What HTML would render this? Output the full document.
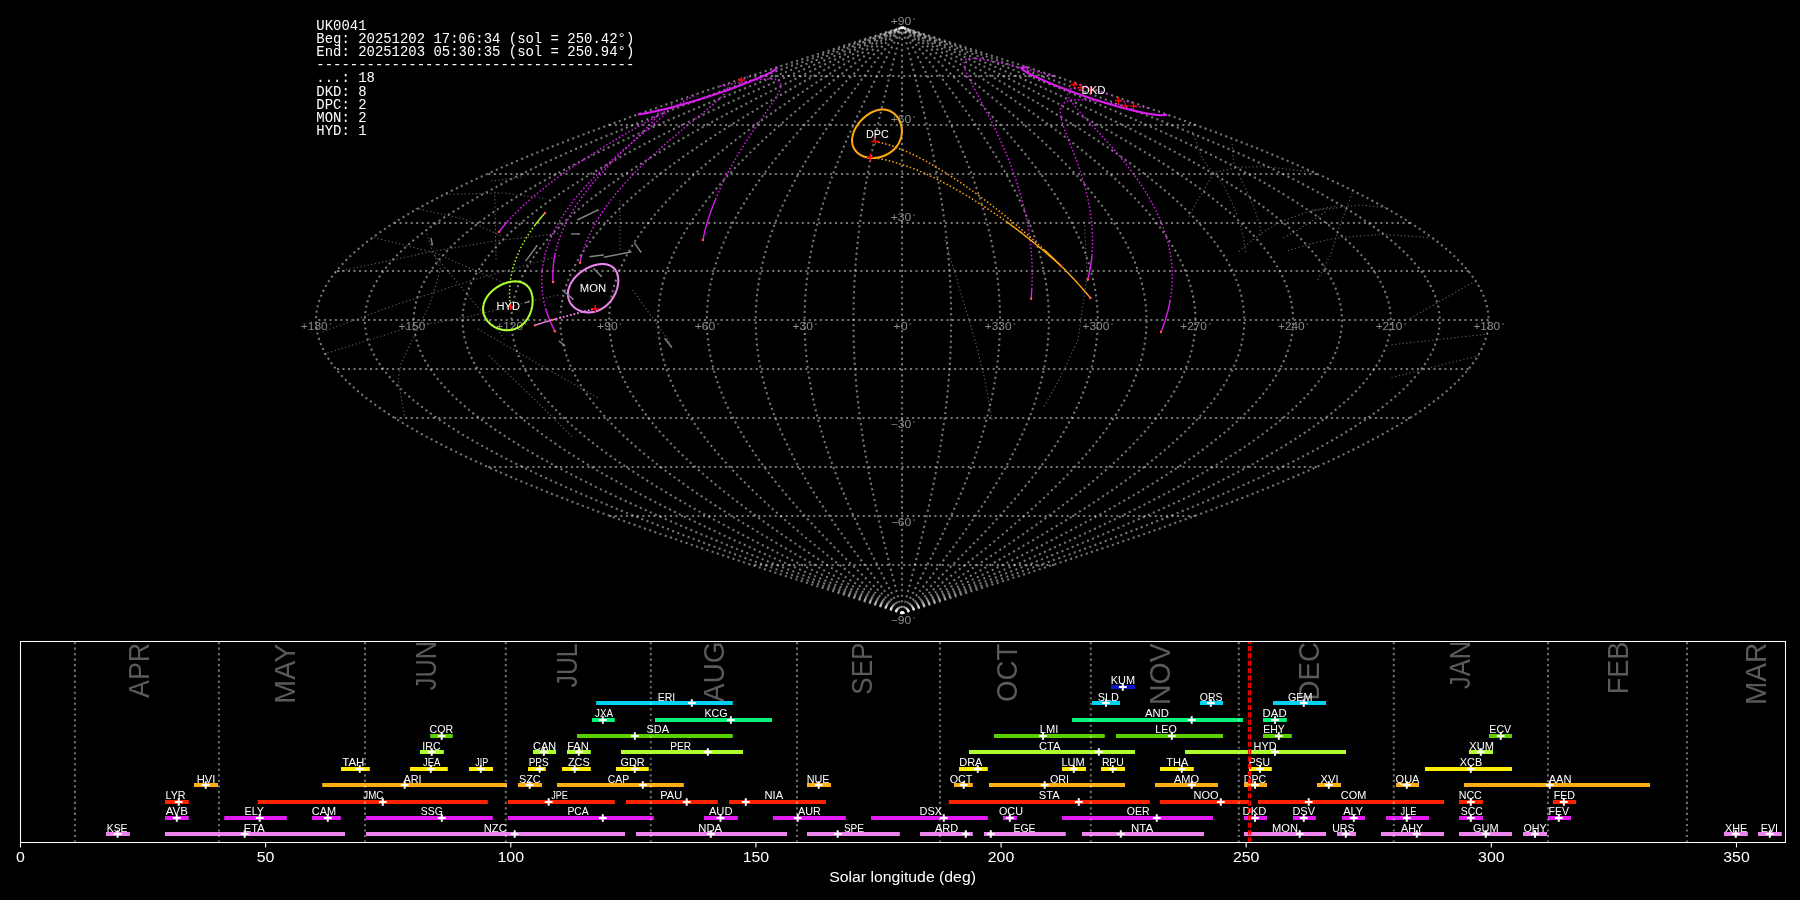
<!DOCTYPE html>
<html><head><meta charset="utf-8"><style>html,body{margin:0;padding:0;background:#000;overflow:hidden;width:1800px;height:900px}svg{display:block;will-change:transform}</style></head><body><svg width="1800" height="900" viewBox="0 0 1800 900"><g fill="none" stroke="#ffffff" stroke-opacity="0.46" stroke-width="2.08" stroke-dasharray="2.08 3.43">
<path d="M902.3 613.38 L907.42 611.75 L912.53 610.12 L917.65 608.49 L922.76 606.87 L927.87 605.24 L932.98 603.61 L938.09 601.98 L943.2 600.35 L948.3 598.72 L953.4 597.1 L958.49 595.47 L963.58 593.84 L968.67 592.21 L973.75 590.58 L978.82 588.95 L983.89 587.32 L988.95 585.7 L994.01 584.07 L999.06 582.44 L1004.1 580.81 L1009.14 579.18 L1014.16 577.55 L1019.18 575.92 L1024.19 574.3 L1029.19 572.67 L1034.18 571.04 L1039.16 569.41 L1044.13 567.78 L1049.09 566.15 L1054.04 564.52 L1058.97 562.9 L1063.9 561.27 L1068.81 559.64 L1073.71 558.01 L1078.59 556.38 L1083.46 554.75 L1088.32 553.13 L1093.17 551.5 L1098 549.87 L1102.81 548.24 L1107.61 546.61 L1112.4 544.98 L1117.17 543.35 L1121.92 541.73 L1126.65 540.1 L1131.37 538.47 L1136.07 536.84 L1140.75 535.21 L1145.42 533.58 L1150.06 531.96 L1154.69 530.33 L1159.3 528.7 L1163.89 527.07 L1168.46 525.44 L1173 523.81 L1177.53 522.18 L1182.04 520.56 L1186.52 518.93 L1190.99 517.3 L1195.43 515.67 L1199.85 514.04 L1204.25 512.41 L1208.62 510.78 L1212.97 509.16 L1217.3 507.53 L1221.6 505.9 L1225.88 504.27 L1230.13 502.64 L1234.36 501.01 L1238.56 499.38 L1242.74 497.76 L1246.89 496.13 L1251.02 494.5 L1255.12 492.87 L1259.19 491.24 L1263.24 489.61 L1267.26 487.99 L1271.25 486.36 L1275.21 484.73 L1279.14 483.1 L1283.05 481.47 L1286.92 479.84 L1290.77 478.21 L1294.58 476.59 L1298.37 474.96 L1302.13 473.33 L1305.85 471.7 L1309.55 470.07 L1313.22 468.44 L1316.85 466.81 L1320.45 465.19 L1324.02 463.56 L1327.56 461.93 L1331.06 460.3 L1334.54 458.67 L1337.98 457.04 L1341.38 455.42 L1344.76 453.79 L1348.1 452.16 L1351.4 450.53 L1354.67 448.9 L1357.91 447.27 L1361.11 445.64 L1364.28 444.02 L1367.41 442.39 L1370.51 440.76 L1373.57 439.13 L1376.59 437.5 L1379.58 435.87 L1382.54 434.25 L1385.45 432.62 L1388.33 430.99 L1391.17 429.36 L1393.98 427.73 L1396.75 426.1 L1399.48 424.47 L1402.17 422.85 L1404.82 421.22 L1407.44 419.59 L1410.02 417.96 L1412.55 416.33 L1415.05 414.7 L1417.52 413.07 L1419.94 411.45 L1422.32 409.82 L1424.66 408.19 L1426.96 406.56 L1429.23 404.93 L1431.45 403.3 L1433.63 401.68 L1435.77 400.05 L1437.88 398.42 L1439.94 396.79 L1441.96 395.16 L1443.93 393.53 L1445.87 391.9 L1447.77 390.28 L1449.62 388.65 L1451.43 387.02 L1453.2 385.39 L1454.93 383.76 L1456.62 382.13 L1458.26 380.5 L1459.87 378.88 L1461.43 377.25 L1462.94 375.62 L1464.42 373.99 L1465.85 372.36 L1467.24 370.73 L1468.58 369.11 L1469.89 367.48 L1471.15 365.85 L1472.36 364.22 L1473.53 362.59 L1474.66 360.96 L1475.75 359.33 L1476.79 357.71 L1477.79 356.08 L1478.74 354.45 L1479.65 352.82 L1480.52 351.19 L1481.34 349.56 L1482.12 347.93 L1482.85 346.31 L1483.54 344.68 L1484.19 343.05 L1484.79 341.42 L1485.35 339.79 L1485.86 338.16 L1486.33 336.54 L1486.75 334.91 L1487.13 333.28 L1487.47 331.65 L1487.76 330.02 L1488 328.39 L1488.2 326.76 L1488.36 325.14 L1488.47 323.51 L1488.54 321.88 L1488.56 320.25 L1488.54 318.62 L1488.47 316.99 L1488.36 315.36 L1488.2 313.74 L1488 312.11 L1487.76 310.48 L1487.47 308.85 L1487.13 307.22 L1486.75 305.59 L1486.33 303.96 L1485.86 302.34 L1485.35 300.71 L1484.79 299.08 L1484.19 297.45 L1483.54 295.82 L1482.85 294.19 L1482.12 292.57 L1481.34 290.94 L1480.52 289.31 L1479.65 287.68 L1478.74 286.05 L1477.79 284.42 L1476.79 282.79 L1475.75 281.17 L1474.66 279.54 L1473.53 277.91 L1472.36 276.28 L1471.15 274.65 L1469.89 273.02 L1468.58 271.39 L1467.24 269.77 L1465.85 268.14 L1464.42 266.51 L1462.94 264.88 L1461.43 263.25 L1459.87 261.62 L1458.26 260 L1456.62 258.37 L1454.93 256.74 L1453.2 255.11 L1451.43 253.48 L1449.62 251.85 L1447.77 250.22 L1445.87 248.6 L1443.93 246.97 L1441.96 245.34 L1439.94 243.71 L1437.88 242.08 L1435.77 240.45 L1433.63 238.82 L1431.45 237.2 L1429.23 235.57 L1426.96 233.94 L1424.66 232.31 L1422.32 230.68 L1419.94 229.05 L1417.52 227.43 L1415.05 225.8 L1412.55 224.17 L1410.02 222.54 L1407.44 220.91 L1404.82 219.28 L1402.17 217.65 L1399.48 216.03 L1396.75 214.4 L1393.98 212.77 L1391.17 211.14 L1388.33 209.51 L1385.45 207.88 L1382.54 206.25 L1379.58 204.63 L1376.59 203 L1373.57 201.37 L1370.51 199.74 L1367.41 198.11 L1364.28 196.48 L1361.11 194.86 L1357.91 193.23 L1354.67 191.6 L1351.4 189.97 L1348.1 188.34 L1344.76 186.71 L1341.38 185.08 L1337.98 183.46 L1334.54 181.83 L1331.06 180.2 L1327.56 178.57 L1324.02 176.94 L1320.45 175.31 L1316.85 173.69 L1313.22 172.06 L1309.55 170.43 L1305.85 168.8 L1302.13 167.17 L1298.37 165.54 L1294.58 163.91 L1290.77 162.29 L1286.92 160.66 L1283.05 159.03 L1279.14 157.4 L1275.21 155.77 L1271.25 154.14 L1267.26 152.51 L1263.24 150.89 L1259.19 149.26 L1255.12 147.63 L1251.02 146 L1246.89 144.37 L1242.74 142.74 L1238.56 141.11 L1234.36 139.49 L1230.13 137.86 L1225.88 136.23 L1221.6 134.6 L1217.3 132.97 L1212.97 131.34 L1208.62 129.72 L1204.25 128.09 L1199.85 126.46 L1195.43 124.83 L1190.99 123.2 L1186.52 121.57 L1182.04 119.94 L1177.53 118.32 L1173 116.69 L1168.46 115.06 L1163.89 113.43 L1159.3 111.8 L1154.69 110.17 L1150.06 108.54 L1145.42 106.92 L1140.75 105.29 L1136.07 103.66 L1131.37 102.03 L1126.65 100.4 L1121.92 98.77 L1117.17 97.15 L1112.4 95.52 L1107.61 93.89 L1102.81 92.26 L1098 90.63 L1093.17 89 L1088.32 87.37 L1083.46 85.75 L1078.59 84.12 L1073.71 82.49 L1068.81 80.86 L1063.9 79.23 L1058.97 77.6 L1054.04 75.97 L1049.09 74.35 L1044.13 72.72 L1039.16 71.09 L1034.18 69.46 L1029.19 67.83 L1024.19 66.2 L1019.18 64.58 L1014.16 62.95 L1009.14 61.32 L1004.1 59.69 L999.06 58.06 L994.01 56.43 L988.95 54.8 L983.89 53.18 L978.82 51.55 L973.75 49.92 L968.67 48.29 L963.58 46.66 L958.49 45.03 L953.4 43.4 L948.3 41.78 L943.2 40.15 L938.09 38.52 L932.98 36.89 L927.87 35.26 L922.76 33.63 L917.65 32.01 L912.53 30.38 L907.42 28.75 L902.3 27.12"/>
<path d="M902.3 613.38 L906.99 611.75 L911.68 610.12 L916.37 608.49 L921.06 606.87 L925.74 605.24 L930.43 603.61 L935.11 601.98 L939.79 600.35 L944.46 598.72 L949.14 597.1 L953.81 595.47 L958.47 593.84 L963.14 592.21 L967.79 590.58 L972.45 588.95 L977.09 587.32 L981.73 585.7 L986.37 584.07 L991 582.44 L995.62 580.81 L1000.23 579.18 L1004.84 577.55 L1009.44 575.92 L1014.03 574.3 L1018.62 572.67 L1023.19 571.04 L1027.75 569.41 L1032.31 567.78 L1036.86 566.15 L1041.39 564.52 L1045.92 562.9 L1050.43 561.27 L1054.93 559.64 L1059.42 558.01 L1063.9 556.38 L1068.37 554.75 L1072.82 553.13 L1077.26 551.5 L1081.69 549.87 L1086.1 548.24 L1090.5 546.61 L1094.89 544.98 L1099.26 543.35 L1103.62 541.73 L1107.96 540.1 L1112.28 538.47 L1116.59 536.84 L1120.88 535.21 L1125.16 533.58 L1129.42 531.96 L1133.66 530.33 L1137.88 528.7 L1142.09 527.07 L1146.28 525.44 L1150.45 523.81 L1154.6 522.18 L1158.73 520.56 L1162.84 518.93 L1166.93 517.3 L1171 515.67 L1175.05 514.04 L1179.08 512.41 L1183.09 510.78 L1187.08 509.16 L1191.05 507.53 L1194.99 505.9 L1198.91 504.27 L1202.81 502.64 L1206.69 501.01 L1210.54 499.38 L1214.37 497.76 L1218.18 496.13 L1221.96 494.5 L1225.72 492.87 L1229.45 491.24 L1233.16 489.61 L1236.84 487.99 L1240.5 486.36 L1244.13 484.73 L1247.74 483.1 L1251.32 481.47 L1254.87 479.84 L1258.4 478.21 L1261.89 476.59 L1265.37 474.96 L1268.81 473.33 L1272.23 471.7 L1275.61 470.07 L1278.97 468.44 L1282.3 466.81 L1285.6 465.19 L1288.88 463.56 L1292.12 461.93 L1295.33 460.3 L1298.52 458.67 L1301.67 457.04 L1304.79 455.42 L1307.88 453.79 L1310.95 452.16 L1313.98 450.53 L1316.97 448.9 L1319.94 447.27 L1322.88 445.64 L1325.78 444.02 L1328.65 442.39 L1331.49 440.76 L1334.3 439.13 L1337.07 437.5 L1339.81 435.87 L1342.52 434.25 L1345.19 432.62 L1347.83 430.99 L1350.43 429.36 L1353.01 427.73 L1355.54 426.1 L1358.05 424.47 L1360.51 422.85 L1362.95 421.22 L1365.34 419.59 L1367.71 417.96 L1370.03 416.33 L1372.33 414.7 L1374.58 413.07 L1376.8 411.45 L1378.98 409.82 L1381.13 408.19 L1383.24 406.56 L1385.32 404.93 L1387.35 403.3 L1389.35 401.68 L1391.32 400.05 L1393.24 398.42 L1395.13 396.79 L1396.98 395.16 L1398.8 393.53 L1400.57 391.9 L1402.31 390.28 L1404.01 388.65 L1405.67 387.02 L1407.3 385.39 L1408.88 383.76 L1410.43 382.13 L1411.93 380.5 L1413.4 378.88 L1414.83 377.25 L1416.22 375.62 L1417.57 373.99 L1418.89 372.36 L1420.16 370.73 L1421.39 369.11 L1422.59 367.48 L1423.74 365.85 L1424.86 364.22 L1425.93 362.59 L1426.97 360.96 L1427.96 359.33 L1428.92 357.71 L1429.83 356.08 L1430.71 354.45 L1431.54 352.82 L1432.33 351.19 L1433.09 349.56 L1433.8 347.93 L1434.48 346.31 L1435.11 344.68 L1435.7 343.05 L1436.25 341.42 L1436.76 339.79 L1437.23 338.16 L1437.66 336.54 L1438.05 334.91 L1438.4 333.28 L1438.7 331.65 L1438.97 330.02 L1439.19 328.39 L1439.38 326.76 L1439.52 325.14 L1439.62 323.51 L1439.68 321.88 L1439.7 320.25 L1439.68 318.62 L1439.62 316.99 L1439.52 315.36 L1439.38 313.74 L1439.19 312.11 L1438.97 310.48 L1438.7 308.85 L1438.4 307.22 L1438.05 305.59 L1437.66 303.96 L1437.23 302.34 L1436.76 300.71 L1436.25 299.08 L1435.7 297.45 L1435.11 295.82 L1434.48 294.19 L1433.8 292.57 L1433.09 290.94 L1432.33 289.31 L1431.54 287.68 L1430.71 286.05 L1429.83 284.42 L1428.92 282.79 L1427.96 281.17 L1426.97 279.54 L1425.93 277.91 L1424.86 276.28 L1423.74 274.65 L1422.59 273.02 L1421.39 271.39 L1420.16 269.77 L1418.89 268.14 L1417.57 266.51 L1416.22 264.88 L1414.83 263.25 L1413.4 261.62 L1411.93 260 L1410.43 258.37 L1408.88 256.74 L1407.3 255.11 L1405.67 253.48 L1404.01 251.85 L1402.31 250.22 L1400.57 248.6 L1398.8 246.97 L1396.98 245.34 L1395.13 243.71 L1393.24 242.08 L1391.32 240.45 L1389.35 238.82 L1387.35 237.2 L1385.32 235.57 L1383.24 233.94 L1381.13 232.31 L1378.98 230.68 L1376.8 229.05 L1374.58 227.43 L1372.33 225.8 L1370.03 224.17 L1367.71 222.54 L1365.34 220.91 L1362.95 219.28 L1360.51 217.65 L1358.05 216.03 L1355.54 214.4 L1353.01 212.77 L1350.43 211.14 L1347.83 209.51 L1345.19 207.88 L1342.52 206.25 L1339.81 204.63 L1337.07 203 L1334.3 201.37 L1331.49 199.74 L1328.65 198.11 L1325.78 196.48 L1322.88 194.86 L1319.94 193.23 L1316.97 191.6 L1313.98 189.97 L1310.95 188.34 L1307.88 186.71 L1304.79 185.08 L1301.67 183.46 L1298.52 181.83 L1295.33 180.2 L1292.12 178.57 L1288.88 176.94 L1285.6 175.31 L1282.3 173.69 L1278.97 172.06 L1275.61 170.43 L1272.23 168.8 L1268.81 167.17 L1265.37 165.54 L1261.89 163.91 L1258.4 162.29 L1254.87 160.66 L1251.32 159.03 L1247.74 157.4 L1244.13 155.77 L1240.5 154.14 L1236.84 152.51 L1233.16 150.89 L1229.45 149.26 L1225.72 147.63 L1221.96 146 L1218.18 144.37 L1214.37 142.74 L1210.54 141.11 L1206.69 139.49 L1202.81 137.86 L1198.91 136.23 L1194.99 134.6 L1191.05 132.97 L1187.08 131.34 L1183.09 129.72 L1179.08 128.09 L1175.05 126.46 L1171 124.83 L1166.93 123.2 L1162.84 121.57 L1158.73 119.94 L1154.6 118.32 L1150.45 116.69 L1146.28 115.06 L1142.09 113.43 L1137.88 111.8 L1133.66 110.17 L1129.42 108.54 L1125.16 106.92 L1120.88 105.29 L1116.59 103.66 L1112.28 102.03 L1107.96 100.4 L1103.62 98.77 L1099.26 97.15 L1094.89 95.52 L1090.5 93.89 L1086.1 92.26 L1081.69 90.63 L1077.26 89 L1072.82 87.37 L1068.37 85.75 L1063.9 84.12 L1059.42 82.49 L1054.93 80.86 L1050.43 79.23 L1045.92 77.6 L1041.39 75.97 L1036.86 74.35 L1032.31 72.72 L1027.75 71.09 L1023.19 69.46 L1018.62 67.83 L1014.03 66.2 L1009.44 64.58 L1004.84 62.95 L1000.23 61.32 L995.62 59.69 L991 58.06 L986.37 56.43 L981.73 54.8 L977.09 53.18 L972.45 51.55 L967.79 49.92 L963.14 48.29 L958.47 46.66 L953.81 45.03 L949.14 43.4 L944.46 41.78 L939.79 40.15 L935.11 38.52 L930.43 36.89 L925.74 35.26 L921.06 33.63 L916.37 32.01 L911.68 30.38 L906.99 28.75 L902.3 27.12"/>
<path d="M902.3 613.38 L906.56 611.75 L910.83 610.12 L915.09 608.49 L919.35 606.87 L923.61 605.24 L927.87 603.61 L932.13 601.98 L936.38 600.35 L940.63 598.72 L944.88 597.1 L949.13 595.47 L953.37 593.84 L957.61 592.21 L961.84 590.58 L966.07 588.95 L970.29 587.32 L974.51 585.7 L978.73 584.07 L982.93 582.44 L987.14 580.81 L991.33 579.18 L995.52 577.55 L999.7 575.92 L1003.88 574.3 L1008.04 572.67 L1012.2 571.04 L1016.35 569.41 L1020.49 567.78 L1024.62 566.15 L1028.75 564.52 L1032.86 562.9 L1036.96 561.27 L1041.06 559.64 L1045.14 558.01 L1049.21 556.38 L1053.27 554.75 L1057.32 553.13 L1061.36 551.5 L1065.38 549.87 L1069.39 548.24 L1073.39 546.61 L1077.38 544.98 L1081.35 543.35 L1085.31 541.73 L1089.26 540.1 L1093.19 538.47 L1097.11 536.84 L1101.01 535.21 L1104.9 533.58 L1108.77 531.96 L1112.63 530.33 L1116.47 528.7 L1120.29 527.07 L1124.1 525.44 L1127.89 523.81 L1131.66 522.18 L1135.42 520.56 L1139.15 518.93 L1142.87 517.3 L1146.58 515.67 L1150.26 514.04 L1153.92 512.41 L1157.57 510.78 L1161.19 509.16 L1164.8 507.53 L1168.38 505.9 L1171.95 504.27 L1175.49 502.64 L1179.02 501.01 L1182.52 499.38 L1186 497.76 L1189.46 496.13 L1192.9 494.5 L1196.32 492.87 L1199.71 491.24 L1203.08 489.61 L1206.43 487.99 L1209.75 486.36 L1213.06 484.73 L1216.33 483.1 L1219.59 481.47 L1222.82 479.84 L1226.02 478.21 L1229.2 476.59 L1232.36 474.96 L1235.49 473.33 L1238.6 471.7 L1241.68 470.07 L1244.73 468.44 L1247.76 466.81 L1250.76 465.19 L1253.73 463.56 L1256.68 461.93 L1259.6 460.3 L1262.5 458.67 L1265.36 457.04 L1268.2 455.42 L1271.01 453.79 L1273.8 452.16 L1276.55 450.53 L1279.28 448.9 L1281.97 447.27 L1284.64 445.64 L1287.28 444.02 L1289.89 442.39 L1292.47 440.76 L1295.02 439.13 L1297.55 437.5 L1300.04 435.87 L1302.5 434.25 L1304.93 432.62 L1307.33 430.99 L1309.69 429.36 L1312.03 427.73 L1314.34 426.1 L1316.61 424.47 L1318.86 422.85 L1321.07 421.22 L1323.25 419.59 L1325.4 417.96 L1327.51 416.33 L1329.6 414.7 L1331.65 413.07 L1333.66 411.45 L1335.65 409.82 L1337.6 408.19 L1339.52 406.56 L1341.41 404.93 L1343.26 403.3 L1345.08 401.68 L1346.86 400.05 L1348.61 398.42 L1350.33 396.79 L1352.01 395.16 L1353.66 393.53 L1355.28 391.9 L1356.86 390.28 L1358.4 388.65 L1359.91 387.02 L1361.39 385.39 L1362.83 383.76 L1364.23 382.13 L1365.6 380.5 L1366.94 378.88 L1368.24 377.25 L1369.5 375.62 L1370.73 373.99 L1371.92 372.36 L1373.08 370.73 L1374.2 369.11 L1375.29 367.48 L1376.34 365.85 L1377.35 364.22 L1378.33 362.59 L1379.27 360.96 L1380.17 359.33 L1381.04 357.71 L1381.87 356.08 L1382.67 354.45 L1383.43 352.82 L1384.15 351.19 L1384.84 349.56 L1385.48 347.93 L1386.1 346.31 L1386.67 344.68 L1387.21 343.05 L1387.71 341.42 L1388.17 339.79 L1388.6 338.16 L1388.99 336.54 L1389.34 334.91 L1389.66 333.28 L1389.94 331.65 L1390.18 330.02 L1390.39 328.39 L1390.55 326.76 L1390.68 325.14 L1390.78 323.51 L1390.83 321.88 L1390.85 320.25 L1390.83 318.62 L1390.78 316.99 L1390.68 315.36 L1390.55 313.74 L1390.39 312.11 L1390.18 310.48 L1389.94 308.85 L1389.66 307.22 L1389.34 305.59 L1388.99 303.96 L1388.6 302.34 L1388.17 300.71 L1387.71 299.08 L1387.21 297.45 L1386.67 295.82 L1386.1 294.19 L1385.48 292.57 L1384.84 290.94 L1384.15 289.31 L1383.43 287.68 L1382.67 286.05 L1381.87 284.42 L1381.04 282.79 L1380.17 281.17 L1379.27 279.54 L1378.33 277.91 L1377.35 276.28 L1376.34 274.65 L1375.29 273.02 L1374.2 271.39 L1373.08 269.77 L1371.92 268.14 L1370.73 266.51 L1369.5 264.88 L1368.24 263.25 L1366.94 261.62 L1365.6 260 L1364.23 258.37 L1362.83 256.74 L1361.39 255.11 L1359.91 253.48 L1358.4 251.85 L1356.86 250.22 L1355.28 248.6 L1353.66 246.97 L1352.01 245.34 L1350.33 243.71 L1348.61 242.08 L1346.86 240.45 L1345.08 238.82 L1343.26 237.2 L1341.41 235.57 L1339.52 233.94 L1337.6 232.31 L1335.65 230.68 L1333.66 229.05 L1331.65 227.43 L1329.6 225.8 L1327.51 224.17 L1325.4 222.54 L1323.25 220.91 L1321.07 219.28 L1318.86 217.65 L1316.61 216.03 L1314.34 214.4 L1312.03 212.77 L1309.69 211.14 L1307.33 209.51 L1304.93 207.88 L1302.5 206.25 L1300.04 204.63 L1297.55 203 L1295.02 201.37 L1292.47 199.74 L1289.89 198.11 L1287.28 196.48 L1284.64 194.86 L1281.97 193.23 L1279.28 191.6 L1276.55 189.97 L1273.8 188.34 L1271.01 186.71 L1268.2 185.08 L1265.36 183.46 L1262.5 181.83 L1259.6 180.2 L1256.68 178.57 L1253.73 176.94 L1250.76 175.31 L1247.76 173.69 L1244.73 172.06 L1241.68 170.43 L1238.6 168.8 L1235.49 167.17 L1232.36 165.54 L1229.2 163.91 L1226.02 162.29 L1222.82 160.66 L1219.59 159.03 L1216.33 157.4 L1213.06 155.77 L1209.75 154.14 L1206.43 152.51 L1203.08 150.89 L1199.71 149.26 L1196.32 147.63 L1192.9 146 L1189.46 144.37 L1186 142.74 L1182.52 141.11 L1179.02 139.49 L1175.49 137.86 L1171.95 136.23 L1168.38 134.6 L1164.8 132.97 L1161.19 131.34 L1157.57 129.72 L1153.92 128.09 L1150.26 126.46 L1146.58 124.83 L1142.87 123.2 L1139.15 121.57 L1135.42 119.94 L1131.66 118.32 L1127.89 116.69 L1124.1 115.06 L1120.29 113.43 L1116.47 111.8 L1112.63 110.17 L1108.77 108.54 L1104.9 106.92 L1101.01 105.29 L1097.11 103.66 L1093.19 102.03 L1089.26 100.4 L1085.31 98.77 L1081.35 97.15 L1077.38 95.52 L1073.39 93.89 L1069.39 92.26 L1065.38 90.63 L1061.36 89 L1057.32 87.37 L1053.27 85.75 L1049.21 84.12 L1045.14 82.49 L1041.06 80.86 L1036.96 79.23 L1032.86 77.6 L1028.75 75.97 L1024.62 74.35 L1020.49 72.72 L1016.35 71.09 L1012.2 69.46 L1008.04 67.83 L1003.88 66.2 L999.7 64.58 L995.52 62.95 L991.33 61.32 L987.14 59.69 L982.93 58.06 L978.73 56.43 L974.51 54.8 L970.29 53.18 L966.07 51.55 L961.84 49.92 L957.61 48.29 L953.37 46.66 L949.13 45.03 L944.88 43.4 L940.63 41.78 L936.38 40.15 L932.13 38.52 L927.87 36.89 L923.61 35.26 L919.35 33.63 L915.09 32.01 L910.83 30.38 L906.56 28.75 L902.3 27.12"/>
<path d="M902.3 613.38 L906.14 611.75 L909.97 610.12 L913.81 608.49 L917.65 606.87 L921.48 605.24 L925.31 603.61 L929.14 601.98 L932.97 600.35 L936.8 598.72 L940.62 597.1 L944.44 595.47 L948.26 593.84 L952.07 592.21 L955.89 590.58 L959.69 588.95 L963.49 587.32 L967.29 585.7 L971.08 584.07 L974.87 582.44 L978.65 580.81 L982.43 579.18 L986.2 577.55 L989.96 575.92 L993.72 574.3 L997.47 572.67 L1001.21 571.04 L1004.94 569.41 L1008.67 567.78 L1012.39 566.15 L1016.1 564.52 L1019.8 562.9 L1023.5 561.27 L1027.18 559.64 L1030.85 558.01 L1034.52 556.38 L1038.17 554.75 L1041.82 553.13 L1045.45 551.5 L1049.07 549.87 L1052.68 548.24 L1056.28 546.61 L1059.87 544.98 L1063.45 543.35 L1067.01 541.73 L1070.56 540.1 L1074.1 538.47 L1077.63 536.84 L1081.14 535.21 L1084.64 533.58 L1088.12 531.96 L1091.59 530.33 L1095.05 528.7 L1098.49 527.07 L1101.92 525.44 L1105.33 523.81 L1108.72 522.18 L1112.1 520.56 L1115.47 518.93 L1118.82 517.3 L1122.15 515.67 L1125.46 514.04 L1128.76 512.41 L1132.04 510.78 L1135.3 509.16 L1138.55 507.53 L1141.78 505.9 L1144.98 504.27 L1148.17 502.64 L1151.35 501.01 L1154.5 499.38 L1157.63 497.76 L1160.75 496.13 L1163.84 494.5 L1166.92 492.87 L1169.97 491.24 L1173 489.61 L1176.02 487.99 L1179.01 486.36 L1181.98 484.73 L1184.93 483.1 L1187.86 481.47 L1190.77 479.84 L1193.65 478.21 L1196.51 476.59 L1199.35 474.96 L1202.17 473.33 L1204.97 471.7 L1207.74 470.07 L1210.49 468.44 L1213.21 466.81 L1215.91 465.19 L1218.59 463.56 L1221.24 461.93 L1223.87 460.3 L1226.48 458.67 L1229.06 457.04 L1231.61 455.42 L1234.14 453.79 L1236.65 452.16 L1239.13 450.53 L1241.58 448.9 L1244.01 447.27 L1246.41 445.64 L1248.78 444.02 L1251.13 442.39 L1253.46 440.76 L1255.75 439.13 L1258.02 437.5 L1260.26 435.87 L1262.48 434.25 L1264.66 432.62 L1266.82 430.99 L1268.96 429.36 L1271.06 427.73 L1273.14 426.1 L1275.18 424.47 L1277.2 422.85 L1279.19 421.22 L1281.15 419.59 L1283.09 417.96 L1284.99 416.33 L1286.87 414.7 L1288.71 413.07 L1290.53 411.45 L1292.31 409.82 L1294.07 408.19 L1295.8 406.56 L1297.5 404.93 L1299.16 403.3 L1300.8 401.68 L1302.41 400.05 L1303.98 398.42 L1305.53 396.79 L1307.04 395.16 L1308.53 393.53 L1309.98 391.9 L1311.4 390.28 L1312.79 388.65 L1314.15 387.02 L1315.48 385.39 L1316.77 383.76 L1318.04 382.13 L1319.27 380.5 L1320.47 378.88 L1321.64 377.25 L1322.78 375.62 L1323.89 373.99 L1324.96 372.36 L1326 370.73 L1327.01 369.11 L1327.99 367.48 L1328.93 365.85 L1329.85 364.22 L1330.73 362.59 L1331.57 360.96 L1332.39 359.33 L1333.17 357.71 L1333.92 356.08 L1334.63 354.45 L1335.32 352.82 L1335.96 351.19 L1336.58 349.56 L1337.17 347.93 L1337.72 346.31 L1338.23 344.68 L1338.72 343.05 L1339.17 341.42 L1339.59 339.79 L1339.97 338.16 L1340.32 336.54 L1340.64 334.91 L1340.92 333.28 L1341.17 331.65 L1341.39 330.02 L1341.58 328.39 L1341.73 326.76 L1341.84 325.14 L1341.93 323.51 L1341.98 321.88 L1341.99 320.25 L1341.98 318.62 L1341.93 316.99 L1341.84 315.36 L1341.73 313.74 L1341.58 312.11 L1341.39 310.48 L1341.17 308.85 L1340.92 307.22 L1340.64 305.59 L1340.32 303.96 L1339.97 302.34 L1339.59 300.71 L1339.17 299.08 L1338.72 297.45 L1338.23 295.82 L1337.72 294.19 L1337.17 292.57 L1336.58 290.94 L1335.96 289.31 L1335.32 287.68 L1334.63 286.05 L1333.92 284.42 L1333.17 282.79 L1332.39 281.17 L1331.57 279.54 L1330.73 277.91 L1329.85 276.28 L1328.93 274.65 L1327.99 273.02 L1327.01 271.39 L1326 269.77 L1324.96 268.14 L1323.89 266.51 L1322.78 264.88 L1321.64 263.25 L1320.47 261.62 L1319.27 260 L1318.04 258.37 L1316.77 256.74 L1315.48 255.11 L1314.15 253.48 L1312.79 251.85 L1311.4 250.22 L1309.98 248.6 L1308.53 246.97 L1307.04 245.34 L1305.53 243.71 L1303.98 242.08 L1302.41 240.45 L1300.8 238.82 L1299.16 237.2 L1297.5 235.57 L1295.8 233.94 L1294.07 232.31 L1292.31 230.68 L1290.53 229.05 L1288.71 227.43 L1286.87 225.8 L1284.99 224.17 L1283.09 222.54 L1281.15 220.91 L1279.19 219.28 L1277.2 217.65 L1275.18 216.03 L1273.14 214.4 L1271.06 212.77 L1268.96 211.14 L1266.82 209.51 L1264.66 207.88 L1262.48 206.25 L1260.26 204.63 L1258.02 203 L1255.75 201.37 L1253.46 199.74 L1251.13 198.11 L1248.78 196.48 L1246.41 194.86 L1244.01 193.23 L1241.58 191.6 L1239.13 189.97 L1236.65 188.34 L1234.14 186.71 L1231.61 185.08 L1229.06 183.46 L1226.48 181.83 L1223.87 180.2 L1221.24 178.57 L1218.59 176.94 L1215.91 175.31 L1213.21 173.69 L1210.49 172.06 L1207.74 170.43 L1204.97 168.8 L1202.17 167.17 L1199.35 165.54 L1196.51 163.91 L1193.65 162.29 L1190.77 160.66 L1187.86 159.03 L1184.93 157.4 L1181.98 155.77 L1179.01 154.14 L1176.02 152.51 L1173 150.89 L1169.97 149.26 L1166.92 147.63 L1163.84 146 L1160.75 144.37 L1157.63 142.74 L1154.5 141.11 L1151.35 139.49 L1148.17 137.86 L1144.98 136.23 L1141.78 134.6 L1138.55 132.97 L1135.3 131.34 L1132.04 129.72 L1128.76 128.09 L1125.46 126.46 L1122.15 124.83 L1118.82 123.2 L1115.47 121.57 L1112.1 119.94 L1108.72 118.32 L1105.33 116.69 L1101.92 115.06 L1098.49 113.43 L1095.05 111.8 L1091.59 110.17 L1088.12 108.54 L1084.64 106.92 L1081.14 105.29 L1077.63 103.66 L1074.1 102.03 L1070.56 100.4 L1067.01 98.77 L1063.45 97.15 L1059.87 95.52 L1056.28 93.89 L1052.68 92.26 L1049.07 90.63 L1045.45 89 L1041.82 87.37 L1038.17 85.75 L1034.52 84.12 L1030.85 82.49 L1027.18 80.86 L1023.5 79.23 L1019.8 77.6 L1016.1 75.97 L1012.39 74.35 L1008.67 72.72 L1004.94 71.09 L1001.21 69.46 L997.47 67.83 L993.72 66.2 L989.96 64.58 L986.2 62.95 L982.43 61.32 L978.65 59.69 L974.87 58.06 L971.08 56.43 L967.29 54.8 L963.49 53.18 L959.69 51.55 L955.89 49.92 L952.07 48.29 L948.26 46.66 L944.44 45.03 L940.62 43.4 L936.8 41.78 L932.97 40.15 L929.14 38.52 L925.31 36.89 L921.48 35.26 L917.65 33.63 L913.81 32.01 L909.97 30.38 L906.14 28.75 L902.3 27.12"/>
<path d="M902.3 613.38 L905.71 611.75 L909.12 610.12 L912.53 608.49 L915.94 606.87 L919.35 605.24 L922.75 603.61 L926.16 601.98 L929.56 600.35 L932.96 598.72 L936.36 597.1 L939.76 595.47 L943.15 593.84 L946.54 592.21 L949.93 590.58 L953.31 588.95 L956.69 587.32 L960.07 585.7 L963.44 584.07 L966.81 582.44 L970.17 580.81 L973.52 579.18 L976.88 577.55 L980.22 575.92 L983.56 574.3 L986.89 572.67 L990.22 571.04 L993.54 569.41 L996.85 567.78 L1000.16 566.15 L1003.46 564.52 L1006.75 562.9 L1010.03 561.27 L1013.3 559.64 L1016.57 558.01 L1019.83 556.38 L1023.08 554.75 L1026.32 553.13 L1029.55 551.5 L1032.77 549.87 L1035.98 548.24 L1039.18 546.61 L1042.36 544.98 L1045.54 543.35 L1048.71 541.73 L1051.87 540.1 L1055.01 538.47 L1058.15 536.84 L1061.27 535.21 L1064.38 533.58 L1067.48 531.96 L1070.56 530.33 L1073.63 528.7 L1076.69 527.07 L1079.74 525.44 L1082.77 523.81 L1085.79 522.18 L1088.79 520.56 L1091.78 518.93 L1094.76 517.3 L1097.72 515.67 L1100.67 514.04 L1103.6 512.41 L1106.51 510.78 L1109.41 509.16 L1112.3 507.53 L1115.17 505.9 L1118.02 504.27 L1120.85 502.64 L1123.67 501.01 L1126.48 499.38 L1129.26 497.76 L1132.03 496.13 L1134.78 494.5 L1137.51 492.87 L1140.23 491.24 L1142.93 489.61 L1145.6 487.99 L1148.26 486.36 L1150.9 484.73 L1153.53 483.1 L1156.13 481.47 L1158.71 479.84 L1161.28 478.21 L1163.82 476.59 L1166.35 474.96 L1168.85 473.33 L1171.34 471.7 L1173.8 470.07 L1176.24 468.44 L1178.67 466.81 L1181.07 465.19 L1183.45 463.56 L1185.81 461.93 L1188.14 460.3 L1190.46 458.67 L1192.75 457.04 L1195.02 455.42 L1197.27 453.79 L1199.5 452.16 L1201.7 450.53 L1203.88 448.9 L1206.04 447.27 L1208.17 445.64 L1210.29 444.02 L1212.37 442.39 L1214.44 440.76 L1216.48 439.13 L1218.5 437.5 L1220.49 435.87 L1222.46 434.25 L1224.4 432.62 L1226.32 430.99 L1228.22 429.36 L1230.09 427.73 L1231.93 426.1 L1233.75 424.47 L1235.55 422.85 L1237.32 421.22 L1239.06 419.59 L1240.78 417.96 L1242.47 416.33 L1244.14 414.7 L1245.78 413.07 L1247.39 411.45 L1248.98 409.82 L1250.54 408.19 L1252.08 406.56 L1253.58 404.93 L1255.07 403.3 L1256.52 401.68 L1257.95 400.05 L1259.35 398.42 L1260.72 396.79 L1262.07 395.16 L1263.39 393.53 L1264.68 391.9 L1265.94 390.28 L1267.18 388.65 L1268.39 387.02 L1269.57 385.39 L1270.72 383.76 L1271.85 382.13 L1272.94 380.5 L1274.01 378.88 L1275.05 377.25 L1276.06 375.62 L1277.05 373.99 L1278 372.36 L1278.93 370.73 L1279.82 369.11 L1280.69 367.48 L1281.53 365.85 L1282.34 364.22 L1283.12 362.59 L1283.88 360.96 L1284.6 359.33 L1285.29 357.71 L1285.96 356.08 L1286.6 354.45 L1287.2 352.82 L1287.78 351.19 L1288.33 349.56 L1288.85 347.93 L1289.34 346.31 L1289.8 344.68 L1290.23 343.05 L1290.63 341.42 L1291 339.79 L1291.34 338.16 L1291.65 336.54 L1291.94 334.91 L1292.19 333.28 L1292.41 331.65 L1292.6 330.02 L1292.77 328.39 L1292.9 326.76 L1293.01 325.14 L1293.08 323.51 L1293.13 321.88 L1293.14 320.25 L1293.13 318.62 L1293.08 316.99 L1293.01 315.36 L1292.9 313.74 L1292.77 312.11 L1292.6 310.48 L1292.41 308.85 L1292.19 307.22 L1291.94 305.59 L1291.65 303.96 L1291.34 302.34 L1291 300.71 L1290.63 299.08 L1290.23 297.45 L1289.8 295.82 L1289.34 294.19 L1288.85 292.57 L1288.33 290.94 L1287.78 289.31 L1287.2 287.68 L1286.6 286.05 L1285.96 284.42 L1285.29 282.79 L1284.6 281.17 L1283.88 279.54 L1283.12 277.91 L1282.34 276.28 L1281.53 274.65 L1280.69 273.02 L1279.82 271.39 L1278.93 269.77 L1278 268.14 L1277.05 266.51 L1276.06 264.88 L1275.05 263.25 L1274.01 261.62 L1272.94 260 L1271.85 258.37 L1270.72 256.74 L1269.57 255.11 L1268.39 253.48 L1267.18 251.85 L1265.94 250.22 L1264.68 248.6 L1263.39 246.97 L1262.07 245.34 L1260.72 243.71 L1259.35 242.08 L1257.95 240.45 L1256.52 238.82 L1255.07 237.2 L1253.58 235.57 L1252.08 233.94 L1250.54 232.31 L1248.98 230.68 L1247.39 229.05 L1245.78 227.43 L1244.14 225.8 L1242.47 224.17 L1240.78 222.54 L1239.06 220.91 L1237.32 219.28 L1235.55 217.65 L1233.75 216.03 L1231.93 214.4 L1230.09 212.77 L1228.22 211.14 L1226.32 209.51 L1224.4 207.88 L1222.46 206.25 L1220.49 204.63 L1218.5 203 L1216.48 201.37 L1214.44 199.74 L1212.37 198.11 L1210.29 196.48 L1208.17 194.86 L1206.04 193.23 L1203.88 191.6 L1201.7 189.97 L1199.5 188.34 L1197.27 186.71 L1195.02 185.08 L1192.75 183.46 L1190.46 181.83 L1188.14 180.2 L1185.81 178.57 L1183.45 176.94 L1181.07 175.31 L1178.67 173.69 L1176.24 172.06 L1173.8 170.43 L1171.34 168.8 L1168.85 167.17 L1166.35 165.54 L1163.82 163.91 L1161.28 162.29 L1158.71 160.66 L1156.13 159.03 L1153.53 157.4 L1150.9 155.77 L1148.26 154.14 L1145.6 152.51 L1142.93 150.89 L1140.23 149.26 L1137.51 147.63 L1134.78 146 L1132.03 144.37 L1129.26 142.74 L1126.48 141.11 L1123.67 139.49 L1120.85 137.86 L1118.02 136.23 L1115.17 134.6 L1112.3 132.97 L1109.41 131.34 L1106.51 129.72 L1103.6 128.09 L1100.67 126.46 L1097.72 124.83 L1094.76 123.2 L1091.78 121.57 L1088.79 119.94 L1085.79 118.32 L1082.77 116.69 L1079.74 115.06 L1076.69 113.43 L1073.63 111.8 L1070.56 110.17 L1067.48 108.54 L1064.38 106.92 L1061.27 105.29 L1058.15 103.66 L1055.01 102.03 L1051.87 100.4 L1048.71 98.77 L1045.54 97.15 L1042.36 95.52 L1039.18 93.89 L1035.98 92.26 L1032.77 90.63 L1029.55 89 L1026.32 87.37 L1023.08 85.75 L1019.83 84.12 L1016.57 82.49 L1013.3 80.86 L1010.03 79.23 L1006.75 77.6 L1003.46 75.97 L1000.16 74.35 L996.85 72.72 L993.54 71.09 L990.22 69.46 L986.89 67.83 L983.56 66.2 L980.22 64.58 L976.88 62.95 L973.52 61.32 L970.17 59.69 L966.81 58.06 L963.44 56.43 L960.07 54.8 L956.69 53.18 L953.31 51.55 L949.93 49.92 L946.54 48.29 L943.15 46.66 L939.76 45.03 L936.36 43.4 L932.96 41.78 L929.56 40.15 L926.16 38.52 L922.75 36.89 L919.35 35.26 L915.94 33.63 L912.53 32.01 L909.12 30.38 L905.71 28.75 L902.3 27.12"/>
<path d="M902.3 613.38 L905.28 611.75 L908.27 610.12 L911.25 608.49 L914.24 606.87 L917.22 605.24 L920.2 603.61 L923.18 601.98 L926.16 600.35 L929.13 598.72 L932.11 597.1 L935.08 595.47 L938.05 593.84 L941.01 592.21 L943.98 590.58 L946.94 588.95 L949.9 587.32 L952.85 585.7 L955.8 584.07 L958.74 582.44 L961.69 580.81 L964.62 579.18 L967.55 577.55 L970.48 575.92 L973.4 574.3 L976.32 572.67 L979.23 571.04 L982.13 569.41 L985.03 567.78 L987.93 566.15 L990.81 564.52 L993.69 562.9 L996.56 561.27 L999.43 559.64 L1002.29 558.01 L1005.14 556.38 L1007.98 554.75 L1010.81 553.13 L1013.64 551.5 L1016.46 549.87 L1019.27 548.24 L1022.07 546.61 L1024.86 544.98 L1027.64 543.35 L1030.41 541.73 L1033.17 540.1 L1035.92 538.47 L1038.67 536.84 L1041.4 535.21 L1044.12 533.58 L1046.83 531.96 L1049.53 530.33 L1052.22 528.7 L1054.89 527.07 L1057.56 525.44 L1060.21 523.81 L1062.85 522.18 L1065.48 520.56 L1068.1 518.93 L1070.7 517.3 L1073.29 515.67 L1075.87 514.04 L1078.44 512.41 L1080.99 510.78 L1083.52 509.16 L1086.05 507.53 L1088.56 505.9 L1091.05 504.27 L1093.54 502.64 L1096 501.01 L1098.45 499.38 L1100.89 497.76 L1103.31 496.13 L1105.72 494.5 L1108.11 492.87 L1110.49 491.24 L1112.85 489.61 L1115.19 487.99 L1117.52 486.36 L1119.83 484.73 L1122.12 483.1 L1124.4 481.47 L1126.66 479.84 L1128.91 478.21 L1131.13 476.59 L1133.34 474.96 L1135.53 473.33 L1137.71 471.7 L1139.86 470.07 L1142 468.44 L1144.12 466.81 L1146.22 465.19 L1148.3 463.56 L1150.37 461.93 L1152.41 460.3 L1154.44 458.67 L1156.44 457.04 L1158.43 455.42 L1160.4 453.79 L1162.35 452.16 L1164.28 450.53 L1166.18 448.9 L1168.07 447.27 L1169.94 445.64 L1171.79 444.02 L1173.61 442.39 L1175.42 440.76 L1177.21 439.13 L1178.97 437.5 L1180.72 435.87 L1182.44 434.25 L1184.14 432.62 L1185.82 430.99 L1187.48 429.36 L1189.11 427.73 L1190.73 426.1 L1192.32 424.47 L1193.89 422.85 L1195.44 421.22 L1196.96 419.59 L1198.47 417.96 L1199.95 416.33 L1201.41 414.7 L1202.84 413.07 L1204.25 411.45 L1205.64 409.82 L1207.01 408.19 L1208.35 406.56 L1209.67 404.93 L1210.97 403.3 L1212.24 401.68 L1213.49 400.05 L1214.72 398.42 L1215.92 396.79 L1217.1 395.16 L1218.25 393.53 L1219.38 391.9 L1220.49 390.28 L1221.57 388.65 L1222.63 387.02 L1223.66 385.39 L1224.67 383.76 L1225.65 382.13 L1226.61 380.5 L1227.55 378.88 L1228.46 377.25 L1229.34 375.62 L1230.2 373.99 L1231.04 372.36 L1231.85 370.73 L1232.63 369.11 L1233.39 367.48 L1234.13 365.85 L1234.84 364.22 L1235.52 362.59 L1236.18 360.96 L1236.81 359.33 L1237.42 357.71 L1238 356.08 L1238.56 354.45 L1239.09 352.82 L1239.59 351.19 L1240.07 349.56 L1240.53 347.93 L1240.96 346.31 L1241.36 344.68 L1241.74 343.05 L1242.09 341.42 L1242.41 339.79 L1242.71 338.16 L1242.98 336.54 L1243.23 334.91 L1243.45 333.28 L1243.65 331.65 L1243.82 330.02 L1243.96 328.39 L1244.08 326.76 L1244.17 325.14 L1244.23 323.51 L1244.27 321.88 L1244.28 320.25 L1244.27 318.62 L1244.23 316.99 L1244.17 315.36 L1244.08 313.74 L1243.96 312.11 L1243.82 310.48 L1243.65 308.85 L1243.45 307.22 L1243.23 305.59 L1242.98 303.96 L1242.71 302.34 L1242.41 300.71 L1242.09 299.08 L1241.74 297.45 L1241.36 295.82 L1240.96 294.19 L1240.53 292.57 L1240.07 290.94 L1239.59 289.31 L1239.09 287.68 L1238.56 286.05 L1238 284.42 L1237.42 282.79 L1236.81 281.17 L1236.18 279.54 L1235.52 277.91 L1234.84 276.28 L1234.13 274.65 L1233.39 273.02 L1232.63 271.39 L1231.85 269.77 L1231.04 268.14 L1230.2 266.51 L1229.34 264.88 L1228.46 263.25 L1227.55 261.62 L1226.61 260 L1225.65 258.37 L1224.67 256.74 L1223.66 255.11 L1222.63 253.48 L1221.57 251.85 L1220.49 250.22 L1219.38 248.6 L1218.25 246.97 L1217.1 245.34 L1215.92 243.71 L1214.72 242.08 L1213.49 240.45 L1212.24 238.82 L1210.97 237.2 L1209.67 235.57 L1208.35 233.94 L1207.01 232.31 L1205.64 230.68 L1204.25 229.05 L1202.84 227.43 L1201.41 225.8 L1199.95 224.17 L1198.47 222.54 L1196.96 220.91 L1195.44 219.28 L1193.89 217.65 L1192.32 216.03 L1190.73 214.4 L1189.11 212.77 L1187.48 211.14 L1185.82 209.51 L1184.14 207.88 L1182.44 206.25 L1180.72 204.63 L1178.97 203 L1177.21 201.37 L1175.42 199.74 L1173.61 198.11 L1171.79 196.48 L1169.94 194.86 L1168.07 193.23 L1166.18 191.6 L1164.28 189.97 L1162.35 188.34 L1160.4 186.71 L1158.43 185.08 L1156.44 183.46 L1154.44 181.83 L1152.41 180.2 L1150.37 178.57 L1148.3 176.94 L1146.22 175.31 L1144.12 173.69 L1142 172.06 L1139.86 170.43 L1137.71 168.8 L1135.53 167.17 L1133.34 165.54 L1131.13 163.91 L1128.91 162.29 L1126.66 160.66 L1124.4 159.03 L1122.12 157.4 L1119.83 155.77 L1117.52 154.14 L1115.19 152.51 L1112.85 150.89 L1110.49 149.26 L1108.11 147.63 L1105.72 146 L1103.31 144.37 L1100.89 142.74 L1098.45 141.11 L1096 139.49 L1093.54 137.86 L1091.05 136.23 L1088.56 134.6 L1086.05 132.97 L1083.52 131.34 L1080.99 129.72 L1078.44 128.09 L1075.87 126.46 L1073.29 124.83 L1070.7 123.2 L1068.1 121.57 L1065.48 119.94 L1062.85 118.32 L1060.21 116.69 L1057.56 115.06 L1054.89 113.43 L1052.22 111.8 L1049.53 110.17 L1046.83 108.54 L1044.12 106.92 L1041.4 105.29 L1038.67 103.66 L1035.92 102.03 L1033.17 100.4 L1030.41 98.77 L1027.64 97.15 L1024.86 95.52 L1022.07 93.89 L1019.27 92.26 L1016.46 90.63 L1013.64 89 L1010.81 87.37 L1007.98 85.75 L1005.14 84.12 L1002.29 82.49 L999.43 80.86 L996.56 79.23 L993.69 77.6 L990.81 75.97 L987.93 74.35 L985.03 72.72 L982.13 71.09 L979.23 69.46 L976.32 67.83 L973.4 66.2 L970.48 64.58 L967.55 62.95 L964.62 61.32 L961.69 59.69 L958.74 58.06 L955.8 56.43 L952.85 54.8 L949.9 53.18 L946.94 51.55 L943.98 49.92 L941.01 48.29 L938.05 46.66 L935.08 45.03 L932.11 43.4 L929.13 41.78 L926.16 40.15 L923.18 38.52 L920.2 36.89 L917.22 35.26 L914.24 33.63 L911.25 32.01 L908.27 30.38 L905.28 28.75 L902.3 27.12"/>
<path d="M902.3 613.38 L904.86 611.75 L907.42 610.12 L909.97 608.49 L912.53 606.87 L915.09 605.24 L917.64 603.61 L920.2 601.98 L922.75 600.35 L925.3 598.72 L927.85 597.1 L930.4 595.47 L932.94 593.84 L935.48 592.21 L938.02 590.58 L940.56 588.95 L943.1 587.32 L945.63 585.7 L948.16 584.07 L950.68 582.44 L953.2 580.81 L955.72 579.18 L958.23 577.55 L960.74 575.92 L963.25 574.3 L965.74 572.67 L968.24 571.04 L970.73 569.41 L973.21 567.78 L975.69 566.15 L978.17 564.52 L980.64 562.9 L983.1 561.27 L985.55 559.64 L988 558.01 L990.45 556.38 L992.88 554.75 L995.31 553.13 L997.73 551.5 L1000.15 549.87 L1002.56 548.24 L1004.96 546.61 L1007.35 544.98 L1009.73 543.35 L1012.11 541.73 L1014.48 540.1 L1016.84 538.47 L1019.19 536.84 L1021.53 535.21 L1023.86 533.58 L1026.18 531.96 L1028.5 530.33 L1030.8 528.7 L1033.09 527.07 L1035.38 525.44 L1037.65 523.81 L1039.92 522.18 L1042.17 520.56 L1044.41 518.93 L1046.64 517.3 L1048.87 515.67 L1051.07 514.04 L1053.27 512.41 L1055.46 510.78 L1057.64 509.16 L1059.8 507.53 L1061.95 505.9 L1064.09 504.27 L1066.22 502.64 L1068.33 501.01 L1070.43 499.38 L1072.52 497.76 L1074.6 496.13 L1076.66 494.5 L1078.71 492.87 L1080.75 491.24 L1082.77 489.61 L1084.78 487.99 L1086.77 486.36 L1088.75 484.73 L1090.72 483.1 L1092.67 481.47 L1094.61 479.84 L1096.53 478.21 L1098.44 476.59 L1100.34 474.96 L1102.21 473.33 L1104.08 471.7 L1105.93 470.07 L1107.76 468.44 L1109.57 466.81 L1111.38 465.19 L1113.16 463.56 L1114.93 461.93 L1116.68 460.3 L1118.42 458.67 L1120.14 457.04 L1121.84 455.42 L1123.53 453.79 L1125.2 452.16 L1126.85 450.53 L1128.49 448.9 L1130.1 447.27 L1131.71 445.64 L1133.29 444.02 L1134.86 442.39 L1136.4 440.76 L1137.93 439.13 L1139.45 437.5 L1140.94 435.87 L1142.42 434.25 L1143.88 432.62 L1145.32 430.99 L1146.74 429.36 L1148.14 427.73 L1149.52 426.1 L1150.89 424.47 L1152.23 422.85 L1153.56 421.22 L1154.87 419.59 L1156.16 417.96 L1157.43 416.33 L1158.68 414.7 L1159.91 413.07 L1161.12 411.45 L1162.31 409.82 L1163.48 408.19 L1164.63 406.56 L1165.76 404.93 L1166.87 403.3 L1167.97 401.68 L1169.04 400.05 L1170.09 398.42 L1171.12 396.79 L1172.13 395.16 L1173.12 393.53 L1174.09 391.9 L1175.03 390.28 L1175.96 388.65 L1176.87 387.02 L1177.75 385.39 L1178.62 383.76 L1179.46 382.13 L1180.28 380.5 L1181.08 378.88 L1181.86 377.25 L1182.62 375.62 L1183.36 373.99 L1184.07 372.36 L1184.77 370.73 L1185.44 369.11 L1186.09 367.48 L1186.72 365.85 L1187.33 364.22 L1187.92 362.59 L1188.48 360.96 L1189.02 359.33 L1189.55 357.71 L1190.04 356.08 L1190.52 354.45 L1190.98 352.82 L1191.41 351.19 L1191.82 349.56 L1192.21 347.93 L1192.58 346.31 L1192.92 344.68 L1193.25 343.05 L1193.55 341.42 L1193.82 339.79 L1194.08 338.16 L1194.31 336.54 L1194.53 334.91 L1194.72 333.28 L1194.88 331.65 L1195.03 330.02 L1195.15 328.39 L1195.25 326.76 L1195.33 325.14 L1195.39 323.51 L1195.42 321.88 L1195.43 320.25 L1195.42 318.62 L1195.39 316.99 L1195.33 315.36 L1195.25 313.74 L1195.15 312.11 L1195.03 310.48 L1194.88 308.85 L1194.72 307.22 L1194.53 305.59 L1194.31 303.96 L1194.08 302.34 L1193.82 300.71 L1193.55 299.08 L1193.25 297.45 L1192.92 295.82 L1192.58 294.19 L1192.21 292.57 L1191.82 290.94 L1191.41 289.31 L1190.98 287.68 L1190.52 286.05 L1190.04 284.42 L1189.55 282.79 L1189.02 281.17 L1188.48 279.54 L1187.92 277.91 L1187.33 276.28 L1186.72 274.65 L1186.09 273.02 L1185.44 271.39 L1184.77 269.77 L1184.07 268.14 L1183.36 266.51 L1182.62 264.88 L1181.86 263.25 L1181.08 261.62 L1180.28 260 L1179.46 258.37 L1178.62 256.74 L1177.75 255.11 L1176.87 253.48 L1175.96 251.85 L1175.03 250.22 L1174.09 248.6 L1173.12 246.97 L1172.13 245.34 L1171.12 243.71 L1170.09 242.08 L1169.04 240.45 L1167.97 238.82 L1166.87 237.2 L1165.76 235.57 L1164.63 233.94 L1163.48 232.31 L1162.31 230.68 L1161.12 229.05 L1159.91 227.43 L1158.68 225.8 L1157.43 224.17 L1156.16 222.54 L1154.87 220.91 L1153.56 219.28 L1152.23 217.65 L1150.89 216.03 L1149.52 214.4 L1148.14 212.77 L1146.74 211.14 L1145.32 209.51 L1143.88 207.88 L1142.42 206.25 L1140.94 204.63 L1139.45 203 L1137.93 201.37 L1136.4 199.74 L1134.86 198.11 L1133.29 196.48 L1131.71 194.86 L1130.1 193.23 L1128.49 191.6 L1126.85 189.97 L1125.2 188.34 L1123.53 186.71 L1121.84 185.08 L1120.14 183.46 L1118.42 181.83 L1116.68 180.2 L1114.93 178.57 L1113.16 176.94 L1111.38 175.31 L1109.57 173.69 L1107.76 172.06 L1105.93 170.43 L1104.08 168.8 L1102.21 167.17 L1100.34 165.54 L1098.44 163.91 L1096.53 162.29 L1094.61 160.66 L1092.67 159.03 L1090.72 157.4 L1088.75 155.77 L1086.77 154.14 L1084.78 152.51 L1082.77 150.89 L1080.75 149.26 L1078.71 147.63 L1076.66 146 L1074.6 144.37 L1072.52 142.74 L1070.43 141.11 L1068.33 139.49 L1066.22 137.86 L1064.09 136.23 L1061.95 134.6 L1059.8 132.97 L1057.64 131.34 L1055.46 129.72 L1053.27 128.09 L1051.07 126.46 L1048.87 124.83 L1046.64 123.2 L1044.41 121.57 L1042.17 119.94 L1039.92 118.32 L1037.65 116.69 L1035.38 115.06 L1033.09 113.43 L1030.8 111.8 L1028.5 110.17 L1026.18 108.54 L1023.86 106.92 L1021.53 105.29 L1019.19 103.66 L1016.84 102.03 L1014.48 100.4 L1012.11 98.77 L1009.73 97.15 L1007.35 95.52 L1004.96 93.89 L1002.56 92.26 L1000.15 90.63 L997.73 89 L995.31 87.37 L992.88 85.75 L990.45 84.12 L988 82.49 L985.55 80.86 L983.1 79.23 L980.64 77.6 L978.17 75.97 L975.69 74.35 L973.21 72.72 L970.73 71.09 L968.24 69.46 L965.74 67.83 L963.25 66.2 L960.74 64.58 L958.23 62.95 L955.72 61.32 L953.2 59.69 L950.68 58.06 L948.16 56.43 L945.63 54.8 L943.1 53.18 L940.56 51.55 L938.02 49.92 L935.48 48.29 L932.94 46.66 L930.4 45.03 L927.85 43.4 L925.3 41.78 L922.75 40.15 L920.2 38.52 L917.64 36.89 L915.09 35.26 L912.53 33.63 L909.97 32.01 L907.42 30.38 L904.86 28.75 L902.3 27.12"/>
<path d="M902.3 613.38 L904.43 611.75 L906.56 610.12 L908.69 608.49 L910.83 606.87 L912.96 605.24 L915.08 603.61 L917.21 601.98 L919.34 600.35 L921.47 598.72 L923.59 597.1 L925.71 595.47 L927.83 593.84 L929.95 592.21 L932.07 590.58 L934.18 588.95 L936.3 587.32 L938.41 585.7 L940.51 584.07 L942.62 582.44 L944.72 580.81 L946.82 579.18 L948.91 577.55 L951 575.92 L953.09 574.3 L955.17 572.67 L957.25 571.04 L959.32 569.41 L961.4 567.78 L963.46 566.15 L965.52 564.52 L967.58 562.9 L969.63 561.27 L971.68 559.64 L973.72 558.01 L975.75 556.38 L977.79 554.75 L979.81 553.13 L981.83 551.5 L983.84 549.87 L985.85 548.24 L987.85 546.61 L989.84 544.98 L991.83 543.35 L993.81 541.73 L995.78 540.1 L997.75 538.47 L999.7 536.84 L1001.66 535.21 L1003.6 533.58 L1005.54 531.96 L1007.46 530.33 L1009.38 528.7 L1011.29 527.07 L1013.2 525.44 L1015.09 523.81 L1016.98 522.18 L1018.86 520.56 L1020.73 518.93 L1022.59 517.3 L1024.44 515.67 L1026.28 514.04 L1028.11 512.41 L1029.93 510.78 L1031.75 509.16 L1033.55 507.53 L1035.34 505.9 L1037.12 504.27 L1038.9 502.64 L1040.66 501.01 L1042.41 499.38 L1044.15 497.76 L1045.88 496.13 L1047.6 494.5 L1049.31 492.87 L1051.01 491.24 L1052.69 489.61 L1054.36 487.99 L1056.03 486.36 L1057.68 484.73 L1059.32 483.1 L1060.94 481.47 L1062.56 479.84 L1064.16 478.21 L1065.75 476.59 L1067.33 474.96 L1068.9 473.33 L1070.45 471.7 L1071.99 470.07 L1073.51 468.44 L1075.03 466.81 L1076.53 465.19 L1078.02 463.56 L1079.49 461.93 L1080.95 460.3 L1082.4 458.67 L1083.83 457.04 L1085.25 455.42 L1086.66 453.79 L1088.05 452.16 L1089.43 450.53 L1090.79 448.9 L1092.14 447.27 L1093.47 445.64 L1094.79 444.02 L1096.1 442.39 L1097.39 440.76 L1098.66 439.13 L1099.92 437.5 L1101.17 435.87 L1102.4 434.25 L1103.61 432.62 L1104.81 430.99 L1106 429.36 L1107.17 427.73 L1108.32 426.1 L1109.46 424.47 L1110.58 422.85 L1111.68 421.22 L1112.77 419.59 L1113.85 417.96 L1114.91 416.33 L1115.95 414.7 L1116.97 413.07 L1117.98 411.45 L1118.97 409.82 L1119.95 408.19 L1120.91 406.56 L1121.85 404.93 L1122.78 403.3 L1123.69 401.68 L1124.58 400.05 L1125.46 398.42 L1126.31 396.79 L1127.16 395.16 L1127.98 393.53 L1128.79 391.9 L1129.58 390.28 L1130.35 388.65 L1131.11 387.02 L1131.84 385.39 L1132.56 383.76 L1133.27 382.13 L1133.95 380.5 L1134.62 378.88 L1135.27 377.25 L1135.9 375.62 L1136.52 373.99 L1137.11 372.36 L1137.69 370.73 L1138.25 369.11 L1138.79 367.48 L1139.32 365.85 L1139.83 364.22 L1140.31 362.59 L1140.78 360.96 L1141.24 359.33 L1141.67 357.71 L1142.09 356.08 L1142.48 354.45 L1142.86 352.82 L1143.22 351.19 L1143.57 349.56 L1143.89 347.93 L1144.2 346.31 L1144.49 344.68 L1144.75 343.05 L1145 341.42 L1145.24 339.79 L1145.45 338.16 L1145.65 336.54 L1145.82 334.91 L1145.98 333.28 L1146.12 331.65 L1146.24 330.02 L1146.34 328.39 L1146.43 326.76 L1146.49 325.14 L1146.54 323.51 L1146.57 321.88 L1146.58 320.25 L1146.57 318.62 L1146.54 316.99 L1146.49 315.36 L1146.43 313.74 L1146.34 312.11 L1146.24 310.48 L1146.12 308.85 L1145.98 307.22 L1145.82 305.59 L1145.65 303.96 L1145.45 302.34 L1145.24 300.71 L1145 299.08 L1144.75 297.45 L1144.49 295.82 L1144.2 294.19 L1143.89 292.57 L1143.57 290.94 L1143.22 289.31 L1142.86 287.68 L1142.48 286.05 L1142.09 284.42 L1141.67 282.79 L1141.24 281.17 L1140.78 279.54 L1140.31 277.91 L1139.83 276.28 L1139.32 274.65 L1138.79 273.02 L1138.25 271.39 L1137.69 269.77 L1137.11 268.14 L1136.52 266.51 L1135.9 264.88 L1135.27 263.25 L1134.62 261.62 L1133.95 260 L1133.27 258.37 L1132.56 256.74 L1131.84 255.11 L1131.11 253.48 L1130.35 251.85 L1129.58 250.22 L1128.79 248.6 L1127.98 246.97 L1127.16 245.34 L1126.31 243.71 L1125.46 242.08 L1124.58 240.45 L1123.69 238.82 L1122.78 237.2 L1121.85 235.57 L1120.91 233.94 L1119.95 232.31 L1118.97 230.68 L1117.98 229.05 L1116.97 227.43 L1115.95 225.8 L1114.91 224.17 L1113.85 222.54 L1112.77 220.91 L1111.68 219.28 L1110.58 217.65 L1109.46 216.03 L1108.32 214.4 L1107.17 212.77 L1106 211.14 L1104.81 209.51 L1103.61 207.88 L1102.4 206.25 L1101.17 204.63 L1099.92 203 L1098.66 201.37 L1097.39 199.74 L1096.1 198.11 L1094.79 196.48 L1093.47 194.86 L1092.14 193.23 L1090.79 191.6 L1089.43 189.97 L1088.05 188.34 L1086.66 186.71 L1085.25 185.08 L1083.83 183.46 L1082.4 181.83 L1080.95 180.2 L1079.49 178.57 L1078.02 176.94 L1076.53 175.31 L1075.03 173.69 L1073.51 172.06 L1071.99 170.43 L1070.45 168.8 L1068.9 167.17 L1067.33 165.54 L1065.75 163.91 L1064.16 162.29 L1062.56 160.66 L1060.94 159.03 L1059.32 157.4 L1057.68 155.77 L1056.03 154.14 L1054.36 152.51 L1052.69 150.89 L1051.01 149.26 L1049.31 147.63 L1047.6 146 L1045.88 144.37 L1044.15 142.74 L1042.41 141.11 L1040.66 139.49 L1038.9 137.86 L1037.12 136.23 L1035.34 134.6 L1033.55 132.97 L1031.75 131.34 L1029.93 129.72 L1028.11 128.09 L1026.28 126.46 L1024.44 124.83 L1022.59 123.2 L1020.73 121.57 L1018.86 119.94 L1016.98 118.32 L1015.09 116.69 L1013.2 115.06 L1011.29 113.43 L1009.38 111.8 L1007.46 110.17 L1005.54 108.54 L1003.6 106.92 L1001.66 105.29 L999.7 103.66 L997.75 102.03 L995.78 100.4 L993.81 98.77 L991.83 97.15 L989.84 95.52 L987.85 93.89 L985.85 92.26 L983.84 90.63 L981.83 89 L979.81 87.37 L977.79 85.75 L975.75 84.12 L973.72 82.49 L971.68 80.86 L969.63 79.23 L967.58 77.6 L965.52 75.97 L963.46 74.35 L961.4 72.72 L959.32 71.09 L957.25 69.46 L955.17 67.83 L953.09 66.2 L951 64.58 L948.91 62.95 L946.82 61.32 L944.72 59.69 L942.62 58.06 L940.51 56.43 L938.41 54.8 L936.3 53.18 L934.18 51.55 L932.07 49.92 L929.95 48.29 L927.83 46.66 L925.71 45.03 L923.59 43.4 L921.47 41.78 L919.34 40.15 L917.21 38.52 L915.08 36.89 L912.96 35.26 L910.83 33.63 L908.69 32.01 L906.56 30.38 L904.43 28.75 L902.3 27.12"/>
<path d="M902.3 613.38 L904.01 611.75 L905.71 610.12 L907.42 608.49 L909.12 606.87 L910.82 605.24 L912.53 603.61 L914.23 601.98 L915.93 600.35 L917.63 598.72 L919.33 597.1 L921.03 595.47 L922.73 593.84 L924.42 592.21 L926.12 590.58 L927.81 588.95 L929.5 587.32 L931.18 585.7 L932.87 584.07 L934.55 582.44 L936.23 580.81 L937.91 579.18 L939.59 577.55 L941.26 575.92 L942.93 574.3 L944.6 572.67 L946.26 571.04 L947.92 569.41 L949.58 567.78 L951.23 566.15 L952.88 564.52 L954.52 562.9 L956.17 561.27 L957.8 559.64 L959.44 558.01 L961.06 556.38 L962.69 554.75 L964.31 553.13 L965.92 551.5 L967.53 549.87 L969.14 548.24 L970.74 546.61 L972.33 544.98 L973.92 543.35 L975.51 541.73 L977.08 540.1 L978.66 538.47 L980.22 536.84 L981.78 535.21 L983.34 533.58 L984.89 531.96 L986.43 530.33 L987.97 528.7 L989.5 527.07 L991.02 525.44 L992.53 523.81 L994.04 522.18 L995.55 520.56 L997.04 518.93 L998.53 517.3 L1000.01 515.67 L1001.48 514.04 L1002.95 512.41 L1004.41 510.78 L1005.86 509.16 L1007.3 507.53 L1008.73 505.9 L1010.16 504.27 L1011.58 502.64 L1012.99 501.01 L1014.39 499.38 L1015.78 497.76 L1017.16 496.13 L1018.54 494.5 L1019.91 492.87 L1021.26 491.24 L1022.61 489.61 L1023.95 487.99 L1025.28 486.36 L1026.6 484.73 L1027.91 483.1 L1029.22 481.47 L1030.51 479.84 L1031.79 478.21 L1033.06 476.59 L1034.32 474.96 L1035.58 473.33 L1036.82 471.7 L1038.05 470.07 L1039.27 468.44 L1040.48 466.81 L1041.68 465.19 L1042.87 463.56 L1044.05 461.93 L1045.22 460.3 L1046.38 458.67 L1047.53 457.04 L1048.66 455.42 L1049.79 453.79 L1050.9 452.16 L1052 450.53 L1053.09 448.9 L1054.17 447.27 L1055.24 445.64 L1056.29 444.02 L1057.34 442.39 L1058.37 440.76 L1059.39 439.13 L1060.4 437.5 L1061.39 435.87 L1062.38 434.25 L1063.35 432.62 L1064.31 430.99 L1065.26 429.36 L1066.19 427.73 L1067.12 426.1 L1068.03 424.47 L1068.92 422.85 L1069.81 421.22 L1070.68 419.59 L1071.54 417.96 L1072.38 416.33 L1073.22 414.7 L1074.04 413.07 L1074.85 411.45 L1075.64 409.82 L1076.42 408.19 L1077.19 406.56 L1077.94 404.93 L1078.68 403.3 L1079.41 401.68 L1080.12 400.05 L1080.83 398.42 L1081.51 396.79 L1082.19 395.16 L1082.84 393.53 L1083.49 391.9 L1084.12 390.28 L1084.74 388.65 L1085.34 387.02 L1085.93 385.39 L1086.51 383.76 L1087.07 382.13 L1087.62 380.5 L1088.16 378.88 L1088.68 377.25 L1089.18 375.62 L1089.67 373.99 L1090.15 372.36 L1090.61 370.73 L1091.06 369.11 L1091.5 367.48 L1091.92 365.85 L1092.32 364.22 L1092.71 362.59 L1093.09 360.96 L1093.45 359.33 L1093.8 357.71 L1094.13 356.08 L1094.45 354.45 L1094.75 352.82 L1095.04 351.19 L1095.31 349.56 L1095.57 347.93 L1095.82 346.31 L1096.05 344.68 L1096.26 343.05 L1096.46 341.42 L1096.65 339.79 L1096.82 338.16 L1096.98 336.54 L1097.12 334.91 L1097.24 333.28 L1097.36 331.65 L1097.45 330.02 L1097.53 328.39 L1097.6 326.76 L1097.65 325.14 L1097.69 323.51 L1097.71 321.88 L1097.72 320.25 L1097.71 318.62 L1097.69 316.99 L1097.65 315.36 L1097.6 313.74 L1097.53 312.11 L1097.45 310.48 L1097.36 308.85 L1097.24 307.22 L1097.12 305.59 L1096.98 303.96 L1096.82 302.34 L1096.65 300.71 L1096.46 299.08 L1096.26 297.45 L1096.05 295.82 L1095.82 294.19 L1095.57 292.57 L1095.31 290.94 L1095.04 289.31 L1094.75 287.68 L1094.45 286.05 L1094.13 284.42 L1093.8 282.79 L1093.45 281.17 L1093.09 279.54 L1092.71 277.91 L1092.32 276.28 L1091.92 274.65 L1091.5 273.02 L1091.06 271.39 L1090.61 269.77 L1090.15 268.14 L1089.67 266.51 L1089.18 264.88 L1088.68 263.25 L1088.16 261.62 L1087.62 260 L1087.07 258.37 L1086.51 256.74 L1085.93 255.11 L1085.34 253.48 L1084.74 251.85 L1084.12 250.22 L1083.49 248.6 L1082.84 246.97 L1082.19 245.34 L1081.51 243.71 L1080.83 242.08 L1080.12 240.45 L1079.41 238.82 L1078.68 237.2 L1077.94 235.57 L1077.19 233.94 L1076.42 232.31 L1075.64 230.68 L1074.85 229.05 L1074.04 227.43 L1073.22 225.8 L1072.38 224.17 L1071.54 222.54 L1070.68 220.91 L1069.81 219.28 L1068.92 217.65 L1068.03 216.03 L1067.12 214.4 L1066.19 212.77 L1065.26 211.14 L1064.31 209.51 L1063.35 207.88 L1062.38 206.25 L1061.39 204.63 L1060.4 203 L1059.39 201.37 L1058.37 199.74 L1057.34 198.11 L1056.29 196.48 L1055.24 194.86 L1054.17 193.23 L1053.09 191.6 L1052 189.97 L1050.9 188.34 L1049.79 186.71 L1048.66 185.08 L1047.53 183.46 L1046.38 181.83 L1045.22 180.2 L1044.05 178.57 L1042.87 176.94 L1041.68 175.31 L1040.48 173.69 L1039.27 172.06 L1038.05 170.43 L1036.82 168.8 L1035.58 167.17 L1034.32 165.54 L1033.06 163.91 L1031.79 162.29 L1030.51 160.66 L1029.22 159.03 L1027.91 157.4 L1026.6 155.77 L1025.28 154.14 L1023.95 152.51 L1022.61 150.89 L1021.26 149.26 L1019.91 147.63 L1018.54 146 L1017.16 144.37 L1015.78 142.74 L1014.39 141.11 L1012.99 139.49 L1011.58 137.86 L1010.16 136.23 L1008.73 134.6 L1007.3 132.97 L1005.86 131.34 L1004.41 129.72 L1002.95 128.09 L1001.48 126.46 L1000.01 124.83 L998.53 123.2 L997.04 121.57 L995.55 119.94 L994.04 118.32 L992.53 116.69 L991.02 115.06 L989.5 113.43 L987.97 111.8 L986.43 110.17 L984.89 108.54 L983.34 106.92 L981.78 105.29 L980.22 103.66 L978.66 102.03 L977.08 100.4 L975.51 98.77 L973.92 97.15 L972.33 95.52 L970.74 93.89 L969.14 92.26 L967.53 90.63 L965.92 89 L964.31 87.37 L962.69 85.75 L961.06 84.12 L959.44 82.49 L957.8 80.86 L956.17 79.23 L954.52 77.6 L952.88 75.97 L951.23 74.35 L949.58 72.72 L947.92 71.09 L946.26 69.46 L944.6 67.83 L942.93 66.2 L941.26 64.58 L939.59 62.95 L937.91 61.32 L936.23 59.69 L934.55 58.06 L932.87 56.43 L931.18 54.8 L929.5 53.18 L927.81 51.55 L926.12 49.92 L924.42 48.29 L922.73 46.66 L921.03 45.03 L919.33 43.4 L917.63 41.78 L915.93 40.15 L914.23 38.52 L912.53 36.89 L910.82 35.26 L909.12 33.63 L907.42 32.01 L905.71 30.38 L904.01 28.75 L902.3 27.12"/>
<path d="M902.3 613.38 L903.58 611.75 L904.86 610.12 L906.14 608.49 L907.42 606.87 L908.69 605.24 L909.97 603.61 L911.25 601.98 L912.52 600.35 L913.8 598.72 L915.07 597.1 L916.35 595.47 L917.62 593.84 L918.89 592.21 L920.16 590.58 L921.43 588.95 L922.7 587.32 L923.96 585.7 L925.23 584.07 L926.49 582.44 L927.75 580.81 L929.01 579.18 L930.27 577.55 L931.52 575.92 L932.77 574.3 L934.02 572.67 L935.27 571.04 L936.51 569.41 L937.76 567.78 L939 566.15 L940.23 564.52 L941.47 562.9 L942.7 561.27 L943.93 559.64 L945.15 558.01 L946.37 556.38 L947.59 554.75 L948.81 553.13 L950.02 551.5 L951.22 549.87 L952.43 548.24 L953.63 546.61 L954.82 544.98 L956.02 543.35 L957.2 541.73 L958.39 540.1 L959.57 538.47 L960.74 536.84 L961.91 535.21 L963.08 533.58 L964.24 531.96 L965.4 530.33 L966.55 528.7 L967.7 527.07 L968.84 525.44 L969.98 523.81 L971.11 522.18 L972.23 520.56 L973.36 518.93 L974.47 517.3 L975.58 515.67 L976.69 514.04 L977.79 512.41 L978.88 510.78 L979.97 509.16 L981.05 507.53 L982.13 505.9 L983.19 504.27 L984.26 502.64 L985.32 501.01 L986.37 499.38 L987.41 497.76 L988.45 496.13 L989.48 494.5 L990.51 492.87 L991.52 491.24 L992.53 489.61 L993.54 487.99 L994.54 486.36 L995.53 484.73 L996.51 483.1 L997.49 481.47 L998.46 479.84 L999.42 478.21 L1000.37 476.59 L1001.32 474.96 L1002.26 473.33 L1003.19 471.7 L1004.11 470.07 L1005.03 468.44 L1005.94 466.81 L1006.84 465.19 L1007.73 463.56 L1008.61 461.93 L1009.49 460.3 L1010.36 458.67 L1011.22 457.04 L1012.07 455.42 L1012.91 453.79 L1013.75 452.16 L1014.58 450.53 L1015.39 448.9 L1016.2 447.27 L1017 445.64 L1017.79 444.02 L1018.58 442.39 L1019.35 440.76 L1020.12 439.13 L1020.87 437.5 L1021.62 435.87 L1022.36 434.25 L1023.09 432.62 L1023.81 430.99 L1024.52 429.36 L1025.22 427.73 L1025.91 426.1 L1026.59 424.47 L1027.27 422.85 L1027.93 421.22 L1028.58 419.59 L1029.23 417.96 L1029.86 416.33 L1030.49 414.7 L1031.1 413.07 L1031.71 411.45 L1032.3 409.82 L1032.89 408.19 L1033.47 406.56 L1034.03 404.93 L1034.59 403.3 L1035.13 401.68 L1035.67 400.05 L1036.19 398.42 L1036.71 396.79 L1037.21 395.16 L1037.71 393.53 L1038.19 391.9 L1038.67 390.28 L1039.13 388.65 L1039.58 387.02 L1040.03 385.39 L1040.46 383.76 L1040.88 382.13 L1041.29 380.5 L1041.69 378.88 L1042.08 377.25 L1042.46 375.62 L1042.83 373.99 L1043.19 372.36 L1043.53 370.73 L1043.87 369.11 L1044.2 367.48 L1044.51 365.85 L1044.82 364.22 L1045.11 362.59 L1045.39 360.96 L1045.66 359.33 L1045.92 357.71 L1046.17 356.08 L1046.41 354.45 L1046.64 352.82 L1046.85 351.19 L1047.06 349.56 L1047.26 347.93 L1047.44 346.31 L1047.61 344.68 L1047.77 343.05 L1047.92 341.42 L1048.06 339.79 L1048.19 338.16 L1048.31 336.54 L1048.41 334.91 L1048.51 333.28 L1048.59 331.65 L1048.66 330.02 L1048.73 328.39 L1048.78 326.76 L1048.81 325.14 L1048.84 323.51 L1048.86 321.88 L1048.87 320.25 L1048.86 318.62 L1048.84 316.99 L1048.81 315.36 L1048.78 313.74 L1048.73 312.11 L1048.66 310.48 L1048.59 308.85 L1048.51 307.22 L1048.41 305.59 L1048.31 303.96 L1048.19 302.34 L1048.06 300.71 L1047.92 299.08 L1047.77 297.45 L1047.61 295.82 L1047.44 294.19 L1047.26 292.57 L1047.06 290.94 L1046.85 289.31 L1046.64 287.68 L1046.41 286.05 L1046.17 284.42 L1045.92 282.79 L1045.66 281.17 L1045.39 279.54 L1045.11 277.91 L1044.82 276.28 L1044.51 274.65 L1044.2 273.02 L1043.87 271.39 L1043.53 269.77 L1043.19 268.14 L1042.83 266.51 L1042.46 264.88 L1042.08 263.25 L1041.69 261.62 L1041.29 260 L1040.88 258.37 L1040.46 256.74 L1040.03 255.11 L1039.58 253.48 L1039.13 251.85 L1038.67 250.22 L1038.19 248.6 L1037.71 246.97 L1037.21 245.34 L1036.71 243.71 L1036.19 242.08 L1035.67 240.45 L1035.13 238.82 L1034.59 237.2 L1034.03 235.57 L1033.47 233.94 L1032.89 232.31 L1032.3 230.68 L1031.71 229.05 L1031.1 227.43 L1030.49 225.8 L1029.86 224.17 L1029.23 222.54 L1028.58 220.91 L1027.93 219.28 L1027.27 217.65 L1026.59 216.03 L1025.91 214.4 L1025.22 212.77 L1024.52 211.14 L1023.81 209.51 L1023.09 207.88 L1022.36 206.25 L1021.62 204.63 L1020.87 203 L1020.12 201.37 L1019.35 199.74 L1018.58 198.11 L1017.79 196.48 L1017 194.86 L1016.2 193.23 L1015.39 191.6 L1014.58 189.97 L1013.75 188.34 L1012.91 186.71 L1012.07 185.08 L1011.22 183.46 L1010.36 181.83 L1009.49 180.2 L1008.61 178.57 L1007.73 176.94 L1006.84 175.31 L1005.94 173.69 L1005.03 172.06 L1004.11 170.43 L1003.19 168.8 L1002.26 167.17 L1001.32 165.54 L1000.37 163.91 L999.42 162.29 L998.46 160.66 L997.49 159.03 L996.51 157.4 L995.53 155.77 L994.54 154.14 L993.54 152.51 L992.53 150.89 L991.52 149.26 L990.51 147.63 L989.48 146 L988.45 144.37 L987.41 142.74 L986.37 141.11 L985.32 139.49 L984.26 137.86 L983.19 136.23 L982.13 134.6 L981.05 132.97 L979.97 131.34 L978.88 129.72 L977.79 128.09 L976.69 126.46 L975.58 124.83 L974.47 123.2 L973.36 121.57 L972.23 119.94 L971.11 118.32 L969.98 116.69 L968.84 115.06 L967.7 113.43 L966.55 111.8 L965.4 110.17 L964.24 108.54 L963.08 106.92 L961.91 105.29 L960.74 103.66 L959.57 102.03 L958.39 100.4 L957.2 98.77 L956.02 97.15 L954.82 95.52 L953.63 93.89 L952.43 92.26 L951.22 90.63 L950.02 89 L948.81 87.37 L947.59 85.75 L946.37 84.12 L945.15 82.49 L943.93 80.86 L942.7 79.23 L941.47 77.6 L940.23 75.97 L939 74.35 L937.76 72.72 L936.51 71.09 L935.27 69.46 L934.02 67.83 L932.77 66.2 L931.52 64.58 L930.27 62.95 L929.01 61.32 L927.75 59.69 L926.49 58.06 L925.23 56.43 L923.96 54.8 L922.7 53.18 L921.43 51.55 L920.16 49.92 L918.89 48.29 L917.62 46.66 L916.35 45.03 L915.07 43.4 L913.8 41.78 L912.52 40.15 L911.25 38.52 L909.97 36.89 L908.69 35.26 L907.42 33.63 L906.14 32.01 L904.86 30.38 L903.58 28.75 L902.3 27.12"/>
<path d="M902.3 613.38 L903.15 611.75 L904.01 610.12 L904.86 608.49 L905.71 606.87 L906.56 605.24 L907.41 603.61 L908.27 601.98 L909.12 600.35 L909.97 598.72 L910.82 597.1 L911.67 595.47 L912.51 593.84 L913.36 592.21 L914.21 590.58 L915.05 588.95 L915.9 587.32 L916.74 585.7 L917.59 584.07 L918.43 582.44 L919.27 580.81 L920.11 579.18 L920.94 577.55 L921.78 575.92 L922.62 574.3 L923.45 572.67 L924.28 571.04 L925.11 569.41 L925.94 567.78 L926.76 566.15 L927.59 564.52 L928.41 562.9 L929.23 561.27 L930.05 559.64 L930.87 558.01 L931.68 556.38 L932.49 554.75 L933.3 553.13 L934.11 551.5 L934.92 549.87 L935.72 548.24 L936.52 546.61 L937.32 544.98 L938.11 543.35 L938.9 541.73 L939.69 540.1 L940.48 538.47 L941.26 536.84 L942.04 535.21 L942.82 533.58 L943.59 531.96 L944.37 530.33 L945.13 528.7 L945.9 527.07 L946.66 525.44 L947.42 523.81 L948.17 522.18 L948.92 520.56 L949.67 518.93 L950.41 517.3 L951.15 515.67 L951.89 514.04 L952.62 512.41 L953.35 510.78 L954.08 509.16 L954.8 507.53 L955.52 505.9 L956.23 504.27 L956.94 502.64 L957.64 501.01 L958.34 499.38 L959.04 497.76 L959.73 496.13 L960.42 494.5 L961.1 492.87 L961.78 491.24 L962.46 489.61 L963.13 487.99 L963.79 486.36 L964.45 484.73 L965.11 483.1 L965.76 481.47 L966.4 479.84 L967.04 478.21 L967.68 476.59 L968.31 474.96 L968.94 473.33 L969.56 471.7 L970.18 470.07 L970.79 468.44 L971.39 466.81 L971.99 465.19 L972.59 463.56 L973.18 461.93 L973.76 460.3 L974.34 458.67 L974.91 457.04 L975.48 455.42 L976.04 453.79 L976.6 452.16 L977.15 450.53 L977.7 448.9 L978.23 447.27 L978.77 445.64 L979.3 444.02 L979.82 442.39 L980.33 440.76 L980.84 439.13 L981.35 437.5 L981.85 435.87 L982.34 434.25 L982.83 432.62 L983.31 430.99 L983.78 429.36 L984.25 427.73 L984.71 426.1 L985.16 424.47 L985.61 422.85 L986.05 421.22 L986.49 419.59 L986.92 417.96 L987.34 416.33 L987.76 414.7 L988.17 413.07 L988.57 411.45 L988.97 409.82 L989.36 408.19 L989.74 406.56 L990.12 404.93 L990.49 403.3 L990.86 401.68 L991.21 400.05 L991.56 398.42 L991.91 396.79 L992.24 395.16 L992.57 393.53 L992.9 391.9 L993.21 390.28 L993.52 388.65 L993.82 387.02 L994.12 385.39 L994.41 383.76 L994.69 382.13 L994.96 380.5 L995.23 378.88 L995.49 377.25 L995.74 375.62 L995.99 373.99 L996.22 372.36 L996.46 370.73 L996.68 369.11 L996.9 367.48 L997.11 365.85 L997.31 364.22 L997.51 362.59 L997.69 360.96 L997.87 359.33 L998.05 357.71 L998.21 356.08 L998.37 354.45 L998.53 352.82 L998.67 351.19 L998.81 349.56 L998.94 347.93 L999.06 346.31 L999.17 344.68 L999.28 343.05 L999.38 341.42 L999.47 339.79 L999.56 338.16 L999.64 336.54 L999.71 334.91 L999.77 333.28 L999.83 331.65 L999.88 330.02 L999.92 328.39 L999.95 326.76 L999.98 325.14 L1000 323.51 L1000.01 321.88 L1000.01 320.25 L1000.01 318.62 L1000 316.99 L999.98 315.36 L999.95 313.74 L999.92 312.11 L999.88 310.48 L999.83 308.85 L999.77 307.22 L999.71 305.59 L999.64 303.96 L999.56 302.34 L999.47 300.71 L999.38 299.08 L999.28 297.45 L999.17 295.82 L999.06 294.19 L998.94 292.57 L998.81 290.94 L998.67 289.31 L998.53 287.68 L998.37 286.05 L998.21 284.42 L998.05 282.79 L997.87 281.17 L997.69 279.54 L997.51 277.91 L997.31 276.28 L997.11 274.65 L996.9 273.02 L996.68 271.39 L996.46 269.77 L996.22 268.14 L995.99 266.51 L995.74 264.88 L995.49 263.25 L995.23 261.62 L994.96 260 L994.69 258.37 L994.41 256.74 L994.12 255.11 L993.82 253.48 L993.52 251.85 L993.21 250.22 L992.9 248.6 L992.57 246.97 L992.24 245.34 L991.91 243.71 L991.56 242.08 L991.21 240.45 L990.86 238.82 L990.49 237.2 L990.12 235.57 L989.74 233.94 L989.36 232.31 L988.97 230.68 L988.57 229.05 L988.17 227.43 L987.76 225.8 L987.34 224.17 L986.92 222.54 L986.49 220.91 L986.05 219.28 L985.61 217.65 L985.16 216.03 L984.71 214.4 L984.25 212.77 L983.78 211.14 L983.31 209.51 L982.83 207.88 L982.34 206.25 L981.85 204.63 L981.35 203 L980.84 201.37 L980.33 199.74 L979.82 198.11 L979.3 196.48 L978.77 194.86 L978.23 193.23 L977.7 191.6 L977.15 189.97 L976.6 188.34 L976.04 186.71 L975.48 185.08 L974.91 183.46 L974.34 181.83 L973.76 180.2 L973.18 178.57 L972.59 176.94 L971.99 175.31 L971.39 173.69 L970.79 172.06 L970.18 170.43 L969.56 168.8 L968.94 167.17 L968.31 165.54 L967.68 163.91 L967.04 162.29 L966.4 160.66 L965.76 159.03 L965.11 157.4 L964.45 155.77 L963.79 154.14 L963.13 152.51 L962.46 150.89 L961.78 149.26 L961.1 147.63 L960.42 146 L959.73 144.37 L959.04 142.74 L958.34 141.11 L957.64 139.49 L956.94 137.86 L956.23 136.23 L955.52 134.6 L954.8 132.97 L954.08 131.34 L953.35 129.72 L952.62 128.09 L951.89 126.46 L951.15 124.83 L950.41 123.2 L949.67 121.57 L948.92 119.94 L948.17 118.32 L947.42 116.69 L946.66 115.06 L945.9 113.43 L945.13 111.8 L944.37 110.17 L943.59 108.54 L942.82 106.92 L942.04 105.29 L941.26 103.66 L940.48 102.03 L939.69 100.4 L938.9 98.77 L938.11 97.15 L937.32 95.52 L936.52 93.89 L935.72 92.26 L934.92 90.63 L934.11 89 L933.3 87.37 L932.49 85.75 L931.68 84.12 L930.87 82.49 L930.05 80.86 L929.23 79.23 L928.41 77.6 L927.59 75.97 L926.76 74.35 L925.94 72.72 L925.11 71.09 L924.28 69.46 L923.45 67.83 L922.62 66.2 L921.78 64.58 L920.94 62.95 L920.11 61.32 L919.27 59.69 L918.43 58.06 L917.59 56.43 L916.74 54.8 L915.9 53.18 L915.05 51.55 L914.21 49.92 L913.36 48.29 L912.51 46.66 L911.67 45.03 L910.82 43.4 L909.97 41.78 L909.12 40.15 L908.27 38.52 L907.41 36.89 L906.56 35.26 L905.71 33.63 L904.86 32.01 L904.01 30.38 L903.15 28.75 L902.3 27.12"/>
<path d="M902.3 613.38 L902.73 611.75 L903.15 610.12 L903.58 608.49 L904.01 606.87 L904.43 605.24 L904.86 603.61 L905.28 601.98 L905.71 600.35 L906.13 598.72 L906.56 597.1 L906.98 595.47 L907.41 593.84 L907.83 592.21 L908.25 590.58 L908.68 588.95 L909.1 587.32 L909.52 585.7 L909.94 584.07 L910.36 582.44 L910.78 580.81 L911.2 579.18 L911.62 577.55 L912.04 575.92 L912.46 574.3 L912.87 572.67 L913.29 571.04 L913.7 569.41 L914.12 567.78 L914.53 566.15 L914.94 564.52 L915.36 562.9 L915.77 561.27 L916.18 559.64 L916.58 558.01 L916.99 556.38 L917.4 554.75 L917.8 553.13 L918.21 551.5 L918.61 549.87 L919.01 548.24 L919.41 546.61 L919.81 544.98 L920.21 543.35 L920.6 541.73 L921 540.1 L921.39 538.47 L921.78 536.84 L922.17 535.21 L922.56 533.58 L922.95 531.96 L923.33 530.33 L923.72 528.7 L924.1 527.07 L924.48 525.44 L924.86 523.81 L925.24 522.18 L925.61 520.56 L925.99 518.93 L926.36 517.3 L926.73 515.67 L927.1 514.04 L927.46 512.41 L927.83 510.78 L928.19 509.16 L928.55 507.53 L928.91 505.9 L929.26 504.27 L929.62 502.64 L929.97 501.01 L930.32 499.38 L930.67 497.76 L931.02 496.13 L931.36 494.5 L931.7 492.87 L932.04 491.24 L932.38 489.61 L932.71 487.99 L933.05 486.36 L933.38 484.73 L933.7 483.1 L934.03 481.47 L934.35 479.84 L934.67 478.21 L934.99 476.59 L935.31 474.96 L935.62 473.33 L935.93 471.7 L936.24 470.07 L936.54 468.44 L936.85 466.81 L937.15 465.19 L937.44 463.56 L937.74 461.93 L938.03 460.3 L938.32 458.67 L938.61 457.04 L938.89 455.42 L939.17 453.79 L939.45 452.16 L939.73 450.53 L940 448.9 L940.27 447.27 L940.53 445.64 L940.8 444.02 L941.06 442.39 L941.32 440.76 L941.57 439.13 L941.82 437.5 L942.07 435.87 L942.32 434.25 L942.56 432.62 L942.8 430.99 L943.04 429.36 L943.27 427.73 L943.5 426.1 L943.73 424.47 L943.96 422.85 L944.18 421.22 L944.39 419.59 L944.61 417.96 L944.82 416.33 L945.03 414.7 L945.23 413.07 L945.44 411.45 L945.63 409.82 L945.83 408.19 L946.02 406.56 L946.21 404.93 L946.4 403.3 L946.58 401.68 L946.76 400.05 L946.93 398.42 L947.1 396.79 L947.27 395.16 L947.44 393.53 L947.6 391.9 L947.76 390.28 L947.91 388.65 L948.06 387.02 L948.21 385.39 L948.35 383.76 L948.49 382.13 L948.63 380.5 L948.76 378.88 L948.89 377.25 L949.02 375.62 L949.14 373.99 L949.26 372.36 L949.38 370.73 L949.49 369.11 L949.6 367.48 L949.7 365.85 L949.81 364.22 L949.9 362.59 L950 360.96 L950.09 359.33 L950.17 357.71 L950.26 356.08 L950.34 354.45 L950.41 352.82 L950.48 351.19 L950.55 349.56 L950.62 347.93 L950.68 346.31 L950.74 344.68 L950.79 343.05 L950.84 341.42 L950.89 339.79 L950.93 338.16 L950.97 336.54 L951 334.91 L951.04 333.28 L951.06 331.65 L951.09 330.02 L951.11 328.39 L951.13 326.76 L951.14 325.14 L951.15 323.51 L951.15 321.88 L951.15 320.25 L951.15 318.62 L951.15 316.99 L951.14 315.36 L951.13 313.74 L951.11 312.11 L951.09 310.48 L951.06 308.85 L951.04 307.22 L951 305.59 L950.97 303.96 L950.93 302.34 L950.89 300.71 L950.84 299.08 L950.79 297.45 L950.74 295.82 L950.68 294.19 L950.62 292.57 L950.55 290.94 L950.48 289.31 L950.41 287.68 L950.34 286.05 L950.26 284.42 L950.17 282.79 L950.09 281.17 L950 279.54 L949.9 277.91 L949.81 276.28 L949.7 274.65 L949.6 273.02 L949.49 271.39 L949.38 269.77 L949.26 268.14 L949.14 266.51 L949.02 264.88 L948.89 263.25 L948.76 261.62 L948.63 260 L948.49 258.37 L948.35 256.74 L948.21 255.11 L948.06 253.48 L947.91 251.85 L947.76 250.22 L947.6 248.6 L947.44 246.97 L947.27 245.34 L947.1 243.71 L946.93 242.08 L946.76 240.45 L946.58 238.82 L946.4 237.2 L946.21 235.57 L946.02 233.94 L945.83 232.31 L945.63 230.68 L945.44 229.05 L945.23 227.43 L945.03 225.8 L944.82 224.17 L944.61 222.54 L944.39 220.91 L944.18 219.28 L943.96 217.65 L943.73 216.03 L943.5 214.4 L943.27 212.77 L943.04 211.14 L942.8 209.51 L942.56 207.88 L942.32 206.25 L942.07 204.63 L941.82 203 L941.57 201.37 L941.32 199.74 L941.06 198.11 L940.8 196.48 L940.53 194.86 L940.27 193.23 L940 191.6 L939.73 189.97 L939.45 188.34 L939.17 186.71 L938.89 185.08 L938.61 183.46 L938.32 181.83 L938.03 180.2 L937.74 178.57 L937.44 176.94 L937.15 175.31 L936.85 173.69 L936.54 172.06 L936.24 170.43 L935.93 168.8 L935.62 167.17 L935.31 165.54 L934.99 163.91 L934.67 162.29 L934.35 160.66 L934.03 159.03 L933.7 157.4 L933.38 155.77 L933.05 154.14 L932.71 152.51 L932.38 150.89 L932.04 149.26 L931.7 147.63 L931.36 146 L931.02 144.37 L930.67 142.74 L930.32 141.11 L929.97 139.49 L929.62 137.86 L929.26 136.23 L928.91 134.6 L928.55 132.97 L928.19 131.34 L927.83 129.72 L927.46 128.09 L927.1 126.46 L926.73 124.83 L926.36 123.2 L925.99 121.57 L925.61 119.94 L925.24 118.32 L924.86 116.69 L924.48 115.06 L924.1 113.43 L923.72 111.8 L923.33 110.17 L922.95 108.54 L922.56 106.92 L922.17 105.29 L921.78 103.66 L921.39 102.03 L921 100.4 L920.6 98.77 L920.21 97.15 L919.81 95.52 L919.41 93.89 L919.01 92.26 L918.61 90.63 L918.21 89 L917.8 87.37 L917.4 85.75 L916.99 84.12 L916.58 82.49 L916.18 80.86 L915.77 79.23 L915.36 77.6 L914.94 75.97 L914.53 74.35 L914.12 72.72 L913.7 71.09 L913.29 69.46 L912.87 67.83 L912.46 66.2 L912.04 64.58 L911.62 62.95 L911.2 61.32 L910.78 59.69 L910.36 58.06 L909.94 56.43 L909.52 54.8 L909.1 53.18 L908.68 51.55 L908.25 49.92 L907.83 48.29 L907.41 46.66 L906.98 45.03 L906.56 43.4 L906.13 41.78 L905.71 40.15 L905.28 38.52 L904.86 36.89 L904.43 35.26 L904.01 33.63 L903.58 32.01 L903.15 30.38 L902.73 28.75 L902.3 27.12"/>
<path d="M902 613.38 L902 27.12"/>
<path d="M902.3 613.38 L901.87 611.75 L901.45 610.12 L901.02 608.49 L900.59 606.87 L900.17 605.24 L899.74 603.61 L899.32 601.98 L898.89 600.35 L898.47 598.72 L898.04 597.1 L897.62 595.47 L897.19 593.84 L896.77 592.21 L896.35 590.58 L895.92 588.95 L895.5 587.32 L895.08 585.7 L894.66 584.07 L894.24 582.44 L893.82 580.81 L893.4 579.18 L892.98 577.55 L892.56 575.92 L892.14 574.3 L891.73 572.67 L891.31 571.04 L890.9 569.41 L890.48 567.78 L890.07 566.15 L889.66 564.52 L889.24 562.9 L888.83 561.27 L888.42 559.64 L888.02 558.01 L887.61 556.38 L887.2 554.75 L886.8 553.13 L886.39 551.5 L885.99 549.87 L885.59 548.24 L885.19 546.61 L884.79 544.98 L884.39 543.35 L884 541.73 L883.6 540.1 L883.21 538.47 L882.82 536.84 L882.43 535.21 L882.04 533.58 L881.65 531.96 L881.27 530.33 L880.88 528.7 L880.5 527.07 L880.12 525.44 L879.74 523.81 L879.36 522.18 L878.99 520.56 L878.61 518.93 L878.24 517.3 L877.87 515.67 L877.5 514.04 L877.14 512.41 L876.77 510.78 L876.41 509.16 L876.05 507.53 L875.69 505.9 L875.34 504.27 L874.98 502.64 L874.63 501.01 L874.28 499.38 L873.93 497.76 L873.58 496.13 L873.24 494.5 L872.9 492.87 L872.56 491.24 L872.22 489.61 L871.89 487.99 L871.55 486.36 L871.22 484.73 L870.9 483.1 L870.57 481.47 L870.25 479.84 L869.93 478.21 L869.61 476.59 L869.29 474.96 L868.98 473.33 L868.67 471.7 L868.36 470.07 L868.06 468.44 L867.75 466.81 L867.45 465.19 L867.16 463.56 L866.86 461.93 L866.57 460.3 L866.28 458.67 L865.99 457.04 L865.71 455.42 L865.43 453.79 L865.15 452.16 L864.87 450.53 L864.6 448.9 L864.33 447.27 L864.07 445.64 L863.8 444.02 L863.54 442.39 L863.28 440.76 L863.03 439.13 L862.78 437.5 L862.53 435.87 L862.28 434.25 L862.04 432.62 L861.8 430.99 L861.56 429.36 L861.33 427.73 L861.1 426.1 L860.87 424.47 L860.64 422.85 L860.42 421.22 L860.21 419.59 L859.99 417.96 L859.78 416.33 L859.57 414.7 L859.37 413.07 L859.16 411.45 L858.97 409.82 L858.77 408.19 L858.58 406.56 L858.39 404.93 L858.2 403.3 L858.02 401.68 L857.84 400.05 L857.67 398.42 L857.5 396.79 L857.33 395.16 L857.16 393.53 L857 391.9 L856.84 390.28 L856.69 388.65 L856.54 387.02 L856.39 385.39 L856.25 383.76 L856.11 382.13 L855.97 380.5 L855.84 378.88 L855.71 377.25 L855.58 375.62 L855.46 373.99 L855.34 372.36 L855.22 370.73 L855.11 369.11 L855 367.48 L854.9 365.85 L854.79 364.22 L854.7 362.59 L854.6 360.96 L854.51 359.33 L854.43 357.71 L854.34 356.08 L854.26 354.45 L854.19 352.82 L854.12 351.19 L854.05 349.56 L853.98 347.93 L853.92 346.31 L853.86 344.68 L853.81 343.05 L853.76 341.42 L853.71 339.79 L853.67 338.16 L853.63 336.54 L853.6 334.91 L853.56 333.28 L853.54 331.65 L853.51 330.02 L853.49 328.39 L853.47 326.76 L853.46 325.14 L853.45 323.51 L853.45 321.88 L853.44 320.25 L853.45 318.62 L853.45 316.99 L853.46 315.36 L853.47 313.74 L853.49 312.11 L853.51 310.48 L853.54 308.85 L853.56 307.22 L853.6 305.59 L853.63 303.96 L853.67 302.34 L853.71 300.71 L853.76 299.08 L853.81 297.45 L853.86 295.82 L853.92 294.19 L853.98 292.57 L854.05 290.94 L854.12 289.31 L854.19 287.68 L854.26 286.05 L854.34 284.42 L854.43 282.79 L854.51 281.17 L854.6 279.54 L854.7 277.91 L854.79 276.28 L854.9 274.65 L855 273.02 L855.11 271.39 L855.22 269.77 L855.34 268.14 L855.46 266.51 L855.58 264.88 L855.71 263.25 L855.84 261.62 L855.97 260 L856.11 258.37 L856.25 256.74 L856.39 255.11 L856.54 253.48 L856.69 251.85 L856.84 250.22 L857 248.6 L857.16 246.97 L857.33 245.34 L857.5 243.71 L857.67 242.08 L857.84 240.45 L858.02 238.82 L858.2 237.2 L858.39 235.57 L858.58 233.94 L858.77 232.31 L858.97 230.68 L859.16 229.05 L859.37 227.43 L859.57 225.8 L859.78 224.17 L859.99 222.54 L860.21 220.91 L860.42 219.28 L860.64 217.65 L860.87 216.03 L861.1 214.4 L861.33 212.77 L861.56 211.14 L861.8 209.51 L862.04 207.88 L862.28 206.25 L862.53 204.63 L862.78 203 L863.03 201.37 L863.28 199.74 L863.54 198.11 L863.8 196.48 L864.07 194.86 L864.33 193.23 L864.6 191.6 L864.87 189.97 L865.15 188.34 L865.43 186.71 L865.71 185.08 L865.99 183.46 L866.28 181.83 L866.57 180.2 L866.86 178.57 L867.16 176.94 L867.45 175.31 L867.75 173.69 L868.06 172.06 L868.36 170.43 L868.67 168.8 L868.98 167.17 L869.29 165.54 L869.61 163.91 L869.93 162.29 L870.25 160.66 L870.57 159.03 L870.9 157.4 L871.22 155.77 L871.55 154.14 L871.89 152.51 L872.22 150.89 L872.56 149.26 L872.9 147.63 L873.24 146 L873.58 144.37 L873.93 142.74 L874.28 141.11 L874.63 139.49 L874.98 137.86 L875.34 136.23 L875.69 134.6 L876.05 132.97 L876.41 131.34 L876.77 129.72 L877.14 128.09 L877.5 126.46 L877.87 124.83 L878.24 123.2 L878.61 121.57 L878.99 119.94 L879.36 118.32 L879.74 116.69 L880.12 115.06 L880.5 113.43 L880.88 111.8 L881.27 110.17 L881.65 108.54 L882.04 106.92 L882.43 105.29 L882.82 103.66 L883.21 102.03 L883.6 100.4 L884 98.77 L884.39 97.15 L884.79 95.52 L885.19 93.89 L885.59 92.26 L885.99 90.63 L886.39 89 L886.8 87.37 L887.2 85.75 L887.61 84.12 L888.02 82.49 L888.42 80.86 L888.83 79.23 L889.24 77.6 L889.66 75.97 L890.07 74.35 L890.48 72.72 L890.9 71.09 L891.31 69.46 L891.73 67.83 L892.14 66.2 L892.56 64.58 L892.98 62.95 L893.4 61.32 L893.82 59.69 L894.24 58.06 L894.66 56.43 L895.08 54.8 L895.5 53.18 L895.92 51.55 L896.35 49.92 L896.77 48.29 L897.19 46.66 L897.62 45.03 L898.04 43.4 L898.47 41.78 L898.89 40.15 L899.32 38.52 L899.74 36.89 L900.17 35.26 L900.59 33.63 L901.02 32.01 L901.45 30.38 L901.87 28.75 L902.3 27.12"/>
<path d="M902.3 613.38 L901.45 611.75 L900.59 610.12 L899.74 608.49 L898.89 606.87 L898.04 605.24 L897.19 603.61 L896.33 601.98 L895.48 600.35 L894.63 598.72 L893.78 597.1 L892.93 595.47 L892.09 593.84 L891.24 592.21 L890.39 590.58 L889.55 588.95 L888.7 587.32 L887.86 585.7 L887.01 584.07 L886.17 582.44 L885.33 580.81 L884.49 579.18 L883.66 577.55 L882.82 575.92 L881.98 574.3 L881.15 572.67 L880.32 571.04 L879.49 569.41 L878.66 567.78 L877.84 566.15 L877.01 564.52 L876.19 562.9 L875.37 561.27 L874.55 559.64 L873.73 558.01 L872.92 556.38 L872.11 554.75 L871.3 553.13 L870.49 551.5 L869.68 549.87 L868.88 548.24 L868.08 546.61 L867.28 544.98 L866.49 543.35 L865.7 541.73 L864.91 540.1 L864.12 538.47 L863.34 536.84 L862.56 535.21 L861.78 533.58 L861.01 531.96 L860.23 530.33 L859.47 528.7 L858.7 527.07 L857.94 525.44 L857.18 523.81 L856.43 522.18 L855.68 520.56 L854.93 518.93 L854.19 517.3 L853.44 515.67 L852.71 514.04 L851.98 512.41 L851.25 510.78 L850.52 509.16 L849.8 507.53 L849.08 505.9 L848.37 504.27 L847.66 502.64 L846.96 501.01 L846.26 499.38 L845.56 497.76 L844.87 496.13 L844.18 494.5 L843.5 492.87 L842.82 491.24 L842.14 489.61 L841.47 487.99 L840.81 486.36 L840.15 484.73 L839.49 483.1 L838.84 481.47 L838.2 479.84 L837.56 478.21 L836.92 476.59 L836.29 474.96 L835.66 473.33 L835.04 471.7 L834.42 470.07 L833.81 468.44 L833.21 466.81 L832.61 465.19 L832.01 463.56 L831.42 461.93 L830.84 460.3 L830.26 458.67 L829.69 457.04 L829.12 455.42 L828.56 453.79 L828 452.16 L827.45 450.53 L826.9 448.9 L826.37 447.27 L825.83 445.64 L825.3 444.02 L824.78 442.39 L824.27 440.76 L823.76 439.13 L823.25 437.5 L822.75 435.87 L822.26 434.25 L821.77 432.62 L821.29 430.99 L820.82 429.36 L820.35 427.73 L819.89 426.1 L819.44 424.47 L818.99 422.85 L818.55 421.22 L818.11 419.59 L817.68 417.96 L817.26 416.33 L816.84 414.7 L816.43 413.07 L816.03 411.45 L815.63 409.82 L815.24 408.19 L814.86 406.56 L814.48 404.93 L814.11 403.3 L813.74 401.68 L813.39 400.05 L813.04 398.42 L812.69 396.79 L812.36 395.16 L812.03 393.53 L811.7 391.9 L811.39 390.28 L811.08 388.65 L810.78 387.02 L810.48 385.39 L810.19 383.76 L809.91 382.13 L809.64 380.5 L809.37 378.88 L809.11 377.25 L808.86 375.62 L808.61 373.99 L808.38 372.36 L808.14 370.73 L807.92 369.11 L807.7 367.48 L807.49 365.85 L807.29 364.22 L807.09 362.59 L806.91 360.96 L806.73 359.33 L806.55 357.71 L806.39 356.08 L806.23 354.45 L806.07 352.82 L805.93 351.19 L805.79 349.56 L805.66 347.93 L805.54 346.31 L805.43 344.68 L805.32 343.05 L805.22 341.42 L805.13 339.79 L805.04 338.16 L804.96 336.54 L804.89 334.91 L804.83 333.28 L804.77 331.65 L804.72 330.02 L804.68 328.39 L804.65 326.76 L804.62 325.14 L804.6 323.51 L804.59 321.88 L804.59 320.25 L804.59 318.62 L804.6 316.99 L804.62 315.36 L804.65 313.74 L804.68 312.11 L804.72 310.48 L804.77 308.85 L804.83 307.22 L804.89 305.59 L804.96 303.96 L805.04 302.34 L805.13 300.71 L805.22 299.08 L805.32 297.45 L805.43 295.82 L805.54 294.19 L805.66 292.57 L805.79 290.94 L805.93 289.31 L806.07 287.68 L806.23 286.05 L806.39 284.42 L806.55 282.79 L806.73 281.17 L806.91 279.54 L807.09 277.91 L807.29 276.28 L807.49 274.65 L807.7 273.02 L807.92 271.39 L808.14 269.77 L808.38 268.14 L808.61 266.51 L808.86 264.88 L809.11 263.25 L809.37 261.62 L809.64 260 L809.91 258.37 L810.19 256.74 L810.48 255.11 L810.78 253.48 L811.08 251.85 L811.39 250.22 L811.7 248.6 L812.03 246.97 L812.36 245.34 L812.69 243.71 L813.04 242.08 L813.39 240.45 L813.74 238.82 L814.11 237.2 L814.48 235.57 L814.86 233.94 L815.24 232.31 L815.63 230.68 L816.03 229.05 L816.43 227.43 L816.84 225.8 L817.26 224.17 L817.68 222.54 L818.11 220.91 L818.55 219.28 L818.99 217.65 L819.44 216.03 L819.89 214.4 L820.35 212.77 L820.82 211.14 L821.29 209.51 L821.77 207.88 L822.26 206.25 L822.75 204.63 L823.25 203 L823.76 201.37 L824.27 199.74 L824.78 198.11 L825.3 196.48 L825.83 194.86 L826.37 193.23 L826.9 191.6 L827.45 189.97 L828 188.34 L828.56 186.71 L829.12 185.08 L829.69 183.46 L830.26 181.83 L830.84 180.2 L831.42 178.57 L832.01 176.94 L832.61 175.31 L833.21 173.69 L833.81 172.06 L834.42 170.43 L835.04 168.8 L835.66 167.17 L836.29 165.54 L836.92 163.91 L837.56 162.29 L838.2 160.66 L838.84 159.03 L839.49 157.4 L840.15 155.77 L840.81 154.14 L841.47 152.51 L842.14 150.89 L842.82 149.26 L843.5 147.63 L844.18 146 L844.87 144.37 L845.56 142.74 L846.26 141.11 L846.96 139.49 L847.66 137.86 L848.37 136.23 L849.08 134.6 L849.8 132.97 L850.52 131.34 L851.25 129.72 L851.98 128.09 L852.71 126.46 L853.44 124.83 L854.19 123.2 L854.93 121.57 L855.68 119.94 L856.43 118.32 L857.18 116.69 L857.94 115.06 L858.7 113.43 L859.47 111.8 L860.23 110.17 L861.01 108.54 L861.78 106.92 L862.56 105.29 L863.34 103.66 L864.12 102.03 L864.91 100.4 L865.7 98.77 L866.49 97.15 L867.28 95.52 L868.08 93.89 L868.88 92.26 L869.68 90.63 L870.49 89 L871.3 87.37 L872.11 85.75 L872.92 84.12 L873.73 82.49 L874.55 80.86 L875.37 79.23 L876.19 77.6 L877.01 75.97 L877.84 74.35 L878.66 72.72 L879.49 71.09 L880.32 69.46 L881.15 67.83 L881.98 66.2 L882.82 64.58 L883.66 62.95 L884.49 61.32 L885.33 59.69 L886.17 58.06 L887.01 56.43 L887.86 54.8 L888.7 53.18 L889.55 51.55 L890.39 49.92 L891.24 48.29 L892.09 46.66 L892.93 45.03 L893.78 43.4 L894.63 41.78 L895.48 40.15 L896.33 38.52 L897.19 36.89 L898.04 35.26 L898.89 33.63 L899.74 32.01 L900.59 30.38 L901.45 28.75 L902.3 27.12"/>
<path d="M902.3 613.38 L901.02 611.75 L899.74 610.12 L898.46 608.49 L897.18 606.87 L895.91 605.24 L894.63 603.61 L893.35 601.98 L892.08 600.35 L890.8 598.72 L889.53 597.1 L888.25 595.47 L886.98 593.84 L885.71 592.21 L884.44 590.58 L883.17 588.95 L881.9 587.32 L880.64 585.7 L879.37 584.07 L878.11 582.44 L876.85 580.81 L875.59 579.18 L874.33 577.55 L873.08 575.92 L871.83 574.3 L870.58 572.67 L869.33 571.04 L868.09 569.41 L866.84 567.78 L865.6 566.15 L864.37 564.52 L863.13 562.9 L861.9 561.27 L860.67 559.64 L859.45 558.01 L858.23 556.38 L857.01 554.75 L855.79 553.13 L854.58 551.5 L853.38 549.87 L852.17 548.24 L850.97 546.61 L849.78 544.98 L848.58 543.35 L847.4 541.73 L846.21 540.1 L845.03 538.47 L843.86 536.84 L842.69 535.21 L841.52 533.58 L840.36 531.96 L839.2 530.33 L838.05 528.7 L836.9 527.07 L835.76 525.44 L834.62 523.81 L833.49 522.18 L832.37 520.56 L831.24 518.93 L830.13 517.3 L829.02 515.67 L827.91 514.04 L826.81 512.41 L825.72 510.78 L824.63 509.16 L823.55 507.53 L822.47 505.9 L821.41 504.27 L820.34 502.64 L819.28 501.01 L818.23 499.38 L817.19 497.76 L816.15 496.13 L815.12 494.5 L814.09 492.87 L813.08 491.24 L812.07 489.61 L811.06 487.99 L810.06 486.36 L809.07 484.73 L808.09 483.1 L807.11 481.47 L806.14 479.84 L805.18 478.21 L804.23 476.59 L803.28 474.96 L802.34 473.33 L801.41 471.7 L800.49 470.07 L799.57 468.44 L798.66 466.81 L797.76 465.19 L796.87 463.56 L795.99 461.93 L795.11 460.3 L794.24 458.67 L793.38 457.04 L792.53 455.42 L791.69 453.79 L790.85 452.16 L790.02 450.53 L789.21 448.9 L788.4 447.27 L787.6 445.64 L786.81 444.02 L786.02 442.39 L785.25 440.76 L784.48 439.13 L783.73 437.5 L782.98 435.87 L782.24 434.25 L781.51 432.62 L780.79 430.99 L780.08 429.36 L779.38 427.73 L778.69 426.1 L778.01 424.47 L777.33 422.85 L776.67 421.22 L776.02 419.59 L775.37 417.96 L774.74 416.33 L774.11 414.7 L773.5 413.07 L772.89 411.45 L772.3 409.82 L771.71 408.19 L771.13 406.56 L770.57 404.93 L770.01 403.3 L769.47 401.68 L768.93 400.05 L768.41 398.42 L767.89 396.79 L767.39 395.16 L766.89 393.53 L766.41 391.9 L765.93 390.28 L765.47 388.65 L765.02 387.02 L764.57 385.39 L764.14 383.76 L763.72 382.13 L763.31 380.5 L762.91 378.88 L762.52 377.25 L762.14 375.62 L761.77 373.99 L761.41 372.36 L761.07 370.73 L760.73 369.11 L760.4 367.48 L760.09 365.85 L759.78 364.22 L759.49 362.59 L759.21 360.96 L758.94 359.33 L758.68 357.71 L758.43 356.08 L758.19 354.45 L757.96 352.82 L757.75 351.19 L757.54 349.56 L757.34 347.93 L757.16 346.31 L756.99 344.68 L756.83 343.05 L756.68 341.42 L756.54 339.79 L756.41 338.16 L756.29 336.54 L756.19 334.91 L756.09 333.28 L756.01 331.65 L755.94 330.02 L755.87 328.39 L755.82 326.76 L755.79 325.14 L755.76 323.51 L755.74 321.88 L755.73 320.25 L755.74 318.62 L755.76 316.99 L755.79 315.36 L755.82 313.74 L755.87 312.11 L755.94 310.48 L756.01 308.85 L756.09 307.22 L756.19 305.59 L756.29 303.96 L756.41 302.34 L756.54 300.71 L756.68 299.08 L756.83 297.45 L756.99 295.82 L757.16 294.19 L757.34 292.57 L757.54 290.94 L757.75 289.31 L757.96 287.68 L758.19 286.05 L758.43 284.42 L758.68 282.79 L758.94 281.17 L759.21 279.54 L759.49 277.91 L759.78 276.28 L760.09 274.65 L760.4 273.02 L760.73 271.39 L761.07 269.77 L761.41 268.14 L761.77 266.51 L762.14 264.88 L762.52 263.25 L762.91 261.62 L763.31 260 L763.72 258.37 L764.14 256.74 L764.57 255.11 L765.02 253.48 L765.47 251.85 L765.93 250.22 L766.41 248.6 L766.89 246.97 L767.39 245.34 L767.89 243.71 L768.41 242.08 L768.93 240.45 L769.47 238.82 L770.01 237.2 L770.57 235.57 L771.13 233.94 L771.71 232.31 L772.3 230.68 L772.89 229.05 L773.5 227.43 L774.11 225.8 L774.74 224.17 L775.37 222.54 L776.02 220.91 L776.67 219.28 L777.33 217.65 L778.01 216.03 L778.69 214.4 L779.38 212.77 L780.08 211.14 L780.79 209.51 L781.51 207.88 L782.24 206.25 L782.98 204.63 L783.73 203 L784.48 201.37 L785.25 199.74 L786.02 198.11 L786.81 196.48 L787.6 194.86 L788.4 193.23 L789.21 191.6 L790.02 189.97 L790.85 188.34 L791.69 186.71 L792.53 185.08 L793.38 183.46 L794.24 181.83 L795.11 180.2 L795.99 178.57 L796.87 176.94 L797.76 175.31 L798.66 173.69 L799.57 172.06 L800.49 170.43 L801.41 168.8 L802.34 167.17 L803.28 165.54 L804.23 163.91 L805.18 162.29 L806.14 160.66 L807.11 159.03 L808.09 157.4 L809.07 155.77 L810.06 154.14 L811.06 152.51 L812.07 150.89 L813.08 149.26 L814.09 147.63 L815.12 146 L816.15 144.37 L817.19 142.74 L818.23 141.11 L819.28 139.49 L820.34 137.86 L821.41 136.23 L822.47 134.6 L823.55 132.97 L824.63 131.34 L825.72 129.72 L826.81 128.09 L827.91 126.46 L829.02 124.83 L830.13 123.2 L831.24 121.57 L832.37 119.94 L833.49 118.32 L834.62 116.69 L835.76 115.06 L836.9 113.43 L838.05 111.8 L839.2 110.17 L840.36 108.54 L841.52 106.92 L842.69 105.29 L843.86 103.66 L845.03 102.03 L846.21 100.4 L847.4 98.77 L848.58 97.15 L849.78 95.52 L850.97 93.89 L852.17 92.26 L853.38 90.63 L854.58 89 L855.79 87.37 L857.01 85.75 L858.23 84.12 L859.45 82.49 L860.67 80.86 L861.9 79.23 L863.13 77.6 L864.37 75.97 L865.6 74.35 L866.84 72.72 L868.09 71.09 L869.33 69.46 L870.58 67.83 L871.83 66.2 L873.08 64.58 L874.33 62.95 L875.59 61.32 L876.85 59.69 L878.11 58.06 L879.37 56.43 L880.64 54.8 L881.9 53.18 L883.17 51.55 L884.44 49.92 L885.71 48.29 L886.98 46.66 L888.25 45.03 L889.53 43.4 L890.8 41.78 L892.08 40.15 L893.35 38.52 L894.63 36.89 L895.91 35.26 L897.18 33.63 L898.46 32.01 L899.74 30.38 L901.02 28.75 L902.3 27.12"/>
<path d="M902.3 613.38 L900.59 611.75 L898.89 610.12 L897.18 608.49 L895.48 606.87 L893.78 605.24 L892.07 603.61 L890.37 601.98 L888.67 600.35 L886.97 598.72 L885.27 597.1 L883.57 595.47 L881.87 593.84 L880.18 592.21 L878.48 590.58 L876.79 588.95 L875.1 587.32 L873.42 585.7 L871.73 584.07 L870.05 582.44 L868.37 580.81 L866.69 579.18 L865.01 577.55 L863.34 575.92 L861.67 574.3 L860 572.67 L858.34 571.04 L856.68 569.41 L855.02 567.78 L853.37 566.15 L851.72 564.52 L850.08 562.9 L848.43 561.27 L846.8 559.64 L845.16 558.01 L843.54 556.38 L841.91 554.75 L840.29 553.13 L838.68 551.5 L837.07 549.87 L835.46 548.24 L833.86 546.61 L832.27 544.98 L830.68 543.35 L829.09 541.73 L827.52 540.1 L825.94 538.47 L824.38 536.84 L822.82 535.21 L821.26 533.58 L819.71 531.96 L818.17 530.33 L816.63 528.7 L815.1 527.07 L813.58 525.44 L812.07 523.81 L810.56 522.18 L809.05 520.56 L807.56 518.93 L806.07 517.3 L804.59 515.67 L803.12 514.04 L801.65 512.41 L800.19 510.78 L798.74 509.16 L797.3 507.53 L795.87 505.9 L794.44 504.27 L793.02 502.64 L791.61 501.01 L790.21 499.38 L788.82 497.76 L787.44 496.13 L786.06 494.5 L784.69 492.87 L783.34 491.24 L781.99 489.61 L780.65 487.99 L779.32 486.36 L778 484.73 L776.69 483.1 L775.38 481.47 L774.09 479.84 L772.81 478.21 L771.54 476.59 L770.28 474.96 L769.02 473.33 L767.78 471.7 L766.55 470.07 L765.33 468.44 L764.12 466.81 L762.92 465.19 L761.73 463.56 L760.55 461.93 L759.38 460.3 L758.22 458.67 L757.07 457.04 L755.94 455.42 L754.81 453.79 L753.7 452.16 L752.6 450.53 L751.51 448.9 L750.43 447.27 L749.36 445.64 L748.31 444.02 L747.26 442.39 L746.23 440.76 L745.21 439.13 L744.2 437.5 L743.21 435.87 L742.22 434.25 L741.25 432.62 L740.29 430.99 L739.34 429.36 L738.41 427.73 L737.48 426.1 L736.57 424.47 L735.68 422.85 L734.79 421.22 L733.92 419.59 L733.06 417.96 L732.22 416.33 L731.38 414.7 L730.56 413.07 L729.75 411.45 L728.96 409.82 L728.18 408.19 L727.41 406.56 L726.66 404.93 L725.92 403.3 L725.19 401.68 L724.48 400.05 L723.77 398.42 L723.09 396.79 L722.41 395.16 L721.76 393.53 L721.11 391.9 L720.48 390.28 L719.86 388.65 L719.26 387.02 L718.67 385.39 L718.09 383.76 L717.53 382.13 L716.98 380.5 L716.44 378.88 L715.92 377.25 L715.42 375.62 L714.93 373.99 L714.45 372.36 L713.99 370.73 L713.54 369.11 L713.1 367.48 L712.68 365.85 L712.28 364.22 L711.89 362.59 L711.51 360.96 L711.15 359.33 L710.8 357.71 L710.47 356.08 L710.15 354.45 L709.85 352.82 L709.56 351.19 L709.29 349.56 L709.03 347.93 L708.78 346.31 L708.55 344.68 L708.34 343.05 L708.14 341.42 L707.95 339.79 L707.78 338.16 L707.62 336.54 L707.48 334.91 L707.36 333.28 L707.24 331.65 L707.15 330.02 L707.07 328.39 L707 326.76 L706.95 325.14 L706.91 323.51 L706.89 321.88 L706.88 320.25 L706.89 318.62 L706.91 316.99 L706.95 315.36 L707 313.74 L707.07 312.11 L707.15 310.48 L707.24 308.85 L707.36 307.22 L707.48 305.59 L707.62 303.96 L707.78 302.34 L707.95 300.71 L708.14 299.08 L708.34 297.45 L708.55 295.82 L708.78 294.19 L709.03 292.57 L709.29 290.94 L709.56 289.31 L709.85 287.68 L710.15 286.05 L710.47 284.42 L710.8 282.79 L711.15 281.17 L711.51 279.54 L711.89 277.91 L712.28 276.28 L712.68 274.65 L713.1 273.02 L713.54 271.39 L713.99 269.77 L714.45 268.14 L714.93 266.51 L715.42 264.88 L715.92 263.25 L716.44 261.62 L716.98 260 L717.53 258.37 L718.09 256.74 L718.67 255.11 L719.26 253.48 L719.86 251.85 L720.48 250.22 L721.11 248.6 L721.76 246.97 L722.41 245.34 L723.09 243.71 L723.77 242.08 L724.48 240.45 L725.19 238.82 L725.92 237.2 L726.66 235.57 L727.41 233.94 L728.18 232.31 L728.96 230.68 L729.75 229.05 L730.56 227.43 L731.38 225.8 L732.22 224.17 L733.06 222.54 L733.92 220.91 L734.79 219.28 L735.68 217.65 L736.57 216.03 L737.48 214.4 L738.41 212.77 L739.34 211.14 L740.29 209.51 L741.25 207.88 L742.22 206.25 L743.21 204.63 L744.2 203 L745.21 201.37 L746.23 199.74 L747.26 198.11 L748.31 196.48 L749.36 194.86 L750.43 193.23 L751.51 191.6 L752.6 189.97 L753.7 188.34 L754.81 186.71 L755.94 185.08 L757.07 183.46 L758.22 181.83 L759.38 180.2 L760.55 178.57 L761.73 176.94 L762.92 175.31 L764.12 173.69 L765.33 172.06 L766.55 170.43 L767.78 168.8 L769.02 167.17 L770.28 165.54 L771.54 163.91 L772.81 162.29 L774.09 160.66 L775.38 159.03 L776.69 157.4 L778 155.77 L779.32 154.14 L780.65 152.51 L781.99 150.89 L783.34 149.26 L784.69 147.63 L786.06 146 L787.44 144.37 L788.82 142.74 L790.21 141.11 L791.61 139.49 L793.02 137.86 L794.44 136.23 L795.87 134.6 L797.3 132.97 L798.74 131.34 L800.19 129.72 L801.65 128.09 L803.12 126.46 L804.59 124.83 L806.07 123.2 L807.56 121.57 L809.05 119.94 L810.56 118.32 L812.07 116.69 L813.58 115.06 L815.1 113.43 L816.63 111.8 L818.17 110.17 L819.71 108.54 L821.26 106.92 L822.82 105.29 L824.38 103.66 L825.94 102.03 L827.52 100.4 L829.09 98.77 L830.68 97.15 L832.27 95.52 L833.86 93.89 L835.46 92.26 L837.07 90.63 L838.68 89 L840.29 87.37 L841.91 85.75 L843.54 84.12 L845.16 82.49 L846.8 80.86 L848.43 79.23 L850.08 77.6 L851.72 75.97 L853.37 74.35 L855.02 72.72 L856.68 71.09 L858.34 69.46 L860 67.83 L861.67 66.2 L863.34 64.58 L865.01 62.95 L866.69 61.32 L868.37 59.69 L870.05 58.06 L871.73 56.43 L873.42 54.8 L875.1 53.18 L876.79 51.55 L878.48 49.92 L880.18 48.29 L881.87 46.66 L883.57 45.03 L885.27 43.4 L886.97 41.78 L888.67 40.15 L890.37 38.52 L892.07 36.89 L893.78 35.26 L895.48 33.63 L897.18 32.01 L898.89 30.38 L900.59 28.75 L902.3 27.12"/>
<path d="M902.3 613.38 L900.17 611.75 L898.04 610.12 L895.91 608.49 L893.77 606.87 L891.64 605.24 L889.52 603.61 L887.39 601.98 L885.26 600.35 L883.13 598.72 L881.01 597.1 L878.89 595.47 L876.77 593.84 L874.65 592.21 L872.53 590.58 L870.42 588.95 L868.3 587.32 L866.19 585.7 L864.09 584.07 L861.98 582.44 L859.88 580.81 L857.78 579.18 L855.69 577.55 L853.6 575.92 L851.51 574.3 L849.43 572.67 L847.35 571.04 L845.28 569.41 L843.2 567.78 L841.14 566.15 L839.08 564.52 L837.02 562.9 L834.97 561.27 L832.92 559.64 L830.88 558.01 L828.85 556.38 L826.81 554.75 L824.79 553.13 L822.77 551.5 L820.76 549.87 L818.75 548.24 L816.75 546.61 L814.76 544.98 L812.77 543.35 L810.79 541.73 L808.82 540.1 L806.85 538.47 L804.9 536.84 L802.94 535.21 L801 533.58 L799.06 531.96 L797.14 530.33 L795.22 528.7 L793.31 527.07 L791.4 525.44 L789.51 523.81 L787.62 522.18 L785.74 520.56 L783.87 518.93 L782.01 517.3 L780.16 515.67 L778.32 514.04 L776.49 512.41 L774.67 510.78 L772.85 509.16 L771.05 507.53 L769.26 505.9 L767.48 504.27 L765.7 502.64 L763.94 501.01 L762.19 499.38 L760.45 497.76 L758.72 496.13 L757 494.5 L755.29 492.87 L753.59 491.24 L751.91 489.61 L750.24 487.99 L748.57 486.36 L746.92 484.73 L745.28 483.1 L743.66 481.47 L742.04 479.84 L740.44 478.21 L738.85 476.59 L737.27 474.96 L735.7 473.33 L734.15 471.7 L732.61 470.07 L731.09 468.44 L729.57 466.81 L728.07 465.19 L726.58 463.56 L725.11 461.93 L723.65 460.3 L722.2 458.67 L720.77 457.04 L719.35 455.42 L717.94 453.79 L716.55 452.16 L715.17 450.53 L713.81 448.9 L712.46 447.27 L711.13 445.64 L709.81 444.02 L708.5 442.39 L707.21 440.76 L705.94 439.13 L704.68 437.5 L703.43 435.87 L702.2 434.25 L700.99 432.62 L699.79 430.99 L698.6 429.36 L697.43 427.73 L696.28 426.1 L695.14 424.47 L694.02 422.85 L692.92 421.22 L691.83 419.59 L690.75 417.96 L689.69 416.33 L688.65 414.7 L687.63 413.07 L686.62 411.45 L685.63 409.82 L684.65 408.19 L683.69 406.56 L682.75 404.93 L681.82 403.3 L680.91 401.68 L680.02 400.05 L679.14 398.42 L678.29 396.79 L677.44 395.16 L676.62 393.53 L675.81 391.9 L675.02 390.28 L674.25 388.65 L673.49 387.02 L672.76 385.39 L672.04 383.76 L671.33 382.13 L670.65 380.5 L669.98 378.88 L669.33 377.25 L668.7 375.62 L668.08 373.99 L667.49 372.36 L666.91 370.73 L666.35 369.11 L665.81 367.48 L665.28 365.85 L664.77 364.22 L664.29 362.59 L663.82 360.96 L663.36 359.33 L662.93 357.71 L662.51 356.08 L662.12 354.45 L661.74 352.82 L661.38 351.19 L661.03 349.56 L660.71 347.93 L660.4 346.31 L660.11 344.68 L659.85 343.05 L659.6 341.42 L659.36 339.79 L659.15 338.16 L658.95 336.54 L658.78 334.91 L658.62 333.28 L658.48 331.65 L658.36 330.02 L658.26 328.39 L658.17 326.76 L658.11 325.14 L658.06 323.51 L658.03 321.88 L658.02 320.25 L658.03 318.62 L658.06 316.99 L658.11 315.36 L658.17 313.74 L658.26 312.11 L658.36 310.48 L658.48 308.85 L658.62 307.22 L658.78 305.59 L658.95 303.96 L659.15 302.34 L659.36 300.71 L659.6 299.08 L659.85 297.45 L660.11 295.82 L660.4 294.19 L660.71 292.57 L661.03 290.94 L661.38 289.31 L661.74 287.68 L662.12 286.05 L662.51 284.42 L662.93 282.79 L663.36 281.17 L663.82 279.54 L664.29 277.91 L664.77 276.28 L665.28 274.65 L665.81 273.02 L666.35 271.39 L666.91 269.77 L667.49 268.14 L668.08 266.51 L668.7 264.88 L669.33 263.25 L669.98 261.62 L670.65 260 L671.33 258.37 L672.04 256.74 L672.76 255.11 L673.49 253.48 L674.25 251.85 L675.02 250.22 L675.81 248.6 L676.62 246.97 L677.44 245.34 L678.29 243.71 L679.14 242.08 L680.02 240.45 L680.91 238.82 L681.82 237.2 L682.75 235.57 L683.69 233.94 L684.65 232.31 L685.63 230.68 L686.62 229.05 L687.63 227.43 L688.65 225.8 L689.69 224.17 L690.75 222.54 L691.83 220.91 L692.92 219.28 L694.02 217.65 L695.14 216.03 L696.28 214.4 L697.43 212.77 L698.6 211.14 L699.79 209.51 L700.99 207.88 L702.2 206.25 L703.43 204.63 L704.68 203 L705.94 201.37 L707.21 199.74 L708.5 198.11 L709.81 196.48 L711.13 194.86 L712.46 193.23 L713.81 191.6 L715.17 189.97 L716.55 188.34 L717.94 186.71 L719.35 185.08 L720.77 183.46 L722.2 181.83 L723.65 180.2 L725.11 178.57 L726.58 176.94 L728.07 175.31 L729.57 173.69 L731.09 172.06 L732.61 170.43 L734.15 168.8 L735.7 167.17 L737.27 165.54 L738.85 163.91 L740.44 162.29 L742.04 160.66 L743.66 159.03 L745.28 157.4 L746.92 155.77 L748.57 154.14 L750.24 152.51 L751.91 150.89 L753.59 149.26 L755.29 147.63 L757 146 L758.72 144.37 L760.45 142.74 L762.19 141.11 L763.94 139.49 L765.7 137.86 L767.48 136.23 L769.26 134.6 L771.05 132.97 L772.85 131.34 L774.67 129.72 L776.49 128.09 L778.32 126.46 L780.16 124.83 L782.01 123.2 L783.87 121.57 L785.74 119.94 L787.62 118.32 L789.51 116.69 L791.4 115.06 L793.31 113.43 L795.22 111.8 L797.14 110.17 L799.06 108.54 L801 106.92 L802.94 105.29 L804.9 103.66 L806.85 102.03 L808.82 100.4 L810.79 98.77 L812.77 97.15 L814.76 95.52 L816.75 93.89 L818.75 92.26 L820.76 90.63 L822.77 89 L824.79 87.37 L826.81 85.75 L828.85 84.12 L830.88 82.49 L832.92 80.86 L834.97 79.23 L837.02 77.6 L839.08 75.97 L841.14 74.35 L843.2 72.72 L845.28 71.09 L847.35 69.46 L849.43 67.83 L851.51 66.2 L853.6 64.58 L855.69 62.95 L857.78 61.32 L859.88 59.69 L861.98 58.06 L864.09 56.43 L866.19 54.8 L868.3 53.18 L870.42 51.55 L872.53 49.92 L874.65 48.29 L876.77 46.66 L878.89 45.03 L881.01 43.4 L883.13 41.78 L885.26 40.15 L887.39 38.52 L889.52 36.89 L891.64 35.26 L893.77 33.63 L895.91 32.01 L898.04 30.38 L900.17 28.75 L902.3 27.12"/>
<path d="M902.3 613.38 L899.74 611.75 L897.18 610.12 L894.63 608.49 L892.07 606.87 L889.51 605.24 L886.96 603.61 L884.4 601.98 L881.85 600.35 L879.3 598.72 L876.75 597.1 L874.2 595.47 L871.66 593.84 L869.12 592.21 L866.58 590.58 L864.04 588.95 L861.5 587.32 L858.97 585.7 L856.44 584.07 L853.92 582.44 L851.4 580.81 L848.88 579.18 L846.37 577.55 L843.86 575.92 L841.35 574.3 L838.86 572.67 L836.36 571.04 L833.87 569.41 L831.39 567.78 L828.91 566.15 L826.43 564.52 L823.96 562.9 L821.5 561.27 L819.05 559.64 L816.6 558.01 L814.15 556.38 L811.72 554.75 L809.29 553.13 L806.87 551.5 L804.45 549.87 L802.04 548.24 L799.64 546.61 L797.25 544.98 L794.87 543.35 L792.49 541.73 L790.12 540.1 L787.76 538.47 L785.41 536.84 L783.07 535.21 L780.74 533.58 L778.42 531.96 L776.1 530.33 L773.8 528.7 L771.51 527.07 L769.22 525.44 L766.95 523.81 L764.68 522.18 L762.43 520.56 L760.19 518.93 L757.96 517.3 L755.73 515.67 L753.53 514.04 L751.33 512.41 L749.14 510.78 L746.96 509.16 L744.8 507.53 L742.65 505.9 L740.51 504.27 L738.38 502.64 L736.27 501.01 L734.17 499.38 L732.08 497.76 L730 496.13 L727.94 494.5 L725.89 492.87 L723.85 491.24 L721.83 489.61 L719.82 487.99 L717.83 486.36 L715.85 484.73 L713.88 483.1 L711.93 481.47 L709.99 479.84 L708.07 478.21 L706.16 476.59 L704.26 474.96 L702.39 473.33 L700.52 471.7 L698.67 470.07 L696.84 468.44 L695.03 466.81 L693.22 465.19 L691.44 463.56 L689.67 461.93 L687.92 460.3 L686.18 458.67 L684.46 457.04 L682.76 455.42 L681.07 453.79 L679.4 452.16 L677.75 450.53 L676.11 448.9 L674.5 447.27 L672.89 445.64 L671.31 444.02 L669.74 442.39 L668.2 440.76 L666.67 439.13 L665.15 437.5 L663.66 435.87 L662.18 434.25 L660.72 432.62 L659.28 430.99 L657.86 429.36 L656.46 427.73 L655.08 426.1 L653.71 424.47 L652.37 422.85 L651.04 421.22 L649.73 419.59 L648.44 417.96 L647.17 416.33 L645.92 414.7 L644.69 413.07 L643.48 411.45 L642.29 409.82 L641.12 408.19 L639.97 406.56 L638.84 404.93 L637.73 403.3 L636.63 401.68 L635.56 400.05 L634.51 398.42 L633.48 396.79 L632.47 395.16 L631.48 393.53 L630.51 391.9 L629.57 390.28 L628.64 388.65 L627.73 387.02 L626.85 385.39 L625.98 383.76 L625.14 382.13 L624.32 380.5 L623.52 378.88 L622.74 377.25 L621.98 375.62 L621.24 373.99 L620.53 372.36 L619.83 370.73 L619.16 369.11 L618.51 367.48 L617.88 365.85 L617.27 364.22 L616.68 362.59 L616.12 360.96 L615.58 359.33 L615.05 357.71 L614.56 356.08 L614.08 354.45 L613.62 352.82 L613.19 351.19 L612.78 349.56 L612.39 347.93 L612.02 346.31 L611.68 344.68 L611.35 343.05 L611.05 341.42 L610.78 339.79 L610.52 338.16 L610.29 336.54 L610.07 334.91 L609.88 333.28 L609.72 331.65 L609.57 330.02 L609.45 328.39 L609.35 326.76 L609.27 325.14 L609.21 323.51 L609.18 321.88 L609.17 320.25 L609.18 318.62 L609.21 316.99 L609.27 315.36 L609.35 313.74 L609.45 312.11 L609.57 310.48 L609.72 308.85 L609.88 307.22 L610.07 305.59 L610.29 303.96 L610.52 302.34 L610.78 300.71 L611.05 299.08 L611.35 297.45 L611.68 295.82 L612.02 294.19 L612.39 292.57 L612.78 290.94 L613.19 289.31 L613.62 287.68 L614.08 286.05 L614.56 284.42 L615.05 282.79 L615.58 281.17 L616.12 279.54 L616.68 277.91 L617.27 276.28 L617.88 274.65 L618.51 273.02 L619.16 271.39 L619.83 269.77 L620.53 268.14 L621.24 266.51 L621.98 264.88 L622.74 263.25 L623.52 261.62 L624.32 260 L625.14 258.37 L625.98 256.74 L626.85 255.11 L627.73 253.48 L628.64 251.85 L629.57 250.22 L630.51 248.6 L631.48 246.97 L632.47 245.34 L633.48 243.71 L634.51 242.08 L635.56 240.45 L636.63 238.82 L637.73 237.2 L638.84 235.57 L639.97 233.94 L641.12 232.31 L642.29 230.68 L643.48 229.05 L644.69 227.43 L645.92 225.8 L647.17 224.17 L648.44 222.54 L649.73 220.91 L651.04 219.28 L652.37 217.65 L653.71 216.03 L655.08 214.4 L656.46 212.77 L657.86 211.14 L659.28 209.51 L660.72 207.88 L662.18 206.25 L663.66 204.63 L665.15 203 L666.67 201.37 L668.2 199.74 L669.74 198.11 L671.31 196.48 L672.89 194.86 L674.5 193.23 L676.11 191.6 L677.75 189.97 L679.4 188.34 L681.07 186.71 L682.76 185.08 L684.46 183.46 L686.18 181.83 L687.92 180.2 L689.67 178.57 L691.44 176.94 L693.22 175.31 L695.03 173.69 L696.84 172.06 L698.67 170.43 L700.52 168.8 L702.39 167.17 L704.26 165.54 L706.16 163.91 L708.07 162.29 L709.99 160.66 L711.93 159.03 L713.88 157.4 L715.85 155.77 L717.83 154.14 L719.82 152.51 L721.83 150.89 L723.85 149.26 L725.89 147.63 L727.94 146 L730 144.37 L732.08 142.74 L734.17 141.11 L736.27 139.49 L738.38 137.86 L740.51 136.23 L742.65 134.6 L744.8 132.97 L746.96 131.34 L749.14 129.72 L751.33 128.09 L753.53 126.46 L755.73 124.83 L757.96 123.2 L760.19 121.57 L762.43 119.94 L764.68 118.32 L766.95 116.69 L769.22 115.06 L771.51 113.43 L773.8 111.8 L776.1 110.17 L778.42 108.54 L780.74 106.92 L783.07 105.29 L785.41 103.66 L787.76 102.03 L790.12 100.4 L792.49 98.77 L794.87 97.15 L797.25 95.52 L799.64 93.89 L802.04 92.26 L804.45 90.63 L806.87 89 L809.29 87.37 L811.72 85.75 L814.15 84.12 L816.6 82.49 L819.05 80.86 L821.5 79.23 L823.96 77.6 L826.43 75.97 L828.91 74.35 L831.39 72.72 L833.87 71.09 L836.36 69.46 L838.86 67.83 L841.35 66.2 L843.86 64.58 L846.37 62.95 L848.88 61.32 L851.4 59.69 L853.92 58.06 L856.44 56.43 L858.97 54.8 L861.5 53.18 L864.04 51.55 L866.58 49.92 L869.12 48.29 L871.66 46.66 L874.2 45.03 L876.75 43.4 L879.3 41.78 L881.85 40.15 L884.4 38.52 L886.96 36.89 L889.51 35.26 L892.07 33.63 L894.63 32.01 L897.18 30.38 L899.74 28.75 L902.3 27.12"/>
<path d="M902.3 613.38 L899.32 611.75 L896.33 610.12 L893.35 608.49 L890.36 606.87 L887.38 605.24 L884.4 603.61 L881.42 601.98 L878.44 600.35 L875.47 598.72 L872.49 597.1 L869.52 595.47 L866.55 593.84 L863.59 592.21 L860.62 590.58 L857.66 588.95 L854.7 587.32 L851.75 585.7 L848.8 584.07 L845.86 582.44 L842.91 580.81 L839.98 579.18 L837.05 577.55 L834.12 575.92 L831.2 574.3 L828.28 572.67 L825.37 571.04 L822.47 569.41 L819.57 567.78 L816.67 566.15 L813.79 564.52 L810.91 562.9 L808.04 561.27 L805.17 559.64 L802.31 558.01 L799.46 556.38 L796.62 554.75 L793.79 553.13 L790.96 551.5 L788.14 549.87 L785.33 548.24 L782.53 546.61 L779.74 544.98 L776.96 543.35 L774.19 541.73 L771.43 540.1 L768.68 538.47 L765.93 536.84 L763.2 535.21 L760.48 533.58 L757.77 531.96 L755.07 530.33 L752.38 528.7 L749.71 527.07 L747.04 525.44 L744.39 523.81 L741.75 522.18 L739.12 520.56 L736.5 518.93 L733.9 517.3 L731.31 515.67 L728.73 514.04 L726.16 512.41 L723.61 510.78 L721.08 509.16 L718.55 507.53 L716.04 505.9 L713.55 504.27 L711.06 502.64 L708.6 501.01 L706.15 499.38 L703.71 497.76 L701.29 496.13 L698.88 494.5 L696.49 492.87 L694.11 491.24 L691.75 489.61 L689.41 487.99 L687.08 486.36 L684.77 484.73 L682.48 483.1 L680.2 481.47 L677.94 479.84 L675.69 478.21 L673.47 476.59 L671.26 474.96 L669.07 473.33 L666.89 471.7 L664.74 470.07 L662.6 468.44 L660.48 466.81 L658.38 465.19 L656.3 463.56 L654.23 461.93 L652.19 460.3 L650.16 458.67 L648.16 457.04 L646.17 455.42 L644.2 453.79 L642.25 452.16 L640.32 450.53 L638.42 448.9 L636.53 447.27 L634.66 445.64 L632.81 444.02 L630.99 442.39 L629.18 440.76 L627.39 439.13 L625.63 437.5 L623.88 435.87 L622.16 434.25 L620.46 432.62 L618.78 430.99 L617.12 429.36 L615.49 427.73 L613.87 426.1 L612.28 424.47 L610.71 422.85 L609.16 421.22 L607.64 419.59 L606.13 417.96 L604.65 416.33 L603.19 414.7 L601.76 413.07 L600.35 411.45 L598.96 409.82 L597.59 408.19 L596.25 406.56 L594.93 404.93 L593.63 403.3 L592.36 401.68 L591.11 400.05 L589.88 398.42 L588.68 396.79 L587.5 395.16 L586.35 393.53 L585.22 391.9 L584.11 390.28 L583.03 388.65 L581.97 387.02 L580.94 385.39 L579.93 383.76 L578.95 382.13 L577.99 380.5 L577.05 378.88 L576.14 377.25 L575.26 375.62 L574.4 373.99 L573.56 372.36 L572.75 370.73 L571.97 369.11 L571.21 367.48 L570.47 365.85 L569.76 364.22 L569.08 362.59 L568.42 360.96 L567.79 359.33 L567.18 357.71 L566.6 356.08 L566.04 354.45 L565.51 352.82 L565.01 351.19 L564.53 349.56 L564.07 347.93 L563.64 346.31 L563.24 344.68 L562.86 343.05 L562.51 341.42 L562.19 339.79 L561.89 338.16 L561.62 336.54 L561.37 334.91 L561.15 333.28 L560.95 331.65 L560.78 330.02 L560.64 328.39 L560.52 326.76 L560.43 325.14 L560.37 323.51 L560.33 321.88 L560.31 320.25 L560.33 318.62 L560.37 316.99 L560.43 315.36 L560.52 313.74 L560.64 312.11 L560.78 310.48 L560.95 308.85 L561.15 307.22 L561.37 305.59 L561.62 303.96 L561.89 302.34 L562.19 300.71 L562.51 299.08 L562.86 297.45 L563.24 295.82 L563.64 294.19 L564.07 292.57 L564.53 290.94 L565.01 289.31 L565.51 287.68 L566.04 286.05 L566.6 284.42 L567.18 282.79 L567.79 281.17 L568.42 279.54 L569.08 277.91 L569.76 276.28 L570.47 274.65 L571.21 273.02 L571.97 271.39 L572.75 269.77 L573.56 268.14 L574.4 266.51 L575.26 264.88 L576.14 263.25 L577.05 261.62 L577.99 260 L578.95 258.37 L579.93 256.74 L580.94 255.11 L581.97 253.48 L583.03 251.85 L584.11 250.22 L585.22 248.6 L586.35 246.97 L587.5 245.34 L588.68 243.71 L589.88 242.08 L591.11 240.45 L592.36 238.82 L593.63 237.2 L594.93 235.57 L596.25 233.94 L597.59 232.31 L598.96 230.68 L600.35 229.05 L601.76 227.43 L603.19 225.8 L604.65 224.17 L606.13 222.54 L607.64 220.91 L609.16 219.28 L610.71 217.65 L612.28 216.03 L613.87 214.4 L615.49 212.77 L617.12 211.14 L618.78 209.51 L620.46 207.88 L622.16 206.25 L623.88 204.63 L625.63 203 L627.39 201.37 L629.18 199.74 L630.99 198.11 L632.81 196.48 L634.66 194.86 L636.53 193.23 L638.42 191.6 L640.32 189.97 L642.25 188.34 L644.2 186.71 L646.17 185.08 L648.16 183.46 L650.16 181.83 L652.19 180.2 L654.23 178.57 L656.3 176.94 L658.38 175.31 L660.48 173.69 L662.6 172.06 L664.74 170.43 L666.89 168.8 L669.07 167.17 L671.26 165.54 L673.47 163.91 L675.69 162.29 L677.94 160.66 L680.2 159.03 L682.48 157.4 L684.77 155.77 L687.08 154.14 L689.41 152.51 L691.75 150.89 L694.11 149.26 L696.49 147.63 L698.88 146 L701.29 144.37 L703.71 142.74 L706.15 141.11 L708.6 139.49 L711.06 137.86 L713.55 136.23 L716.04 134.6 L718.55 132.97 L721.08 131.34 L723.61 129.72 L726.16 128.09 L728.73 126.46 L731.31 124.83 L733.9 123.2 L736.5 121.57 L739.12 119.94 L741.75 118.32 L744.39 116.69 L747.04 115.06 L749.71 113.43 L752.38 111.8 L755.07 110.17 L757.77 108.54 L760.48 106.92 L763.2 105.29 L765.93 103.66 L768.68 102.03 L771.43 100.4 L774.19 98.77 L776.96 97.15 L779.74 95.52 L782.53 93.89 L785.33 92.26 L788.14 90.63 L790.96 89 L793.79 87.37 L796.62 85.75 L799.46 84.12 L802.31 82.49 L805.17 80.86 L808.04 79.23 L810.91 77.6 L813.79 75.97 L816.67 74.35 L819.57 72.72 L822.47 71.09 L825.37 69.46 L828.28 67.83 L831.2 66.2 L834.12 64.58 L837.05 62.95 L839.98 61.32 L842.91 59.69 L845.86 58.06 L848.8 56.43 L851.75 54.8 L854.7 53.18 L857.66 51.55 L860.62 49.92 L863.59 48.29 L866.55 46.66 L869.52 45.03 L872.49 43.4 L875.47 41.78 L878.44 40.15 L881.42 38.52 L884.4 36.89 L887.38 35.26 L890.36 33.63 L893.35 32.01 L896.33 30.38 L899.32 28.75 L902.3 27.12"/>
<path d="M902.3 613.38 L898.89 611.75 L895.48 610.12 L892.07 608.49 L888.66 606.87 L885.25 605.24 L881.85 603.61 L878.44 601.98 L875.04 600.35 L871.64 598.72 L868.24 597.1 L864.84 595.47 L861.45 593.84 L858.06 592.21 L854.67 590.58 L851.29 588.95 L847.91 587.32 L844.53 585.7 L841.16 584.07 L837.79 582.44 L834.43 580.81 L831.08 579.18 L827.72 577.55 L824.38 575.92 L821.04 574.3 L817.71 572.67 L814.38 571.04 L811.06 569.41 L807.75 567.78 L804.44 566.15 L801.14 564.52 L797.85 562.9 L794.57 561.27 L791.3 559.64 L788.03 558.01 L784.77 556.38 L781.52 554.75 L778.28 553.13 L775.05 551.5 L771.83 549.87 L768.62 548.24 L765.42 546.61 L762.24 544.98 L759.06 543.35 L755.89 541.73 L752.73 540.1 L749.59 538.47 L746.45 536.84 L743.33 535.21 L740.22 533.58 L737.12 531.96 L734.04 530.33 L730.97 528.7 L727.91 527.07 L724.86 525.44 L721.83 523.81 L718.81 522.18 L715.81 520.56 L712.82 518.93 L709.84 517.3 L706.88 515.67 L703.93 514.04 L701 512.41 L698.09 510.78 L695.19 509.16 L692.3 507.53 L689.43 505.9 L686.58 504.27 L683.75 502.64 L680.93 501.01 L678.12 499.38 L675.34 497.76 L672.57 496.13 L669.82 494.5 L667.09 492.87 L664.37 491.24 L661.67 489.61 L659 487.99 L656.34 486.36 L653.7 484.73 L651.07 483.1 L648.47 481.47 L645.89 479.84 L643.32 478.21 L640.78 476.59 L638.25 474.96 L635.75 473.33 L633.26 471.7 L630.8 470.07 L628.36 468.44 L625.93 466.81 L623.53 465.19 L621.15 463.56 L618.79 461.93 L616.46 460.3 L614.14 458.67 L611.85 457.04 L609.58 455.42 L607.33 453.79 L605.1 452.16 L602.9 450.53 L600.72 448.9 L598.56 447.27 L596.43 445.64 L594.31 444.02 L592.23 442.39 L590.16 440.76 L588.12 439.13 L586.1 437.5 L584.11 435.87 L582.14 434.25 L580.2 432.62 L578.28 430.99 L576.38 429.36 L574.51 427.73 L572.67 426.1 L570.85 424.47 L569.05 422.85 L567.28 421.22 L565.54 419.59 L563.82 417.96 L562.13 416.33 L560.46 414.7 L558.82 413.07 L557.21 411.45 L555.62 409.82 L554.06 408.19 L552.52 406.56 L551.02 404.93 L549.53 403.3 L548.08 401.68 L546.65 400.05 L545.25 398.42 L543.88 396.79 L542.53 395.16 L541.21 393.53 L539.92 391.9 L538.66 390.28 L537.42 388.65 L536.21 387.02 L535.03 385.39 L533.88 383.76 L532.75 382.13 L531.66 380.5 L530.59 378.88 L529.55 377.25 L528.54 375.62 L527.55 373.99 L526.6 372.36 L525.67 370.73 L524.78 369.11 L523.91 367.48 L523.07 365.85 L522.26 364.22 L521.48 362.59 L520.72 360.96 L520 359.33 L519.31 357.71 L518.64 356.08 L518 354.45 L517.4 352.82 L516.82 351.19 L516.27 349.56 L515.75 347.93 L515.26 346.31 L514.8 344.68 L514.37 343.05 L513.97 341.42 L513.6 339.79 L513.26 338.16 L512.95 336.54 L512.66 334.91 L512.41 333.28 L512.19 331.65 L512 330.02 L511.83 328.39 L511.7 326.76 L511.59 325.14 L511.52 323.51 L511.47 321.88 L511.46 320.25 L511.47 318.62 L511.52 316.99 L511.59 315.36 L511.7 313.74 L511.83 312.11 L512 310.48 L512.19 308.85 L512.41 307.22 L512.66 305.59 L512.95 303.96 L513.26 302.34 L513.6 300.71 L513.97 299.08 L514.37 297.45 L514.8 295.82 L515.26 294.19 L515.75 292.57 L516.27 290.94 L516.82 289.31 L517.4 287.68 L518 286.05 L518.64 284.42 L519.31 282.79 L520 281.17 L520.72 279.54 L521.48 277.91 L522.26 276.28 L523.07 274.65 L523.91 273.02 L524.78 271.39 L525.67 269.77 L526.6 268.14 L527.55 266.51 L528.54 264.88 L529.55 263.25 L530.59 261.62 L531.66 260 L532.75 258.37 L533.88 256.74 L535.03 255.11 L536.21 253.48 L537.42 251.85 L538.66 250.22 L539.92 248.6 L541.21 246.97 L542.53 245.34 L543.88 243.71 L545.25 242.08 L546.65 240.45 L548.08 238.82 L549.53 237.2 L551.02 235.57 L552.52 233.94 L554.06 232.31 L555.62 230.68 L557.21 229.05 L558.82 227.43 L560.46 225.8 L562.13 224.17 L563.82 222.54 L565.54 220.91 L567.28 219.28 L569.05 217.65 L570.85 216.03 L572.67 214.4 L574.51 212.77 L576.38 211.14 L578.28 209.51 L580.2 207.88 L582.14 206.25 L584.11 204.63 L586.1 203 L588.12 201.37 L590.16 199.74 L592.23 198.11 L594.31 196.48 L596.43 194.86 L598.56 193.23 L600.72 191.6 L602.9 189.97 L605.1 188.34 L607.33 186.71 L609.58 185.08 L611.85 183.46 L614.14 181.83 L616.46 180.2 L618.79 178.57 L621.15 176.94 L623.53 175.31 L625.93 173.69 L628.36 172.06 L630.8 170.43 L633.26 168.8 L635.75 167.17 L638.25 165.54 L640.78 163.91 L643.32 162.29 L645.89 160.66 L648.47 159.03 L651.07 157.4 L653.7 155.77 L656.34 154.14 L659 152.51 L661.67 150.89 L664.37 149.26 L667.09 147.63 L669.82 146 L672.57 144.37 L675.34 142.74 L678.12 141.11 L680.93 139.49 L683.75 137.86 L686.58 136.23 L689.43 134.6 L692.3 132.97 L695.19 131.34 L698.09 129.72 L701 128.09 L703.93 126.46 L706.88 124.83 L709.84 123.2 L712.82 121.57 L715.81 119.94 L718.81 118.32 L721.83 116.69 L724.86 115.06 L727.91 113.43 L730.97 111.8 L734.04 110.17 L737.12 108.54 L740.22 106.92 L743.33 105.29 L746.45 103.66 L749.59 102.03 L752.73 100.4 L755.89 98.77 L759.06 97.15 L762.24 95.52 L765.42 93.89 L768.62 92.26 L771.83 90.63 L775.05 89 L778.28 87.37 L781.52 85.75 L784.77 84.12 L788.03 82.49 L791.3 80.86 L794.57 79.23 L797.85 77.6 L801.14 75.97 L804.44 74.35 L807.75 72.72 L811.06 71.09 L814.38 69.46 L817.71 67.83 L821.04 66.2 L824.38 64.58 L827.72 62.95 L831.08 61.32 L834.43 59.69 L837.79 58.06 L841.16 56.43 L844.53 54.8 L847.91 53.18 L851.29 51.55 L854.67 49.92 L858.06 48.29 L861.45 46.66 L864.84 45.03 L868.24 43.4 L871.64 41.78 L875.04 40.15 L878.44 38.52 L881.85 36.89 L885.25 35.26 L888.66 33.63 L892.07 32.01 L895.48 30.38 L898.89 28.75 L902.3 27.12"/>
<path d="M902.3 613.38 L898.46 611.75 L894.63 610.12 L890.79 608.49 L886.95 606.87 L883.12 605.24 L879.29 603.61 L875.46 601.98 L871.63 600.35 L867.8 598.72 L863.98 597.1 L860.16 595.47 L856.34 593.84 L852.53 592.21 L848.71 590.58 L844.91 588.95 L841.11 587.32 L837.31 585.7 L833.52 584.07 L829.73 582.44 L825.95 580.81 L822.17 579.18 L818.4 577.55 L814.64 575.92 L810.88 574.3 L807.13 572.67 L803.39 571.04 L799.66 569.41 L795.93 567.78 L792.21 566.15 L788.5 564.52 L784.8 562.9 L781.1 561.27 L777.42 559.64 L773.75 558.01 L770.08 556.38 L766.43 554.75 L762.78 553.13 L759.15 551.5 L755.53 549.87 L751.92 548.24 L748.32 546.61 L744.73 544.98 L741.15 543.35 L737.59 541.73 L734.04 540.1 L730.5 538.47 L726.97 536.84 L723.46 535.21 L719.96 533.58 L716.48 531.96 L713.01 530.33 L709.55 528.7 L706.11 527.07 L702.68 525.44 L699.27 523.81 L695.88 522.18 L692.5 520.56 L689.13 518.93 L685.78 517.3 L682.45 515.67 L679.14 514.04 L675.84 512.41 L672.56 510.78 L669.3 509.16 L666.05 507.53 L662.82 505.9 L659.62 504.27 L656.43 502.64 L653.25 501.01 L650.1 499.38 L646.97 497.76 L643.85 496.13 L640.76 494.5 L637.68 492.87 L634.63 491.24 L631.6 489.61 L628.58 487.99 L625.59 486.36 L622.62 484.73 L619.67 483.1 L616.74 481.47 L613.83 479.84 L610.95 478.21 L608.09 476.59 L605.25 474.96 L602.43 473.33 L599.63 471.7 L596.86 470.07 L594.11 468.44 L591.39 466.81 L588.69 465.19 L586.01 463.56 L583.36 461.93 L580.73 460.3 L578.12 458.67 L575.54 457.04 L572.99 455.42 L570.46 453.79 L567.95 452.16 L565.47 450.53 L563.02 448.9 L560.59 447.27 L558.19 445.64 L555.82 444.02 L553.47 442.39 L551.14 440.76 L548.85 439.13 L546.58 437.5 L544.34 435.87 L542.12 434.25 L539.94 432.62 L537.78 430.99 L535.64 429.36 L533.54 427.73 L531.46 426.1 L529.42 424.47 L527.4 422.85 L525.41 421.22 L523.45 419.59 L521.51 417.96 L519.61 416.33 L517.73 414.7 L515.89 413.07 L514.07 411.45 L512.29 409.82 L510.53 408.19 L508.8 406.56 L507.1 404.93 L505.44 403.3 L503.8 401.68 L502.19 400.05 L500.62 398.42 L499.07 396.79 L497.56 395.16 L496.07 393.53 L494.62 391.9 L493.2 390.28 L491.81 388.65 L490.45 387.02 L489.12 385.39 L487.83 383.76 L486.56 382.13 L485.33 380.5 L484.13 378.88 L482.96 377.25 L481.82 375.62 L480.71 373.99 L479.64 372.36 L478.6 370.73 L477.59 369.11 L476.61 367.48 L475.67 365.85 L474.75 364.22 L473.87 362.59 L473.03 360.96 L472.21 359.33 L471.43 357.71 L470.68 356.08 L469.97 354.45 L469.28 352.82 L468.64 351.19 L468.02 349.56 L467.43 347.93 L466.88 346.31 L466.37 344.68 L465.88 343.05 L465.43 341.42 L465.01 339.79 L464.63 338.16 L464.28 336.54 L463.96 334.91 L463.68 333.28 L463.43 331.65 L463.21 330.02 L463.02 328.39 L462.87 326.76 L462.76 325.14 L462.67 323.51 L462.62 321.88 L462.6 320.25 L462.62 318.62 L462.67 316.99 L462.76 315.36 L462.87 313.74 L463.02 312.11 L463.21 310.48 L463.43 308.85 L463.68 307.22 L463.96 305.59 L464.28 303.96 L464.63 302.34 L465.01 300.71 L465.43 299.08 L465.88 297.45 L466.37 295.82 L466.88 294.19 L467.43 292.57 L468.02 290.94 L468.64 289.31 L469.28 287.68 L469.97 286.05 L470.68 284.42 L471.43 282.79 L472.21 281.17 L473.03 279.54 L473.87 277.91 L474.75 276.28 L475.67 274.65 L476.61 273.02 L477.59 271.39 L478.6 269.77 L479.64 268.14 L480.71 266.51 L481.82 264.88 L482.96 263.25 L484.13 261.62 L485.33 260 L486.56 258.37 L487.83 256.74 L489.12 255.11 L490.45 253.48 L491.81 251.85 L493.2 250.22 L494.62 248.6 L496.07 246.97 L497.56 245.34 L499.07 243.71 L500.62 242.08 L502.19 240.45 L503.8 238.82 L505.44 237.2 L507.1 235.57 L508.8 233.94 L510.53 232.31 L512.29 230.68 L514.07 229.05 L515.89 227.43 L517.73 225.8 L519.61 224.17 L521.51 222.54 L523.45 220.91 L525.41 219.28 L527.4 217.65 L529.42 216.03 L531.46 214.4 L533.54 212.77 L535.64 211.14 L537.78 209.51 L539.94 207.88 L542.12 206.25 L544.34 204.63 L546.58 203 L548.85 201.37 L551.14 199.74 L553.47 198.11 L555.82 196.48 L558.19 194.86 L560.59 193.23 L563.02 191.6 L565.47 189.97 L567.95 188.34 L570.46 186.71 L572.99 185.08 L575.54 183.46 L578.12 181.83 L580.73 180.2 L583.36 178.57 L586.01 176.94 L588.69 175.31 L591.39 173.69 L594.11 172.06 L596.86 170.43 L599.63 168.8 L602.43 167.17 L605.25 165.54 L608.09 163.91 L610.95 162.29 L613.83 160.66 L616.74 159.03 L619.67 157.4 L622.62 155.77 L625.59 154.14 L628.58 152.51 L631.6 150.89 L634.63 149.26 L637.68 147.63 L640.76 146 L643.85 144.37 L646.97 142.74 L650.1 141.11 L653.25 139.49 L656.43 137.86 L659.62 136.23 L662.82 134.6 L666.05 132.97 L669.3 131.34 L672.56 129.72 L675.84 128.09 L679.14 126.46 L682.45 124.83 L685.78 123.2 L689.13 121.57 L692.5 119.94 L695.88 118.32 L699.27 116.69 L702.68 115.06 L706.11 113.43 L709.55 111.8 L713.01 110.17 L716.48 108.54 L719.96 106.92 L723.46 105.29 L726.97 103.66 L730.5 102.03 L734.04 100.4 L737.59 98.77 L741.15 97.15 L744.73 95.52 L748.32 93.89 L751.92 92.26 L755.53 90.63 L759.15 89 L762.78 87.37 L766.43 85.75 L770.08 84.12 L773.75 82.49 L777.42 80.86 L781.1 79.23 L784.8 77.6 L788.5 75.97 L792.21 74.35 L795.93 72.72 L799.66 71.09 L803.39 69.46 L807.13 67.83 L810.88 66.2 L814.64 64.58 L818.4 62.95 L822.17 61.32 L825.95 59.69 L829.73 58.06 L833.52 56.43 L837.31 54.8 L841.11 53.18 L844.91 51.55 L848.71 49.92 L852.53 48.29 L856.34 46.66 L860.16 45.03 L863.98 43.4 L867.8 41.78 L871.63 40.15 L875.46 38.52 L879.29 36.89 L883.12 35.26 L886.95 33.63 L890.79 32.01 L894.63 30.38 L898.46 28.75 L902.3 27.12"/>
<path d="M902.3 613.38 L898.04 611.75 L893.77 610.12 L889.51 608.49 L885.25 606.87 L880.99 605.24 L876.73 603.61 L872.47 601.98 L868.22 600.35 L863.97 598.72 L859.72 597.1 L855.47 595.47 L851.23 593.84 L846.99 592.21 L842.76 590.58 L838.53 588.95 L834.31 587.32 L830.09 585.7 L825.87 584.07 L821.67 582.44 L817.46 580.81 L813.27 579.18 L809.08 577.55 L804.9 575.92 L800.72 574.3 L796.56 572.67 L792.4 571.04 L788.25 569.41 L784.11 567.78 L779.98 566.15 L775.85 564.52 L771.74 562.9 L767.64 561.27 L763.54 559.64 L759.46 558.01 L755.39 556.38 L751.33 554.75 L747.28 553.13 L743.24 551.5 L739.22 549.87 L735.21 548.24 L731.21 546.61 L727.22 544.98 L723.25 543.35 L719.29 541.73 L715.34 540.1 L711.41 538.47 L707.49 536.84 L703.59 535.21 L699.7 533.58 L695.83 531.96 L691.97 530.33 L688.13 528.7 L684.31 527.07 L680.5 525.44 L676.71 523.81 L672.94 522.18 L669.18 520.56 L665.45 518.93 L661.73 517.3 L658.02 515.67 L654.34 514.04 L650.68 512.41 L647.03 510.78 L643.41 509.16 L639.8 507.53 L636.22 505.9 L632.65 504.27 L629.11 502.64 L625.58 501.01 L622.08 499.38 L618.6 497.76 L615.14 496.13 L611.7 494.5 L608.28 492.87 L604.89 491.24 L601.52 489.61 L598.17 487.99 L594.85 486.36 L591.54 484.73 L588.27 483.1 L585.01 481.47 L581.78 479.84 L578.58 478.21 L575.4 476.59 L572.24 474.96 L569.11 473.33 L566 471.7 L562.92 470.07 L559.87 468.44 L556.84 466.81 L553.84 465.19 L550.87 463.56 L547.92 461.93 L545 460.3 L542.1 458.67 L539.24 457.04 L536.4 455.42 L533.59 453.79 L530.8 452.16 L528.05 450.53 L525.32 448.9 L522.63 447.27 L519.96 445.64 L517.32 444.02 L514.71 442.39 L512.13 440.76 L509.58 439.13 L507.05 437.5 L504.56 435.87 L502.1 434.25 L499.67 432.62 L497.27 430.99 L494.91 429.36 L492.57 427.73 L490.26 426.1 L487.99 424.47 L485.74 422.85 L483.53 421.22 L481.35 419.59 L479.2 417.96 L477.09 416.33 L475 414.7 L472.95 413.07 L470.94 411.45 L468.95 409.82 L467 408.19 L465.08 406.56 L463.19 404.93 L461.34 403.3 L459.52 401.68 L457.74 400.05 L455.99 398.42 L454.27 396.79 L452.59 395.16 L450.94 393.53 L449.32 391.9 L447.74 390.28 L446.2 388.65 L444.69 387.02 L443.21 385.39 L441.77 383.76 L440.37 382.13 L439 380.5 L437.66 378.88 L436.36 377.25 L435.1 375.62 L433.87 373.99 L432.68 372.36 L431.52 370.73 L430.4 369.11 L429.31 367.48 L428.26 365.85 L427.25 364.22 L426.27 362.59 L425.33 360.96 L424.43 359.33 L423.56 357.71 L422.73 356.08 L421.93 354.45 L421.17 352.82 L420.45 351.19 L419.76 349.56 L419.12 347.93 L418.5 346.31 L417.93 344.68 L417.39 343.05 L416.89 341.42 L416.43 339.79 L416 338.16 L415.61 336.54 L415.26 334.91 L414.94 333.28 L414.66 331.65 L414.42 330.02 L414.21 328.39 L414.05 326.76 L413.92 325.14 L413.82 323.51 L413.77 321.88 L413.75 320.25 L413.77 318.62 L413.82 316.99 L413.92 315.36 L414.05 313.74 L414.21 312.11 L414.42 310.48 L414.66 308.85 L414.94 307.22 L415.26 305.59 L415.61 303.96 L416 302.34 L416.43 300.71 L416.89 299.08 L417.39 297.45 L417.93 295.82 L418.5 294.19 L419.12 292.57 L419.76 290.94 L420.45 289.31 L421.17 287.68 L421.93 286.05 L422.73 284.42 L423.56 282.79 L424.43 281.17 L425.33 279.54 L426.27 277.91 L427.25 276.28 L428.26 274.65 L429.31 273.02 L430.4 271.39 L431.52 269.77 L432.68 268.14 L433.87 266.51 L435.1 264.88 L436.36 263.25 L437.66 261.62 L439 260 L440.37 258.37 L441.77 256.74 L443.21 255.11 L444.69 253.48 L446.2 251.85 L447.74 250.22 L449.32 248.6 L450.94 246.97 L452.59 245.34 L454.27 243.71 L455.99 242.08 L457.74 240.45 L459.52 238.82 L461.34 237.2 L463.19 235.57 L465.08 233.94 L467 232.31 L468.95 230.68 L470.94 229.05 L472.95 227.43 L475 225.8 L477.09 224.17 L479.2 222.54 L481.35 220.91 L483.53 219.28 L485.74 217.65 L487.99 216.03 L490.26 214.4 L492.57 212.77 L494.91 211.14 L497.27 209.51 L499.67 207.88 L502.1 206.25 L504.56 204.63 L507.05 203 L509.58 201.37 L512.13 199.74 L514.71 198.11 L517.32 196.48 L519.96 194.86 L522.63 193.23 L525.32 191.6 L528.05 189.97 L530.8 188.34 L533.59 186.71 L536.4 185.08 L539.24 183.46 L542.1 181.83 L545 180.2 L547.92 178.57 L550.87 176.94 L553.84 175.31 L556.84 173.69 L559.87 172.06 L562.92 170.43 L566 168.8 L569.11 167.17 L572.24 165.54 L575.4 163.91 L578.58 162.29 L581.78 160.66 L585.01 159.03 L588.27 157.4 L591.54 155.77 L594.85 154.14 L598.17 152.51 L601.52 150.89 L604.89 149.26 L608.28 147.63 L611.7 146 L615.14 144.37 L618.6 142.74 L622.08 141.11 L625.58 139.49 L629.11 137.86 L632.65 136.23 L636.22 134.6 L639.8 132.97 L643.41 131.34 L647.03 129.72 L650.68 128.09 L654.34 126.46 L658.02 124.83 L661.73 123.2 L665.45 121.57 L669.18 119.94 L672.94 118.32 L676.71 116.69 L680.5 115.06 L684.31 113.43 L688.13 111.8 L691.97 110.17 L695.83 108.54 L699.7 106.92 L703.59 105.29 L707.49 103.66 L711.41 102.03 L715.34 100.4 L719.29 98.77 L723.25 97.15 L727.22 95.52 L731.21 93.89 L735.21 92.26 L739.22 90.63 L743.24 89 L747.28 87.37 L751.33 85.75 L755.39 84.12 L759.46 82.49 L763.54 80.86 L767.64 79.23 L771.74 77.6 L775.85 75.97 L779.98 74.35 L784.11 72.72 L788.25 71.09 L792.4 69.46 L796.56 67.83 L800.72 66.2 L804.9 64.58 L809.08 62.95 L813.27 61.32 L817.46 59.69 L821.67 58.06 L825.87 56.43 L830.09 54.8 L834.31 53.18 L838.53 51.55 L842.76 49.92 L846.99 48.29 L851.23 46.66 L855.47 45.03 L859.72 43.4 L863.97 41.78 L868.22 40.15 L872.47 38.52 L876.73 36.89 L880.99 35.26 L885.25 33.63 L889.51 32.01 L893.77 30.38 L898.04 28.75 L902.3 27.12"/>
<path d="M902.3 613.38 L897.61 611.75 L892.92 610.12 L888.23 608.49 L883.54 606.87 L878.86 605.24 L874.17 603.61 L869.49 601.98 L864.81 600.35 L860.14 598.72 L855.46 597.1 L850.79 595.47 L846.13 593.84 L841.46 592.21 L836.81 590.58 L832.15 588.95 L827.51 587.32 L822.87 585.7 L818.23 584.07 L813.6 582.44 L808.98 580.81 L804.37 579.18 L799.76 577.55 L795.16 575.92 L790.57 574.3 L785.98 572.67 L781.41 571.04 L776.85 569.41 L772.29 567.78 L767.74 566.15 L763.21 564.52 L758.68 562.9 L754.17 561.27 L749.67 559.64 L745.18 558.01 L740.7 556.38 L736.23 554.75 L731.78 553.13 L727.34 551.5 L722.91 549.87 L718.5 548.24 L714.1 546.61 L709.71 544.98 L705.34 543.35 L700.98 541.73 L696.64 540.1 L692.32 538.47 L688.01 536.84 L683.72 535.21 L679.44 533.58 L675.18 531.96 L670.94 530.33 L666.72 528.7 L662.51 527.07 L658.32 525.44 L654.15 523.81 L650 522.18 L645.87 520.56 L641.76 518.93 L637.67 517.3 L633.6 515.67 L629.55 514.04 L625.52 512.41 L621.51 510.78 L617.52 509.16 L613.55 507.53 L609.61 505.9 L605.69 504.27 L601.79 502.64 L597.91 501.01 L594.06 499.38 L590.23 497.76 L586.42 496.13 L582.64 494.5 L578.88 492.87 L575.15 491.24 L571.44 489.61 L567.76 487.99 L564.1 486.36 L560.47 484.73 L556.86 483.1 L553.28 481.47 L549.73 479.84 L546.2 478.21 L542.71 476.59 L539.23 474.96 L535.79 473.33 L532.37 471.7 L528.99 470.07 L525.63 468.44 L522.3 466.81 L519 465.19 L515.72 463.56 L512.48 461.93 L509.27 460.3 L506.08 458.67 L502.93 457.04 L499.81 455.42 L496.72 453.79 L493.65 452.16 L490.62 450.53 L487.63 448.9 L484.66 447.27 L481.72 445.64 L478.82 444.02 L475.95 442.39 L473.11 440.76 L470.3 439.13 L467.53 437.5 L464.79 435.87 L462.08 434.25 L459.41 432.62 L456.77 430.99 L454.17 429.36 L451.59 427.73 L449.06 426.1 L446.55 424.47 L444.09 422.85 L441.65 421.22 L439.26 419.59 L436.89 417.96 L434.57 416.33 L432.27 414.7 L430.02 413.07 L427.8 411.45 L425.62 409.82 L423.47 408.19 L421.36 406.56 L419.28 404.93 L417.25 403.3 L415.25 401.68 L413.28 400.05 L411.36 398.42 L409.47 396.79 L407.62 395.16 L405.8 393.53 L404.03 391.9 L402.29 390.28 L400.59 388.65 L398.93 387.02 L397.3 385.39 L395.72 383.76 L394.17 382.13 L392.67 380.5 L391.2 378.88 L389.77 377.25 L388.38 375.62 L387.03 373.99 L385.71 372.36 L384.44 370.73 L383.21 369.11 L382.01 367.48 L380.86 365.85 L379.74 364.22 L378.67 362.59 L377.63 360.96 L376.64 359.33 L375.68 357.71 L374.77 356.08 L373.89 354.45 L373.06 352.82 L372.27 351.19 L371.51 349.56 L370.8 347.93 L370.12 346.31 L369.49 344.68 L368.9 343.05 L368.35 341.42 L367.84 339.79 L367.37 338.16 L366.94 336.54 L366.55 334.91 L366.2 333.28 L365.9 331.65 L365.63 330.02 L365.41 328.39 L365.22 326.76 L365.08 325.14 L364.98 323.51 L364.92 321.88 L364.89 320.25 L364.92 318.62 L364.98 316.99 L365.08 315.36 L365.22 313.74 L365.41 312.11 L365.63 310.48 L365.9 308.85 L366.2 307.22 L366.55 305.59 L366.94 303.96 L367.37 302.34 L367.84 300.71 L368.35 299.08 L368.9 297.45 L369.49 295.82 L370.12 294.19 L370.8 292.57 L371.51 290.94 L372.27 289.31 L373.06 287.68 L373.89 286.05 L374.77 284.42 L375.68 282.79 L376.64 281.17 L377.63 279.54 L378.67 277.91 L379.74 276.28 L380.86 274.65 L382.01 273.02 L383.21 271.39 L384.44 269.77 L385.71 268.14 L387.03 266.51 L388.38 264.88 L389.77 263.25 L391.2 261.62 L392.67 260 L394.17 258.37 L395.72 256.74 L397.3 255.11 L398.93 253.48 L400.59 251.85 L402.29 250.22 L404.03 248.6 L405.8 246.97 L407.62 245.34 L409.47 243.71 L411.36 242.08 L413.28 240.45 L415.25 238.82 L417.25 237.2 L419.28 235.57 L421.36 233.94 L423.47 232.31 L425.62 230.68 L427.8 229.05 L430.02 227.43 L432.27 225.8 L434.57 224.17 L436.89 222.54 L439.26 220.91 L441.65 219.28 L444.09 217.65 L446.55 216.03 L449.06 214.4 L451.59 212.77 L454.17 211.14 L456.77 209.51 L459.41 207.88 L462.08 206.25 L464.79 204.63 L467.53 203 L470.3 201.37 L473.11 199.74 L475.95 198.11 L478.82 196.48 L481.72 194.86 L484.66 193.23 L487.63 191.6 L490.62 189.97 L493.65 188.34 L496.72 186.71 L499.81 185.08 L502.93 183.46 L506.08 181.83 L509.27 180.2 L512.48 178.57 L515.72 176.94 L519 175.31 L522.3 173.69 L525.63 172.06 L528.99 170.43 L532.37 168.8 L535.79 167.17 L539.23 165.54 L542.71 163.91 L546.2 162.29 L549.73 160.66 L553.28 159.03 L556.86 157.4 L560.47 155.77 L564.1 154.14 L567.76 152.51 L571.44 150.89 L575.15 149.26 L578.88 147.63 L582.64 146 L586.42 144.37 L590.23 142.74 L594.06 141.11 L597.91 139.49 L601.79 137.86 L605.69 136.23 L609.61 134.6 L613.55 132.97 L617.52 131.34 L621.51 129.72 L625.52 128.09 L629.55 126.46 L633.6 124.83 L637.67 123.2 L641.76 121.57 L645.87 119.94 L650 118.32 L654.15 116.69 L658.32 115.06 L662.51 113.43 L666.72 111.8 L670.94 110.17 L675.18 108.54 L679.44 106.92 L683.72 105.29 L688.01 103.66 L692.32 102.03 L696.64 100.4 L700.98 98.77 L705.34 97.15 L709.71 95.52 L714.1 93.89 L718.5 92.26 L722.91 90.63 L727.34 89 L731.78 87.37 L736.23 85.75 L740.7 84.12 L745.18 82.49 L749.67 80.86 L754.17 79.23 L758.68 77.6 L763.21 75.97 L767.74 74.35 L772.29 72.72 L776.85 71.09 L781.41 69.46 L785.98 67.83 L790.57 66.2 L795.16 64.58 L799.76 62.95 L804.37 61.32 L808.98 59.69 L813.6 58.06 L818.23 56.43 L822.87 54.8 L827.51 53.18 L832.15 51.55 L836.81 49.92 L841.46 48.29 L846.13 46.66 L850.79 45.03 L855.46 43.4 L860.14 41.78 L864.81 40.15 L869.49 38.52 L874.17 36.89 L878.86 35.26 L883.54 33.63 L888.23 32.01 L892.92 30.38 L897.61 28.75 L902.3 27.12"/>
<path d="M902.3 613.38 L897.18 611.75 L892.07 610.12 L886.95 608.49 L881.84 606.87 L876.73 605.24 L871.62 603.61 L866.51 601.98 L861.4 600.35 L856.3 598.72 L851.2 597.1 L846.11 595.47 L841.02 593.84 L835.93 592.21 L830.85 590.58 L825.78 588.95 L820.71 587.32 L815.65 585.7 L810.59 584.07 L805.54 582.44 L800.5 580.81 L795.46 579.18 L790.44 577.55 L785.42 575.92 L780.41 574.3 L775.41 572.67 L770.42 571.04 L765.44 569.41 L760.47 567.78 L755.51 566.15 L750.56 564.52 L745.63 562.9 L740.7 561.27 L735.79 559.64 L730.89 558.01 L726.01 556.38 L721.14 554.75 L716.28 553.13 L711.43 551.5 L706.6 549.87 L701.79 548.24 L696.99 546.61 L692.2 544.98 L687.43 543.35 L682.68 541.73 L677.95 540.1 L673.23 538.47 L668.53 536.84 L663.85 535.21 L659.18 533.58 L654.54 531.96 L649.91 530.33 L645.3 528.7 L640.71 527.07 L636.14 525.44 L631.6 523.81 L627.07 522.18 L622.56 520.56 L618.08 518.93 L613.61 517.3 L609.17 515.67 L604.75 514.04 L600.35 512.41 L595.98 510.78 L591.63 509.16 L587.3 507.53 L583 505.9 L578.72 504.27 L574.47 502.64 L570.24 501.01 L566.04 499.38 L561.86 497.76 L557.71 496.13 L553.58 494.5 L549.48 492.87 L545.41 491.24 L541.36 489.61 L537.34 487.99 L533.35 486.36 L529.39 484.73 L525.46 483.1 L521.55 481.47 L517.68 479.84 L513.83 478.21 L510.02 476.59 L506.23 474.96 L502.47 473.33 L498.75 471.7 L495.05 470.07 L491.38 468.44 L487.75 466.81 L484.15 465.19 L480.58 463.56 L477.04 461.93 L473.54 460.3 L470.06 458.67 L466.62 457.04 L463.22 455.42 L459.84 453.79 L456.5 452.16 L453.2 450.53 L449.93 448.9 L446.69 447.27 L443.49 445.64 L440.32 444.02 L437.19 442.39 L434.09 440.76 L431.03 439.13 L428.01 437.5 L425.02 435.87 L422.06 434.25 L419.15 432.62 L416.27 430.99 L413.43 429.36 L410.62 427.73 L407.85 426.1 L405.12 424.47 L402.43 422.85 L399.78 421.22 L397.16 419.59 L394.58 417.96 L392.05 416.33 L389.55 414.7 L387.08 413.07 L384.66 411.45 L382.28 409.82 L379.94 408.19 L377.64 406.56 L375.37 404.93 L373.15 403.3 L370.97 401.68 L368.83 400.05 L366.72 398.42 L364.66 396.79 L362.64 395.16 L360.67 393.53 L358.73 391.9 L356.83 390.28 L354.98 388.65 L353.17 387.02 L351.4 385.39 L349.67 383.76 L347.98 382.13 L346.34 380.5 L344.73 378.88 L343.17 377.25 L341.66 375.62 L340.18 373.99 L338.75 372.36 L337.36 370.73 L336.02 369.11 L334.71 367.48 L333.45 365.85 L332.24 364.22 L331.07 362.59 L329.94 360.96 L328.85 359.33 L327.81 357.71 L326.81 356.08 L325.86 354.45 L324.95 352.82 L324.08 351.19 L323.26 349.56 L322.48 347.93 L321.75 346.31 L321.06 344.68 L320.41 343.05 L319.81 341.42 L319.25 339.79 L318.74 338.16 L318.27 336.54 L317.85 334.91 L317.47 333.28 L317.13 331.65 L316.84 330.02 L316.6 328.39 L316.4 326.76 L316.24 325.14 L316.13 323.51 L316.06 321.88 L316.04 320.25 L316.06 318.62 L316.13 316.99 L316.24 315.36 L316.4 313.74 L316.6 312.11 L316.84 310.48 L317.13 308.85 L317.47 307.22 L317.85 305.59 L318.27 303.96 L318.74 302.34 L319.25 300.71 L319.81 299.08 L320.41 297.45 L321.06 295.82 L321.75 294.19 L322.48 292.57 L323.26 290.94 L324.08 289.31 L324.95 287.68 L325.86 286.05 L326.81 284.42 L327.81 282.79 L328.85 281.17 L329.94 279.54 L331.07 277.91 L332.24 276.28 L333.45 274.65 L334.71 273.02 L336.02 271.39 L337.36 269.77 L338.75 268.14 L340.18 266.51 L341.66 264.88 L343.17 263.25 L344.73 261.62 L346.34 260 L347.98 258.37 L349.67 256.74 L351.4 255.11 L353.17 253.48 L354.98 251.85 L356.83 250.22 L358.73 248.6 L360.67 246.97 L362.64 245.34 L364.66 243.71 L366.72 242.08 L368.83 240.45 L370.97 238.82 L373.15 237.2 L375.37 235.57 L377.64 233.94 L379.94 232.31 L382.28 230.68 L384.66 229.05 L387.08 227.43 L389.55 225.8 L392.05 224.17 L394.58 222.54 L397.16 220.91 L399.78 219.28 L402.43 217.65 L405.12 216.03 L407.85 214.4 L410.62 212.77 L413.43 211.14 L416.27 209.51 L419.15 207.88 L422.06 206.25 L425.02 204.63 L428.01 203 L431.03 201.37 L434.09 199.74 L437.19 198.11 L440.32 196.48 L443.49 194.86 L446.69 193.23 L449.93 191.6 L453.2 189.97 L456.5 188.34 L459.84 186.71 L463.22 185.08 L466.62 183.46 L470.06 181.83 L473.54 180.2 L477.04 178.57 L480.58 176.94 L484.15 175.31 L487.75 173.69 L491.38 172.06 L495.05 170.43 L498.75 168.8 L502.47 167.17 L506.23 165.54 L510.02 163.91 L513.83 162.29 L517.68 160.66 L521.55 159.03 L525.46 157.4 L529.39 155.77 L533.35 154.14 L537.34 152.51 L541.36 150.89 L545.41 149.26 L549.48 147.63 L553.58 146 L557.71 144.37 L561.86 142.74 L566.04 141.11 L570.24 139.49 L574.47 137.86 L578.72 136.23 L583 134.6 L587.3 132.97 L591.63 131.34 L595.98 129.72 L600.35 128.09 L604.75 126.46 L609.17 124.83 L613.61 123.2 L618.08 121.57 L622.56 119.94 L627.07 118.32 L631.6 116.69 L636.14 115.06 L640.71 113.43 L645.3 111.8 L649.91 110.17 L654.54 108.54 L659.18 106.92 L663.85 105.29 L668.53 103.66 L673.23 102.03 L677.95 100.4 L682.68 98.77 L687.43 97.15 L692.2 95.52 L696.99 93.89 L701.79 92.26 L706.6 90.63 L711.43 89 L716.28 87.37 L721.14 85.75 L726.01 84.12 L730.89 82.49 L735.79 80.86 L740.7 79.23 L745.63 77.6 L750.56 75.97 L755.51 74.35 L760.47 72.72 L765.44 71.09 L770.42 69.46 L775.41 67.83 L780.41 66.2 L785.42 64.58 L790.44 62.95 L795.46 61.32 L800.5 59.69 L805.54 58.06 L810.59 56.43 L815.65 54.8 L820.71 53.18 L825.78 51.55 L830.85 49.92 L835.93 48.29 L841.02 46.66 L846.11 45.03 L851.2 43.4 L856.3 41.78 L861.4 40.15 L866.51 38.52 L871.62 36.89 L876.73 35.26 L881.84 33.63 L886.95 32.01 L892.07 30.38 L897.18 28.75 L902.3 27.12"/>
<path d="M1054.04 565 L750.56 565"/>
<path d="M1195.43 516 L609.17 516"/>
<path d="M1316.85 467 L487.75 467"/>
<path d="M1410.02 418 L394.58 418"/>
<path d="M1468.58 369 L336.02 369"/>
<path d="M1488.56 320 L316.04 320"/>
<path d="M1468.58 271 L336.02 271"/>
<path d="M1410.02 223 L394.58 223"/>
<path d="M1316.85 174 L487.75 174"/>
<path d="M1195.43 125 L609.17 125"/>
<path d="M1054.04 76 L750.56 76"/>
</g>
<path d="M322.5 332 L393.3 305.6 L471 280.6 L560 255.6 M323.9 354.2 L407.2 327.8 L468.3 316.7 L560 294.4 M335 272.2 L432.2 251.4 L490.6 241.7 L560 233.3 M373.9 237.5 L435 252.8 L504.4 283.3 M415.6 208.3 L465.6 219.4 L501.7 236.1 M446.1 194.4 L504.4 193 L546 198.6 M494.7 191.7 L496.1 261.1 M404.4 415.6 L398 380 L401 364 L410 344.4 L429.4 305.6 L440.6 269.4 L432.2 250 L426.7 233.3 M435 255.6 L476.7 305.6 L504.4 338.9 M488.9 355.6 L530 395 L573.3 437.8 M477.8 328.9 L540 365 L597.8 397.8 M632.8 290 L670.7 343.8 M620 200 L620 250 M491 181.1 L524.4 176.7 M945 240 L960 290 L975 340 L985 380 L992 420 M1084.5 221.8 L1087 276 L1078 340 L1060 378 L1043.3 408.3 M1192.2 131.7 L1202.2 158.3 L1212.2 171.7 M1232.2 143.9 L1233.3 159.4 L1235 167.2 M1212.2 172.8 L1240 167.2 L1263.3 166.7 L1291.1 169.4 L1312.2 171.7 M1213.3 173.9 L1191.1 211.7 L1188.3 218.9 M1238.9 175 L1246.7 190.6 L1255.6 211.7 L1260 226.7 L1261.1 236.7 M1217.8 177.2 L1224.4 187.2 L1231.1 200.6 L1237.2 215.6 M1240.6 225.6 L1243.3 236.7 L1246.1 254.4 M1238.9 251.7 L1250 242.2 L1264.4 231.1 L1283.3 220.6 L1313.3 210 L1337.8 206.1 M1283.3 237.8 L1296.7 230.6 L1313.3 220 L1326.7 211.1 M1287.8 250.6 L1318.9 241.7 L1337.8 237.8 L1382.2 234.4 L1428.8 237.5 M1317.8 280 L1331.1 253.3 L1337.8 231.1 L1354.2 187.8 M1310.6 211.1 L1360.4 204.9 L1388.4 208 M1410.2 318.4 L1472.4 282.6 M1391.5 344.8 L1487.9 334 M1391.5 377.5 L1478.6 355.7" fill="none" stroke="#ffffff" stroke-opacity="0.36" stroke-width="1.1" stroke-dasharray="1.3 2.4"/>
<text x="1473.41" y="330" font-family="Liberation Sans" font-size="10.3" fill="#8c8c8c" textLength="26.7" lengthAdjust="spacingAndGlyphs">+180</text>
<text x="1501.71" y="327" font-family="Liberation Sans" font-size="6" fill="#8c8c8c">°</text>
<text x="1375.7" y="330" font-family="Liberation Sans" font-size="10.3" fill="#8c8c8c" textLength="26.7" lengthAdjust="spacingAndGlyphs">+210</text>
<text x="1404" y="327" font-family="Liberation Sans" font-size="6" fill="#8c8c8c">°</text>
<text x="1277.99" y="330" font-family="Liberation Sans" font-size="10.3" fill="#8c8c8c" textLength="26.7" lengthAdjust="spacingAndGlyphs">+240</text>
<text x="1306.29" y="327" font-family="Liberation Sans" font-size="6" fill="#8c8c8c">°</text>
<text x="1180.28" y="330" font-family="Liberation Sans" font-size="10.3" fill="#8c8c8c" textLength="26.7" lengthAdjust="spacingAndGlyphs">+270</text>
<text x="1208.58" y="327" font-family="Liberation Sans" font-size="6" fill="#8c8c8c">°</text>
<text x="1082.57" y="330" font-family="Liberation Sans" font-size="10.3" fill="#8c8c8c" textLength="26.7" lengthAdjust="spacingAndGlyphs">+300</text>
<text x="1110.87" y="327" font-family="Liberation Sans" font-size="6" fill="#8c8c8c">°</text>
<text x="984.86" y="330" font-family="Liberation Sans" font-size="10.3" fill="#8c8c8c" textLength="26.7" lengthAdjust="spacingAndGlyphs">+330</text>
<text x="1013.16" y="327" font-family="Liberation Sans" font-size="6" fill="#8c8c8c">°</text>
<text x="893.34" y="330" font-family="Liberation Sans" font-size="10.3" fill="#8c8c8c" textLength="14.33" lengthAdjust="spacingAndGlyphs">+0</text>
<text x="909.26" y="327" font-family="Liberation Sans" font-size="6" fill="#8c8c8c">°</text>
<text x="792.53" y="330" font-family="Liberation Sans" font-size="10.3" fill="#8c8c8c" textLength="20.51" lengthAdjust="spacingAndGlyphs">+30</text>
<text x="814.65" y="327" font-family="Liberation Sans" font-size="6" fill="#8c8c8c">°</text>
<text x="694.82" y="330" font-family="Liberation Sans" font-size="10.3" fill="#8c8c8c" textLength="20.51" lengthAdjust="spacingAndGlyphs">+60</text>
<text x="716.94" y="327" font-family="Liberation Sans" font-size="6" fill="#8c8c8c">°</text>
<text x="597.11" y="330" font-family="Liberation Sans" font-size="10.3" fill="#8c8c8c" textLength="20.51" lengthAdjust="spacingAndGlyphs">+90</text>
<text x="619.23" y="327" font-family="Liberation Sans" font-size="6" fill="#8c8c8c">°</text>
<text x="496.31" y="330" font-family="Liberation Sans" font-size="10.3" fill="#8c8c8c" textLength="26.7" lengthAdjust="spacingAndGlyphs">+120</text>
<text x="524.61" y="327" font-family="Liberation Sans" font-size="6" fill="#8c8c8c">°</text>
<text x="398.6" y="330" font-family="Liberation Sans" font-size="10.3" fill="#8c8c8c" textLength="26.7" lengthAdjust="spacingAndGlyphs">+150</text>
<text x="426.9" y="327" font-family="Liberation Sans" font-size="6" fill="#8c8c8c">°</text>
<text x="300.89" y="330" font-family="Liberation Sans" font-size="10.3" fill="#8c8c8c" textLength="26.7" lengthAdjust="spacingAndGlyphs">+180</text>
<text x="329.19" y="327" font-family="Liberation Sans" font-size="6" fill="#8c8c8c">°</text>
<text x="890.74" y="25" font-family="Liberation Sans" font-size="10.3" fill="#8c8c8c" textLength="20.51" lengthAdjust="spacingAndGlyphs">+90</text>
<text x="912.86" y="22" font-family="Liberation Sans" font-size="6" fill="#8c8c8c">°</text>
<text x="890.74" y="122.6" font-family="Liberation Sans" font-size="10.3" fill="#8c8c8c" textLength="20.51" lengthAdjust="spacingAndGlyphs">+60</text>
<text x="912.86" y="119.6" font-family="Liberation Sans" font-size="6" fill="#8c8c8c">°</text>
<text x="890.74" y="220.8" font-family="Liberation Sans" font-size="10.3" fill="#8c8c8c" textLength="20.51" lengthAdjust="spacingAndGlyphs">+30</text>
<text x="912.86" y="217.8" font-family="Liberation Sans" font-size="6" fill="#8c8c8c">°</text>
<text x="890.74" y="428" font-family="Liberation Sans" font-size="10.3" fill="#8c8c8c" textLength="20.51" lengthAdjust="spacingAndGlyphs">−30</text>
<text x="912.86" y="425" font-family="Liberation Sans" font-size="6" fill="#8c8c8c">°</text>
<text x="890.74" y="526" font-family="Liberation Sans" font-size="10.3" fill="#8c8c8c" textLength="20.51" lengthAdjust="spacingAndGlyphs">−60</text>
<text x="912.86" y="523" font-family="Liberation Sans" font-size="6" fill="#8c8c8c">°</text>
<text x="890.74" y="624" font-family="Liberation Sans" font-size="10.3" fill="#8c8c8c" textLength="20.51" lengthAdjust="spacingAndGlyphs">−90</text>
<text x="912.86" y="621" font-family="Liberation Sans" font-size="6" fill="#8c8c8c">°</text>
<path d="M1082.34 95.37 L1081.78 95.18 L1081.21 94.98 L1080.65 94.78 L1080.08 94.58 L1079.51 94.38 L1078.95 94.18 L1078.38 93.98 L1077.82 93.78 L1077.26 93.58 L1076.69 93.38 L1076.13 93.18 L1075.57 92.98 L1075 92.77 L1074.44 92.57 L1073.88 92.37 L1073.32 92.16 L1072.76 91.96 L1072.2 91.75 L1071.64 91.55 L1071.09 91.34 L1070.53 91.14 L1069.97 90.93 L1069.42 90.73 L1068.86 90.52 L1068.31 90.31 L1067.76 90.11 L1067.21 89.9 L1066.66 89.69 L1066.11 89.48 L1065.56 89.28 L1065.01 89.07 L1064.47 88.86 L1063.92 88.65 L1063.38 88.44 L1062.84 88.24 L1062.29 88.03 L1061.76 87.82 L1061.22 87.61 L1060.68 87.4 L1060.15 87.19 L1059.61 86.98 L1059.08 86.77 L1058.55 86.56 L1058.02 86.36 L1057.49 86.15 L1056.97 85.94 L1056.44 85.73 L1055.92 85.52 L1055.4 85.31 L1054.88 85.1 L1054.37 84.89 L1053.85 84.69 L1053.34 84.48 L1052.83 84.27 L1052.32 84.06 L1051.82 83.85 L1051.31 83.65 L1050.81 83.44 L1050.31 83.23 L1049.81 83.03 L1049.32 82.82 L1048.83 82.61 L1048.34 82.41 L1047.85 82.2 L1047.37 82 L1046.88 81.79 L1046.4 81.59 L1045.93 81.38 L1045.45 81.18 L1044.98 80.98 L1044.51 80.78 L1044.05 80.57 L1043.59 80.37 L1043.13 80.17 L1042.67 79.97 L1042.22 79.77 L1041.77 79.57 L1041.32 79.38 L1040.88 79.18 L1040.44 78.98 L1040 78.79 L1039.57 78.59 L1039.14 78.4 L1038.71 78.2 L1038.29 78.01 L1037.87 77.82 L1037.46 77.63 L1037.04 77.44 L1036.64 77.25 L1036.23 77.06 L1035.83 76.87 L1035.44 76.68 L1035.05 76.5 L1034.66 76.31 L1034.28 76.13 L1033.9 75.95 L1033.52 75.76 L1033.15 75.58 L1032.79 75.4 L1032.43 75.23 L1032.07 75.05 L1031.72 74.87 L1031.37 74.7 L1031.03 74.53 L1030.69 74.36 L1030.36 74.19 L1030.03 74.02 L1029.71 73.85 L1029.39 73.68 L1029.08 73.52 L1028.78 73.35 L1028.47 73.19 L1028.18 73.03 L1027.89 72.87 L1027.6 72.72 L1027.32 72.56 L1027.05 72.41 L1026.78 72.26 L1026.52 72.1 L1026.26 71.96 L1026.01 71.81 L1025.77 71.66 L1025.53 71.52 L1025.3 71.38 L1025.08 71.24 L1024.86 71.1 L1024.64 70.97 L1024.44 70.83 L1024.24 70.7 L1024.04 70.57 L1023.86 70.44 L1023.68 70.32 L1023.5 70.19 L1023.34 70.07 L1023.18 69.95 L1023.03 69.83 L1022.88 69.72 L1022.74 69.61 L1022.61 69.5 L1022.49 69.39 L1022.37 69.28 L1022.26 69.18 L1022.16 69.08 L1022.07 68.98 L1021.98 68.88 L1021.9 68.79 L1021.83 68.7 L1021.77 68.61 L1021.71 68.52 L1021.66 68.44 L1021.62 68.35 L1021.59 68.27 L1021.57 68.2 L1021.55 68.12 L1021.55 68.05 L1021.55 67.98 L1021.55 67.92 L1021.57 67.85 L1021.6 67.79 L1021.63 67.74 L1021.67 67.68 L1021.72 67.63 L1021.78 67.58 L1021.85 67.53 L1021.92 67.49 L1022.01 67.45 L1022.1 67.41 L1022.2 67.37 L1022.31 67.34 L1022.43 67.31 L1022.56 67.28 L1022.69 67.26 L1022.84 67.24 L1022.99 67.22 L1023.15 67.2 L1023.32 67.19 L1023.5 67.18 L1023.69 67.17 L1023.88 67.17 L1024.09 67.16 L1024.3 67.17 L1024.52 67.17 L1024.75 67.18 L1024.99 67.19 L1025.24 67.2 L1025.5 67.22 L1025.76 67.24 L1026.03 67.26 L1026.32 67.28 L1026.61 67.31 L1026.9 67.34 L1027.21 67.37 L1027.53 67.41 L1027.85 67.45 M776.52 67.49 L776.59 67.53 L776.65 67.58 L776.7 67.63 L776.74 67.68 L776.78 67.74 L776.8 67.79 L776.82 67.85 L776.82 67.92 L776.82 67.98 L776.81 68.05 L776.79 68.12 L776.77 68.2 L776.73 68.27 L776.69 68.35 L776.64 68.44 L776.58 68.52 L776.51 68.61 L776.43 68.7 L776.35 68.79 L776.25 68.88 L776.15 68.98 L776.04 69.08 L775.93 69.18 L775.8 69.28 L775.67 69.39 L775.53 69.5 L775.38 69.61 L775.23 69.72 L775.06 69.83 L774.89 69.95 L774.72 70.07 L774.53 70.19 L774.34 70.32 L774.14 70.44 L773.94 70.57 L773.72 70.7 L773.5 70.83 L773.28 70.97 L773.05 71.1 L772.81 71.24 L772.56 71.38 L772.31 71.52 L772.05 71.66 L771.78 71.81 L771.51 71.96 L771.23 72.1 L770.95 72.26 L770.66 72.41 L770.36 72.56 L770.06 72.72 L769.75 72.87 L769.43 73.03 L769.11 73.19 L768.79 73.35 L768.46 73.52 L768.12 73.68 L767.78 73.85 L767.43 74.02 L767.08 74.19 L766.72 74.36 L766.36 74.53 L765.99 74.7 L765.62 74.87 L765.24 75.05 L764.86 75.23 L764.47 75.4 L764.08 75.58 L763.68 75.76 L763.28 75.95 L762.88 76.13 L762.47 76.31 L762.05 76.5 L761.63 76.68 L761.21 76.87 L760.78 77.06 L760.35 77.25 L759.91 77.44 L759.47 77.63 L759.03 77.82 L758.58 78.01 L758.13 78.2 L757.68 78.4 L757.22 78.59 L756.76 78.79 L756.29 78.98 L755.82 79.18 L755.35 79.38 L754.87 79.57 L754.39 79.77 L753.91 79.97 L753.43 80.17 L752.94 80.37 L752.45 80.57 L751.95 80.78 L751.45 80.98 L750.95 81.18 L750.45 81.38 L749.94 81.59 L749.43 81.79 L748.92 82 L748.4 82.2 L747.89 82.41 L747.37 82.61 L746.85 82.82 L746.32 83.03 L745.79 83.23 L745.26 83.44 L744.73 83.65 L744.2 83.85 L743.66 84.06 L743.12 84.27 L742.58 84.48 L742.04 84.69 L741.49 84.89 L740.95 85.1 L740.4 85.31 L739.85 85.52 L739.29 85.73 L738.74 85.94 L738.18 86.15 L737.63 86.36 L737.07 86.56 L736.51 86.77 L735.94 86.98 L735.38 87.19 L734.81 87.4 L734.25 87.61 L733.68 87.82 L733.11 88.03 L732.54 88.24 L731.96 88.44 L731.39 88.65 L730.81 88.86 L730.24 89.07 L729.66 89.28 L729.08 89.48 L728.5 89.69 L727.92 89.9 L727.34 90.11 L726.76 90.31 L726.18 90.52 L725.59 90.73 L725.01 90.93 L724.42 91.14 L723.83 91.34 L723.25 91.55 L722.66 91.75 L722.07 91.96 L721.48 92.16 L720.89 92.37 L720.3 92.57 L719.71 92.77 L719.12 92.98 L718.53 93.18 L717.93 93.38 L717.34 93.58 L716.75 93.78 L716.16 93.98 L715.56 94.18 L714.97 94.38 L714.37 94.58 L713.78 94.78 L713.19 94.98 L712.59 95.18 L712 95.37 L711.4 95.57 L710.81 95.77 L710.21 95.96 L709.62 96.16 L709.02 96.35 L708.43 96.54 L707.84 96.74 L707.24 96.93 L706.65 97.12 L706.05 97.31 L705.46 97.5 L704.87 97.69 L704.28 97.88 L703.68 98.07 L703.09 98.26 L702.5 98.44 L701.91 98.63 L701.32 98.82 L700.73 99 L700.14 99.19 L699.55 99.37 L698.96 99.55 L698.37 99.73 L697.78 99.92 L697.2 100.1 L696.61 100.28 L696.03 100.46 L695.44 100.63 L694.86 100.81 L694.28 100.99 L693.69 101.16 L693.11 101.34 L692.53 101.51 L691.95 101.69 L691.37 101.86 L690.8 102.03 L690.22 102.2 L689.64 102.37 L689.07 102.54 L688.49 102.71 L687.92 102.88 L687.35 103.04 L686.78 103.21 L686.21 103.37 L685.64 103.54 L685.08 103.7 L684.51 103.86 L683.95 104.02 L683.38 104.18 L682.82 104.34 L682.26 104.5 L681.7 104.66 L681.15 104.81 L680.59 104.97 L680.04 105.12 L679.48 105.28 L678.93 105.43 L678.38 105.58 L677.83 105.73 L677.29 105.88 L676.74 106.03 L676.2 106.17 L675.65 106.32 L675.11 106.47 L674.57 106.61 L674.04 106.75 L673.5 106.89 L672.97 107.04 L672.43 107.18 L671.9 107.31 L671.38 107.45 L670.85 107.59 L670.32 107.72 L669.8 107.86 L669.28 107.99 L668.76 108.13 L668.24 108.26 L667.73 108.39 L667.22 108.52 L666.7 108.64 L666.2 108.77 L665.69 108.9 L665.18 109.02 L664.68 109.14 L664.18 109.27 L663.68 109.39 L663.18 109.51 L662.69 109.63 L662.2 109.74 L661.71 109.86 L661.22 109.98 L660.74 110.09 L660.25 110.2 L659.77 110.32 L659.29 110.43 L658.82 110.54 L658.34 110.64 L657.87 110.75 L657.4 110.86 L656.94 110.96 L656.47 111.07 L656.01 111.17 L655.55 111.27 L655.1 111.37 L654.64 111.47 L654.19 111.56 L653.74 111.66 L653.3 111.76 L652.85 111.85 L652.41 111.94 L651.97 112.03 L651.54 112.12 L651.1 112.21 L650.67 112.3 L650.25 112.39 L649.82 112.47 L649.4 112.56 L648.98 112.64 L648.56 112.72 L648.15 112.8 L647.74 112.88 L647.33 112.96 L646.93 113.03 L646.53 113.11 L646.13 113.18 L645.73 113.25 L645.34 113.32 L644.95 113.39 L644.56 113.46 L644.18 113.53 L643.79 113.6 L643.42 113.66 L643.04 113.72 L642.67 113.79 L642.3 113.85 L641.94 113.91 L641.57 113.96 L641.21 114.02 L640.86 114.08 L640.5 114.13 L640.16 114.18 L639.81 114.23 L639.47 114.28 L639.13 114.33 L638.79 114.38 L638.46 114.43 L638.13 114.47 L637.8 114.52 M1166.98 114.56 L1166.89 114.6 L1166.8 114.64 L1166.7 114.68 L1166.6 114.71 L1166.49 114.75 L1166.38 114.78 L1166.27 114.82 L1166.15 114.85 L1166.03 114.88 L1165.9 114.91 L1165.77 114.94 L1165.63 114.96 L1165.5 114.99 L1165.35 115.01 L1165.21 115.03 L1165.06 115.05 L1164.9 115.07 L1164.75 115.09 L1164.58 115.11 L1164.42 115.12 L1164.25 115.14 L1164.07 115.15 L1163.9 115.16 L1163.72 115.17 L1163.53 115.18 L1163.34 115.19 L1163.15 115.19 L1162.96 115.2 L1162.76 115.2 L1162.55 115.2 L1162.34 115.21 L1162.13 115.2 L1161.92 115.2 L1161.7 115.2 L1161.48 115.19 L1161.25 115.19 L1161.02 115.18 L1160.79 115.17 L1160.56 115.16 L1160.32 115.15 L1160.07 115.14 L1159.83 115.12 L1159.58 115.11 L1159.32 115.09 L1159.06 115.07 L1158.8 115.05 L1158.54 115.03 L1158.27 115.01 L1158 114.99 L1157.72 114.96 L1157.45 114.94 L1157.17 114.91 L1156.88 114.88 L1156.59 114.85 L1156.3 114.82 L1156.01 114.78 L1155.71 114.75 L1155.41 114.71 L1155.1 114.68 L1154.79 114.64 L1154.48 114.6 L1154.17 114.56 L1153.85 114.52 L1153.53 114.47 L1153.21 114.43 L1152.88 114.38 L1152.55 114.33 L1152.22 114.28 L1151.88 114.23 L1151.54 114.18 L1151.2 114.13 L1150.85 114.08 L1150.5 114.02 L1150.15 113.96 L1149.8 113.91 L1149.44 113.85 L1149.08 113.79 L1148.72 113.72 L1148.35 113.66 L1147.98 113.6 L1147.61 113.53 L1147.24 113.46 L1146.86 113.39 L1146.48 113.32 L1146.09 113.25 L1145.71 113.18 L1145.32 113.11 L1144.93 113.03 L1144.53 112.96 L1144.14 112.88 L1143.74 112.8 L1143.33 112.72 L1142.93 112.64 L1142.52 112.56 L1142.11 112.47 L1141.7 112.39 L1141.28 112.3 L1140.86 112.21 L1140.44 112.12 L1140.02 112.03 L1139.59 111.94 L1139.17 111.85 L1138.74 111.76 L1138.3 111.66 L1137.87 111.56 L1137.43 111.47 L1136.99 111.37 L1136.55 111.27 L1136.1 111.17 L1135.65 111.07 L1135.2 110.96 L1134.75 110.86 L1134.3 110.75 L1133.84 110.64 L1133.38 110.54 L1132.92 110.43 L1132.46 110.32 L1131.99 110.2 L1131.53 110.09 L1131.06 109.98 L1130.58 109.86 L1130.11 109.74 L1129.64 109.63 L1129.16 109.51 L1128.68 109.39 L1128.2 109.27 L1127.71 109.14 L1127.23 109.02 L1126.74 108.9 L1126.25 108.77 L1125.76 108.64 L1125.26 108.52 L1124.77 108.39 L1124.27 108.26 L1123.77 108.13 L1123.27 107.99 L1122.77 107.86 L1122.27 107.72 L1121.76 107.59 L1121.25 107.45 L1120.74 107.31 L1120.23 107.18 L1119.72 107.04 L1119.21 106.89 L1118.69 106.75 L1118.17 106.61 L1117.65 106.47 L1117.13 106.32 L1116.61 106.17 L1116.09 106.03 L1115.56 105.88 L1115.04 105.73 L1114.51 105.58 L1113.98 105.43 L1113.45 105.28 L1112.92 105.12 L1112.39 104.97 L1111.85 104.81 L1111.32 104.66 L1110.78 104.5 L1110.24 104.34 L1109.7 104.18 L1109.16 104.02 L1108.62 103.86 L1108.08 103.7 L1107.53 103.54 L1106.99 103.37 L1106.44 103.21 L1105.9 103.04 L1105.35 102.88 L1104.8 102.71 L1104.25 102.54 L1103.7 102.37 L1103.15 102.2 L1102.6 102.03 L1102.04 101.86 L1101.49 101.69 L1100.93 101.51 L1100.38 101.34 L1099.82 101.16 L1099.26 100.99 L1098.71 100.81 L1098.15 100.63 L1097.59 100.46 L1097.03 100.28 L1096.47 100.1 L1095.91 99.92 L1095.34 99.73 L1094.78 99.55 L1094.22 99.37 L1093.66 99.19 L1093.09 99 L1092.53 98.82 L1091.97 98.63 L1091.4 98.44 L1090.84 98.26 L1090.27 98.07 L1089.71 97.88 L1089.14 97.69 L1088.57 97.5 L1088.01 97.31 L1087.44 97.12 L1086.88 96.93 L1086.31 96.74 L1085.74 96.54 L1085.18 96.35 L1084.61 96.16 L1084.04 95.96 L1083.48 95.77 L1082.91 95.57 L1082.34 95.37" fill="none" stroke="#dd1cf2" stroke-width="2.08"/>
<path d="M852.53 136.15 L852.58 135.94 L852.62 135.74 L852.67 135.53 L852.72 135.32 L852.77 135.11 L852.82 134.9 L852.87 134.7 L852.93 134.49 L852.99 134.28 L853.05 134.07 L853.11 133.86 L853.18 133.65 L853.24 133.44 L853.31 133.23 L853.38 133.02 L853.45 132.81 L853.53 132.6 L853.6 132.39 L853.68 132.17 L853.76 131.96 L853.84 131.75 L853.93 131.54 L854.01 131.33 L854.1 131.12 L854.19 130.91 L854.28 130.7 L854.37 130.49 L854.47 130.28 L854.57 130.07 L854.67 129.85 L854.77 129.64 L854.87 129.43 L854.97 129.22 L855.08 129.01 L855.19 128.8 L855.3 128.59 L855.41 128.38 L855.52 128.17 L855.64 127.96 L855.75 127.76 L855.87 127.55 L855.99 127.34 L856.11 127.13 L856.24 126.92 L856.36 126.72 L856.49 126.51 L856.62 126.3 L856.75 126.1 L856.88 125.89 L857.01 125.68 L857.15 125.48 L857.29 125.27 L857.43 125.07 L857.57 124.87 L857.71 124.66 L857.85 124.46 L858 124.26 L858.14 124.06 L858.29 123.86 L858.44 123.66 L858.59 123.46 L858.74 123.26 L858.9 123.06 L859.05 122.86 L859.21 122.67 L859.37 122.47 L859.53 122.27 L859.69 122.08 L859.85 121.89 L860.02 121.69 L860.18 121.5 L860.35 121.31 L860.52 121.12 L860.69 120.93 L860.86 120.74 L861.03 120.55 L861.21 120.37 L861.38 120.18 L861.56 120 L861.73 119.81 L861.91 119.63 L862.09 119.45 L862.27 119.27 L862.45 119.09 L862.64 118.91 L862.82 118.73 L863.01 118.55 L863.19 118.38 L863.38 118.2 L863.57 118.03 L863.76 117.86 L863.95 117.69 L864.14 117.52 L864.34 117.35 L864.53 117.18 L864.72 117.02 L864.92 116.86 L865.12 116.69 L865.32 116.53 L865.51 116.37 L865.71 116.21 L865.91 116.05 L866.11 115.9 L866.32 115.74 L866.52 115.59 L866.72 115.44 L866.93 115.29 L867.13 115.14 L867.34 115 L867.54 114.85 L867.75 114.71 L867.96 114.56 L868.17 114.42 L868.38 114.28 L868.59 114.15 L868.8 114.01 L869.01 113.88 L869.22 113.75 L869.43 113.62 L869.64 113.49 L869.86 113.36 L870.07 113.23 L870.28 113.11 L870.5 112.99 L870.71 112.87 L870.93 112.75 L871.14 112.64 L871.36 112.52 L871.58 112.41 L871.79 112.3 L872.01 112.19 L872.23 112.08 L872.44 111.98 L872.66 111.88 L872.88 111.78 L873.1 111.68 L873.32 111.58 L873.54 111.49 L873.76 111.39 L873.97 111.3 L874.19 111.22 L874.41 111.13 L874.63 111.04 L874.85 110.96 L875.07 110.88 L875.29 110.8 L875.51 110.73 L875.73 110.65 L875.95 110.58 L876.17 110.51 L876.39 110.45 L876.61 110.38 L876.83 110.32 L877.05 110.26 L877.27 110.2 L877.49 110.14 L877.71 110.09 L877.92 110.04 L878.14 109.99 L878.36 109.94 L878.58 109.9 L878.8 109.85 L879.02 109.81 L879.23 109.77 L879.45 109.74 L879.67 109.7 L879.88 109.67 L880.1 109.64 L880.32 109.62 L880.53 109.59 L880.75 109.57 L880.96 109.55 L881.18 109.53 L881.39 109.52 L881.6 109.51 L881.82 109.5 L882.03 109.49 L882.24 109.48 L882.45 109.48 L882.67 109.48 L882.88 109.48 L883.09 109.48 L883.3 109.49 L883.51 109.5 L883.71 109.51 L883.92 109.52 L884.13 109.53 L884.34 109.55 L884.54 109.57 L884.75 109.59 L884.95 109.62 L885.16 109.64 L885.36 109.67 L885.56 109.7 L885.77 109.74 L885.97 109.77 L886.17 109.81 L886.37 109.85 L886.57 109.9 L886.76 109.94 L886.96 109.99 L887.16 110.04 L887.35 110.09 L887.55 110.14 L887.74 110.2 L887.94 110.26 L888.13 110.32 L888.32 110.38 L888.51 110.45 L888.7 110.51 L888.89 110.58 L889.08 110.65 L889.26 110.73 L889.45 110.8 L889.64 110.88 L889.82 110.96 L890 111.04 L890.18 111.13 L890.37 111.22 L890.55 111.3 L890.72 111.39 L890.9 111.49 L891.08 111.58 L891.26 111.68 L891.43 111.78 L891.6 111.88 L891.78 111.98 L891.95 112.08 L892.12 112.19 L892.29 112.3 L892.45 112.41 L892.62 112.52 L892.79 112.64 L892.95 112.75 L893.11 112.87 L893.28 112.99 L893.44 113.11 L893.6 113.23 L893.76 113.36 L893.91 113.49 L894.07 113.62 L894.22 113.75 L894.38 113.88 L894.53 114.01 L894.68 114.15 L894.83 114.28 L894.98 114.42 L895.12 114.56 L895.27 114.71 L895.41 114.85 L895.55 115 L895.7 115.14 L895.84 115.29 L895.97 115.44 L896.11 115.59 L896.25 115.74 L896.38 115.9 L896.51 116.05 L896.65 116.21 L896.78 116.37 L896.9 116.53 L897.03 116.69 L897.16 116.86 L897.28 117.02 L897.4 117.18 L897.52 117.35 L897.64 117.52 L897.76 117.69 L897.88 117.86 L897.99 118.03 L898.11 118.2 L898.22 118.38 L898.33 118.55 L898.44 118.73 L898.55 118.91 L898.65 119.09 L898.76 119.27 L898.86 119.45 L898.96 119.63 L899.06 119.81 L899.16 120 L899.25 120.18 L899.35 120.37 L899.44 120.55 L899.53 120.74 L899.62 120.93 L899.71 121.12 L899.79 121.31 L899.88 121.5 L899.96 121.69 L900.04 121.89 L900.12 122.08 L900.2 122.27 L900.27 122.47 L900.35 122.67 L900.42 122.86 L900.49 123.06 L900.56 123.26 L900.63 123.46 L900.7 123.66 L900.76 123.86 L900.82 124.06 L900.88 124.26 L900.94 124.46 L901 124.66 L901.05 124.87 L901.11 125.07 L901.16 125.27 L901.21 125.48 L901.26 125.68 L901.3 125.89 L901.35 126.1 L901.39 126.3 L901.43 126.51 L901.47 126.72 L901.51 126.92 L901.54 127.13 L901.58 127.34 L901.61 127.55 L901.64 127.76 L901.67 127.96 L901.69 128.17 L901.72 128.38 L901.74 128.59 L901.76 128.8 L901.78 129.01 L901.8 129.22 L901.82 129.43 L901.83 129.64 L901.84 129.85 L901.85 130.07 L901.86 130.28 L901.87 130.49 L901.87 130.7 L901.87 130.91 L901.88 131.12 L901.88 131.33 L901.87 131.54 L901.87 131.75 L901.86 131.96 L901.85 132.17 L901.84 132.39 L901.83 132.6 L901.82 132.81 L901.8 133.02 L901.79 133.23 L901.77 133.44 L901.75 133.65 L901.72 133.86 L901.7 134.07 L901.67 134.28 L901.65 134.49 L901.62 134.7 L901.58 134.9 L901.55 135.11 L901.52 135.32 L901.48 135.53 L901.44 135.74 L901.4 135.94 L901.36 136.15 L901.31 136.36 L901.27 136.56 L901.22 136.77 L901.17 136.98 L901.12 137.18 L901.07 137.39 L901.01 137.59 L900.95 137.79 L900.9 138 L900.84 138.2 L900.77 138.4 L900.71 138.61 L900.64 138.81 L900.58 139.01 L900.51 139.21 L900.44 139.41 L900.37 139.61 L900.29 139.81 L900.22 140 L900.14 140.2 L900.06 140.4 L899.98 140.6 L899.9 140.79 L899.81 140.99 L899.73 141.18 L899.64 141.37 L899.55 141.57 L899.46 141.76 L899.37 141.95 L899.27 142.14 L899.18 142.33 L899.08 142.52 L898.98 142.71 L898.88 142.9 L898.78 143.09 L898.68 143.27 L898.57 143.46 L898.46 143.64 L898.36 143.83 L898.25 144.01 L898.13 144.19 L898.02 144.38 L897.91 144.56 L897.79 144.74 L897.67 144.92 L897.55 145.09 L897.43 145.27 L897.31 145.45 L897.19 145.62 L897.06 145.8 L896.93 145.97 L896.81 146.14 L896.68 146.32 L896.55 146.49 L896.41 146.66 L896.28 146.83 L896.15 146.99 L896.01 147.16 L895.87 147.33 L895.73 147.49 L895.59 147.66 L895.45 147.82 L895.3 147.98 L895.16 148.14 L895.01 148.3 L894.87 148.46 L894.72 148.62 L894.57 148.77 L894.42 148.93 L894.26 149.08 L894.11 149.24 L893.95 149.39 L893.8 149.54 L893.64 149.69 L893.48 149.84 L893.32 149.98 L893.16 150.13 L893 150.28 L892.84 150.42 L892.67 150.56 L892.5 150.7 L892.34 150.85 L892.17 150.98 L892 151.12 L891.83 151.26 L891.66 151.4 L891.49 151.53 L891.31 151.66 L891.14 151.8 L890.96 151.93 L890.79 152.06 L890.61 152.18 L890.43 152.31 L890.25 152.44 L890.07 152.56 L889.89 152.68 L889.7 152.81 L889.52 152.93 L889.34 153.05 L889.15 153.16 L888.97 153.28 L888.78 153.4 L888.59 153.51 L888.4 153.62 L888.21 153.73 L888.02 153.84 L887.83 153.95 L887.64 154.06 L887.45 154.17 L887.25 154.27 L887.06 154.37 L886.86 154.48 L886.67 154.58 L886.47 154.68 L886.27 154.77 L886.07 154.87 L885.88 154.96 L885.68 155.06 L885.48 155.15 L885.28 155.24 L885.07 155.33 L884.87 155.42 L884.67 155.5 L884.47 155.59 L884.26 155.67 L884.06 155.75 L883.86 155.84 L883.65 155.91 L883.44 155.99 L883.24 156.07 L883.03 156.14 L882.82 156.22 L882.62 156.29 L882.41 156.36 L882.2 156.43 L881.99 156.5 L881.78 156.56 L881.57 156.63 L881.36 156.69 L881.15 156.75 L880.94 156.81 L880.73 156.87 L880.52 156.93 L880.31 156.98 L880.1 157.04 L879.89 157.09 L879.67 157.14 L879.46 157.19 L879.25 157.24 L879.04 157.29 L878.82 157.33 L878.61 157.38 L878.4 157.42 L878.18 157.46 L877.97 157.5 L877.76 157.54 L877.54 157.57 L877.33 157.61 L877.12 157.64 L876.9 157.67 L876.69 157.7 L876.48 157.73 L876.26 157.76 L876.05 157.78 L875.83 157.81 L875.62 157.83 L875.41 157.85 L875.19 157.87 L874.98 157.89 L874.77 157.9 L874.55 157.92 L874.34 157.93 L874.13 157.94 L873.92 157.95 L873.7 157.96 L873.49 157.97 L873.28 157.97 L873.07 157.98 L872.86 157.98 L872.64 157.98 L872.43 157.98 L872.22 157.98 L872.01 157.97 L871.8 157.97 L871.59 157.96 L871.38 157.95 L871.18 157.94 L870.97 157.93 L870.76 157.92 L870.55 157.9 L870.34 157.89 L870.14 157.87 L869.93 157.85 L869.73 157.83 L869.52 157.81 L869.32 157.78 L869.11 157.76 L868.91 157.73 L868.7 157.7 L868.5 157.67 L868.3 157.64 L868.1 157.61 L867.9 157.57 L867.7 157.54 L867.5 157.5 L867.3 157.46 L867.1 157.42 L866.91 157.38 L866.71 157.33 L866.51 157.29 L866.32 157.24 L866.12 157.19 L865.93 157.14 L865.74 157.09 L865.55 157.04 L865.35 156.98 L865.16 156.93 L864.97 156.87 L864.79 156.81 L864.6 156.75 L864.41 156.69 L864.23 156.63 L864.04 156.56 L863.86 156.5 L863.67 156.43 L863.49 156.36 L863.31 156.29 L863.13 156.22 L862.95 156.14 L862.77 156.07 L862.6 155.99 L862.42 155.91 L862.24 155.84 L862.07 155.75 L861.9 155.67 L861.73 155.59 L861.56 155.5 L861.39 155.42 L861.22 155.33 L861.05 155.24 L860.88 155.15 L860.72 155.06 L860.56 154.96 L860.39 154.87 L860.23 154.77 L860.07 154.68 L859.91 154.58 L859.76 154.48 L859.6 154.37 L859.44 154.27 L859.29 154.17 L859.14 154.06 L858.99 153.95 L858.84 153.84 L858.69 153.73 L858.54 153.62 L858.4 153.51 L858.25 153.4 L858.11 153.28 L857.97 153.16 L857.83 153.05 L857.69 152.93 L857.55 152.81 L857.42 152.68 L857.28 152.56 L857.15 152.44 L857.02 152.31 L856.89 152.18 L856.76 152.06 L856.64 151.93 L856.51 151.8 L856.39 151.66 L856.27 151.53 L856.14 151.4 L856.03 151.26 L855.91 151.12 L855.79 150.98 L855.68 150.85 L855.57 150.7 L855.46 150.56 L855.35 150.42 L855.24 150.28 L855.13 150.13 L855.03 149.98 L854.93 149.84 L854.83 149.69 L854.73 149.54 L854.63 149.39 L854.53 149.24 L854.44 149.08 L854.35 148.93 L854.26 148.77 L854.17 148.62 L854.08 148.46 L854 148.3 L853.91 148.14 L853.83 147.98 L853.75 147.82 L853.67 147.66 L853.6 147.49 L853.52 147.33 L853.45 147.16 L853.38 146.99 L853.31 146.83 L853.24 146.66 L853.18 146.49 L853.11 146.32 L853.05 146.14 L852.99 145.97 L852.94 145.8 L852.88 145.62 L852.83 145.45 L852.77 145.27 L852.72 145.09 L852.67 144.92 L852.63 144.74 L852.58 144.56 L852.54 144.38 L852.5 144.19 L852.46 144.01 L852.43 143.83 L852.39 143.64 L852.36 143.46 L852.33 143.27 L852.3 143.09 L852.27 142.9 L852.25 142.71 L852.22 142.52 L852.2 142.33 L852.18 142.14 L852.16 141.95 L852.15 141.76 L852.14 141.57 L852.13 141.37 L852.12 141.18 L852.11 140.99 L852.1 140.79 L852.1 140.6 L852.1 140.4 L852.1 140.2 L852.1 140 L852.11 139.81 L852.11 139.61 L852.12 139.41 L852.13 139.21 L852.15 139.01 L852.16 138.81 L852.18 138.61 L852.2 138.4 L852.22 138.2 L852.24 138 L852.26 137.79 L852.29 137.59 L852.32 137.39 L852.35 137.18 L852.38 136.98 L852.42 136.77 L852.45 136.56 L852.49 136.36 L852.53 136.15" fill="none" stroke="#ffa812" stroke-width="2.08"/>
<path d="M568.72 288.51 L568.78 288.29 L568.84 288.08 L568.91 287.87 L568.97 287.66 L569.04 287.45 L569.12 287.24 L569.19 287.03 L569.27 286.82 L569.35 286.61 L569.43 286.4 L569.51 286.19 L569.6 285.98 L569.68 285.77 L569.77 285.56 L569.87 285.35 L569.96 285.14 L570.06 284.93 L570.16 284.73 L570.26 284.52 L570.36 284.31 L570.46 284.1 L570.57 283.89 L570.68 283.69 L570.79 283.48 L570.9 283.27 L571.02 283.06 L571.14 282.86 L571.26 282.65 L571.38 282.45 L571.5 282.24 L571.63 282.04 L571.76 281.83 L571.88 281.63 L572.02 281.43 L572.15 281.23 L572.28 281.02 L572.42 280.82 L572.56 280.62 L572.7 280.42 L572.85 280.22 L572.99 280.02 L573.14 279.82 L573.29 279.63 L573.44 279.43 L573.59 279.23 L573.74 279.04 L573.9 278.84 L574.06 278.65 L574.22 278.45 L574.38 278.26 L574.54 278.07 L574.7 277.87 L574.87 277.68 L575.04 277.49 L575.21 277.3 L575.38 277.11 L575.55 276.93 L575.73 276.74 L575.9 276.55 L576.08 276.37 L576.26 276.18 L576.44 276 L576.62 275.82 L576.81 275.64 L576.99 275.46 L577.18 275.28 L577.37 275.1 L577.55 274.92 L577.75 274.74 L577.94 274.57 L578.13 274.39 L578.33 274.22 L578.52 274.05 L578.72 273.88 L578.92 273.71 L579.12 273.54 L579.32 273.37 L579.52 273.2 L579.73 273.04 L579.93 272.87 L580.14 272.71 L580.34 272.54 L580.55 272.38 L580.76 272.22 L580.97 272.06 L581.18 271.91 L581.4 271.75 L581.61 271.6 L581.82 271.44 L582.04 271.29 L582.25 271.14 L582.47 270.99 L582.69 270.84 L582.91 270.69 L583.13 270.55 L583.35 270.4 L583.57 270.26 L583.79 270.12 L584.02 269.98 L584.24 269.84 L584.46 269.7 L584.69 269.56 L584.91 269.43 L585.14 269.3 L585.37 269.16 L585.6 269.03 L585.82 268.9 L586.05 268.78 L586.28 268.65 L586.51 268.53 L586.74 268.4 L586.97 268.28 L587.2 268.16 L587.43 268.04 L587.67 267.93 L587.9 267.81 L588.13 267.7 L588.36 267.59 L588.6 267.48 L588.83 267.37 L589.06 267.26 L589.3 267.15 L589.53 267.05 L589.77 266.95 L590 266.85 L590.23 266.75 L590.47 266.65 L590.7 266.55 L590.94 266.46 L591.17 266.37 L591.41 266.28 L591.64 266.19 L591.88 266.1 L592.11 266.02 L592.35 265.93 L592.58 265.85 L592.82 265.77 L593.05 265.69 L593.29 265.61 L593.52 265.54 L593.75 265.47 L593.99 265.4 L594.22 265.33 L594.46 265.26 L594.69 265.19 L594.92 265.13 L595.15 265.06 L595.39 265 L595.62 264.95 L595.85 264.89 L596.08 264.83 L596.31 264.78 L596.54 264.73 L596.77 264.68 L597 264.63 L597.23 264.58 L597.46 264.54 L597.68 264.5 L597.91 264.46 L598.14 264.42 L598.36 264.38 L598.59 264.35 L598.81 264.31 L599.04 264.28 L599.26 264.25 L599.48 264.23 L599.7 264.2 L599.92 264.18 L600.14 264.16 L600.36 264.14 L600.58 264.12 L600.8 264.1 L601.02 264.09 L601.23 264.07 L601.45 264.06 L601.66 264.06 L601.88 264.05 L602.09 264.04 L602.3 264.04 L602.51 264.04 L602.72 264.04 L602.93 264.04 L603.14 264.05 L603.35 264.06 L603.55 264.06 L603.76 264.07 L603.96 264.09 L604.17 264.1 L604.37 264.12 L604.57 264.14 L604.77 264.16 L604.97 264.18 L605.17 264.2 L605.36 264.23 L605.56 264.25 L605.75 264.28 L605.94 264.31 L606.14 264.35 L606.33 264.38 L606.52 264.42 L606.7 264.46 L606.89 264.5 L607.08 264.54 L607.26 264.58 L607.44 264.63 L607.63 264.68 L607.81 264.73 L607.98 264.78 L608.16 264.83 L608.34 264.89 L608.51 264.95 L608.69 265 L608.86 265.06 L609.03 265.13 L609.2 265.19 L609.37 265.26 L609.54 265.33 L609.7 265.4 L609.87 265.47 L610.03 265.54 L610.19 265.61 L610.35 265.69 L610.51 265.77 L610.67 265.85 L610.82 265.93 L610.98 266.02 L611.13 266.1 L611.28 266.19 L611.43 266.28 L611.58 266.37 L611.72 266.46 L611.87 266.55 L612.01 266.65 L612.15 266.75 L612.29 266.85 L612.43 266.95 L612.57 267.05 L612.71 267.15 L612.84 267.26 L612.97 267.37 L613.1 267.48 L613.23 267.59 L613.36 267.7 L613.49 267.81 L613.61 267.93 L613.74 268.04 L613.86 268.16 L613.98 268.28 L614.1 268.4 L614.21 268.53 L614.33 268.65 L614.44 268.78 L614.55 268.9 L614.66 269.03 L614.77 269.16 L614.88 269.3 L614.99 269.43 L615.09 269.56 L615.19 269.7 L615.29 269.84 L615.39 269.98 L615.49 270.12 L615.58 270.26 L615.68 270.4 L615.77 270.55 L615.86 270.69 L615.95 270.84 L616.04 270.99 L616.12 271.14 L616.21 271.29 L616.29 271.44 L616.37 271.6 L616.45 271.75 L616.53 271.91 L616.6 272.06 L616.68 272.22 L616.75 272.38 L616.82 272.54 L616.89 272.71 L616.96 272.87 L617.02 273.04 L617.09 273.2 L617.15 273.37 L617.21 273.54 L617.27 273.71 L617.33 273.88 L617.38 274.05 L617.44 274.22 L617.49 274.39 L617.54 274.57 L617.59 274.74 L617.64 274.92 L617.68 275.1 L617.73 275.28 L617.77 275.46 L617.81 275.64 L617.85 275.82 L617.89 276 L617.92 276.18 L617.96 276.37 L617.99 276.55 L618.02 276.74 L618.05 276.93 L618.08 277.11 L618.11 277.3 L618.13 277.49 L618.15 277.68 L618.17 277.87 L618.19 278.07 L618.21 278.26 L618.23 278.45 L618.24 278.65 L618.26 278.84 L618.27 279.04 L618.28 279.23 L618.29 279.43 L618.29 279.63 L618.3 279.82 L618.3 280.02 L618.3 280.22 L618.3 280.42 L618.3 280.62 L618.3 280.82 L618.3 281.02 L618.29 281.23 L618.28 281.43 L618.27 281.63 L618.26 281.83 L618.25 282.04 L618.24 282.24 L618.22 282.45 L618.2 282.65 L618.18 282.86 L618.16 283.06 L618.14 283.27 L618.12 283.48 L618.09 283.69 L618.07 283.89 L618.04 284.1 L618.01 284.31 L617.98 284.52 L617.95 284.73 L617.91 284.93 L617.88 285.14 L617.84 285.35 L617.8 285.56 L617.76 285.77 L617.72 285.98 L617.68 286.19 L617.63 286.4 L617.59 286.61 L617.54 286.82 L617.49 287.03 L617.44 287.24 L617.39 287.45 L617.33 287.66 L617.28 287.87 L617.22 288.08 L617.17 288.29 L617.11 288.51 L617.05 288.72 L616.98 288.93 L616.92 289.14 L616.86 289.35 L616.79 289.56 L616.72 289.77 L616.65 289.98 L616.58 290.19 L616.51 290.4 L616.44 290.61 L616.36 290.81 L616.28 291.02 L616.21 291.23 L616.13 291.44 L616.05 291.65 L615.96 291.86 L615.88 292.06 L615.8 292.27 L615.71 292.48 L615.62 292.69 L615.54 292.89 L615.45 293.1 L615.35 293.3 L615.26 293.51 L615.17 293.71 L615.07 293.92 L614.97 294.12 L614.88 294.33 L614.78 294.53 L614.68 294.73 L614.57 294.93 L614.47 295.13 L614.37 295.34 L614.26 295.54 L614.15 295.74 L614.05 295.93 L613.94 296.13 L613.82 296.33 L613.71 296.53 L613.6 296.73 L613.48 296.92 L613.37 297.12 L613.25 297.31 L613.13 297.51 L613.01 297.7 L612.89 297.89 L612.77 298.08 L612.65 298.28 L612.52 298.47 L612.4 298.66 L612.27 298.84 L612.14 299.03 L612.01 299.22 L611.88 299.41 L611.75 299.59 L611.62 299.78 L611.48 299.96 L611.35 300.14 L611.21 300.33 L611.07 300.51 L610.93 300.69 L610.79 300.87 L610.65 301.04 L610.51 301.22 L610.37 301.4 L610.22 301.57 L610.08 301.75 L609.93 301.92 L609.79 302.09 L609.64 302.26 L609.49 302.43 L609.34 302.6 L609.19 302.77 L609.03 302.94 L608.88 303.1 L608.72 303.27 L608.57 303.43 L608.41 303.6 L608.25 303.76 L608.09 303.92 L607.93 304.08 L607.77 304.23 L607.61 304.39 L607.45 304.55 L607.28 304.7 L607.12 304.85 L606.95 305 L606.79 305.15 L606.62 305.3 L606.45 305.45 L606.28 305.6 L606.11 305.74 L605.94 305.89 L605.77 306.03 L605.59 306.17 L605.42 306.31 L605.24 306.45 L605.07 306.59 L604.89 306.72 L604.71 306.86 L604.54 306.99 L604.36 307.12 L604.18 307.25 L604 307.38 L603.81 307.51 L603.63 307.63 L603.45 307.76 L603.26 307.88 L603.08 308 L602.89 308.12 L602.71 308.24 L602.52 308.36 L602.33 308.47 L602.14 308.59 L601.95 308.7 L601.76 308.81 L601.57 308.92 L601.38 309.03 L601.19 309.13 L601 309.24 L600.8 309.34 L600.61 309.44 L600.42 309.54 L600.22 309.64 L600.03 309.74 L599.83 309.83 L599.63 309.93 L599.43 310.02 L599.24 310.11 L599.04 310.2 L598.84 310.28 L598.64 310.37 L598.44 310.45 L598.24 310.53 L598.04 310.62 L597.83 310.69 L597.63 310.77 L597.43 310.85 L597.22 310.92 L597.02 310.99 L596.82 311.06 L596.61 311.13 L596.41 311.2 L596.2 311.26 L596 311.33 L595.79 311.39 L595.58 311.45 L595.38 311.5 L595.17 311.56 L594.96 311.62 L594.75 311.67 L594.55 311.72 L594.34 311.77 L594.13 311.82 L593.92 311.86 L593.71 311.91 L593.5 311.95 L593.29 311.99 L593.08 312.03 L592.87 312.07 L592.66 312.1 L592.45 312.13 L592.24 312.17 L592.03 312.2 L591.82 312.22 L591.61 312.25 L591.4 312.27 L591.19 312.3 L590.98 312.32 L590.77 312.34 L590.55 312.35 L590.34 312.37 L590.13 312.38 L589.92 312.39 L589.71 312.4 L589.5 312.41 L589.29 312.42 L589.08 312.42 L588.87 312.43 L588.66 312.43 L588.45 312.43 L588.24 312.42 L588.03 312.42 L587.82 312.41 L587.61 312.4 L587.4 312.39 L587.19 312.38 L586.98 312.37 L586.77 312.35 L586.56 312.34 L586.35 312.32 L586.14 312.3 L585.94 312.27 L585.73 312.25 L585.52 312.22 L585.32 312.2 L585.11 312.17 L584.9 312.13 L584.7 312.1 L584.49 312.07 L584.29 312.03 L584.08 311.99 L583.88 311.95 L583.68 311.91 L583.48 311.86 L583.27 311.82 L583.07 311.77 L582.87 311.72 L582.67 311.67 L582.47 311.62 L582.27 311.56 L582.07 311.5 L581.88 311.45 L581.68 311.39 L581.48 311.33 L581.29 311.26 L581.09 311.2 L580.9 311.13 L580.71 311.06 L580.51 310.99 L580.32 310.92 L580.13 310.85 L579.94 310.77 L579.75 310.69 L579.56 310.62 L579.38 310.53 L579.19 310.45 L579 310.37 L578.82 310.28 L578.64 310.2 L578.45 310.11 L578.27 310.02 L578.09 309.93 L577.91 309.83 L577.73 309.74 L577.55 309.64 L577.38 309.54 L577.2 309.44 L577.03 309.34 L576.86 309.24 L576.68 309.13 L576.51 309.03 L576.34 308.92 L576.18 308.81 L576.01 308.7 L575.84 308.59 L575.68 308.47 L575.52 308.36 L575.35 308.24 L575.19 308.12 L575.03 308 L574.88 307.88 L574.72 307.76 L574.56 307.63 L574.41 307.51 L574.26 307.38 L574.11 307.25 L573.96 307.12 L573.81 306.99 L573.66 306.86 L573.52 306.72 L573.37 306.59 L573.23 306.45 L573.09 306.31 L572.95 306.17 L572.82 306.03 L572.68 305.89 L572.55 305.74 L572.41 305.6 L572.28 305.45 L572.15 305.3 L572.03 305.15 L571.9 305 L571.78 304.85 L571.66 304.7 L571.54 304.55 L571.42 304.39 L571.3 304.23 L571.18 304.08 L571.07 303.92 L570.96 303.76 L570.85 303.6 L570.74 303.43 L570.63 303.27 L570.53 303.1 L570.43 302.94 L570.33 302.77 L570.23 302.6 L570.13 302.43 L570.04 302.26 L569.94 302.09 L569.85 301.92 L569.76 301.75 L569.68 301.57 L569.59 301.4 L569.51 301.22 L569.43 301.04 L569.35 300.87 L569.27 300.69 L569.2 300.51 L569.13 300.33 L569.05 300.14 L568.99 299.96 L568.92 299.78 L568.85 299.59 L568.79 299.41 L568.73 299.22 L568.67 299.03 L568.62 298.84 L568.56 298.66 L568.51 298.47 L568.46 298.28 L568.42 298.08 L568.37 297.89 L568.33 297.7 L568.29 297.51 L568.25 297.31 L568.21 297.12 L568.18 296.92 L568.14 296.73 L568.11 296.53 L568.09 296.33 L568.06 296.13 L568.04 295.93 L568.02 295.74 L568 295.54 L567.98 295.34 L567.97 295.13 L567.96 294.93 L567.95 294.73 L567.94 294.53 L567.93 294.33 L567.93 294.12 L567.93 293.92 L567.93 293.71 L567.94 293.51 L567.94 293.3 L567.95 293.1 L567.96 292.89 L567.97 292.69 L567.99 292.48 L568.01 292.27 L568.03 292.06 L568.05 291.86 L568.07 291.65 L568.1 291.44 L568.13 291.23 L568.16 291.02 L568.2 290.81 L568.23 290.61 L568.27 290.4 L568.31 290.19 L568.35 289.98 L568.4 289.77 L568.45 289.56 L568.5 289.35 L568.55 289.14 L568.6 288.93 L568.66 288.72 L568.72 288.51" fill="none" stroke="#ee82ee" stroke-width="2.08"/>
<path d="M483.34 305.95 L483.38 305.74 L483.42 305.52 L483.46 305.31 L483.5 305.1 L483.55 304.89 L483.59 304.67 L483.64 304.46 L483.7 304.25 L483.75 304.04 L483.81 303.82 L483.87 303.61 L483.93 303.4 L483.99 303.19 L484.06 302.98 L484.13 302.77 L484.2 302.56 L484.27 302.34 L484.35 302.13 L484.43 301.92 L484.51 301.71 L484.59 301.5 L484.67 301.3 L484.76 301.09 L484.85 300.88 L484.94 300.67 L485.03 300.46 L485.13 300.25 L485.23 300.05 L485.33 299.84 L485.43 299.63 L485.54 299.43 L485.64 299.22 L485.75 299.02 L485.86 298.81 L485.98 298.61 L486.09 298.41 L486.21 298.2 L486.33 298 L486.45 297.8 L486.57 297.6 L486.7 297.4 L486.83 297.2 L486.96 297 L487.09 296.8 L487.22 296.6 L487.36 296.41 L487.5 296.21 L487.64 296.02 L487.78 295.82 L487.92 295.63 L488.07 295.43 L488.21 295.24 L488.36 295.05 L488.52 294.86 L488.67 294.67 L488.82 294.48 L488.98 294.29 L489.14 294.1 L489.3 293.91 L489.46 293.73 L489.62 293.54 L489.79 293.36 L489.96 293.18 L490.12 292.99 L490.29 292.81 L490.47 292.63 L490.64 292.45 L490.81 292.28 L490.99 292.1 L491.17 291.92 L491.35 291.75 L491.53 291.57 L491.71 291.4 L491.9 291.23 L492.08 291.06 L492.27 290.89 L492.46 290.72 L492.65 290.55 L492.84 290.39 L493.03 290.22 L493.23 290.06 L493.42 289.89 L493.62 289.73 L493.82 289.57 L494.01 289.41 L494.21 289.26 L494.42 289.1 L494.62 288.94 L494.82 288.79 L495.03 288.64 L495.23 288.49 L495.44 288.34 L495.65 288.19 L495.86 288.04 L496.07 287.89 L496.28 287.75 L496.49 287.61 L496.7 287.46 L496.92 287.32 L497.13 287.18 L497.35 287.05 L497.56 286.91 L497.78 286.77 L498 286.64 L498.22 286.51 L498.44 286.38 L498.66 286.25 L498.88 286.12 L499.1 286 L499.32 285.87 L499.55 285.75 L499.77 285.63 L499.99 285.51 L500.22 285.39 L500.44 285.27 L500.67 285.16 L500.9 285.04 L501.12 284.93 L501.35 284.82 L501.58 284.71 L501.8 284.61 L502.03 284.5 L502.26 284.4 L502.49 284.3 L502.72 284.19 L502.95 284.1 L503.18 284 L503.41 283.9 L503.64 283.81 L503.87 283.72 L504.1 283.63 L504.33 283.54 L504.56 283.45 L504.79 283.37 L505.03 283.28 L505.26 283.2 L505.49 283.12 L505.72 283.04 L505.95 282.96 L506.18 282.89 L506.41 282.82 L506.64 282.75 L506.88 282.68 L507.11 282.61 L507.34 282.54 L507.57 282.48 L507.8 282.42 L508.03 282.36 L508.26 282.3 L508.49 282.24 L508.72 282.18 L508.95 282.13 L509.17 282.08 L509.4 282.03 L509.63 281.98 L509.86 281.94 L510.09 281.89 L510.31 281.85 L510.54 281.81 L510.76 281.77 L510.99 281.73 L511.22 281.7 L511.44 281.67 L511.66 281.64 L511.89 281.61 L512.11 281.58 L512.33 281.55 L512.55 281.53 L512.78 281.51 L513 281.49 L513.22 281.47 L513.43 281.45 L513.65 281.44 L513.87 281.43 L514.09 281.42 L514.3 281.41 L514.52 281.4 L514.73 281.4 L514.95 281.39 L515.16 281.39 L515.37 281.39 L515.58 281.4 L515.79 281.4 L516 281.41 L516.21 281.42 L516.42 281.43 L516.63 281.44 L516.83 281.45 L517.04 281.47 L517.24 281.49 L517.45 281.51 L517.65 281.53 L517.85 281.55 L518.05 281.58 L518.25 281.61 L518.45 281.64 L518.64 281.67 L518.84 281.7 L519.03 281.73 L519.23 281.77 L519.42 281.81 L519.61 281.85 L519.8 281.89 L519.99 281.94 L520.18 281.98 L520.36 282.03 L520.55 282.08 L520.73 282.13 L520.92 282.18 L521.1 282.24 L521.28 282.3 L521.46 282.36 L521.64 282.42 L521.82 282.48 L521.99 282.54 L522.17 282.61 L522.34 282.68 L522.51 282.75 L522.68 282.82 L522.85 282.89 L523.02 282.96 L523.19 283.04 L523.35 283.12 L523.52 283.2 L523.68 283.28 L523.84 283.37 L524 283.45 L524.16 283.54 L524.32 283.63 L524.47 283.72 L524.63 283.81 L524.78 283.9 L524.93 284 L525.08 284.1 L525.23 284.19 L525.38 284.3 L525.53 284.4 L525.67 284.5 L525.81 284.61 L525.96 284.71 L526.1 284.82 L526.24 284.93 L526.37 285.04 L526.51 285.16 L526.64 285.27 L526.78 285.39 L526.91 285.51 L527.04 285.63 L527.17 285.75 L527.3 285.87 L527.42 286 L527.55 286.12 L527.67 286.25 L527.79 286.38 L527.91 286.51 L528.03 286.64 L528.15 286.77 L528.26 286.91 L528.37 287.05 L528.49 287.18 L528.6 287.32 L528.71 287.46 L528.82 287.61 L528.92 287.75 L529.03 287.89 L529.13 288.04 L529.23 288.19 L529.33 288.34 L529.43 288.49 L529.53 288.64 L529.62 288.79 L529.72 288.94 L529.81 289.1 L529.9 289.26 L529.99 289.41 L530.08 289.57 L530.17 289.73 L530.25 289.89 L530.34 290.06 L530.42 290.22 L530.5 290.39 L530.58 290.55 L530.66 290.72 L530.73 290.89 L530.81 291.06 L530.88 291.23 L530.95 291.4 L531.02 291.57 L531.09 291.75 L531.16 291.92 L531.22 292.1 L531.29 292.28 L531.35 292.45 L531.41 292.63 L531.47 292.81 L531.53 292.99 L531.59 293.18 L531.64 293.36 L531.69 293.54 L531.75 293.73 L531.8 293.91 L531.85 294.1 L531.89 294.29 L531.94 294.48 L531.98 294.67 L532.03 294.86 L532.07 295.05 L532.11 295.24 L532.15 295.43 L532.18 295.63 L532.22 295.82 L532.25 296.02 L532.29 296.21 L532.32 296.41 L532.35 296.6 L532.38 296.8 L532.4 297 L532.43 297.2 L532.45 297.4 L532.48 297.6 L532.5 297.8 L532.52 298 L532.53 298.2 L532.55 298.41 L532.57 298.61 L532.58 298.81 L532.59 299.02 L532.6 299.22 L532.61 299.43 L532.62 299.63 L532.63 299.84 L532.63 300.05 L532.64 300.25 L532.64 300.46 L532.64 300.67 L532.64 300.88 L532.64 301.09 L532.63 301.3 L532.63 301.5 L532.62 301.71 L532.61 301.92 L532.61 302.13 L532.6 302.34 L532.58 302.56 L532.57 302.77 L532.56 302.98 L532.54 303.19 L532.52 303.4 L532.5 303.61 L532.48 303.82 L532.46 304.04 L532.44 304.25 L532.41 304.46 L532.39 304.67 L532.36 304.89 L532.33 305.1 L532.3 305.31 L532.27 305.52 L532.24 305.74 L532.21 305.95 L532.17 306.16 L532.13 306.37 L532.1 306.59 L532.06 306.8 L532.02 307.01 L531.97 307.22 L531.93 307.44 L531.89 307.65 L531.84 307.86 L531.79 308.07 L531.74 308.28 L531.69 308.49 L531.64 308.7 L531.59 308.92 L531.54 309.13 L531.48 309.34 L531.43 309.55 L531.37 309.76 L531.31 309.97 L531.25 310.18 L531.19 310.38 L531.12 310.59 L531.06 310.8 L530.99 311.01 L530.93 311.22 L530.86 311.42 L530.79 311.63 L530.72 311.84 L530.64 312.04 L530.57 312.25 L530.5 312.45 L530.42 312.66 L530.34 312.86 L530.26 313.06 L530.18 313.26 L530.1 313.47 L530.02 313.67 L529.94 313.87 L529.85 314.07 L529.77 314.27 L529.68 314.47 L529.59 314.67 L529.5 314.86 L529.41 315.06 L529.32 315.26 L529.22 315.45 L529.13 315.65 L529.03 315.84 L528.93 316.03 L528.84 316.23 L528.74 316.42 L528.63 316.61 L528.53 316.8 L528.43 316.99 L528.32 317.18 L528.22 317.36 L528.11 317.55 L528 317.74 L527.89 317.92 L527.78 318.11 L527.67 318.29 L527.56 318.47 L527.44 318.65 L527.33 318.83 L527.21 319.01 L527.09 319.19 L526.97 319.37 L526.85 319.54 L526.73 319.72 L526.61 319.89 L526.48 320.07 L526.36 320.24 L526.23 320.41 L526.11 320.58 L525.98 320.75 L525.85 320.92 L525.72 321.08 L525.58 321.25 L525.45 321.41 L525.32 321.57 L525.18 321.74 L525.04 321.9 L524.91 322.06 L524.77 322.21 L524.63 322.37 L524.49 322.53 L524.34 322.68 L524.2 322.83 L524.06 322.99 L523.91 323.14 L523.76 323.29 L523.62 323.43 L523.47 323.58 L523.32 323.73 L523.17 323.87 L523.02 324.01 L522.86 324.15 L522.71 324.29 L522.55 324.43 L522.4 324.57 L522.24 324.7 L522.08 324.84 L521.92 324.97 L521.76 325.1 L521.6 325.23 L521.44 325.36 L521.27 325.49 L521.11 325.61 L520.94 325.74 L520.78 325.86 L520.61 325.98 L520.44 326.1 L520.27 326.22 L520.1 326.33 L519.93 326.45 L519.76 326.56 L519.59 326.67 L519.41 326.78 L519.24 326.89 L519.06 327 L518.88 327.1 L518.71 327.21 L518.53 327.31 L518.35 327.41 L518.17 327.51 L517.99 327.61 L517.8 327.7 L517.62 327.79 L517.44 327.89 L517.25 327.98 L517.07 328.07 L516.88 328.15 L516.69 328.24 L516.51 328.32 L516.32 328.4 L516.13 328.48 L515.94 328.56 L515.75 328.64 L515.56 328.72 L515.36 328.79 L515.17 328.86 L514.98 328.93 L514.78 329 L514.58 329.07 L514.39 329.13 L514.19 329.19 L513.99 329.25 L513.8 329.31 L513.6 329.37 L513.4 329.43 L513.2 329.48 L513 329.53 L512.8 329.58 L512.59 329.63 L512.39 329.68 L512.19 329.72 L511.99 329.77 L511.78 329.81 L511.58 329.85 L511.37 329.89 L511.17 329.92 L510.96 329.96 L510.75 329.99 L510.55 330.02 L510.34 330.05 L510.13 330.07 L509.92 330.1 L509.71 330.12 L509.5 330.14 L509.29 330.16 L509.09 330.18 L508.87 330.2 L508.66 330.21 L508.45 330.22 L508.24 330.23 L508.03 330.24 L507.82 330.25 L507.61 330.25 L507.39 330.25 L507.18 330.26 L506.97 330.25 L506.76 330.25 L506.54 330.25 L506.33 330.24 L506.12 330.23 L505.9 330.22 L505.69 330.21 L505.48 330.2 L505.26 330.18 L505.05 330.16 L504.83 330.14 L504.62 330.12 L504.41 330.1 L504.19 330.07 L503.98 330.05 L503.77 330.02 L503.55 329.99 L503.34 329.96 L503.12 329.92 L502.91 329.89 L502.7 329.85 L502.48 329.81 L502.27 329.77 L502.06 329.72 L501.85 329.68 L501.63 329.63 L501.42 329.58 L501.21 329.53 L501 329.48 L500.79 329.43 L500.57 329.37 L500.36 329.31 L500.15 329.25 L499.94 329.19 L499.73 329.13 L499.52 329.07 L499.32 329 L499.11 328.93 L498.9 328.86 L498.69 328.79 L498.49 328.72 L498.28 328.64 L498.07 328.56 L497.87 328.48 L497.66 328.4 L497.46 328.32 L497.26 328.24 L497.06 328.15 L496.85 328.07 L496.65 327.98 L496.45 327.89 L496.25 327.79 L496.05 327.7 L495.85 327.61 L495.66 327.51 L495.46 327.41 L495.27 327.31 L495.07 327.21 L494.88 327.1 L494.68 327 L494.49 326.89 L494.3 326.78 L494.11 326.67 L493.92 326.56 L493.73 326.45 L493.54 326.33 L493.36 326.22 L493.17 326.1 L492.99 325.98 L492.81 325.86 L492.62 325.74 L492.44 325.61 L492.26 325.49 L492.09 325.36 L491.91 325.23 L491.73 325.1 L491.56 324.97 L491.38 324.84 L491.21 324.7 L491.04 324.57 L490.87 324.43 L490.7 324.29 L490.54 324.15 L490.37 324.01 L490.21 323.87 L490.05 323.73 L489.88 323.58 L489.73 323.43 L489.57 323.29 L489.41 323.14 L489.26 322.99 L489.1 322.83 L488.95 322.68 L488.8 322.53 L488.65 322.37 L488.5 322.21 L488.36 322.06 L488.21 321.9 L488.07 321.74 L487.93 321.57 L487.79 321.41 L487.65 321.25 L487.52 321.08 L487.39 320.92 L487.25 320.75 L487.12 320.58 L486.99 320.41 L486.87 320.24 L486.74 320.07 L486.62 319.89 L486.5 319.72 L486.38 319.54 L486.26 319.37 L486.15 319.19 L486.03 319.01 L485.92 318.83 L485.81 318.65 L485.71 318.47 L485.6 318.29 L485.5 318.11 L485.4 317.92 L485.3 317.74 L485.2 317.55 L485.1 317.36 L485.01 317.18 L484.92 316.99 L484.83 316.8 L484.74 316.61 L484.66 316.42 L484.58 316.23 L484.49 316.03 L484.42 315.84 L484.34 315.65 L484.27 315.45 L484.19 315.26 L484.12 315.06 L484.06 314.86 L483.99 314.67 L483.93 314.47 L483.87 314.27 L483.81 314.07 L483.75 313.87 L483.7 313.67 L483.65 313.47 L483.6 313.26 L483.55 313.06 L483.5 312.86 L483.46 312.66 L483.42 312.45 L483.38 312.25 L483.35 312.04 L483.31 311.84 L483.28 311.63 L483.25 311.42 L483.23 311.22 L483.2 311.01 L483.18 310.8 L483.16 310.59 L483.15 310.38 L483.13 310.18 L483.12 309.97 L483.11 309.76 L483.1 309.55 L483.1 309.34 L483.1 309.13 L483.1 308.92 L483.1 308.7 L483.1 308.49 L483.11 308.28 L483.12 308.07 L483.13 307.86 L483.14 307.65 L483.16 307.44 L483.18 307.22 L483.2 307.01 L483.22 306.8 L483.25 306.59 L483.28 306.37 L483.31 306.16 L483.34 305.95" fill="none" stroke="#adff2f" stroke-width="2.08"/>
<path d="M507.5 221.5 L508.06 220.88 L508.63 220.26 L509.2 219.64 L509.78 219.02 L510.36 218.4 L510.94 217.78 L511.53 217.16 L512.12 216.54 L512.72 215.92 L513.32 215.3 L513.93 214.69 L514.54 214.07 L515.15 213.45 L515.77 212.83 L516.39 212.21 L517.01 211.59 L517.64 210.98 L518.27 210.36 L518.91 209.74 L519.55 209.12 L520.2 208.51 L520.85 207.89 L521.5 207.27 L522.16 206.66 L522.82 206.04 L523.48 205.42 L524.15 204.81 L524.82 204.19 L525.5 203.57 L526.18 202.96 L526.86 202.34 L527.55 201.73 L528.24 201.11 L528.93 200.5 L529.63 199.88 L530.34 199.27 L531.04 198.66 L531.75 198.04 L532.47 197.43 L533.18 196.81 L533.91 196.2 L534.63 195.59 L535.36 194.97 L536.09 194.36 L536.83 193.75 L537.56 193.14 L538.31 192.52 L539.05 191.91 L539.8 191.3 L540.56 190.69 L541.31 190.08 L542.07 189.47 L542.84 188.86 L543.61 188.25 L544.38 187.64 L545.15 187.03 L545.93 186.42 L546.71 185.81 L547.49 185.2 L548.28 184.59 L549.07 183.98 L549.86 183.37 L550.66 182.76 L551.46 182.16 L552.27 181.55 L553.07 180.94 L553.88 180.34 L554.7 179.73 L555.51 179.12 L556.33 178.52 L557.16 177.91 L557.98 177.31 L558.81 176.7 L559.64 176.1 L560.48 175.49 L561.32 174.89 L562.16 174.28 L563 173.68 L563.85 173.08 L564.7 172.47 L565.55 171.87 L566.41 171.27 L567.26 170.67 L568.12 170.07 L568.99 169.47 L569.86 168.86 L570.72 168.26 L571.6 167.66 L572.47 167.07 L573.35 166.47 L574.23 165.87 L575.11 165.27 L576 164.67 L576.89 164.07 L577.78 163.48 L578.67 162.88 L579.56 162.28 L580.46 161.69 L581.36 161.09 L582.26 160.5 L583.17 159.9 L584.08 159.31 L584.99 158.72 L585.9 158.12 L586.81 157.53 L587.73 156.94 L588.65 156.35 L589.57 155.76 L590.49 155.17 L591.41 154.58 L592.34 153.99 L593.27 153.4 L594.2 152.81 L595.13 152.22 L596.07 151.63 L597 151.05 L597.94 150.46 L598.88 149.88 L599.82 149.29 L600.77 148.71 L601.71 148.12 L602.66 147.54 L603.61 146.96 L604.56 146.38 L605.51 145.79 L606.46 145.21 L607.42 144.63 L608.37 144.05 L609.33 143.48 L610.29 142.9 L611.25 142.32 L612.21 141.74 L613.17 141.17 L614.13 140.59 L615.1 140.02 L616.06 139.44 L617.03 138.87 L617.99 138.3 L618.96 137.73 L619.93 137.16 L620.9 136.59 L621.87 136.02 L622.84 135.45 L623.81 134.89 L624.79 134.32 L625.76 133.75 L626.73 133.19 L627.71 132.63 L628.68 132.06 L629.65 131.5 L630.63 130.94 L631.6 130.38 L632.58 129.82 L633.55 129.26 L634.53 128.71 L635.5 128.15 L636.48 127.6 L637.45 127.04 L638.42 126.49 L639.4 125.94 L640.37 125.39 L641.34 124.84 L642.32 124.29 L643.29 123.75 L644.26 123.2 L645.23 122.66 L646.2 122.12 L647.16 121.57 L648.13 121.03 L649.1 120.49 L650.06 119.96 L651.02 119.42 L651.99 118.89 L652.95 118.35 L653.9 117.82 L654.86 117.29 L655.82 116.76 L656.77 116.23 L657.72 115.71 L658.67 115.18 L659.62 114.66 L660.56 114.14 L661.5 113.62 L662.44 113.1 L663.38 112.59 L664.31 112.07 L665.25 111.56 L666.17 111.05 L667.1 110.54 L668.02 110.03 L668.94 109.53 L669.86 109.02 L670.77 108.52 L671.68 108.02 L672.58 107.53 L673.48 107.03 L674.38 106.54 L675.27 106.05 L676.15 105.56 L677.04 105.08 L677.91 104.59 L678.79 104.11 L679.65 103.63 L680.52 103.16 L681.37 102.68 L682.22 102.21 L683.07 101.74 L683.91 101.28 L684.74 100.81 L685.57 100.35 L686.39 99.89 L687.2 99.44 L688.01 98.99 L688.81 98.54 L689.6 98.09 L690.39 97.65 L691.16 97.21 L691.93 96.77 L692.69 96.34 L693.44 95.91 L694.19 95.48 L694.92 95.06 L695.65 94.64 L696.36 94.22 M1107.23 93.81 L1105.52 93.4 L1103.82 93 L1102.13 92.59 L1100.45 92.2 L1098.78 91.8 L1097.12 91.41 L1095.47 91.03 L1093.84 90.65 L1092.21 90.27 L1090.6 89.9" fill="none" stroke="#dd1cf2" stroke-width="1.5" stroke-dasharray="1.5 2.18"/>
<path d="M499 232 L499.47 231.38 L499.94 230.76 L500.41 230.14 L500.89 229.53 L501.37 228.91 L501.86 228.29 L502.35 227.67 L502.85 227.05 L503.35 226.44 L503.85 225.82 L504.36 225.2 L504.87 224.58 L505.39 223.97 L505.91 223.35 L506.44 222.73 L506.97 222.12 L507.5 221.5" fill="none" stroke="#dd1cf2" stroke-width="1.39"/>
<path d="M546 309.6 L545.82 309 L545.65 308.39 L545.48 307.79 L545.31 307.18 L545.15 306.58 L544.99 305.98 L544.83 305.37 L544.68 304.77 L544.53 304.16 L544.38 303.56 L544.24 302.96 L544.11 302.35 L543.97 301.75 L543.84 301.14 L543.72 300.54 L543.59 299.94 L543.48 299.33 L543.36 298.73 L543.25 298.13 L543.14 297.52 L543.04 296.92 L542.94 296.31 L542.84 295.71 L542.75 295.11 L542.66 294.5 L542.58 293.9 L542.5 293.3 L542.42 292.69 L542.35 292.09 L542.28 291.49 L542.21 290.88 L542.15 290.28 L542.09 289.68 L542.03 289.08 L541.98 288.47 L541.94 287.87 L541.89 287.27 L541.85 286.66 L541.82 286.06 L541.78 285.46 L541.76 284.86 L541.73 284.25 L541.71 283.65 L541.69 283.05 L541.68 282.45 L541.67 281.85 L541.66 281.24 L541.66 280.64 L541.66 280.04 L541.67 279.44 L541.67 278.84 L541.69 278.23 L541.7 277.63 L541.72 277.03 L541.75 276.43 L541.77 275.83 L541.8 275.23 L541.84 274.62 L541.88 274.02 L541.92 273.42 L541.97 272.82 L542.01 272.22 L542.07 271.62 L542.12 271.02 L542.18 270.42 L542.25 269.82 L542.32 269.22 L542.39 268.62 L542.46 268.02 L542.54 267.42 L542.62 266.82 L542.71 266.22 L542.8 265.62 L542.89 265.02 L542.99 264.42 L543.09 263.82 L543.2 263.22 L543.3 262.62 L543.42 262.02 L543.53 261.42 L543.65 260.82 L543.77 260.22 L543.9 259.62 L544.03 259.03 L544.16 258.43 L544.3 257.83 L544.44 257.23 L544.58 256.63 L544.73 256.03 L544.88 255.44 L545.04 254.84 L545.2 254.24 L545.36 253.64 L545.52 253.05 L545.69 252.45 L545.86 251.85 L546.04 251.26 L546.22 250.66 L546.4 250.06 L546.59 249.47 L546.78 248.87 L546.97 248.27 L547.17 247.68 L547.37 247.08 L547.58 246.49 L547.79 245.89 L548 245.3 L548.21 244.7 L548.43 244.11 L548.65 243.51 L548.88 242.92 L549.11 242.32 L549.34 241.73 L549.57 241.13 L549.81 240.54 L550.05 239.95 L550.3 239.35 L550.55 238.76 L550.8 238.16 L551.06 237.57 L551.32 236.98 L551.58 236.39 L551.84 235.79 L552.11 235.2 L552.39 234.61 L552.66 234.02 L552.94 233.43 L553.23 232.83 L553.51 232.24 L553.8 231.65 L554.09 231.06 L554.39 230.47 L554.69 229.88 L554.99 229.29 L555.3 228.7 L555.61 228.11 L555.92 227.52 L556.23 226.93 L556.55 226.34 L556.87 225.75 L557.2 225.16 L557.53 224.58 L557.86 223.99 L558.19 223.4 L558.53 222.81 L558.87 222.22 L559.22 221.64 L559.56 221.05 L559.91 220.46 L560.27 219.88 L560.62 219.29 L560.98 218.71 L561.34 218.12 L561.71 217.53 L562.08 216.95 L562.45 216.36 L562.82 215.78 L563.2 215.2 L563.58 214.61 L563.97 214.03 L564.35 213.44 L564.74 212.86 L565.14 212.28 L565.53 211.7 L565.93 211.11 L566.33 210.53 L566.74 209.95 L567.14 209.37 L567.55 208.79 L567.97 208.21 L568.38 207.63 L568.8 207.05 L569.22 206.47 L569.64 205.89 L570.07 205.31 L570.5 204.73 L570.93 204.15 L571.37 203.58 L571.81 203 L572.25 202.42 L572.69 201.84 L573.14 201.27 L573.58 200.69 L574.04 200.12 L574.49 199.54 L574.95 198.96 L575.4 198.39 L575.87 197.82 L576.33 197.24 L576.8 196.67 L577.27 196.1 L577.74 195.52 L578.21 194.95 L578.69 194.38 L579.17 193.81 L579.65 193.24 L580.13 192.67 L580.62 192.1 L581.11 191.53 L581.6 190.96 L582.09 190.39 L582.59 189.82 L583.09 189.25 L583.59 188.69 L584.09 188.12 L584.59 187.55 L585.1 186.99 L585.61 186.42 L586.12 185.86 L586.63 185.29 L587.15 184.73 L587.67 184.17 L588.19 183.6 L588.71 183.04 L589.23 182.48 L589.76 181.92 L590.29 181.36 L590.82 180.8 L591.35 180.24 L591.88 179.68 L592.42 179.12 L592.95 178.56 L593.49 178.01 L594.03 177.45 L594.58 176.89 L595.12 176.34 L595.67 175.78 L596.22 175.23 L596.77 174.68 L597.32 174.12 L597.87 173.57 L598.42 173.02 L598.98 172.47 L599.54 171.92 L600.1 171.37 L600.66 170.82 L601.22 170.27 L601.78 169.72 L602.35 169.18 L602.92 168.63 L603.48 168.08 L604.05 167.54 L604.62 167 L605.19 166.45 L605.77 165.91 L606.34 165.37 L606.92 164.83 L607.49 164.29 L608.07 163.75 L608.65 163.21 L609.23 162.67 L609.81 162.13 L610.39 161.6 L610.97 161.06 L611.55 160.53 L612.14 159.99 L612.72 159.46 L613.31 158.93 L613.89 158.4 L614.48 157.87 L615.07 157.34 L615.66 156.81 L616.24 156.29 L616.83 155.76 L617.42 155.23 L618.01 154.71 L618.6 154.19 L619.19 153.66 L619.78 153.14 L620.38 152.62 L620.97 152.1 L621.56 151.59 L622.15 151.07 L622.74 150.55 L623.33 150.04 L623.93 149.52 L624.52 149.01 L625.11 148.5 L625.7 147.99 L626.29 147.48 L626.88 146.97 L627.47 146.47 L628.06 145.96 L628.65 145.46 L629.24 144.95 L629.83 144.45 L630.42 143.95 L631 143.45 L631.59 142.96 L632.18 142.46 L632.76 141.96 L633.34 141.47 L633.93 140.98 L634.51 140.49 L635.09 140 L635.67 139.51 L636.25 139.02 L636.82 138.54 L637.4 138.05 L637.97 137.57 L638.55 137.09 L639.12 136.61 L639.69 136.14 L640.26 135.66 L640.82 135.19 L641.39 134.71 L641.95 134.24 L642.51 133.77 L643.07 133.31 L643.62 132.84 L644.18 132.38 L644.73 131.92 L645.28 131.46 L645.82 131 L646.37 130.54 L646.91 130.09 L647.45 129.63 L647.98 129.18 L648.51 128.73 L649.04 128.29 L649.57 127.84 L650.09 127.4 L650.61 126.96 L651.13 126.52 L651.64 126.08 L652.15 125.65 L652.66 125.22 L653.16 124.79 L653.66 124.36 L654.16 123.93 L654.65 123.51 L655.13 123.09 L655.61 122.67 L656.09 122.26 L656.56 121.84 L657.03 121.43 L657.5 121.02 L657.95 120.62 L658.41 120.21 L658.86 119.81 L659.3 119.41 L659.74 119.02 L660.17 118.63 L660.6 118.23 L661.02 117.85 L661.44 117.46 L661.84 117.08 L662.25 116.7 L662.65 116.33 L663.04 115.95 L663.42 115.58 L663.8 115.22 L664.17 114.85 L664.53 114.49 L664.89 114.13 L665.24 113.78 L665.58 113.43 L665.92 113.08 L666.25 112.74 L666.57 112.39 L666.88 112.06 L667.18 111.72 L667.48 111.39 L667.76 111.06 L668.04 110.74 L668.31 110.42 L668.57 110.1 L668.83 109.79 L669.07 109.48 L669.3 109.17 L669.53 108.87 L669.74 108.57 L669.95 108.28 L670.14 107.99 L670.33 107.7 L670.5 107.42 L670.67 107.14 L670.82 106.87 L670.96 106.6 L671.09 106.33 L671.21 106.07 L671.32 105.81 L671.42 105.56 L671.51 105.31 L671.58 105.07 L671.65 104.83 L671.7 104.59 L671.73 104.36 L671.76 104.13 L671.77 103.91 L671.77 103.69 L671.76 103.48 L671.74 103.27 L671.7 103.07 L671.64 102.87 L671.58 102.68 M1132.3 102.49 L1131.15 102.31 L1130 102.13 L1128.88 101.96 L1127.77 101.79 L1126.67 101.62 L1125.58 101.47 L1124.51 101.31 L1123.46 101.16 L1122.42 101.02 L1121.39 100.88 L1120.38 100.75 L1119.38 100.62 L1118.4 100.5" fill="none" stroke="#dd1cf2" stroke-width="1.5" stroke-dasharray="1.5 2.18"/>
<path d="M554.9 331.2 L554.58 330.58 L554.26 329.97 L553.95 329.35 L553.64 328.73 L553.34 328.11 L553.04 327.5 L552.74 326.88 L552.45 326.26 L552.16 325.65 L551.88 325.03 L551.6 324.41 L551.32 323.79 L551.04 323.18 L550.77 322.56 L550.51 321.94 L550.25 321.33 L549.99 320.71 L549.73 320.09 L549.48 319.47 L549.24 318.86 L548.99 318.24 L548.75 317.62 L548.52 317.01 L548.29 316.39 L548.06 315.77 L547.84 315.15 L547.62 314.54 L547.4 313.92 L547.19 313.3 L546.98 312.69 L546.78 312.07 L546.58 311.45 L546.38 310.83 L546.19 310.22 L546 309.6" fill="none" stroke="#dd1cf2" stroke-width="1.39"/>
<path d="M555 254.4 L555.12 253.81 L555.24 253.23 L555.37 252.64 L555.5 252.05 L555.63 251.46 L555.77 250.88 L555.91 250.29 L556.05 249.7 L556.2 249.12 L556.35 248.53 L556.5 247.95 L556.66 247.36 L556.82 246.78 L556.98 246.19 L557.15 245.6 L557.32 245.02 L557.49 244.44 L557.67 243.85 L557.84 243.27 L558.03 242.68 L558.21 242.1 L558.4 241.51 L558.59 240.93 L558.79 240.35 L558.99 239.76 L559.19 239.18 L559.39 238.6 L559.6 238.02 L559.81 237.43 L560.02 236.85 L560.24 236.27 L560.46 235.69 L560.69 235.11 L560.91 234.53 L561.14 233.95 L561.37 233.37 L561.61 232.79 L561.85 232.2 L562.09 231.63 L562.34 231.05 L562.58 230.47 L562.83 229.89 L563.09 229.31 L563.35 228.73 L563.61 228.15 L563.87 227.57 L564.13 227 L564.4 226.42 L564.68 225.84 L564.95 225.26 L565.23 224.69 L565.51 224.11 L565.79 223.53 L566.08 222.96 L566.37 222.38 L566.66 221.81 L566.96 221.23 L567.26 220.66 L567.56 220.08 L567.86 219.51 L568.17 218.94 L568.48 218.36 L568.79 217.79 L569.1 217.22 L569.42 216.64 L569.74 216.07 L570.07 215.5 L570.39 214.93 L570.72 214.36 L571.05 213.79 L571.39 213.22 L571.72 212.65 L572.06 212.08 L572.41 211.51 L572.75 210.94 L573.1 210.37 L573.45 209.8 L573.8 209.23 L574.16 208.66 L574.51 208.1 L574.87 207.53 L575.24 206.96 L575.6 206.4 L575.97 205.83 L576.34 205.27 L576.72 204.7 L577.09 204.14 L577.47 203.57 L577.85 203.01 L578.23 202.45 L578.62 201.88 L579.01 201.32 L579.4 200.76 L579.79 200.2 L580.18 199.64 L580.58 199.08 L580.98 198.52 L581.38 197.96 L581.78 197.4 L582.19 196.84 L582.6 196.28 L583.01 195.72 L583.42 195.17 L583.84 194.61 L584.26 194.05 L584.67 193.5 L585.1 192.94 L585.52 192.39 L585.94 191.83 L586.37 191.28 L586.8 190.73 L587.23 190.18 L587.67 189.62 L588.1 189.07 L588.54 188.52 L588.98 187.97 L589.42 187.42 L589.87 186.87 L590.31 186.32 L590.76 185.77 L591.21 185.23 L591.66 184.68 L592.11 184.13 L592.56 183.59 L593.02 183.04 L593.48 182.5 L593.94 181.96 L594.4 181.41 L594.86 180.87 L595.32 180.33 L595.79 179.79 L596.26 179.25 L596.72 178.71 L597.19 178.17 L597.67 177.63 L598.14 177.09 L598.61 176.55 L599.09 176.02 L599.57 175.48 L600.05 174.95 L600.53 174.41 L601.01 173.88 L601.49 173.35 L601.97 172.82 L602.46 172.28 L602.94 171.75 L603.43 171.23 L603.92 170.7 L604.41 170.17 L604.9 169.64 L605.39 169.12 L605.88 168.59 L606.37 168.07 L606.87 167.54 L607.36 167.02 L607.86 166.5 L608.35 165.98 L608.85 165.46 L609.35 164.94 L609.85 164.42 L610.35 163.9 L610.85 163.39 L611.35 162.87 L611.85 162.36 L612.35 161.84 L612.85 161.33 L613.35 160.82 L613.85 160.31 L614.36 159.8 L614.86 159.29 L615.36 158.78 L615.87 158.28 L616.37 157.77 L616.87 157.27 L617.38 156.76 L617.88 156.26 L618.38 155.76 L618.89 155.26 L619.39 154.76 L619.89 154.27 L620.4 153.77 L620.9 153.28 L621.4 152.78 L621.9 152.29 L622.41 151.8 L622.91 151.31 L623.41 150.82 L623.91 150.33 L624.41 149.85 L624.91 149.36 L625.41 148.88 L625.9 148.4 L626.4 147.92 L626.9 147.44 L627.39 146.96 L627.88 146.48 L628.38 146.01 L628.87 145.53 L629.36 145.06 L629.85 144.59 L630.34 144.12 L630.82 143.65 L631.31 143.19 L631.79 142.72 L632.27 142.26 L632.75 141.8 L633.23 141.34 L633.71 140.88 L634.18 140.43 L634.66 139.97 L635.13 139.52 L635.6 139.07 L636.06 138.62 L636.53 138.17 L636.99 137.73 L637.45 137.28 L637.91 136.84 L638.37 136.4 L638.82 135.96 L639.27 135.52 L639.72 135.09 L640.16 134.66 L640.6 134.23 L641.04 133.8 L641.48 133.37 L641.91 132.95 L642.34 132.52 L642.77 132.1 L643.19 131.68 L643.61 131.27 L644.03 130.85 L644.44 130.44 L644.85 130.03 L645.25 129.63 L645.65 129.22 L646.05 128.82 L646.44 128.42 L646.83 128.02 L647.21 127.62 L647.59 127.23 L647.97 126.84 L648.34 126.45 L648.71 126.07 L649.07 125.68 L649.42 125.3 L649.77 124.93 L650.12 124.55 L650.46 124.18 L650.8 123.81 L651.13 123.44 L651.45 123.08 L651.77 122.71 L652.08 122.36 L652.39 122 L652.69 121.65 L652.98 121.3 L653.27 120.95 L653.55 120.6 L653.83 120.26 L654.1 119.93 L654.36 119.59 L654.62 119.26 L654.86 118.93 L655.1 118.6 L655.34 118.28 L655.56 117.96 L655.78 117.65 L655.99 117.33 L656.2 117.03 L656.39 116.72 L656.58 116.42 L656.76 116.12 L656.93 115.82 L657.09 115.53 L657.25 115.24 L657.39 114.96 L657.53 114.68 L657.66 114.4 L657.78 114.13 L657.88 113.86 L657.98 113.59 L658.07 113.33 L658.16 113.07 L658.23 112.82 L658.29 112.57 L658.34 112.32 L658.38 112.08 L658.41 111.84 L658.43 111.6 L658.44 111.37 L658.43 111.15 L658.42 110.92 L658.4 110.71 L658.36 110.49 L658.32 110.28 L658.26 110.08 L658.19 109.88 L658.11 109.68 L658.02 109.49 L657.91 109.3 L657.79 109.12 L657.67 108.94 L657.52 108.77 L657.37 108.6 L657.2 108.43 L657.02 108.27 L656.83 108.12 L656.62 107.96 M1147.79 107.82 L1146.75 107.68 L1145.73 107.54 L1144.71 107.41 L1143.71 107.28 L1142.72 107.16 L1141.75 107.04 L1140.79 106.93 L1139.84 106.82 L1138.91 106.72 L1137.99 106.62 L1137.09 106.52 L1136.19 106.44 L1135.32 106.35 L1134.45 106.27 L1133.6 106.2" fill="none" stroke="#dd1cf2" stroke-width="1.5" stroke-dasharray="1.5 2.18"/>
<path d="M553.1 282 L553.06 281.4 L553.03 280.8 L552.99 280.19 L552.97 279.59 L552.94 278.99 L552.92 278.39 L552.9 277.78 L552.89 277.18 L552.88 276.58 L552.87 275.98 L552.87 275.38 L552.87 274.78 L552.87 274.18 L552.88 273.57 L552.89 272.97 L552.91 272.37 L552.93 271.77 L552.95 271.17 L552.97 270.57 L553 269.97 L553.04 269.37 L553.07 268.77 L553.11 268.17 L553.16 267.57 L553.2 266.97 L553.25 266.37 L553.31 265.77 L553.37 265.17 L553.43 264.57 L553.49 263.97 L553.56 263.37 L553.63 262.77 L553.71 262.17 L553.78 261.57 L553.87 260.98 L553.95 260.38 L554.04 259.78 L554.13 259.18 L554.23 258.58 L554.33 257.98 L554.43 257.39 L554.54 256.79 L554.65 256.19 L554.76 255.59 L554.88 255 L555 254.4" fill="none" stroke="#dd1cf2" stroke-width="1.39"/>
<path d="M581.7 255.6 L581.88 254.98 L582.05 254.36 L582.24 253.74 L582.42 253.13 L582.61 252.51 L582.8 251.89 L583 251.27 L583.2 250.65 L583.4 250.04 L583.61 249.42 L583.82 248.8 L584.03 248.18 L584.25 247.57 L584.47 246.95 L584.69 246.33 L584.92 245.72 L585.15 245.1 L585.38 244.48 L585.62 243.86 L585.86 243.25 L586.1 242.63 L586.35 242.02 L586.6 241.4 L586.85 240.78 L587.11 240.17 L587.37 239.55 L587.64 238.94 L587.9 238.32 L588.17 237.7 L588.45 237.09 L588.73 236.47 L589.01 235.86 L589.29 235.24 L589.58 234.63 L589.87 234.01 L590.16 233.4 L590.46 232.78 L590.76 232.17 L591.06 231.55 L591.37 230.94 L591.68 230.33 L591.99 229.71 L592.31 229.1 L592.63 228.49 L592.95 227.87 L593.28 227.26 L593.61 226.65 L593.94 226.03 L594.27 225.42 L594.61 224.81 L594.95 224.19 L595.3 223.58 L595.65 222.97 L596 222.36 L596.35 221.75 L596.71 221.13 L597.07 220.52 L597.44 219.91 L597.8 219.3 L598.17 218.69 L598.55 218.08 L598.92 217.47 L599.3 216.86 L599.69 216.25 L600.07 215.64 L600.46 215.03 L600.85 214.42 L601.25 213.81 L601.64 213.2 L602.05 212.59 L602.45 211.98 L602.86 211.37 L603.27 210.76 L603.68 210.15 L604.09 209.54 L604.51 208.94 L604.93 208.33 L605.36 207.72 L605.79 207.11 L606.22 206.5 L606.65 205.9 L607.08 205.29 L607.52 204.68 L607.97 204.08 L608.41 203.47 L608.86 202.87 L609.31 202.26 L609.76 201.65 L610.22 201.05 L610.67 200.44 L611.14 199.84 L611.6 199.24 L612.07 198.63 L612.54 198.03 L613.01 197.42 L613.48 196.82 L613.96 196.22 L614.44 195.61 L614.93 195.01 L615.41 194.41 L615.9 193.81 L616.39 193.21 L616.89 192.6 L617.38 192 L617.88 191.4 L618.38 190.8 L618.89 190.2 L619.39 189.6 L619.9 189 L620.41 188.4 L620.93 187.8 L621.45 187.2 L621.97 186.6 L622.49 186.01 L623.01 185.41 L623.54 184.81 L624.07 184.21 L624.6 183.62 L625.13 183.02 L625.67 182.42 L626.21 181.83 L626.75 181.23 L627.29 180.64 L627.84 180.04 L628.38 179.45 L628.93 178.85 L629.49 178.26 L630.04 177.67 L630.6 177.07 L631.16 176.48 L631.72 175.89 L632.28 175.3 L632.85 174.71 L633.41 174.11 L633.98 173.52 L634.56 172.93 L635.13 172.34 L635.7 171.76 L636.28 171.17 L636.86 170.58 L637.44 169.99 L638.03 169.4 L638.61 168.82 L639.2 168.23 L639.79 167.64 L640.38 167.06 L640.98 166.47 L641.57 165.89 L642.17 165.3 L642.77 164.72 L643.37 164.14 L643.97 163.55 L644.57 162.97 L645.18 162.39 L645.78 161.81 L646.39 161.23 L647 160.65 L647.62 160.07 L648.23 159.49 L648.84 158.91 L649.46 158.33 L650.08 157.76 L650.7 157.18 L651.32 156.61 L651.94 156.03 L652.57 155.46 L653.19 154.88 L653.82 154.31 L654.44 153.74 L655.07 153.16 L655.7 152.59 L656.34 152.02 L656.97 151.45 L657.6 150.88 L658.24 150.31 L658.87 149.75 L659.51 149.18 L660.15 148.61 L660.78 148.05 L661.42 147.48 L662.06 146.92 L662.71 146.35 L663.35 145.79 L663.99 145.23 L664.63 144.67 L665.28 144.11 L665.92 143.55 L666.57 142.99 L667.22 142.43 L667.86 141.88 L668.51 141.32 L669.16 140.77 L669.81 140.21 L670.45 139.66 L671.1 139.11 L671.75 138.56 L672.4 138.01 L673.05 137.46 L673.7 136.91 L674.35 136.36 L675 135.81 L675.65 135.27 L676.3 134.73 L676.95 134.18 L677.6 133.64 L678.25 133.1 L678.9 132.56 L679.55 132.02 L680.2 131.48 L680.84 130.95 L681.49 130.41 L682.14 129.88 L682.78 129.35 L683.43 128.82 L684.08 128.29 L684.72 127.76 L685.36 127.23 L686.01 126.7 L686.65 126.18 L687.29 125.66 L687.93 125.13 L688.56 124.61 L689.2 124.1 L689.84 123.58 L690.47 123.06 L691.1 122.55 L691.74 122.04 L692.37 121.52 L692.99 121.01 L693.62 120.51 L694.24 120 L694.87 119.5 L695.49 118.99 L696.11 118.49 L696.72 117.99 L697.34 117.49 L697.95 117 L698.56 116.51 L699.16 116.01 L699.77 115.52 L700.37 115.04 L700.96 114.55 L701.56 114.07 L702.15 113.58 L702.74 113.1 L703.33 112.63 L703.91 112.15 L704.49 111.68 L705.06 111.21 L705.63 110.74 L706.2 110.27 L706.77 109.81 L707.33 109.34 L707.88 108.88 L708.43 108.43 L708.98 107.97 L709.52 107.52 L710.06 107.07 L710.59 106.63 L711.12 106.18 L711.64 105.74 L712.16 105.3 L712.67 104.87 L713.17 104.43 L713.67 104 L714.17 103.58 L714.65 103.15 L715.14 102.73 L715.61 102.32 L716.08 101.9 L716.54 101.49 L717 101.08 L717.45 100.68 L717.89 100.28 L718.32 99.88 L718.75 99.49 L719.16 99.1 L719.57 98.71 L719.98 98.33 L720.37 97.95 L720.75 97.57 L721.13 97.2 L721.5 96.83 L721.86 96.47 L722.2 96.11 L722.54 95.75 L722.87 95.4 L723.19 95.06 L723.5 94.71 L723.8 94.37 L724.09 94.04 L724.36 93.71 L724.63 93.39 L724.88 93.07 L725.12 92.75 L725.35 92.44 L725.57 92.14 L725.78 91.84 L725.97 91.54 L726.15 91.25 L726.32 90.96 L726.47 90.68 L726.61 90.41 L726.73 90.14 L726.85 89.87 L726.94 89.62 L727.03 89.36 L727.09 89.12 L727.15 88.87 L727.18 88.64 L727.2 88.41 L727.21 88.18 L727.2 87.97 L727.17 87.75 L727.13 87.55 L727.07 87.35 L726.99 87.15 L726.89 86.97 L726.78 86.78 L726.64 86.61 L726.49 86.44 L726.33 86.28 L726.14 86.12 L725.93 85.98 L725.71 85.83 L725.46 85.7 L725.2 85.57 L724.91 85.45 L724.61 85.33 L724.29 85.22 L723.94 85.12 L723.57 85.03 M1080.71 84.94 L1079.82 84.86 L1078.96 84.79 L1078.11 84.72 L1077.29 84.66 L1076.48 84.61 L1075.7 84.57 L1074.94 84.53 L1074.2 84.5" fill="none" stroke="#dd1cf2" stroke-width="1.5" stroke-dasharray="1.5 2.18"/>
<path d="M580 262.8 L580.14 262.14 L580.27 261.49 L580.42 260.84 L580.56 260.18 L580.71 259.53 L580.87 258.87 L581.03 258.22 L581.19 257.56 L581.36 256.91 L581.53 256.25 L581.7 255.6" fill="none" stroke="#dd1cf2" stroke-width="1.39"/>
<path d="M715.6 199.3 L715.84 198.69 L716.08 198.07 L716.33 197.46 L716.58 196.85 L716.82 196.24 L717.07 195.62 L717.33 195.01 L717.58 194.4 L717.84 193.79 L718.09 193.18 L718.35 192.57 L718.61 191.96 L718.88 191.35 L719.14 190.74 L719.41 190.13 L719.67 189.52 L719.94 188.91 L720.22 188.3 L720.49 187.69 L720.76 187.08 L721.04 186.47 L721.32 185.86 L721.6 185.26 L721.88 184.65 L722.16 184.04 L722.45 183.43 L722.74 182.83 L723.02 182.22 L723.31 181.62 L723.61 181.01 L723.9 180.4 L724.19 179.8 L724.49 179.19 L724.79 178.59 L725.09 177.98 L725.39 177.38 L725.69 176.78 L726 176.17 L726.3 175.57 L726.61 174.97 L726.92 174.36 L727.23 173.76 L727.54 173.16 L727.86 172.56 L728.17 171.96 L728.49 171.36 L728.81 170.76 L729.13 170.16 L729.45 169.56 L729.77 168.96 L730.09 168.36 L730.42 167.76 L730.74 167.16 L731.07 166.57 L731.4 165.97 L731.73 165.37 L732.06 164.77 L732.4 164.18 L732.73 163.58 L733.07 162.99 L733.4 162.39 L733.74 161.8 L734.08 161.2 L734.42 160.61 L734.76 160.02 L735.11 159.43 L735.45 158.83 L735.8 158.24 L736.14 157.65 L736.49 157.06 L736.84 156.47 L737.19 155.88 L737.54 155.29 L737.89 154.7 L738.25 154.12 L738.6 153.53 L738.96 152.94 L739.31 152.35 L739.67 151.77 L740.03 151.18 L740.39 150.6 L740.75 150.01 L741.11 149.43 L741.47 148.85 L741.83 148.27 L742.2 147.68 L742.56 147.1 L742.93 146.52 L743.29 145.94 L743.66 145.36 L744.03 144.79 L744.4 144.21 L744.77 143.63 L745.14 143.05 L745.51 142.48 L745.88 141.9 L746.25 141.33 L746.62 140.76 L747 140.18 L747.37 139.61 L747.74 139.04 L748.12 138.47 L748.49 137.9 L748.87 137.33 L749.25 136.76 L749.62 136.2 L750 135.63 L750.38 135.06 L750.75 134.5 L751.13 133.94 L751.51 133.37 L751.89 132.81 L752.26 132.25 L752.64 131.69 L753.02 131.13 L753.4 130.57 L753.78 130.02 L754.16 129.46 L754.53 128.91 L754.91 128.35 L755.29 127.8 L755.67 127.25 L756.05 126.7 L756.43 126.15 L756.8 125.6 L757.18 125.05 L757.56 124.51 L757.93 123.96 L758.31 123.42 L758.69 122.88 L759.06 122.33 L759.43 121.79 L759.81 121.26 L760.18 120.72 L760.55 120.18 L760.93 119.65 L761.3 119.12 L761.67 118.58 L762.04 118.05 L762.4 117.52 L762.77 117 L763.14 116.47 L763.5 115.95 L763.87 115.43 L764.23 114.9 L764.59 114.39 L764.95 113.87 L765.31 113.35 L765.67 112.84 L766.02 112.33 L766.37 111.82 L766.73 111.31 L767.08 110.8 L767.43 110.29 L767.77 109.79 L768.12 109.29 L768.46 108.79 L768.8 108.29 L769.14 107.8 L769.47 107.31 L769.8 106.82 L770.13 106.33 L770.46 105.84 L770.79 105.36 L771.11 104.88 L771.43 104.4 L771.75 103.92 L772.06 103.45 L772.37 102.97 L772.68 102.5 L772.98 102.04 L773.28 101.57 L773.58 101.11 L773.87 100.65 L774.16 100.2 L774.44 99.74 L774.72 99.29 L775 98.85 L775.27 98.4 L775.54 97.96 L775.8 97.52 L776.06 97.09 L776.31 96.66 L776.56 96.23 L776.81 95.8 L777.04 95.38 L777.28 94.97 L777.5 94.55 L777.72 94.14 L777.94 93.73 L778.15 93.33 L778.35 92.93 L778.54 92.54 L778.73 92.14 L778.92 91.76 L779.09 91.37 L779.26 90.99 L779.42 90.62 L779.57 90.25 L779.72 89.88 L779.85 89.52 L779.98 89.17 L780.1 88.81 L780.22 88.47 L780.32 88.12 L780.41 87.79 L780.5 87.45 L780.57 87.12 L780.64 86.8 L780.69 86.48 L780.74 86.17 L780.78 85.87 L780.8 85.57 L780.81 85.27 L780.81 84.98 L780.81 84.7 L780.78 84.42 L780.75 84.15 L780.71 83.88 L780.65 83.62 L780.58 83.36 L780.5 83.12 L780.4 82.88 L780.29 82.64 L780.17 82.41 L780.03 82.19 L779.88 81.98 L779.71 81.77 L779.53 81.57 L779.34 81.37 L779.13 81.18 L778.9 81 L778.66 80.83 L778.4 80.66 L778.13 80.5 L777.83 80.35 L777.53 80.21 L777.2 80.07 L776.86 79.94 L776.5 79.82 L776.12 79.7 L775.73 79.6 L775.32 79.5 L774.89 79.41 L774.44 79.32 L773.97 79.25 L773.48 79.18 L772.98 79.12 L772.45 79.07 L771.91 79.03 L771.34 78.99 L770.76 78.96 L770.15 78.94 L769.53 78.93 L768.89 78.93 L768.22 78.93 L767.54 78.94 L766.84 78.96 L766.11 78.99 L765.37 79.03 L764.6 79.07 L763.82 79.12 L763.01 79.18 L762.18 79.25 L761.34 79.33 L760.47 79.41 L759.58 79.5 L758.67 79.6 L757.74 79.71 L756.79 79.82 L755.82 79.95 L754.83 80.08 L753.82 80.21 L752.79 80.36 L751.74 80.51 L750.67 80.67 L749.57 80.84 L748.46 81.01 L747.33 81.19 L746.18 81.38 L745.01 81.57 L743.83 81.78 L742.62 81.98 L741.39 82.2 L740.15 82.42 L738.88 82.65 L737.6 82.89 L736.3 83.13 L734.98 83.38 L733.65 83.63 L732.29 83.89 L730.92 84.16 L729.53 84.43 L728.13 84.71 L726.71 84.99 L725.27 85.28 L723.82 85.58 L722.35 85.88 L720.86 86.19 L719.36 86.5 M1086.56 86.82 L1086.95 87.14 L1087.36 87.47 L1087.78 87.8 L1088.22 88.14 L1088.67 88.48 L1089.13 88.83 L1089.61 89.18 L1090.1 89.54 L1090.6 89.9" fill="none" stroke="#dd1cf2" stroke-width="1.5" stroke-dasharray="1.5 2.18"/>
<path d="M702.9 240 L703.03 239.37 L703.16 238.74 L703.29 238.11 L703.42 237.48 L703.56 236.85 L703.69 236.22 L703.83 235.59 L703.97 234.97 L704.12 234.34 L704.27 233.71 L704.41 233.08 L704.57 232.45 L704.72 231.82 L704.87 231.19 L705.03 230.56 L705.19 229.94 L705.35 229.31 L705.52 228.68 L705.68 228.05 L705.85 227.42 L706.02 226.8 L706.19 226.17 L706.37 225.54 L706.55 224.91 L706.73 224.29 L706.91 223.66 L707.09 223.03 L707.28 222.41 L707.46 221.78 L707.65 221.15 L707.84 220.53 L708.04 219.9 L708.24 219.27 L708.43 218.65 L708.63 218.02 L708.84 217.39 L709.04 216.77 L709.25 216.14 L709.46 215.52 L709.67 214.89 L709.88 214.27 L710.1 213.64 L710.31 213.02 L710.53 212.39 L710.75 211.77 L710.98 211.14 L711.2 210.52 L711.43 209.89 L711.66 209.27 L711.89 208.64 L712.12 208.02 L712.36 207.4 L712.6 206.77 L712.83 206.15 L713.08 205.52 L713.32 204.9 L713.57 204.28 L713.81 203.66 L714.06 203.03 L714.31 202.41 L714.57 201.79 L714.82 201.17 L715.08 200.54 L715.34 199.92 L715.6 199.3" fill="none" stroke="#dd1cf2" stroke-width="1.39"/>
<path d="M1031.8 289.3 L1031.83 288.66 L1031.87 288.01 L1031.9 287.37 L1031.93 286.73 L1031.96 286.09 L1031.99 285.44 L1032.01 284.8 L1032.04 284.16 L1032.06 283.51 L1032.08 282.87 L1032.1 282.23 L1032.12 281.59 L1032.13 280.94 L1032.15 280.3 L1032.16 279.66 L1032.17 279.02 L1032.18 278.37 L1032.19 277.73 L1032.2 277.09 L1032.2 276.45 L1032.21 275.8 L1032.21 275.16 L1032.21 274.52 L1032.21 273.88 L1032.21 273.23 L1032.21 272.59 L1032.2 271.95 L1032.19 271.31 L1032.19 270.66 L1032.18 270.02 L1032.16 269.38 L1032.15 268.74 L1032.14 268.09 L1032.12 267.45 L1032.1 266.81 L1032.08 266.17 L1032.06 265.52 L1032.04 264.88 L1032.02 264.24 L1031.99 263.6 L1031.97 262.96 L1031.94 262.31 L1031.91 261.67 L1031.88 261.03 L1031.84 260.39 L1031.81 259.74 L1031.77 259.1 L1031.74 258.46 L1031.7 257.82 L1031.66 257.18 L1031.62 256.53 L1031.57 255.89 L1031.53 255.25 L1031.48 254.61 L1031.43 253.97 L1031.38 253.33 L1031.33 252.68 L1031.28 252.04 L1031.23 251.4 L1031.17 250.76 L1031.11 250.12 L1031.05 249.47 L1030.99 248.83 L1030.93 248.19 L1030.87 247.55 L1030.81 246.91 L1030.74 246.27 L1030.67 245.63 L1030.6 244.98 L1030.53 244.34 L1030.46 243.7 L1030.39 243.06 L1030.31 242.42 L1030.23 241.78 L1030.16 241.14 L1030.08 240.49 L1029.99 239.85 L1029.91 239.21 L1029.83 238.57 L1029.74 237.93 L1029.65 237.29 L1029.57 236.65 L1029.48 236.01 L1029.38 235.37 L1029.29 234.73 L1029.2 234.08 L1029.1 233.44 L1029 232.8 L1028.9 232.16 L1028.8 231.52 L1028.7 230.88 L1028.6 230.24 L1028.49 229.6 L1028.39 228.96 L1028.28 228.32 L1028.17 227.68 L1028.06 227.04 L1027.94 226.4 L1027.83 225.76 L1027.72 225.12 L1027.6 224.48 L1027.48 223.84 L1027.36 223.2 L1027.24 222.56 L1027.12 221.92 L1026.99 221.28 L1026.87 220.64 L1026.74 220 L1026.61 219.36 L1026.48 218.72 L1026.35 218.08 L1026.22 217.44 L1026.09 216.8 L1025.95 216.16 L1025.81 215.52 L1025.67 214.88 L1025.53 214.24 L1025.39 213.6 L1025.25 212.96 L1025.11 212.32 L1024.96 211.68 L1024.81 211.04 L1024.67 210.41 L1024.52 209.77 L1024.37 209.13 L1024.21 208.49 L1024.06 207.85 L1023.9 207.21 L1023.75 206.57 L1023.59 205.93 L1023.43 205.3 L1023.27 204.66 L1023.11 204.02 L1022.94 203.38 L1022.78 202.74 L1022.61 202.1 L1022.44 201.47 L1022.27 200.83 L1022.1 200.19 L1021.93 199.55 L1021.76 198.91 L1021.58 198.28 L1021.41 197.64 L1021.23 197 L1021.05 196.36 L1020.87 195.73 L1020.69 195.09 L1020.51 194.45 L1020.33 193.81 L1020.14 193.18 L1019.95 192.54 L1019.77 191.9 L1019.58 191.27 L1019.39 190.63 L1019.19 189.99 L1019 189.36 L1018.81 188.72 L1018.61 188.08 L1018.41 187.45 L1018.21 186.81 L1018.01 186.18 L1017.81 185.54 L1017.61 184.9 L1017.41 184.27 L1017.2 183.63 L1017 183 L1016.79 182.36 L1016.58 181.73 L1016.37 181.09 L1016.16 180.46 L1015.95 179.82 L1015.73 179.19 L1015.52 178.55 L1015.3 177.92 L1015.08 177.28 L1014.86 176.65 L1014.65 176.01 L1014.42 175.38 L1014.2 174.74 L1013.98 174.11 L1013.75 173.48 L1013.53 172.84 L1013.3 172.21 L1013.07 171.58 L1012.84 170.94 L1012.61 170.31 L1012.38 169.68 L1012.15 169.04 L1011.91 168.41 L1011.68 167.78 L1011.44 167.14 L1011.2 166.51 L1010.96 165.88 L1010.72 165.25 L1010.48 164.62 L1010.24 163.98 L1009.99 163.35 L1009.75 162.72 L1009.5 162.09 L1009.26 161.46 L1009.01 160.83 L1008.76 160.2 L1008.51 159.57 L1008.26 158.94 L1008.01 158.31 L1007.75 157.68 L1007.5 157.05 L1007.24 156.42 L1006.98 155.79 L1006.73 155.16 L1006.47 154.53 L1006.21 153.9 L1005.95 153.27 L1005.68 152.64 L1005.42 152.01 L1005.16 151.39 L1004.89 150.76 L1004.63 150.13 L1004.36 149.5 L1004.09 148.88 L1003.82 148.25 L1003.55 147.62 L1003.28 146.99 L1003.01 146.37 L1002.74 145.74 L1002.46 145.12 L1002.19 144.49 L1001.91 143.87 L1001.63 143.24 L1001.36 142.62 L1001.08 141.99 L1000.8 141.37 L1000.52 140.74 L1000.24 140.12 L999.95 139.5 L999.67 138.87 L999.39 138.25 L999.1 137.63 L998.82 137 L998.53 136.38 L998.24 135.76 L997.96 135.14 L997.67 134.52 L997.38 133.9 L997.09 133.28 L996.79 132.66 L996.5 132.04 L996.21 131.42 L995.92 130.8 L995.62 130.18 L995.33 129.56 L995.03 128.94 L994.74 128.33 L994.44 127.71 L994.14 127.09 L993.84 126.48 L993.54 125.86 L993.24 125.25 L992.94 124.63 L992.64 124.02 L992.34 123.4 L992.04 122.79 L991.74 122.17 L991.43 121.56 L991.13 120.95 L990.82 120.34 L990.52 119.73 L990.21 119.12 L989.91 118.51 L989.6 117.9 L989.3 117.29 L988.99 116.68 L988.68 116.07 L988.37 115.46 L988.06 114.86 L987.76 114.25 L987.45 113.65 L987.14 113.04 L986.83 112.44 L986.52 111.83 L986.21 111.23 L985.9 110.63 L985.59 110.03 L985.28 109.42 L984.97 108.82 L984.65 108.23 L984.34 107.63 L984.03 107.03 L983.72 106.43 L983.41 105.84 L983.1 105.24 L982.79 104.65 L982.48 104.05 L982.16 103.46 L981.85 102.87 L981.54 102.28 L981.23 101.69 L980.92 101.1 L980.61 100.51 L980.3 99.92 L979.99 99.34 L979.68 98.75 L979.37 98.17 L979.06 97.59 L978.75 97.01 L978.45 96.43 L978.14 95.85 L977.83 95.27 L977.53 94.7 L977.22 94.12 L976.92 93.55 L976.61 92.97 L976.31 92.4 L976.01 91.83 L975.71 91.27 L975.41 90.7 L975.11 90.14 L974.81 89.57 L974.52 89.01 L974.22 88.45 L973.93 87.9 L973.64 87.34 L973.35 86.79 L973.06 86.23 L972.77 85.68 L972.48 85.14 L972.2 84.59 L971.92 84.05 L971.64 83.51 L971.36 82.97 L971.09 82.43 L970.81 81.9 L970.54 81.36 L970.27 80.83 L970.01 80.31 L969.75 79.78 L969.49 79.26 L969.23 78.74 L968.98 78.23 L968.73 77.72 L968.48 77.21 L968.24 76.7 L968 76.2 L967.77 75.7 L967.54 75.21 L967.31 74.72 L967.09 74.23 L966.88 73.74 L966.67 73.26 L966.46 72.79 L966.26 72.32 L966.07 71.85 L965.88 71.39 L965.7 70.93 L965.52 70.48 L965.35 70.03 L965.19 69.59 L965.04 69.15 L964.89 68.72 L964.75 68.3 L964.62 67.88 L964.5 67.46 L964.39 67.06 L964.29 66.66 L964.2 66.26 L964.12 65.87 L964.05 65.49 L963.99 65.12 L963.94 64.76 L963.9 64.4 L963.88 64.05 L963.87 63.71 L963.88 63.37 L963.9 63.05 L963.93 62.73 L963.98 62.43 L964.04 62.13 L964.13 61.84 L964.22 61.56 L964.34 61.3 L964.48 61.04 L964.63 60.79 L964.8 60.56 L965 60.33 L965.21 60.12 L965.45 59.91 L965.71 59.72 L965.99 59.55 L966.29 59.38 L966.62 59.22 L966.98 59.08 L967.36 58.95 L967.76 58.84 L968.19 58.73 L968.65 58.64 L969.13 58.56 L969.65 58.5 L970.19 58.45 L970.76 58.41 L971.36 58.39 L971.99 58.38 L972.64 58.38 L973.33 58.4 L974.05 58.43 L974.8 58.47 L975.58 58.52 L976.39 58.59 L977.23 58.68 L978.1 58.77 L979.01 58.88 L979.94 59 L980.9 59.14 L981.9 59.29 L982.92 59.45 L983.98 59.62 L985.06 59.8 L986.18 60 L987.32 60.2 L988.49 60.42 L989.69 60.65 L990.92 60.89 L992.18 61.14 L993.46 61.41 L994.77 61.68 L996.11 61.96 L997.47 62.25 L998.86 62.55 L1000.27 62.86 L1001.7 63.18 L1003.16 63.51 L1004.64 63.85 L1006.15 64.19 L1007.68 64.54 L1009.22 64.91 L1010.79 65.27 L1012.38 65.65 L1013.99 66.03 L1015.62 66.42 L1017.27 66.82 L1018.93 67.22 L1020.62 67.63 L1022.32 68.05 L1024.03 68.47 L1025.77 68.9 L1027.52 69.33 L1029.28 69.77 L1031.06 70.22 L1032.85 70.67 L1034.66 71.12 L1036.48 71.58 L1038.32 72.04 L1040.16 72.51 L1042.02 72.99 L1043.89 73.46 L1045.78 73.94 L1047.67 74.43 L1049.57 74.92 L1051.49 75.41 L1053.41 75.91 L1055.35 76.41 M748.14 76.91 L747.02 77.42 L745.89 77.93 L744.75 78.44 L743.61 78.96 L742.46 79.48 L741.3 80" fill="none" stroke="#dd1cf2" stroke-width="1.5" stroke-dasharray="1.5 2.18"/>
<path d="M1031.1 298.8 L1031.16 298.12 L1031.22 297.44 L1031.28 296.76 L1031.33 296.09 L1031.39 295.41 L1031.44 294.73 L1031.49 294.05 L1031.54 293.37 L1031.59 292.69 L1031.63 292.01 L1031.68 291.34 L1031.72 290.66 L1031.76 289.98 L1031.8 289.3" fill="none" stroke="#dd1cf2" stroke-width="1.39"/>
<path d="M1092 255.6 L1092.04 255 L1092.08 254.41 L1092.12 253.81 L1092.16 253.22 L1092.2 252.62 L1092.23 252.03 L1092.26 251.43 L1092.29 250.84 L1092.32 250.24 L1092.35 249.65 L1092.37 249.05 L1092.39 248.46 L1092.41 247.86 L1092.43 247.27 L1092.45 246.67 L1092.46 246.08 L1092.48 245.49 L1092.49 244.89 L1092.5 244.3 L1092.51 243.71 L1092.51 243.11 L1092.52 242.52 L1092.52 241.93 L1092.52 241.34 L1092.52 240.74 L1092.51 240.15 L1092.51 239.56 L1092.5 238.97 L1092.49 238.38 L1092.48 237.78 L1092.47 237.19 L1092.45 236.6 L1092.44 236.01 L1092.42 235.42 L1092.4 234.83 L1092.38 234.24 L1092.35 233.65 L1092.33 233.06 L1092.3 232.47 L1092.27 231.88 L1092.24 231.29 L1092.21 230.7 L1092.18 230.11 L1092.14 229.52 L1092.1 228.94 L1092.06 228.35 L1092.02 227.76 L1091.98 227.17 L1091.93 226.59 L1091.89 226 L1091.84 225.41 L1091.79 224.82 L1091.74 224.24 L1091.68 223.65 L1091.63 223.07 L1091.57 222.48 L1091.51 221.89 L1091.45 221.31 L1091.39 220.72 L1091.33 220.14 L1091.26 219.56 L1091.2 218.97 L1091.13 218.39 L1091.06 217.8 L1090.98 217.22 L1090.91 216.64 L1090.84 216.05 L1090.76 215.47 L1090.68 214.89 L1090.6 214.31 L1090.52 213.73 L1090.43 213.14 L1090.35 212.56 L1090.26 211.98 L1090.17 211.4 L1090.08 210.82 L1089.99 210.24 L1089.9 209.66 L1089.8 209.08 L1089.71 208.5 L1089.61 207.93 L1089.51 207.35 L1089.41 206.77 L1089.3 206.19 L1089.2 205.62 L1089.09 205.04 L1088.99 204.46 L1088.88 203.89 L1088.77 203.31 L1088.66 202.73 L1088.54 202.16 L1088.43 201.58 L1088.31 201.01 L1088.19 200.44 L1088.07 199.86 L1087.95 199.29 L1087.83 198.72 L1087.71 198.14 L1087.58 197.57 L1087.45 197 L1087.33 196.43 L1087.2 195.86 L1087.07 195.29 L1086.93 194.72 L1086.8 194.15 L1086.66 193.58 L1086.53 193.01 L1086.39 192.44 L1086.25 191.88 L1086.11 191.31 L1085.97 190.74 L1085.83 190.18 L1085.68 189.61 L1085.54 189.04 L1085.39 188.48 L1085.24 187.91 L1085.09 187.35 L1084.94 186.79 L1084.79 186.22 L1084.63 185.66 L1084.48 185.1 L1084.32 184.54 L1084.17 183.98 L1084.01 183.42 L1083.85 182.86 L1083.69 182.3 L1083.53 181.74 L1083.37 181.18 L1083.2 180.62 L1083.04 180.07 L1082.87 179.51 L1082.7 178.95 L1082.54 178.4 L1082.37 177.84 L1082.2 177.29 L1082.03 176.74 L1081.85 176.18 L1081.68 175.63 L1081.51 175.08 L1081.33 174.53 L1081.15 173.98 L1080.98 173.43 L1080.8 172.88 L1080.62 172.33 L1080.44 171.78 L1080.26 171.23 L1080.08 170.69 L1079.9 170.14 L1079.71 169.6 L1079.53 169.05 L1079.34 168.51 L1079.16 167.97 L1078.97 167.42 L1078.79 166.88 L1078.6 166.34 L1078.41 165.8 L1078.22 165.26 L1078.03 164.73 L1077.84 164.19 L1077.65 163.65 L1077.46 163.12 L1077.27 162.58 L1077.07 162.05 L1076.88 161.51 L1076.69 160.98 L1076.49 160.45 L1076.3 159.92 L1076.1 159.39 L1075.91 158.86 L1075.71 158.33 L1075.52 157.8 L1075.32 157.28 L1075.12 156.75 L1074.93 156.23 L1074.73 155.71 L1074.53 155.18 L1074.33 154.66 L1074.13 154.14 L1073.94 153.62 L1073.74 153.1 L1073.54 152.59 L1073.34 152.07 L1073.14 151.56 L1072.94 151.04 L1072.74 150.53 L1072.54 150.02 L1072.35 149.51 L1072.15 149 L1071.95 148.49 L1071.75 147.98 L1071.55 147.48 L1071.35 146.97 L1071.16 146.47 L1070.96 145.97 L1070.76 145.46 L1070.57 144.96 L1070.37 144.47 L1070.17 143.97 L1069.98 143.47 L1069.78 142.98 L1069.59 142.49 L1069.39 141.99 L1069.2 141.5 L1069.01 141.01 L1068.82 140.53 L1068.62 140.04 L1068.43 139.56 L1068.24 139.07 L1068.05 138.59 L1067.87 138.11 L1067.68 137.63 L1067.49 137.15 L1067.31 136.68 L1067.12 136.21 L1066.94 135.73 L1066.76 135.26 L1066.58 134.79 L1066.4 134.33 L1066.22 133.86 L1066.04 133.4 L1065.87 132.94 L1065.7 132.47 L1065.52 132.02 L1065.35 131.56 L1065.18 131.11 L1065.02 130.65 L1064.85 130.2 L1064.69 129.75 L1064.52 129.3 L1064.36 128.86 L1064.21 128.42 L1064.05 127.98 L1063.9 127.54 L1063.74 127.1 L1063.59 126.66 L1063.45 126.23 L1063.3 125.8 L1063.16 125.37 L1063.02 124.95 L1062.88 124.52 L1062.74 124.1 L1062.61 123.68 L1062.48 123.27 L1062.35 122.85 L1062.23 122.44 L1062.11 122.03 L1061.99 121.62 L1061.88 121.22 L1061.76 120.82 L1061.66 120.42 L1061.55 120.02 L1061.45 119.63 L1061.35 119.23 L1061.26 118.85 L1061.17 118.46 L1061.08 118.08 L1060.99 117.7 L1060.92 117.32 L1060.84 116.94 L1060.77 116.57 L1060.7 116.2 L1060.64 115.84 L1060.58 115.47 L1060.53 115.11 L1060.48 114.76 L1060.43 114.4 L1060.39 114.05 L1060.36 113.71 L1060.33 113.36 L1060.3 113.02 L1060.28 112.68 L1060.27 112.35 L1060.26 112.02 L1060.26 111.69 L1060.26 111.37 L1060.27 111.05 L1060.28 110.73 L1060.3 110.42 L1060.33 110.11 L1060.36 109.81 L1060.4 109.51 L1060.44 109.21 L1060.49 108.91 L1060.55 108.62 L1060.62 108.34 L1060.69 108.06 L1060.77 107.78 L1060.85 107.5 L1060.94 107.23 L1061.04 106.97 L1061.15 106.71 L1061.27 106.45 L1061.39 106.2 L1061.52 105.95 L1061.66 105.7 L1061.8 105.46 L1061.96 105.23 L1062.12 104.99 L1062.29 104.77 L1062.47 104.55 L1062.66 104.33 L1062.86 104.11 L1063.07 103.91 L1063.28 103.7 L1063.51 103.5 L1063.74 103.31 L1063.99 103.12 L1064.24 102.93 L1064.5 102.75 L1064.77 102.58 L1065.06 102.41 L1065.35 102.25 L1065.65 102.09 L1065.97 101.93 L1066.29 101.78 L1066.62 101.64 L1066.97 101.5 L1067.32 101.36 L1067.69 101.23 L1068.07 101.11 L1068.45 100.99 L1068.85 100.88 L1069.26 100.77 L1069.68 100.67 L1070.12 100.57 L1070.56 100.48 L1071.02 100.39 L1071.49 100.31 L1071.97 100.23 L1072.46 100.16 L1072.96 100.1 L1073.48 100.04 L1074.01 99.98 L1074.55 99.93 L1075.1 99.89 L1075.67 99.85 L1076.25 99.82 L1076.84 99.79 L1077.44 99.77 L1078.06 99.76 L1078.68 99.75 L1079.33 99.74 L1079.98 99.74 L1080.65 99.75 L1081.33 99.76 L1082.02 99.78 L1082.72 99.8 L1083.44 99.83 L1084.18 99.87 L1084.92 99.91 L1085.68 99.95 L1086.45 100 L1087.23 100.06 L1088.03 100.12 L1088.84 100.19 L1089.67 100.26 L1090.5 100.34 L1091.35 100.42 L1092.22 100.51 L1093.09 100.61 L1093.98 100.71 L1094.89 100.81 L1095.8 100.92 L1096.73 101.04 L1097.67 101.16 L1098.63 101.28 L1099.59 101.42 L1100.58 101.55 L1101.57 101.69 L1102.57 101.84 L1103.59 101.99 L1104.63 102.15 L1105.67 102.31 L1106.73 102.48 L1107.8 102.65 L1108.88 102.83 L1109.97 103.01 L1111.08 103.2 L1112.2 103.39 L1113.33 103.58 L1114.48 103.78 L1115.63 103.99 L1116.8 104.2 L1117.98 104.41 L1119.17 104.63 L1120.37 104.86 L1121.59 105.09 L1122.81 105.32 L1124.05 105.56 L1125.3 105.8" fill="none" stroke="#dd1cf2" stroke-width="1.5" stroke-dasharray="1.5 2.18"/>
<path d="M1087.7 279.8 L1087.84 279.21 L1087.98 278.62 L1088.12 278.02 L1088.26 277.43 L1088.39 276.84 L1088.52 276.25 L1088.65 275.65 L1088.78 275.06 L1088.91 274.47 L1089.03 273.88 L1089.16 273.29 L1089.28 272.7 L1089.4 272.11 L1089.52 271.51 L1089.63 270.92 L1089.75 270.33 L1089.86 269.74 L1089.97 269.15 L1090.08 268.56 L1090.18 267.97 L1090.29 267.38 L1090.39 266.79 L1090.49 266.2 L1090.59 265.61 L1090.69 265.02 L1090.79 264.43 L1090.88 263.84 L1090.97 263.25 L1091.06 262.66 L1091.15 262.07 L1091.24 261.48 L1091.32 260.89 L1091.4 260.31 L1091.48 259.72 L1091.56 259.13 L1091.64 258.54 L1091.72 257.95 L1091.79 257.36 L1091.86 256.78 L1091.93 256.19 L1092 255.6" fill="none" stroke="#dd1cf2" stroke-width="1.39"/>
<path d="M1170 301 L1170.12 300.38 L1170.23 299.77 L1170.34 299.15 L1170.45 298.53 L1170.55 297.92 L1170.65 297.3 L1170.75 296.68 L1170.84 296.06 L1170.94 295.45 L1171.03 294.83 L1171.11 294.21 L1171.2 293.6 L1171.28 292.98 L1171.35 292.36 L1171.43 291.75 L1171.5 291.13 L1171.57 290.51 L1171.64 289.9 L1171.7 289.28 L1171.76 288.66 L1171.82 288.05 L1171.87 287.43 L1171.92 286.82 L1171.97 286.2 L1172.02 285.58 L1172.06 284.97 L1172.1 284.35 L1172.13 283.74 L1172.17 283.12 L1172.2 282.5 L1172.23 281.89 L1172.25 281.27 L1172.27 280.66 L1172.29 280.04 L1172.31 279.42 L1172.32 278.81 L1172.33 278.19 L1172.34 277.58 L1172.34 276.96 L1172.35 276.35 L1172.34 275.73 L1172.34 275.12 L1172.33 274.5 L1172.32 273.89 L1172.31 273.27 L1172.29 272.65 L1172.28 272.04 L1172.25 271.42 L1172.23 270.81 L1172.2 270.2 L1172.17 269.58 L1172.14 268.97 L1172.1 268.35 L1172.06 267.74 L1172.02 267.12 L1171.98 266.51 L1171.93 265.89 L1171.88 265.28 L1171.82 264.67 L1171.77 264.05 L1171.71 263.44 L1171.65 262.82 L1171.58 262.21 L1171.51 261.6 L1171.44 260.98 L1171.37 260.37 L1171.29 259.75 L1171.21 259.14 L1171.13 258.53 L1171.04 257.91 L1170.96 257.3 L1170.87 256.69 L1170.77 256.08 L1170.68 255.46 L1170.58 254.85 L1170.47 254.24 L1170.37 253.62 L1170.26 253.01 L1170.15 252.4 L1170.04 251.79 L1169.92 251.18 L1169.8 250.56 L1169.68 249.95 L1169.55 249.34 L1169.43 248.73 L1169.3 248.12 L1169.16 247.5 L1169.03 246.89 L1168.89 246.28 L1168.75 245.67 L1168.6 245.06 L1168.45 244.45 L1168.3 243.84 L1168.15 243.23 L1168 242.62 L1167.84 242.01 L1167.68 241.4 L1167.51 240.78 L1167.35 240.17 L1167.18 239.56 L1167 238.95 L1166.83 238.35 L1166.65 237.74 L1166.47 237.13 L1166.29 236.52 L1166.1 235.91 L1165.91 235.3 L1165.72 234.69 L1165.53 234.08 L1165.33 233.47 L1165.13 232.86 L1164.93 232.26 L1164.73 231.65 L1164.52 231.04 L1164.31 230.43 L1164.1 229.82 L1163.88 229.22 L1163.66 228.61 L1163.44 228 L1163.22 227.39 L1162.99 226.79 L1162.76 226.18 L1162.53 225.57 L1162.3 224.97 L1162.06 224.36 L1161.82 223.75 L1161.58 223.15 L1161.34 222.54 L1161.09 221.94 L1160.84 221.33 L1160.59 220.73 L1160.34 220.12 L1160.08 219.52 L1159.82 218.91 L1159.56 218.31 L1159.29 217.7 L1159.02 217.1 L1158.75 216.5 L1158.48 215.89 L1158.21 215.29 L1157.93 214.69 L1157.65 214.08 L1157.37 213.48 L1157.08 212.88 L1156.8 212.27 L1156.51 211.67 L1156.21 211.07 L1155.92 210.47 L1155.62 209.87 L1155.32 209.27 L1155.02 208.66 L1154.72 208.06 L1154.41 207.46 L1154.1 206.86 L1153.79 206.26 L1153.48 205.66 L1153.16 205.06 L1152.84 204.46 L1152.52 203.86 L1152.2 203.27 L1151.87 202.67 L1151.54 202.07 L1151.21 201.47 L1150.88 200.87 L1150.55 200.27 L1150.21 199.68 L1149.87 199.08 L1149.53 198.48 L1149.19 197.89 L1148.84 197.29 L1148.49 196.69 L1148.14 196.1 L1147.79 195.5 L1147.43 194.91 L1147.08 194.31 L1146.72 193.72 L1146.36 193.12 L1145.99 192.53 L1145.63 191.94 L1145.26 191.34 L1144.89 190.75 L1144.52 190.16 L1144.14 189.57 L1143.77 188.97 L1143.39 188.38 L1143.01 187.79 L1142.63 187.2 L1142.24 186.61 L1141.86 186.02 L1141.47 185.43 L1141.08 184.84 L1140.69 184.25 L1140.29 183.66 L1139.9 183.07 L1139.5 182.49 L1139.1 181.9 L1138.7 181.31 L1138.29 180.73 L1137.89 180.14 L1137.48 179.55 L1137.07 178.97 L1136.66 178.38 L1136.25 177.8 L1135.83 177.21 L1135.42 176.63 L1135 176.05 L1134.58 175.46 L1134.16 174.88 L1133.73 174.3 L1133.31 173.72 L1132.88 173.13 L1132.45 172.55 L1132.02 171.97 L1131.59 171.39 L1131.16 170.81 L1130.72 170.24 L1130.29 169.66 L1129.85 169.08 L1129.41 168.5 L1128.97 167.93 L1128.53 167.35 L1128.08 166.77 L1127.64 166.2 L1127.19 165.62 L1126.74 165.05 L1126.29 164.48 L1125.84 163.9 L1125.39 163.33 L1124.94 162.76 L1124.48 162.19 L1124.03 161.62 L1123.57 161.05 L1123.11 160.48 L1122.65 159.91 L1122.19 159.34 L1121.73 158.77 L1121.26 158.21 L1120.8 157.64 L1120.33 157.07 L1119.87 156.51 L1119.4 155.95 L1118.93 155.38 L1118.46 154.82 L1117.99 154.26 L1117.52 153.7 L1117.05 153.13 L1116.57 152.57 L1116.1 152.02 L1115.63 151.46 L1115.15 150.9 L1114.67 150.34 L1114.2 149.79 L1113.72 149.23 L1113.24 148.68 L1112.76 148.12 L1112.28 147.57 L1111.8 147.02 L1111.32 146.47 L1110.84 145.92 L1110.36 145.37 L1109.87 144.82 L1109.39 144.27 L1108.91 143.73 L1108.42 143.18 L1107.94 142.63 L1107.46 142.09 L1106.97 141.55 L1106.49 141.01 L1106 140.47 L1105.52 139.93 L1105.03 139.39 L1104.55 138.85 L1104.07 138.31 L1103.58 137.78 L1103.1 137.24 L1102.61 136.71 L1102.13 136.18 L1101.64 135.65 L1101.16 135.12 L1100.68 134.59 L1100.19 134.06 L1099.71 133.53 L1099.23 133.01 L1098.75 132.49 L1098.27 131.96 L1097.79 131.44 L1097.31 130.92 L1096.83 130.4 L1096.35 129.89 L1095.87 129.37 L1095.4 128.86 L1094.92 128.34 L1094.45 127.83 L1093.97 127.32 L1093.5 126.81 L1093.03 126.31 L1092.56 125.8 L1092.09 125.3 L1091.63 124.79 L1091.16 124.29 L1090.7 123.79 L1090.23 123.3 L1089.77 122.8 L1089.31 122.31 L1088.86 121.81 L1088.4 121.32 L1087.95 120.83 L1087.5 120.35 L1087.05 119.86 L1086.6 119.38 L1086.15 118.9 L1085.71 118.42 L1085.27 117.94 L1084.83 117.46 L1084.4 116.99 L1083.97 116.52 L1083.54 116.05 L1083.11 115.58 L1082.69 115.12 L1082.27 114.66 L1081.85 114.19 L1081.43 113.74 L1081.02 113.28 L1080.62 112.83 L1080.21 112.37 L1079.81 111.93 L1079.41 111.48 L1079.02 111.04 L1078.63 110.59 L1078.25 110.16 L1077.87 109.72 L1077.49 109.29 L1077.12 108.85 L1076.75 108.43 L1076.39 108 L1076.03 107.58 L1075.68 107.16 L1075.33 106.74 L1074.99 106.33 L1074.65 105.92 L1074.32 105.51 L1074 105.11 L1073.68 104.7 L1073.36 104.31 L1073.05 103.91 L1072.75 103.52 L1072.46 103.13 L1072.17 102.75 L1071.88 102.37 L1071.61 101.99 L1071.34 101.61 L1071.08 101.24 L1070.82 100.88 L1070.58 100.51 L1070.34 100.15 L1070.1 99.8 L1069.88 99.45 L1069.67 99.1 L1069.46 98.75 L1069.26 98.41 L1069.07 98.08 L1068.89 97.75 L1068.72 97.42 L1068.55 97.1 L1068.4 96.78 L1068.26 96.47 L1068.12 96.16 L1068 95.85 L1067.88 95.55 L1067.78 95.26 L1067.69 94.97 L1067.61 94.68 L1067.53 94.4 L1067.47 94.12 L1067.43 93.85 L1067.39 93.59 L1067.36 93.32 L1067.35 93.07 L1067.35 92.82 L1067.36 92.57 L1067.39 92.33 L1067.42 92.1 L1067.47 91.87 L1067.54 91.65 L1067.61 91.43 L1067.71 91.22 L1067.81 91.01 L1067.93 90.81 L1068.06 90.61 L1068.21 90.42 L1068.37 90.24 L1068.55 90.06 L1068.74 89.89 L1068.95 89.73 L1069.17 89.57 L1069.41 89.42 L1069.67 89.27 L1069.94 89.13 L1070.23 88.99 L1070.53 88.87 L1070.85 88.74 L1071.19 88.63 L1071.54 88.52 L1071.92 88.42 L1072.31 88.32 L1072.71 88.23 L1073.14 88.15 L1073.58 88.08 L1074.04 88.01 L1074.52 87.94 L1075.01 87.89 L1075.53 87.84 L1076.06 87.8 L1076.61 87.76 L1077.18 87.73 L1077.77 87.71 L1078.38 87.69 L1079.01 87.69 L1079.65 87.68 L1080.32 87.69 L1081 87.7" fill="none" stroke="#dd1cf2" stroke-width="1.5" stroke-dasharray="1.5 2.18"/>
<path d="M1161 332 L1161.26 331.37 L1161.51 330.73 L1161.76 330.1 L1162.01 329.47 L1162.25 328.84 L1162.49 328.2 L1162.73 327.57 L1162.96 326.94 L1163.2 326.31 L1163.43 325.67 L1163.65 325.04 L1163.88 324.41 L1164.1 323.78 L1164.31 323.14 L1164.53 322.51 L1164.74 321.88 L1164.95 321.24 L1165.15 320.61 L1165.35 319.98 L1165.55 319.35 L1165.75 318.71 L1165.94 318.08 L1166.13 317.45 L1166.32 316.82 L1166.5 316.18 L1166.68 315.55 L1166.86 314.92 L1167.04 314.28 L1167.21 313.65 L1167.38 313.02 L1167.54 312.39 L1167.7 311.75 L1167.86 311.12 L1168.02 310.49 L1168.17 309.86 L1168.32 309.22 L1168.47 308.59 L1168.62 307.96 L1168.76 307.32 L1168.89 306.69 L1169.03 306.06 L1169.16 305.43 L1169.29 304.79 L1169.42 304.16 L1169.54 303.53 L1169.66 302.9 L1169.78 302.26 L1169.89 301.63 L1170 301" fill="none" stroke="#dd1cf2" stroke-width="1.39"/>
<path d="M1044.5 250 L1043.95 249.48 L1043.39 248.96 L1042.84 248.45 L1042.28 247.93 L1041.72 247.41 L1041.16 246.9 L1040.6 246.38 L1040.04 245.86 L1039.48 245.35 L1038.92 244.83 L1038.36 244.32 L1037.79 243.8 L1037.23 243.29 L1036.66 242.78 L1036.09 242.26 L1035.53 241.75 L1034.96 241.24 L1034.39 240.72 L1033.82 240.21 L1033.25 239.7 L1032.67 239.19 L1032.1 238.68 L1031.53 238.17 L1030.95 237.66 L1030.38 237.15 L1029.8 236.64 L1029.22 236.13 L1028.65 235.63 L1028.07 235.12 L1027.49 234.61 L1026.91 234.11 L1026.33 233.6 L1025.74 233.09 L1025.16 232.59 L1024.58 232.08 L1023.99 231.58 L1023.41 231.08 L1022.82 230.57 L1022.24 230.07 L1021.65 229.57 L1021.06 229.06 L1020.48 228.56 L1019.89 228.06 L1019.3 227.56 L1018.71 227.06 L1018.12 226.56 L1017.52 226.06 L1016.93 225.57 L1016.34 225.07 L1015.75 224.57 L1015.15 224.07 L1014.56 223.58 L1013.96 223.08 L1013.37 222.59 L1012.77 222.09 L1012.17 221.6 L1011.58 221.11 L1010.98 220.61 L1010.38 220.12 L1009.78 219.63 L1009.18 219.14 L1008.58 218.65 L1007.98 218.16 L1007.38 217.67 L1006.77 217.18 L1006.17 216.69 L1005.57 216.21 L1004.97 215.72 L1004.36 215.23 L1003.76 214.75 L1003.15 214.26 L1002.55 213.78 L1001.94 213.3 L1001.34 212.81 L1000.73 212.33 L1000.12 211.85 L999.51 211.37 L998.91 210.89 L998.3 210.41 L997.69 209.93 L997.08 209.45 L996.47 208.98 L995.86 208.5 L995.25 208.02 L994.64 207.55 L994.03 207.07 L993.42 206.6 L992.81 206.13 L992.2 205.66 L991.58 205.19 L990.97 204.71 L990.36 204.25 L989.75 203.78 L989.13 203.31 L988.52 202.84 L987.91 202.37 L987.29 201.91 L986.68 201.44 L986.06 200.98 L985.45 200.52 L984.83 200.06 L984.22 199.59 L983.6 199.13 L982.99 198.67 L982.37 198.21 L981.75 197.76 L981.14 197.3 L980.52 196.84 L979.91 196.39 L979.29 195.93 L978.67 195.48 L978.06 195.03 L977.44 194.58 L976.82 194.13 L976.2 193.68 L975.59 193.23 L974.97 192.78 L974.35 192.33 L973.73 191.89 L973.11 191.44 L972.5 191 L971.88 190.56 L971.26 190.12 L970.64 189.68 L970.02 189.24 L969.41 188.8 L968.79 188.36 L968.17 187.93 L967.55 187.49 L966.93 187.06 L966.31 186.62 L965.69 186.19 L965.08 185.76 L964.46 185.33 L963.84 184.9 L963.22 184.48 L962.6 184.05 L961.98 183.63 L961.37 183.2 L960.75 182.78 L960.13 182.36 L959.51 181.94 L958.89 181.52 L958.27 181.1 L957.66 180.68 L957.04 180.27 L956.42 179.86 L955.8 179.44 L955.18 179.03 L954.57 178.62 L953.95 178.21 L953.33 177.81 L952.71 177.4 L952.1 177 L951.48 176.59 L950.86 176.19 L950.25 175.79 L949.63 175.39 L949.01 174.99 L948.4 174.6 L947.78 174.2 L947.16 173.81 L946.55 173.42 L945.93 173.03 L945.32 172.64 L944.7 172.25 L944.09 171.86 L943.47 171.48 L942.86 171.1 L942.24 170.72 L941.63 170.34 L941.01 169.96 L940.4 169.58 L939.78 169.21 L939.17 168.83 L938.56 168.46 L937.94 168.09 L937.33 167.72 L936.72 167.35 L936.1 166.99 L935.49 166.63 L934.88 166.26 L934.26 165.9 L933.65 165.55 L933.04 165.19 L932.43 164.83 L931.82 164.48 L931.21 164.13 L930.59 163.78 L929.98 163.43 L929.37 163.09 L928.76 162.74 L928.15 162.4 L927.54 162.06 L926.93 161.72 L926.32 161.39 L925.71 161.05 L925.1 160.72 L924.49 160.39 L923.89 160.06 L923.28 159.73 L922.67 159.41 L922.06 159.09 L921.45 158.77 L920.84 158.45 L920.24 158.13 L919.63 157.82 L919.02 157.5 L918.41 157.19 L917.81 156.88 L917.2 156.58 L916.59 156.27 L915.99 155.97 L915.38 155.67 L914.78 155.38 L914.17 155.08 L913.56 154.79 L912.96 154.5 L912.35 154.21 L911.75 153.92 L911.14 153.64 L910.54 153.36 L909.93 153.08 L909.33 152.8 L908.72 152.53 L908.12 152.25 L907.51 151.98 L906.91 151.72 L906.3 151.45 L905.7 151.19 L905.09 150.93 L904.49 150.67 L903.88 150.42 L903.28 150.16 L902.67 149.91 L902.07 149.67 L901.47 149.42 L900.86 149.18 L900.26 148.94 L899.65 148.7 L899.05 148.47 L898.44 148.23 L897.84 148.01 L897.23 147.78 L896.63 147.55 L896.02 147.33 L895.42 147.11 L894.81 146.9 L894.21 146.68 L893.6 146.47 L893 146.27 L892.39 146.06 L891.79 145.86 L891.18 145.66 L890.57 145.46 L889.97 145.27 L889.36 145.08 L888.75 144.89 L888.15 144.7 L887.54 144.52 L886.93 144.34 L886.32 144.17 L885.71 143.99 L885.1 143.82 L884.49 143.65 L883.88 143.49 L883.27 143.33 L882.66 143.17 L882.05 143.01 L881.44 142.86 L880.83 142.71 L880.22 142.56 L879.6 142.42 L878.99 142.28 L878.38 142.14 L877.76 142.01 L877.15 141.88 L876.53 141.75 L875.92 141.62 L875.3 141.5" fill="none" stroke="#ffa812" stroke-width="1.5" stroke-dasharray="1.5 2.18"/>
<path d="M1090.5 298 L1090.06 297.46 L1089.61 296.93 L1089.16 296.4 L1088.72 295.86 L1088.27 295.33 L1087.81 294.79 L1087.36 294.26 L1086.91 293.72 L1086.45 293.19 L1085.99 292.65 L1085.53 292.12 L1085.07 291.59 L1084.61 291.05 L1084.15 290.52 L1083.68 289.99 L1083.22 289.45 L1082.75 288.92 L1082.28 288.39 L1081.81 287.85 L1081.34 287.32 L1080.86 286.79 L1080.39 286.25 L1079.91 285.72 L1079.43 285.19 L1078.96 284.66 L1078.47 284.13 L1077.99 283.59 L1077.51 283.06 L1077.02 282.53 L1076.54 282 L1076.05 281.47 L1075.56 280.94 L1075.07 280.41 L1074.58 279.88 L1074.09 279.34 L1073.59 278.81 L1073.1 278.28 L1072.6 277.75 L1072.1 277.22 L1071.6 276.69 L1071.1 276.17 L1070.6 275.64 L1070.09 275.11 L1069.59 274.58 L1069.08 274.05 L1068.58 273.52 L1068.07 272.99 L1067.56 272.47 L1067.04 271.94 L1066.53 271.41 L1066.02 270.88 L1065.5 270.36 L1064.99 269.83 L1064.47 269.3 L1063.95 268.78 L1063.43 268.25 L1062.91 267.72 L1062.39 267.2 L1061.86 266.67 L1061.34 266.15 L1060.81 265.62 L1060.28 265.1 L1059.75 264.57 L1059.22 264.05 L1058.69 263.52 L1058.16 263 L1057.63 262.48 L1057.09 261.95 L1056.56 261.43 L1056.02 260.91 L1055.48 260.39 L1054.94 259.86 L1054.4 259.34 L1053.86 258.82 L1053.32 258.3 L1052.78 257.78 L1052.23 257.26 L1051.69 256.74 L1051.14 256.22 L1050.59 255.7 L1050.04 255.18 L1049.49 254.66 L1048.94 254.14 L1048.39 253.62 L1047.84 253.1 L1047.28 252.58 L1046.73 252.07 L1046.17 251.55 L1045.62 251.03 L1045.06 250.52 L1044.5 250" fill="none" stroke="#ffa812" stroke-width="1.39"/>
<path d="M1007 222 L1006.37 221.56 L1005.75 221.12 L1005.12 220.68 L1004.5 220.24 L1003.87 219.81 L1003.24 219.37 L1002.62 218.94 L1001.99 218.5 L1001.36 218.07 L1000.73 217.63 L1000.11 217.2 L999.48 216.77 L998.85 216.34 L998.22 215.91 L997.59 215.48 L996.96 215.05 L996.33 214.62 L995.7 214.2 L995.07 213.77 L994.44 213.35 L993.81 212.92 L993.18 212.5 L992.55 212.08 L991.92 211.65 L991.29 211.23 L990.65 210.81 L990.02 210.4 L989.39 209.98 L988.76 209.56 L988.13 209.14 L987.49 208.73 L986.86 208.31 L986.23 207.9 L985.6 207.49 L984.96 207.08 L984.33 206.67 L983.7 206.26 L983.07 205.85 L982.43 205.44 L981.8 205.03 L981.17 204.63 L980.53 204.22 L979.9 203.82 L979.26 203.42 L978.63 203.01 L978 202.61 L977.36 202.21 L976.73 201.82 L976.1 201.42 L975.46 201.02 L974.83 200.63 L974.2 200.23 L973.56 199.84 L972.93 199.45 L972.29 199.05 L971.66 198.66 L971.03 198.28 L970.39 197.89 L969.76 197.5 L969.12 197.12 L968.49 196.73 L967.86 196.35 L967.22 195.97 L966.59 195.59 L965.96 195.21 L965.32 194.83 L964.69 194.45 L964.06 194.08 L963.42 193.7 L962.79 193.33 L962.16 192.95 L961.52 192.58 L960.89 192.21 L960.26 191.85 L959.63 191.48 L958.99 191.11 L958.36 190.75 L957.73 190.38 L957.1 190.02 L956.47 189.66 L955.83 189.3 L955.2 188.94 L954.57 188.59 L953.94 188.23 L953.31 187.88 L952.68 187.53 L952.04 187.18 L951.41 186.83 L950.78 186.48 L950.15 186.13 L949.52 185.78 L948.89 185.44 L948.26 185.1 L947.63 184.76 L947 184.42 L946.37 184.08 L945.74 183.74 L945.11 183.41 L944.48 183.07 L943.85 182.74 L943.23 182.41 L942.6 182.08 L941.97 181.76 L941.34 181.43 L940.71 181.1 L940.08 180.78 L939.46 180.46 L938.83 180.14 L938.2 179.82 L937.57 179.51 L936.95 179.19 L936.32 178.88 L935.69 178.57 L935.07 178.26 L934.44 177.95 L933.82 177.64 L933.19 177.34 L932.56 177.04 L931.94 176.74 L931.31 176.44 L930.69 176.14 L930.06 175.84 L929.44 175.55 L928.81 175.26 L928.19 174.97 L927.57 174.68 L926.94 174.39 L926.32 174.11 L925.69 173.82 L925.07 173.54 L924.45 173.26 L923.82 172.98 L923.2 172.71 L922.58 172.44 L921.96 172.16 L921.33 171.89 L920.71 171.63 L920.09 171.36 L919.47 171.09 L918.85 170.83 L918.22 170.57 L917.6 170.31 L916.98 170.06 L916.36 169.8 L915.74 169.55 L915.12 169.3 L914.5 169.05 L913.88 168.81 L913.26 168.56 L912.64 168.32 L912.02 168.08 L911.4 167.84 L910.78 167.61 L910.16 167.37 L909.54 167.14 L908.92 166.91 L908.3 166.69 L907.68 166.46 L907.06 166.24 L906.44 166.02 L905.82 165.8 L905.2 165.58 L904.58 165.37 L903.96 165.16 L903.34 164.95 L902.72 164.74 L902.1 164.54 L901.48 164.33 L900.86 164.13 L900.24 163.93 L899.62 163.74 L899 163.55 L898.38 163.35 L897.76 163.17 L897.14 162.98 L896.52 162.79 L895.9 162.61 L895.28 162.43 L894.66 162.26 L894.04 162.08 L893.42 161.91 L892.8 161.74 L892.18 161.57 L891.56 161.41 L890.94 161.24 L890.32 161.08 L889.7 160.93 L889.08 160.77 L888.46 160.62 L887.84 160.47 L887.21 160.32 L886.59 160.17 L885.97 160.03 L885.35 159.89 L884.72 159.75 L884.1 159.62 L883.48 159.49 L882.85 159.36 L882.23 159.23 L881.6 159.1 L880.98 158.98 L880.36 158.86 L879.73 158.74 L879.1 158.63 L878.48 158.52 L877.85 158.41 L877.22 158.3 L876.6 158.2 L875.97 158.1 L875.34 158 L874.71 157.9 L874.08 157.81 L873.45 157.72 L872.82 157.63 L872.19 157.54 L871.56 157.46 L870.93 157.38 L870.3 157.3" fill="none" stroke="#ffa812" stroke-width="1.5" stroke-dasharray="1.5 2.18"/>
<path d="M1061 266 L1060.45 265.5 L1059.9 265.01 L1059.35 264.51 L1058.8 264.02 L1058.25 263.52 L1057.69 263.03 L1057.14 262.53 L1056.58 262.04 L1056.02 261.54 L1055.47 261.05 L1054.91 260.56 L1054.35 260.06 L1053.79 259.57 L1053.22 259.08 L1052.66 258.59 L1052.1 258.09 L1051.53 257.6 L1050.97 257.11 L1050.4 256.62 L1049.83 256.13 L1049.26 255.64 L1048.7 255.15 L1048.12 254.66 L1047.55 254.17 L1046.98 253.68 L1046.41 253.19 L1045.84 252.71 L1045.26 252.22 L1044.68 251.73 L1044.11 251.25 L1043.53 250.76 L1042.95 250.27 L1042.37 249.79 L1041.79 249.3 L1041.21 248.82 L1040.63 248.33 L1040.05 247.85 L1039.47 247.37 L1038.88 246.88 L1038.3 246.4 L1037.71 245.92 L1037.13 245.44 L1036.54 244.96 L1035.95 244.47 L1035.36 243.99 L1034.78 243.51 L1034.19 243.03 L1033.6 242.56 L1033 242.08 L1032.41 241.6 L1031.82 241.12 L1031.23 240.64 L1030.63 240.17 L1030.04 239.69 L1029.44 239.22 L1028.85 238.74 L1028.25 238.27 L1027.65 237.79 L1027.05 237.32 L1026.45 236.84 L1025.85 236.37 L1025.25 235.9 L1024.65 235.43 L1024.05 234.96 L1023.45 234.49 L1022.85 234.02 L1022.25 233.55 L1021.64 233.08 L1021.04 232.61 L1020.43 232.14 L1019.83 231.67 L1019.22 231.21 L1018.62 230.74 L1018.01 230.28 L1017.4 229.81 L1016.79 229.35 L1016.18 228.88 L1015.58 228.42 L1014.97 227.96 L1014.36 227.49 L1013.75 227.03 L1013.13 226.57 L1012.52 226.11 L1011.91 225.65 L1011.3 225.19 L1010.69 224.74 L1010.07 224.28 L1009.46 223.82 L1008.84 223.36 L1008.23 222.91 L1007.62 222.45 L1007 222" fill="none" stroke="#ffa812" stroke-width="1.39"/>
<path d="M552.1 319.9 L552.74 319.73 L553.37 319.56 L554.01 319.39 L554.65 319.23 L555.28 319.06 L555.92 318.89 L556.56 318.72 L557.2 318.55 L557.83 318.38 L558.47 318.21 L559.11 318.04 L559.75 317.88 L560.39 317.71 L561.03 317.54 L561.67 317.37 L562.31 317.2 L562.95 317.03 L563.59 316.86 L564.23 316.7 L564.87 316.53 L565.51 316.36 L566.15 316.19 L566.8 316.02 L567.44 315.86 L568.08 315.69 L568.72 315.52 L569.37 315.35 L570.01 315.18 L570.65 315.02 L571.3 314.85 L571.94 314.68 L572.59 314.51 L573.23 314.34 L573.88 314.18 L574.52 314.01 L575.17 313.84 L575.81 313.68 L576.46 313.51 L577.11 313.34 L577.75 313.17 L578.4 313.01 L579.05 312.84 L579.69 312.67 L580.34 312.51 L580.99 312.34 L581.64 312.17 L582.28 312.01 L582.93 311.84 L583.58 311.67 L584.23 311.51 L584.88 311.34 L585.53 311.18 L586.18 311.01 L586.83 310.84 L587.48 310.68 L588.13 310.51 L588.78 310.35 L589.43 310.18 L590.08 310.02 L590.73 309.85 L591.39 309.69 L592.04 309.52 L592.69 309.36 L593.34 309.19 L593.99 309.03 L594.65 308.86 L595.3 308.7" fill="none" stroke="#ee82ee" stroke-width="1.5" stroke-dasharray="1.5 2.18"/>
<path d="M535 325.2 L535.63 325 L536.26 324.81 L536.89 324.61 L537.52 324.42 L538.14 324.22 L538.77 324.02 L539.41 323.83 L540.04 323.63 L540.67 323.44 L541.3 323.24 L541.93 323.04 L542.56 322.85 L543.2 322.65 L543.83 322.45 L544.46 322.26 L545.1 322.06 L545.73 321.87 L546.37 321.67 L547 321.47 L547.64 321.28 L548.28 321.08 L548.91 320.88 L549.55 320.69 L550.19 320.49 L550.82 320.29 L551.46 320.1 L552.1 319.9" fill="none" stroke="#ee82ee" stroke-width="1.39"/>
<path d="M556 318.9 L556.64 318.73 L557.27 318.56 L557.91 318.39 L558.55 318.22 L559.18 318.06 L559.82 317.89 L560.46 317.72 L561.1 317.55 L561.74 317.38 L562.38 317.21 L563.01 317.04 L563.65 316.87 L564.29 316.71 L564.93 316.54 L565.57 316.37 L566.21 316.2 L566.85 316.03 L567.5 315.86 L568.14 315.7 L568.78 315.53 L569.42 315.36 L570.06 315.19 L570.7 315.02 L571.35 314.86 L571.99 314.69 L572.63 314.52 L573.28 314.35 L573.92 314.18 L574.56 314.02 L575.21 313.85 L575.85 313.68 L576.5 313.51 L577.14 313.35 L577.79 313.18 L578.43 313.01 L579.08 312.85 L579.72 312.68 L580.37 312.51 L581.02 312.34 L581.66 312.18 L582.31 312.01 L582.96 311.84 L583.61 311.68 L584.25 311.51 L584.9 311.35 L585.55 311.18 L586.2 311.01 L586.85 310.85 L587.49 310.68 L588.14 310.52 L588.79 310.35 L589.44 310.18 L590.09 310.02 L590.74 309.85 L591.39 309.69 L592.04 309.52 L592.69 309.36 L593.35 309.19 L594 309.03 L594.65 308.86 L595.3 308.7" fill="none" stroke="#ee82ee" stroke-width="1.5" stroke-dasharray="1.5 2.18"/>
<path d="M552.1 320 L552.75 319.82 L553.4 319.63 L554.05 319.45 L554.7 319.27 L555.35 319.08 L556 318.9" fill="none" stroke="#ee82ee" stroke-width="1.39"/>
<path d="M535 225 L534.54 225.62 L534.09 226.23 L533.64 226.85 L533.2 227.47 L532.76 228.08 L532.32 228.7 L531.89 229.32 L531.46 229.93 L531.04 230.55 L530.62 231.17 L530.2 231.79 L529.79 232.4 L529.38 233.02 L528.98 233.64 L528.58 234.26 L528.18 234.88 L527.79 235.49 L527.4 236.11 L527.01 236.73 L526.63 237.35 L526.25 237.97 L525.88 238.59 L525.51 239.21 L525.15 239.83 L524.79 240.44 L524.43 241.06 L524.08 241.68 L523.73 242.3 L523.39 242.92 L523.05 243.54 L522.71 244.16 L522.38 244.78 L522.05 245.4 L521.73 246.02 L521.41 246.64 L521.09 247.26 L520.78 247.88 L520.47 248.5 L520.17 249.13 L519.87 249.75 L519.57 250.37 L519.28 250.99 L519 251.61 L518.71 252.23 L518.44 252.85 L518.16 253.47 L517.89 254.09 L517.63 254.72 L517.36 255.34 L517.11 255.96 L516.85 256.58 L516.61 257.2 L516.36 257.82 L516.12 258.45 L515.88 259.07 L515.65 259.69 L515.42 260.31 L515.2 260.93 L514.98 261.56 L514.77 262.18 L514.56 262.8 L514.35 263.42 L514.15 264.05 L513.95 264.67 L513.76 265.29 L513.57 265.92 L513.38 266.54 L513.2 267.16 L513.03 267.78 L512.85 268.41 L512.69 269.03 L512.52 269.65 L512.36 270.28 L512.21 270.9 L512.06 271.52 L511.91 272.15 L511.77 272.77 L511.63 273.39 L511.5 274.02 L511.37 274.64 L511.25 275.26 L511.13 275.89 L511.01 276.51 L510.9 277.14 L510.79 277.76 L510.69 278.38 L510.59 279.01 L510.5 279.63 L510.41 280.26 L510.32 280.88 L510.24 281.5 L510.16 282.13 L510.09 282.75 L510.02 283.38 L509.96 284 L509.9 284.63 L509.85 285.25 L509.8 285.87 L509.75 286.5 L509.71 287.12 L509.67 287.75 L509.64 288.37 L509.61 289 L509.59 289.62 L509.57 290.25 L509.55 290.87 L509.54 291.5 L509.53 292.12 L509.53 292.75 L509.54 293.37 L509.54 294 L509.55 294.62 L509.57 295.25 L509.59 295.87 L509.61 296.5 L509.64 297.12 L509.67 297.75 L509.71 298.37 L509.75 299 L509.8 299.62 L509.85 300.25 L509.91 300.87 L509.97 301.5 L510.03 302.12 L510.1 302.75 L510.17 303.37 L510.25 304 L510.33 304.62 L510.42 305.25 L510.51 305.87 L510.6 306.5" fill="none" stroke="#adff2f" stroke-width="1.5" stroke-dasharray="1.5 2.18"/>
<path d="M545 213 L544.44 213.63 L543.88 214.26 L543.33 214.89 L542.78 215.52 L542.23 216.15 L541.69 216.78 L541.15 217.41 L540.61 218.05 L540.08 218.68 L539.56 219.31 L539.04 219.94 L538.52 220.57 L538 221.2 L537.49 221.84 L536.99 222.47 L536.48 223.1 L535.98 223.73 L535.49 224.37 L535 225" fill="none" stroke="#adff2f" stroke-width="1.39"/>
<line x1="431.1" y1="237.8" x2="432.2" y2="244.4" stroke="#858585" stroke-width="1.39"/>
<circle cx="432.2" cy="244.4" r="1.0" fill="#858585"/>
<line x1="525.6" y1="261.1" x2="536.7" y2="246.1" stroke="#858585" stroke-width="1.39"/>
<circle cx="536.7" cy="246.1" r="1.0" fill="#858585"/>
<line x1="577.2" y1="220" x2="597.8" y2="210.2" stroke="#858585" stroke-width="1.39"/>
<circle cx="597.8" cy="210.2" r="1.0" fill="#858585"/>
<line x1="571.1" y1="233.9" x2="578.9" y2="233.9" stroke="#858585" stroke-width="1.39"/>
<circle cx="578.9" cy="233.9" r="1.0" fill="#858585"/>
<line x1="589.4" y1="256.7" x2="602.8" y2="255" stroke="#858585" stroke-width="1.39"/>
<circle cx="602.8" cy="255" r="1.0" fill="#858585"/>
<line x1="603.9" y1="257.2" x2="630.6" y2="252" stroke="#858585" stroke-width="1.39"/>
<circle cx="630.6" cy="252" r="1.0" fill="#858585"/>
<line x1="634.4" y1="242.8" x2="640.6" y2="251.7" stroke="#858585" stroke-width="1.39"/>
<circle cx="640.6" cy="251.7" r="1.0" fill="#858585"/>
<line x1="593.3" y1="268.3" x2="601.1" y2="276.1" stroke="#858585" stroke-width="1.39"/>
<circle cx="601.1" cy="276.1" r="1.0" fill="#858585"/>
<line x1="562.2" y1="290" x2="572.8" y2="298.9" stroke="#858585" stroke-width="1.39"/>
<circle cx="572.8" cy="298.9" r="1.0" fill="#858585"/>
<line x1="558.9" y1="340.7" x2="564.4" y2="345.6" stroke="#858585" stroke-width="1.39"/>
<circle cx="564.4" cy="345.6" r="1.0" fill="#858585"/>
<line x1="664.6" y1="338.3" x2="671.3" y2="346.8" stroke="#858585" stroke-width="1.39"/>
<circle cx="671.3" cy="346.8" r="1.0" fill="#858585"/>
<line x1="524.6" y1="302.8" x2="528.9" y2="301.6" stroke="#858585" stroke-width="1.39"/>
<circle cx="528.9" cy="301.6" r="1.0" fill="#858585"/>
<circle cx="499" cy="232" r="1.25" fill="#ff5a3c"/>
<circle cx="554.9" cy="331.2" r="1.25" fill="#ff5a3c"/>
<circle cx="553.1" cy="282" r="1.25" fill="#ff5a3c"/>
<circle cx="580" cy="262.8" r="1.25" fill="#ff5a3c"/>
<circle cx="702.9" cy="240" r="1.25" fill="#ff5a3c"/>
<circle cx="1031.1" cy="298.8" r="1.25" fill="#ff5a3c"/>
<circle cx="1087.7" cy="279.8" r="1.25" fill="#ff5a3c"/>
<circle cx="1161" cy="332" r="1.25" fill="#ff5a3c"/>
<circle cx="1090.5" cy="298" r="1.25" fill="#ff5a3c"/>
<circle cx="1061" cy="266" r="1.25" fill="#ff5a3c"/>
<circle cx="535" cy="325.2" r="1.25" fill="#ff5a3c"/>
<circle cx="552.1" cy="320" r="1.25" fill="#ff5a3c"/>
<circle cx="545" cy="213" r="1.25" fill="#ff5a3c"/>
<g stroke="#ff0000" stroke-width="1.3">
<path d="M1087.1 89.9 h7 M1090.6 86.4 v7"/>
<path d="M1114.9 100.5 h7 M1118.4 97 v7"/>
<path d="M1130.1 106.2 h7 M1133.6 102.7 v7"/>
<path d="M1070.7 84.5 h7 M1074.2 81 v7"/>
<path d="M1087.1 89.9 h7 M1090.6 86.4 v7"/>
<path d="M737.8 80 h7 M741.3 76.5 v7"/>
<path d="M1121.8 105.8 h7 M1125.3 102.3 v7"/>
<path d="M1077.5 87.7 h7 M1081 84.2 v7"/>
<path d="M871.8 141.5 h7 M875.3 138 v7"/>
<path d="M866.8 157.3 h7 M870.3 153.8 v7"/>
<path d="M591.8 308.7 h7 M595.3 305.2 v7"/>
<path d="M591.8 308.7 h7 M595.3 305.2 v7"/>
<path d="M507.1 306.5 h7 M510.6 303 v7"/>
</g>
<text x="1093.5" y="93.7" font-family="Liberation Sans" font-size="11.66" fill="#fff" text-anchor="middle" textLength="24.15" lengthAdjust="spacingAndGlyphs">DKD</text>
<text x="877.3" y="138" font-family="Liberation Sans" font-size="11.66" fill="#fff" text-anchor="middle" textLength="22.78" lengthAdjust="spacingAndGlyphs">DPC</text>
<text x="593" y="291.9" font-family="Liberation Sans" font-size="11.66" fill="#fff" text-anchor="middle" textLength="26.38" lengthAdjust="spacingAndGlyphs">MON</text>
<text x="508.3" y="309.8" font-family="Liberation Sans" font-size="11.66" fill="#fff" text-anchor="middle" textLength="23.46" lengthAdjust="spacingAndGlyphs">HYD</text>
<text x="316.3" y="29.9" font-family="Liberation Mono" font-size="15.38" fill="#fff" textLength="50.21" lengthAdjust="spacingAndGlyphs" xml:space="preserve">UK0041</text>
<text x="316.3" y="43.03" font-family="Liberation Mono" font-size="15.38" fill="#fff" textLength="318" lengthAdjust="spacingAndGlyphs" xml:space="preserve">Beg: 20251202 17:06:34 (sol = 250.42°)</text>
<text x="316.3" y="56.16" font-family="Liberation Mono" font-size="15.38" fill="#fff" textLength="318" lengthAdjust="spacingAndGlyphs" xml:space="preserve">End: 20251203 05:30:35 (sol = 250.94°)</text>
<text x="316.3" y="69.29" font-family="Liberation Mono" font-size="15.38" fill="#fff" textLength="318" lengthAdjust="spacingAndGlyphs" xml:space="preserve">--------------------------------------</text>
<text x="316.3" y="82.42" font-family="Liberation Mono" font-size="15.38" fill="#fff" textLength="58.58" lengthAdjust="spacingAndGlyphs" xml:space="preserve">...: 18</text>
<text x="316.3" y="95.55" font-family="Liberation Mono" font-size="15.38" fill="#fff" textLength="50.21" lengthAdjust="spacingAndGlyphs" xml:space="preserve">DKD: 8</text>
<text x="316.3" y="108.68" font-family="Liberation Mono" font-size="15.38" fill="#fff" textLength="50.21" lengthAdjust="spacingAndGlyphs" xml:space="preserve">DPC: 2</text>
<text x="316.3" y="121.81" font-family="Liberation Mono" font-size="15.38" fill="#fff" textLength="50.21" lengthAdjust="spacingAndGlyphs" xml:space="preserve">MON: 2</text>
<text x="316.3" y="134.94" font-family="Liberation Mono" font-size="15.38" fill="#fff" textLength="50.21" lengthAdjust="spacingAndGlyphs" xml:space="preserve">HYD: 1</text>
<g transform="translate(148.73 697.9) rotate(-90)"><text x="0" y="0" font-family="Liberation Sans" font-size="29.46" fill="#5a5a5a" textLength="55.1" lengthAdjust="spacingAndGlyphs">APR</text></g>
<g transform="translate(294.93 703.64) rotate(-90)"><text x="0" y="0" font-family="Liberation Sans" font-size="29.46" fill="#5a5a5a" textLength="59.98" lengthAdjust="spacingAndGlyphs">MAY</text></g>
<g transform="translate(435.93 690.21) rotate(-90)"><text x="0" y="0" font-family="Liberation Sans" font-size="29.46" fill="#5a5a5a" textLength="49.34" lengthAdjust="spacingAndGlyphs">JUN</text></g>
<g transform="translate(577.33 687.49) rotate(-90)"><text x="0" y="0" font-family="Liberation Sans" font-size="29.46" fill="#5a5a5a" textLength="44.03" lengthAdjust="spacingAndGlyphs">JUL</text></g>
<g transform="translate(723.93 702.23) rotate(-90)"><text x="0" y="0" font-family="Liberation Sans" font-size="29.46" fill="#5a5a5a" textLength="60.91" lengthAdjust="spacingAndGlyphs">AUG</text></g>
<g transform="translate(872.13 694.63) rotate(-90)"><text x="0" y="0" font-family="Liberation Sans" font-size="29.46" fill="#5a5a5a" textLength="51.98" lengthAdjust="spacingAndGlyphs">SEP</text></g>
<g transform="translate(1016.83 701.96) rotate(-90)"><text x="0" y="0" font-family="Liberation Sans" font-size="29.46" fill="#5a5a5a" textLength="58.27" lengthAdjust="spacingAndGlyphs">OCT</text></g>
<g transform="translate(1169.63 705.06) rotate(-90)"><text x="0" y="0" font-family="Liberation Sans" font-size="29.46" fill="#5a5a5a" textLength="61.69" lengthAdjust="spacingAndGlyphs">NOV</text></g>
<g transform="translate(1318.93 700.48) rotate(-90)"><text x="0" y="0" font-family="Liberation Sans" font-size="29.46" fill="#5a5a5a" textLength="58.38" lengthAdjust="spacingAndGlyphs">DEC</text></g>
<g transform="translate(1469.63 688.88) rotate(-90)"><text x="0" y="0" font-family="Liberation Sans" font-size="29.46" fill="#5a5a5a" textLength="48.01" lengthAdjust="spacingAndGlyphs">JAN</text></g>
<g transform="translate(1627.93 694.26) rotate(-90)"><text x="0" y="0" font-family="Liberation Sans" font-size="29.46" fill="#5a5a5a" textLength="52.63" lengthAdjust="spacingAndGlyphs">FEB</text></g>
<g transform="translate(1765.63 705.12) rotate(-90)"><text x="0" y="0" font-family="Liberation Sans" font-size="29.46" fill="#5a5a5a" textLength="62.32" lengthAdjust="spacingAndGlyphs">MAR</text></g>
<g stroke="#ee82ee" stroke-width="4">
<line x1="105.9" y1="834" x2="129.9" y2="834"/>
<line x1="165" y1="834" x2="345" y2="834"/>
<line x1="366" y1="834" x2="625" y2="834"/>
<line x1="636" y1="834" x2="787" y2="834"/>
<line x1="807" y1="834" x2="899.8" y2="834"/>
<line x1="920" y1="834" x2="972.8" y2="834"/>
<line x1="984" y1="834" x2="1065.8" y2="834"/>
<line x1="1082" y1="834" x2="1204" y2="834"/>
<line x1="1244" y1="834" x2="1326" y2="834"/>
<line x1="1337" y1="834" x2="1356" y2="834"/>
<line x1="1381" y1="834" x2="1444" y2="834"/>
<line x1="1459" y1="834" x2="1512" y2="834"/>
<line x1="1523" y1="834" x2="1547" y2="834"/>
<line x1="1724" y1="834" x2="1747.8" y2="834"/>
<line x1="1758" y1="834" x2="1781.8" y2="834"/>
</g>
<g stroke="#e31cf5" stroke-width="4">
<line x1="165" y1="818" x2="188.8" y2="818"/>
<line x1="224.2" y1="818" x2="286.8" y2="818"/>
<line x1="312" y1="818" x2="340.8" y2="818"/>
<line x1="366" y1="818" x2="492.8" y2="818"/>
<line x1="508" y1="818" x2="653.8" y2="818"/>
<line x1="704" y1="818" x2="737.8" y2="818"/>
<line x1="773" y1="818" x2="845.8" y2="818"/>
<line x1="871" y1="818" x2="987.8" y2="818"/>
<line x1="1003" y1="818" x2="1016.8" y2="818"/>
<line x1="1062" y1="818" x2="1213" y2="818"/>
<line x1="1244" y1="818" x2="1267" y2="818"/>
<line x1="1293" y1="818" x2="1315.8" y2="818"/>
<line x1="1342" y1="818" x2="1365" y2="818"/>
<line x1="1386" y1="818" x2="1429" y2="818"/>
<line x1="1459" y1="818" x2="1483" y2="818"/>
<line x1="1548" y1="818" x2="1571" y2="818"/>
</g>
<g stroke="#ff2200" stroke-width="4">
<line x1="165" y1="802" x2="188.8" y2="802"/>
<line x1="257.8" y1="802" x2="487.8" y2="802"/>
<line x1="508" y1="802" x2="614.8" y2="802"/>
<line x1="626" y1="802" x2="717.8" y2="802"/>
<line x1="729" y1="802" x2="826" y2="802"/>
<line x1="948.8" y1="802" x2="1149.8" y2="802"/>
<line x1="1160" y1="802" x2="1249" y2="802"/>
<line x1="1258" y1="802" x2="1444" y2="802"/>
<line x1="1459" y1="802" x2="1483" y2="802"/>
<line x1="1553" y1="802" x2="1576" y2="802"/>
</g>
<g stroke="#ffad14" stroke-width="4">
<line x1="193.9" y1="785" x2="218" y2="785"/>
<line x1="322.2" y1="785" x2="507" y2="785"/>
<line x1="518" y1="785" x2="542" y2="785"/>
<line x1="557" y1="785" x2="683.8" y2="785"/>
<line x1="807" y1="785" x2="831" y2="785"/>
<line x1="954" y1="785" x2="972.8" y2="785"/>
<line x1="989" y1="785" x2="1125" y2="785"/>
<line x1="1155" y1="785" x2="1218" y2="785"/>
<line x1="1244" y1="785" x2="1267" y2="785"/>
<line x1="1317" y1="785" x2="1341" y2="785"/>
<line x1="1396" y1="785" x2="1419" y2="785"/>
<line x1="1464" y1="785" x2="1650" y2="785"/>
</g>
<g stroke="#ffee00" stroke-width="4">
<line x1="341" y1="769" x2="369.8" y2="769"/>
<line x1="410" y1="769" x2="447.8" y2="769"/>
<line x1="469" y1="769" x2="493" y2="769"/>
<line x1="528" y1="769" x2="545.8" y2="769"/>
<line x1="562" y1="769" x2="590.8" y2="769"/>
<line x1="616" y1="769" x2="648.8" y2="769"/>
<line x1="959" y1="769" x2="987.8" y2="769"/>
<line x1="1062" y1="769" x2="1086" y2="769"/>
<line x1="1101" y1="769" x2="1125" y2="769"/>
<line x1="1160" y1="769" x2="1193.8" y2="769"/>
<line x1="1249" y1="769" x2="1271.8" y2="769"/>
<line x1="1425" y1="769" x2="1512" y2="769"/>
</g>
<g stroke="#adff2f" stroke-width="4">
<line x1="420" y1="752" x2="443.8" y2="752"/>
<line x1="533" y1="752" x2="556" y2="752"/>
<line x1="567" y1="752" x2="590.8" y2="752"/>
<line x1="621" y1="752" x2="743" y2="752"/>
<line x1="969" y1="752" x2="1135" y2="752"/>
<line x1="1185" y1="752" x2="1346" y2="752"/>
<line x1="1469" y1="752" x2="1493" y2="752"/>
</g>
<g stroke="#5ccf00" stroke-width="4">
<line x1="430.2" y1="736" x2="452.8" y2="736"/>
<line x1="577" y1="736" x2="732.8" y2="736"/>
<line x1="994" y1="736" x2="1104.8" y2="736"/>
<line x1="1116" y1="736" x2="1223" y2="736"/>
<line x1="1263" y1="736" x2="1291.8" y2="736"/>
<line x1="1489" y1="736" x2="1512" y2="736"/>
</g>
<g stroke="#00f57a" stroke-width="4">
<line x1="592" y1="720" x2="614.8" y2="720"/>
<line x1="655" y1="720" x2="772" y2="720"/>
<line x1="1072" y1="720" x2="1243" y2="720"/>
<line x1="1263" y1="720" x2="1286.8" y2="720"/>
</g>
<g stroke="#00d2f5" stroke-width="4">
<line x1="596.2" y1="703" x2="732.8" y2="703"/>
<line x1="1092" y1="703" x2="1120" y2="703"/>
<line x1="1200" y1="703" x2="1223" y2="703"/>
<line x1="1273" y1="703" x2="1326" y2="703"/>
</g>
<g stroke="#0a14c8" stroke-width="4">
<line x1="1111" y1="687" x2="1135" y2="687"/>
</g>
<g stroke="#ffffff" stroke-opacity="0.43" stroke-width="2.08" stroke-dasharray="2.08 3.43" fill="none">
<line x1="74.9" y1="842.5" x2="74.9" y2="641.5"/>
<line x1="218.9" y1="842.5" x2="218.9" y2="641.5"/>
<line x1="365" y1="842.5" x2="365" y2="641.5"/>
<line x1="505.8" y1="842.5" x2="505.8" y2="641.5"/>
<line x1="650.8" y1="842.5" x2="650.8" y2="641.5"/>
<line x1="797" y1="842.5" x2="797" y2="641.5"/>
<line x1="940" y1="842.5" x2="940" y2="641.5"/>
<line x1="1090.8" y1="842.5" x2="1090.8" y2="641.5"/>
<line x1="1238.8" y1="842.5" x2="1238.8" y2="641.5"/>
<line x1="1393.8" y1="842.5" x2="1393.8" y2="641.5"/>
<line x1="1548" y1="842.5" x2="1548" y2="641.5"/>
<line x1="1687" y1="842.5" x2="1687" y2="641.5"/>
</g>
<g stroke="#ffffff" stroke-width="2">
<path d="M113.7 834 h7.8 M117.6 830.2 v7.6"/>
<path d="M240.8 834 h7.8 M244.7 830.2 v7.6"/>
<path d="M510.8 834 h7.8 M514.7 830.2 v7.6"/>
<path d="M706.9 834 h7.8 M710.8 830.2 v7.6"/>
<path d="M833.8 834 h7.8 M837.7 830.2 v7.6"/>
<path d="M961.9 834 h7.8 M965.8 830.2 v7.6"/>
<path d="M986.9 834 h7.8 M990.8 830.2 v7.6"/>
<path d="M1116.9 834 h7.8 M1120.8 830.2 v7.6"/>
<path d="M1295.8 834 h7.8 M1299.7 830.2 v7.6"/>
<path d="M1341.9 834 h7.8 M1345.8 830.2 v7.6"/>
<path d="M1412.9 834 h7.8 M1416.8 830.2 v7.6"/>
<path d="M1481.9 834 h7.8 M1485.8 830.2 v7.6"/>
<path d="M1531.1 834 h7.8 M1535 830.2 v7.6"/>
<path d="M1731.9 834 h7.8 M1735.8 830.2 v7.6"/>
<path d="M1765.9 834 h7.8 M1769.8 830.2 v7.6"/>
<path d="M172.9 818 h7.8 M176.8 814.2 v7.6"/>
<path d="M255.8 818 h7.8 M259.7 814.2 v7.6"/>
<path d="M323.9 818 h7.8 M327.8 814.2 v7.6"/>
<path d="M437.9 818 h7.8 M441.8 814.2 v7.6"/>
<path d="M598.9 818 h7.8 M602.8 814.2 v7.6"/>
<path d="M716.6 818 h7.8 M720.5 814.2 v7.6"/>
<path d="M793.8 818 h7.8 M797.7 814.2 v7.6"/>
<path d="M939.9 818 h7.8 M943.8 814.2 v7.6"/>
<path d="M1005.9 818 h7.8 M1009.8 814.2 v7.6"/>
<path d="M1152.9 818 h7.8 M1156.8 814.2 v7.6"/>
<path d="M1251.1 818 h7.8 M1255 814.2 v7.6"/>
<path d="M1299.9 818 h7.8 M1303.8 814.2 v7.6"/>
<path d="M1349.9 818 h7.8 M1353.8 814.2 v7.6"/>
<path d="M1402.9 818 h7.8 M1406.8 814.2 v7.6"/>
<path d="M1466.9 818 h7.8 M1470.8 814.2 v7.6"/>
<path d="M1554.9 818 h7.8 M1558.8 814.2 v7.6"/>
<path d="M174.8 802 h7.8 M178.7 798.2 v7.6"/>
<path d="M378.9 802 h7.8 M382.8 798.2 v7.6"/>
<path d="M544.8 802 h7.8 M548.7 798.2 v7.6"/>
<path d="M682.8 802 h7.8 M686.7 798.2 v7.6"/>
<path d="M741.9 802 h7.8 M745.8 798.2 v7.6"/>
<path d="M1074.9 802 h7.8 M1078.8 798.2 v7.6"/>
<path d="M1216.9 802 h7.8 M1220.8 798.2 v7.6"/>
<path d="M1304.8 802 h7.8 M1308.7 798.2 v7.6"/>
<path d="M1466.9 802 h7.8 M1470.8 798.2 v7.6"/>
<path d="M1559.9 802 h7.8 M1563.8 798.2 v7.6"/>
<path d="M201.8 785 h7.8 M205.7 781.2 v7.6"/>
<path d="M400.8 785 h7.8 M404.7 781.2 v7.6"/>
<path d="M525.8 785 h7.8 M529.7 781.2 v7.6"/>
<path d="M638.9 785 h7.8 M642.8 781.2 v7.6"/>
<path d="M814.8 785 h7.8 M818.7 781.2 v7.6"/>
<path d="M959.8 785 h7.8 M963.7 781.2 v7.6"/>
<path d="M1040.8 785 h7.8 M1044.7 781.2 v7.6"/>
<path d="M1187.8 785 h7.8 M1191.7 781.2 v7.6"/>
<path d="M1251.1 785 h7.8 M1255 781.2 v7.6"/>
<path d="M1324.9 785 h7.8 M1328.8 781.2 v7.6"/>
<path d="M1402.9 785 h7.8 M1406.8 781.2 v7.6"/>
<path d="M1545.9 785 h7.8 M1549.8 781.2 v7.6"/>
<path d="M355.9 769 h7.8 M359.8 765.2 v7.6"/>
<path d="M426.9 769 h7.8 M430.8 765.2 v7.6"/>
<path d="M476.9 769 h7.8 M480.8 765.2 v7.6"/>
<path d="M535.8 769 h7.8 M539.7 765.2 v7.6"/>
<path d="M570.8 769 h7.8 M574.7 765.2 v7.6"/>
<path d="M630.9 769 h7.8 M634.8 765.2 v7.6"/>
<path d="M973.9 769 h7.8 M977.8 765.2 v7.6"/>
<path d="M1069.9 769 h7.8 M1073.8 765.2 v7.6"/>
<path d="M1108.9 769 h7.8 M1112.8 765.2 v7.6"/>
<path d="M1177.9 769 h7.8 M1181.8 765.2 v7.6"/>
<path d="M1256.1 769 h7.8 M1260 765.2 v7.6"/>
<path d="M1466.9 769 h7.8 M1470.8 765.2 v7.6"/>
<path d="M427.8 752 h7.8 M431.7 748.2 v7.6"/>
<path d="M539.9 752 h7.8 M543.8 748.2 v7.6"/>
<path d="M574.9 752 h7.8 M578.8 748.2 v7.6"/>
<path d="M703.9 752 h7.8 M707.8 748.2 v7.6"/>
<path d="M1094.9 752 h7.8 M1098.8 748.2 v7.6"/>
<path d="M1271.1 752 h7.8 M1275 748.2 v7.6"/>
<path d="M1476.9 752 h7.8 M1480.8 748.2 v7.6"/>
<path d="M437.8 736 h7.8 M441.7 732.2 v7.6"/>
<path d="M630.9 736 h7.8 M634.8 732.2 v7.6"/>
<path d="M1039.1 736 h7.8 M1043 732.2 v7.6"/>
<path d="M1167.9 736 h7.8 M1171.8 732.2 v7.6"/>
<path d="M1274.9 736 h7.8 M1278.8 732.2 v7.6"/>
<path d="M1496.9 736 h7.8 M1500.8 732.2 v7.6"/>
<path d="M598.9 720 h7.8 M602.8 716.2 v7.6"/>
<path d="M726.9 720 h7.8 M730.8 716.2 v7.6"/>
<path d="M1187.8 720 h7.8 M1191.7 716.2 v7.6"/>
<path d="M1271.1 720 h7.8 M1275 716.2 v7.6"/>
<path d="M687.9 703 h7.8 M691.8 699.2 v7.6"/>
<path d="M1102.1 703 h7.8 M1106 699.2 v7.6"/>
<path d="M1206.9 703 h7.8 M1210.8 699.2 v7.6"/>
<path d="M1299.9 703 h7.8 M1303.8 699.2 v7.6"/>
<path d="M1118.9 687 h7.8 M1122.8 683.2 v7.6"/>
</g>
<text x="117.12" y="831.7" font-family="Liberation Sans" font-size="11.44" fill="#fff" text-anchor="middle" textLength="20.76" lengthAdjust="spacingAndGlyphs">KSE</text>
<text x="254.21" y="831.7" font-family="Liberation Sans" font-size="11.44" fill="#fff" text-anchor="middle" textLength="20.81" lengthAdjust="spacingAndGlyphs">ETA</text>
<text x="495.26" y="831.7" font-family="Liberation Sans" font-size="11.44" fill="#fff" text-anchor="middle" textLength="23.02" lengthAdjust="spacingAndGlyphs">NZC</text>
<text x="710.21" y="831.7" font-family="Liberation Sans" font-size="11.44" fill="#fff" text-anchor="middle" textLength="23.78" lengthAdjust="spacingAndGlyphs">NDA</text>
<text x="853.99" y="831.7" font-family="Liberation Sans" font-size="11.44" fill="#fff" text-anchor="middle" textLength="20.19" lengthAdjust="spacingAndGlyphs">SPE</text>
<text x="946.58" y="831.7" font-family="Liberation Sans" font-size="11.44" fill="#fff" text-anchor="middle" textLength="23.21" lengthAdjust="spacingAndGlyphs">ARD</text>
<text x="1024.57" y="831.7" font-family="Liberation Sans" font-size="11.44" fill="#fff" text-anchor="middle" textLength="22.02" lengthAdjust="spacingAndGlyphs">EGE</text>
<text x="1142.01" y="831.7" font-family="Liberation Sans" font-size="11.44" fill="#fff" text-anchor="middle" textLength="22.06" lengthAdjust="spacingAndGlyphs">NTA</text>
<text x="1285" y="831.7" font-family="Liberation Sans" font-size="11.44" fill="#fff" text-anchor="middle" textLength="25.9" lengthAdjust="spacingAndGlyphs">MON</text>
<text x="1343.33" y="831.7" font-family="Liberation Sans" font-size="11.44" fill="#fff" text-anchor="middle" textLength="22.26" lengthAdjust="spacingAndGlyphs">URS</text>
<text x="1412.05" y="831.7" font-family="Liberation Sans" font-size="11.44" fill="#fff" text-anchor="middle" textLength="22.11" lengthAdjust="spacingAndGlyphs">AHY</text>
<text x="1485.82" y="831.7" font-family="Liberation Sans" font-size="11.44" fill="#fff" text-anchor="middle" textLength="25.59" lengthAdjust="spacingAndGlyphs">GUM</text>
<text x="1535.09" y="831.7" font-family="Liberation Sans" font-size="11.44" fill="#fff" text-anchor="middle" textLength="23.22" lengthAdjust="spacingAndGlyphs">OHY</text>
<text x="1736.18" y="831.7" font-family="Liberation Sans" font-size="11.44" fill="#fff" text-anchor="middle" textLength="22.34" lengthAdjust="spacingAndGlyphs">XHE</text>
<text x="1769.4" y="831.7" font-family="Liberation Sans" font-size="11.44" fill="#fff" text-anchor="middle" textLength="17.4" lengthAdjust="spacingAndGlyphs">EVI</text>
<text x="176.74" y="815" font-family="Liberation Sans" font-size="11.44" fill="#fff" text-anchor="middle" textLength="22.19" lengthAdjust="spacingAndGlyphs">AVB</text>
<text x="254.26" y="815" font-family="Liberation Sans" font-size="11.44" fill="#fff" text-anchor="middle" textLength="19.44" lengthAdjust="spacingAndGlyphs">ELY</text>
<text x="323.92" y="815" font-family="Liberation Sans" font-size="11.44" fill="#fff" text-anchor="middle" textLength="24.25" lengthAdjust="spacingAndGlyphs">CAM</text>
<text x="431.84" y="815" font-family="Liberation Sans" font-size="11.44" fill="#fff" text-anchor="middle" textLength="22.08" lengthAdjust="spacingAndGlyphs">SSG</text>
<text x="578.11" y="815" font-family="Liberation Sans" font-size="11.44" fill="#fff" text-anchor="middle" textLength="21.44" lengthAdjust="spacingAndGlyphs">PCA</text>
<text x="720.68" y="815" font-family="Liberation Sans" font-size="11.44" fill="#fff" text-anchor="middle" textLength="23.61" lengthAdjust="spacingAndGlyphs">AUD</text>
<text x="809.51" y="815" font-family="Liberation Sans" font-size="11.44" fill="#fff" text-anchor="middle" textLength="22.8" lengthAdjust="spacingAndGlyphs">AUR</text>
<text x="930.89" y="815" font-family="Liberation Sans" font-size="11.44" fill="#fff" text-anchor="middle" textLength="22.57" lengthAdjust="spacingAndGlyphs">DSX</text>
<text x="1010.97" y="815" font-family="Liberation Sans" font-size="11.44" fill="#fff" text-anchor="middle" textLength="23.95" lengthAdjust="spacingAndGlyphs">OCU</text>
<text x="1138.15" y="815" font-family="Liberation Sans" font-size="11.44" fill="#fff" text-anchor="middle" textLength="22.83" lengthAdjust="spacingAndGlyphs">OER</text>
<text x="1254.39" y="815" font-family="Liberation Sans" font-size="11.44" fill="#fff" text-anchor="middle" textLength="23.71" lengthAdjust="spacingAndGlyphs">DKD</text>
<text x="1303.71" y="815" font-family="Liberation Sans" font-size="11.44" fill="#fff" text-anchor="middle" textLength="22.56" lengthAdjust="spacingAndGlyphs">DSV</text>
<text x="1353.2" y="815" font-family="Liberation Sans" font-size="11.44" fill="#fff" text-anchor="middle" textLength="20" lengthAdjust="spacingAndGlyphs">ALY</text>
<text x="1408.52" y="815" font-family="Liberation Sans" font-size="11.44" fill="#fff" text-anchor="middle" textLength="16.03" lengthAdjust="spacingAndGlyphs">JLE</text>
<text x="1471.74" y="815" font-family="Liberation Sans" font-size="11.44" fill="#fff" text-anchor="middle" textLength="21.94" lengthAdjust="spacingAndGlyphs">SCC</text>
<text x="1558.71" y="815" font-family="Liberation Sans" font-size="11.44" fill="#fff" text-anchor="middle" textLength="20.42" lengthAdjust="spacingAndGlyphs">FEV</text>
<text x="175.53" y="798.9" font-family="Liberation Sans" font-size="11.44" fill="#fff" text-anchor="middle" textLength="20.12" lengthAdjust="spacingAndGlyphs">LYR</text>
<text x="373.32" y="798.9" font-family="Liberation Sans" font-size="11.44" fill="#fff" text-anchor="middle" textLength="20.04" lengthAdjust="spacingAndGlyphs">JMC</text>
<text x="559.42" y="798.9" font-family="Liberation Sans" font-size="11.44" fill="#fff" text-anchor="middle" textLength="16.52" lengthAdjust="spacingAndGlyphs">JPE</text>
<text x="671.24" y="798.9" font-family="Liberation Sans" font-size="11.44" fill="#fff" text-anchor="middle" textLength="21.81" lengthAdjust="spacingAndGlyphs">PAU</text>
<text x="773.81" y="798.9" font-family="Liberation Sans" font-size="11.44" fill="#fff" text-anchor="middle" textLength="18.65" lengthAdjust="spacingAndGlyphs">NIA</text>
<text x="1049.29" y="798.9" font-family="Liberation Sans" font-size="11.44" fill="#fff" text-anchor="middle" textLength="20.84" lengthAdjust="spacingAndGlyphs">STA</text>
<text x="1206.02" y="798.9" font-family="Liberation Sans" font-size="11.44" fill="#fff" text-anchor="middle" textLength="25.08" lengthAdjust="spacingAndGlyphs">NOO</text>
<text x="1353.52" y="798.9" font-family="Liberation Sans" font-size="11.44" fill="#fff" text-anchor="middle" textLength="25.36" lengthAdjust="spacingAndGlyphs">COM</text>
<text x="1470.26" y="798.9" font-family="Liberation Sans" font-size="11.44" fill="#fff" text-anchor="middle" textLength="23.16" lengthAdjust="spacingAndGlyphs">NCC</text>
<text x="1564.39" y="798.9" font-family="Liberation Sans" font-size="11.44" fill="#fff" text-anchor="middle" textLength="21.35" lengthAdjust="spacingAndGlyphs">FED</text>
<text x="206" y="782.8" font-family="Liberation Sans" font-size="11.44" fill="#fff" text-anchor="middle" textLength="18.69" lengthAdjust="spacingAndGlyphs">HVI</text>
<text x="412.59" y="782.8" font-family="Liberation Sans" font-size="11.44" fill="#fff" text-anchor="middle" textLength="18.08" lengthAdjust="spacingAndGlyphs">ARI</text>
<text x="529.84" y="782.8" font-family="Liberation Sans" font-size="11.44" fill="#fff" text-anchor="middle" textLength="21.8" lengthAdjust="spacingAndGlyphs">SZC</text>
<text x="618.48" y="782.8" font-family="Liberation Sans" font-size="11.44" fill="#fff" text-anchor="middle" textLength="21.44" lengthAdjust="spacingAndGlyphs">CAP</text>
<text x="818.12" y="782.8" font-family="Liberation Sans" font-size="11.44" fill="#fff" text-anchor="middle" textLength="22.81" lengthAdjust="spacingAndGlyphs">NUE</text>
<text x="960.98" y="782.8" font-family="Liberation Sans" font-size="11.44" fill="#fff" text-anchor="middle" textLength="22.64" lengthAdjust="spacingAndGlyphs">OCT</text>
<text x="1059.53" y="782.8" font-family="Liberation Sans" font-size="11.44" fill="#fff" text-anchor="middle" textLength="19.19" lengthAdjust="spacingAndGlyphs">ORI</text>
<text x="1186.51" y="782.8" font-family="Liberation Sans" font-size="11.44" fill="#fff" text-anchor="middle" textLength="25.21" lengthAdjust="spacingAndGlyphs">AMO</text>
<text x="1254.96" y="782.8" font-family="Liberation Sans" font-size="11.44" fill="#fff" text-anchor="middle" textLength="22.37" lengthAdjust="spacingAndGlyphs">DPC</text>
<text x="1329.57" y="782.8" font-family="Liberation Sans" font-size="11.44" fill="#fff" text-anchor="middle" textLength="17.97" lengthAdjust="spacingAndGlyphs">XVI</text>
<text x="1407.49" y="782.8" font-family="Liberation Sans" font-size="11.44" fill="#fff" text-anchor="middle" textLength="23.79" lengthAdjust="spacingAndGlyphs">QUA</text>
<text x="1560.09" y="782.8" font-family="Liberation Sans" font-size="11.44" fill="#fff" text-anchor="middle" textLength="22.86" lengthAdjust="spacingAndGlyphs">AAN</text>
<text x="353.3" y="765.9" font-family="Liberation Sans" font-size="11.44" fill="#fff" text-anchor="middle" textLength="22.11" lengthAdjust="spacingAndGlyphs">TAH</text>
<text x="431.72" y="765.9" font-family="Liberation Sans" font-size="11.44" fill="#fff" text-anchor="middle" textLength="17.4" lengthAdjust="spacingAndGlyphs">JEA</text>
<text x="481.66" y="765.9" font-family="Liberation Sans" font-size="11.44" fill="#fff" text-anchor="middle" textLength="12.88" lengthAdjust="spacingAndGlyphs">JIP</text>
<text x="538.67" y="765.9" font-family="Liberation Sans" font-size="11.44" fill="#fff" text-anchor="middle" textLength="19.88" lengthAdjust="spacingAndGlyphs">PPS</text>
<text x="578.81" y="765.9" font-family="Liberation Sans" font-size="11.44" fill="#fff" text-anchor="middle" textLength="21.8" lengthAdjust="spacingAndGlyphs">ZCS</text>
<text x="632.6" y="765.9" font-family="Liberation Sans" font-size="11.44" fill="#fff" text-anchor="middle" textLength="24.19" lengthAdjust="spacingAndGlyphs">GDR</text>
<text x="970.81" y="765.9" font-family="Liberation Sans" font-size="11.44" fill="#fff" text-anchor="middle" textLength="23.21" lengthAdjust="spacingAndGlyphs">DRA</text>
<text x="1073.1" y="765.9" font-family="Liberation Sans" font-size="11.44" fill="#fff" text-anchor="middle" textLength="23.24" lengthAdjust="spacingAndGlyphs">LUM</text>
<text x="1112.84" y="765.9" font-family="Liberation Sans" font-size="11.44" fill="#fff" text-anchor="middle" textLength="21.92" lengthAdjust="spacingAndGlyphs">RPU</text>
<text x="1177.31" y="765.9" font-family="Liberation Sans" font-size="11.44" fill="#fff" text-anchor="middle" textLength="22.11" lengthAdjust="spacingAndGlyphs">THA</text>
<text x="1259.34" y="765.9" font-family="Liberation Sans" font-size="11.44" fill="#fff" text-anchor="middle" textLength="21.27" lengthAdjust="spacingAndGlyphs">PSU</text>
<text x="1471.02" y="765.9" font-family="Liberation Sans" font-size="11.44" fill="#fff" text-anchor="middle" textLength="22.35" lengthAdjust="spacingAndGlyphs">XCB</text>
<text x="431.46" y="749.5" font-family="Liberation Sans" font-size="11.44" fill="#fff" text-anchor="middle" textLength="18.23" lengthAdjust="spacingAndGlyphs">IRC</text>
<text x="544.53" y="749.5" font-family="Liberation Sans" font-size="11.44" fill="#fff" text-anchor="middle" textLength="23.01" lengthAdjust="spacingAndGlyphs">CAN</text>
<text x="578" y="749.5" font-family="Liberation Sans" font-size="11.44" fill="#fff" text-anchor="middle" textLength="21.68" lengthAdjust="spacingAndGlyphs">FAN</text>
<text x="680.63" y="749.5" font-family="Liberation Sans" font-size="11.44" fill="#fff" text-anchor="middle" textLength="20.84" lengthAdjust="spacingAndGlyphs">PER</text>
<text x="1049.74" y="749.5" font-family="Liberation Sans" font-size="11.44" fill="#fff" text-anchor="middle" textLength="21.53" lengthAdjust="spacingAndGlyphs">CTA</text>
<text x="1265.04" y="749.5" font-family="Liberation Sans" font-size="11.44" fill="#fff" text-anchor="middle" textLength="23.03" lengthAdjust="spacingAndGlyphs">HYD</text>
<text x="1481.67" y="749.5" font-family="Liberation Sans" font-size="11.44" fill="#fff" text-anchor="middle" textLength="24.62" lengthAdjust="spacingAndGlyphs">XUM</text>
<text x="441.35" y="732.75" font-family="Liberation Sans" font-size="11.44" fill="#fff" text-anchor="middle" textLength="23.55" lengthAdjust="spacingAndGlyphs">COR</text>
<text x="657.69" y="732.75" font-family="Liberation Sans" font-size="11.44" fill="#fff" text-anchor="middle" textLength="22.56" lengthAdjust="spacingAndGlyphs">SDA</text>
<text x="1049" y="732.75" font-family="Liberation Sans" font-size="11.44" fill="#fff" text-anchor="middle" textLength="18.52" lengthAdjust="spacingAndGlyphs">LMI</text>
<text x="1166.02" y="732.75" font-family="Liberation Sans" font-size="11.44" fill="#fff" text-anchor="middle" textLength="21.34" lengthAdjust="spacingAndGlyphs">LEO</text>
<text x="1274.06" y="732.75" font-family="Liberation Sans" font-size="11.44" fill="#fff" text-anchor="middle" textLength="21.54" lengthAdjust="spacingAndGlyphs">EHY</text>
<text x="1500.21" y="732.75" font-family="Liberation Sans" font-size="11.44" fill="#fff" text-anchor="middle" textLength="21.75" lengthAdjust="spacingAndGlyphs">ECV</text>
<text x="604.07" y="716.8" font-family="Liberation Sans" font-size="11.44" fill="#fff" text-anchor="middle" textLength="17.97" lengthAdjust="spacingAndGlyphs">JXA</text>
<text x="715.91" y="716.8" font-family="Liberation Sans" font-size="11.44" fill="#fff" text-anchor="middle" textLength="22.99" lengthAdjust="spacingAndGlyphs">KCG</text>
<text x="1156.98" y="716.8" font-family="Liberation Sans" font-size="11.44" fill="#fff" text-anchor="middle" textLength="23.78" lengthAdjust="spacingAndGlyphs">AND</text>
<text x="1274.59" y="716.8" font-family="Liberation Sans" font-size="11.44" fill="#fff" text-anchor="middle" textLength="24.02" lengthAdjust="spacingAndGlyphs">DAD</text>
<text x="666.5" y="700.6" font-family="Liberation Sans" font-size="11.44" fill="#fff" text-anchor="middle" textLength="17.51" lengthAdjust="spacingAndGlyphs">ERI</text>
<text x="1108.26" y="700.6" font-family="Liberation Sans" font-size="11.44" fill="#fff" text-anchor="middle" textLength="21.19" lengthAdjust="spacingAndGlyphs">SLD</text>
<text x="1211.2" y="700.6" font-family="Liberation Sans" font-size="11.44" fill="#fff" text-anchor="middle" textLength="22.86" lengthAdjust="spacingAndGlyphs">ORS</text>
<text x="1300.22" y="700.6" font-family="Liberation Sans" font-size="11.44" fill="#fff" text-anchor="middle" textLength="24.51" lengthAdjust="spacingAndGlyphs">GEM</text>
<text x="1122.9" y="683.8" font-family="Liberation Sans" font-size="11.44" fill="#fff" text-anchor="middle" textLength="24.31" lengthAdjust="spacingAndGlyphs">KUM</text>
<g stroke="#ff0000" stroke-width="1.39" stroke-dasharray="5.14 2.22">
<line x1="1248.6" y1="842.5" x2="1248.6" y2="641.5"/>
<line x1="1250.6" y1="842.5" x2="1250.6" y2="641.5"/>
</g>
<rect x="20.5" y="641.5" width="1765" height="201" fill="none" stroke="#ffffff" stroke-width="1.05"/>
<g stroke="#ffffff" stroke-width="1.1">
<line x1="20.5" y1="842.5" x2="20.5" y2="847.4"/>
<line x1="265.64" y1="842.5" x2="265.64" y2="847.4"/>
<line x1="510.78" y1="842.5" x2="510.78" y2="847.4"/>
<line x1="755.92" y1="842.5" x2="755.92" y2="847.4"/>
<line x1="1001.06" y1="842.5" x2="1001.06" y2="847.4"/>
<line x1="1246.19" y1="842.5" x2="1246.19" y2="847.4"/>
<line x1="1491.33" y1="842.5" x2="1491.33" y2="847.4"/>
<line x1="1736.47" y1="842.5" x2="1736.47" y2="847.4"/>
</g>
<text x="20.5" y="862.2" font-family="Liberation Sans" font-size="14.73" fill="#fff" text-anchor="middle" textLength="8.84" lengthAdjust="spacingAndGlyphs">0</text>
<text x="265.64" y="862.2" font-family="Liberation Sans" font-size="14.73" fill="#fff" text-anchor="middle" textLength="17.69" lengthAdjust="spacingAndGlyphs">50</text>
<text x="510.78" y="862.2" font-family="Liberation Sans" font-size="14.73" fill="#fff" text-anchor="middle" textLength="26.53" lengthAdjust="spacingAndGlyphs">100</text>
<text x="755.92" y="862.2" font-family="Liberation Sans" font-size="14.73" fill="#fff" text-anchor="middle" textLength="26.53" lengthAdjust="spacingAndGlyphs">150</text>
<text x="1001.06" y="862.2" font-family="Liberation Sans" font-size="14.73" fill="#fff" text-anchor="middle" textLength="26.53" lengthAdjust="spacingAndGlyphs">200</text>
<text x="1246.19" y="862.2" font-family="Liberation Sans" font-size="14.73" fill="#fff" text-anchor="middle" textLength="26.53" lengthAdjust="spacingAndGlyphs">250</text>
<text x="1491.33" y="862.2" font-family="Liberation Sans" font-size="14.73" fill="#fff" text-anchor="middle" textLength="26.53" lengthAdjust="spacingAndGlyphs">300</text>
<text x="1736.47" y="862.2" font-family="Liberation Sans" font-size="14.73" fill="#fff" text-anchor="middle" textLength="26.53" lengthAdjust="spacingAndGlyphs">350</text>
<text x="902.6" y="881.7" font-family="Liberation Sans" font-size="14.73" fill="#fff" text-anchor="middle" textLength="146.8" lengthAdjust="spacingAndGlyphs">Solar longitude (deg)</text></svg></body></html>
